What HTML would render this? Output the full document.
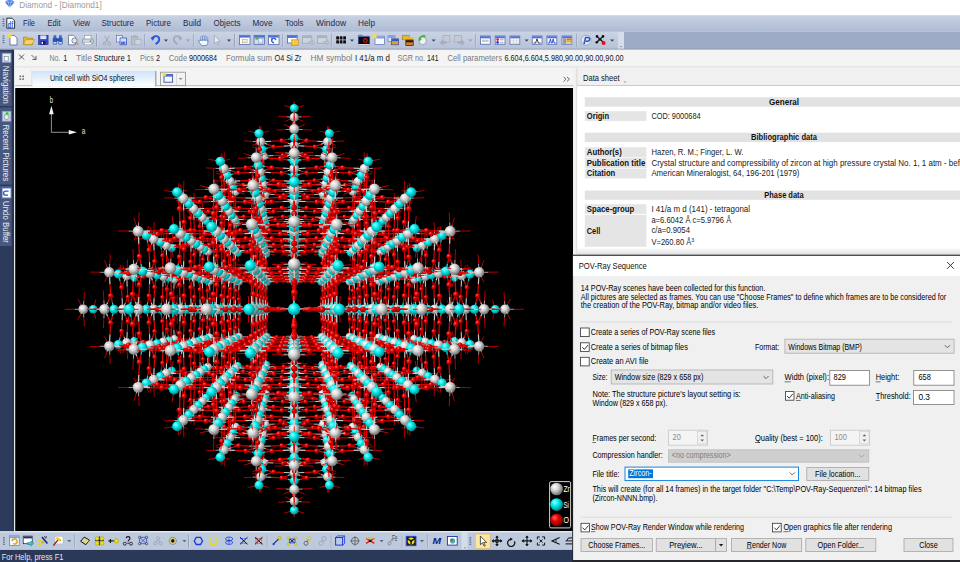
<!DOCTYPE html><html><head><meta charset="utf-8"><title>Diamond - [Diamond1]</title><style>html,body{margin:0;padding:0;background:#fff;overflow:hidden}svg{display:block}text{font-family:"Liberation Sans",sans-serif;font-size:8.7px;white-space:pre}</style></head><body>
<svg width="960" height="562" viewBox="0 0 960 562">
<defs>
<linearGradient id="mb" x1="0" y1="0" x2="0" y2="1"><stop offset="0" stop-color="#c8d2e3"/><stop offset="1" stop-color="#aebbd2"/></linearGradient>
<linearGradient id="tb" x1="0" y1="0" x2="0" y2="1"><stop offset="0" stop-color="#cad3e4"/><stop offset="1" stop-color="#b6c2d8"/></linearGradient>
<linearGradient id="tab" x1="0" y1="0" x2="0" y2="1"><stop offset="0" stop-color="#cfe3fa"/><stop offset="1" stop-color="#fdfeff"/></linearGradient>
<radialGradient id="gZ" cx=".4" cy=".38" r=".62" fx=".34" fy=".3"><stop offset="0" stop-color="#fff"/><stop offset=".45" stop-color="#d6d6d6"/><stop offset="1" stop-color="#6e6e6e"/></radialGradient>
<radialGradient id="gS" cx=".4" cy=".38" r=".62" fx=".34" fy=".3"><stop offset="0" stop-color="#9ff"/><stop offset=".45" stop-color="#0ee"/><stop offset="1" stop-color="#088"/></radialGradient>
<radialGradient id="gO" cx=".4" cy=".38" r=".62" fx=".34" fy=".3"><stop offset="0" stop-color="#f66"/><stop offset=".45" stop-color="#e80000"/><stop offset="1" stop-color="#700"/></radialGradient>
<linearGradient id="shd" x1="0" y1="0" x2="0" y2="1"><stop offset="0" stop-color="#000" stop-opacity="0"/><stop offset="1" stop-color="#000" stop-opacity=".13"/></linearGradient>
<clipPath id="pic"><rect x="15.2" y="88" width="557.8" height="443"/></clipPath>
</defs>
<rect x="0" y="0" width="960" height="562" fill="#fff"/>
<rect x="0" y="15.2" width="960" height="16.6" fill="url(#mb)"/>
<rect x="0" y="31.8" width="960" height="17.4" fill="#9dabc6"/>
<rect x="0" y="31.8" width="618" height="17.4" fill="url(#tb)"/>
<rect x="618" y="31.8" width="6" height="17.2" fill="#d6ddea"/>
<rect x="0" y="48.7" width="960" height="0.8" fill="#8f97a8"/>
<rect x="0" y="49.5" width="960" height="0.8" fill="#b9bcc4"/>
<rect x="0" y="50.2" width="960" height="36" fill="#f0f0f0"/>
<rect x="0" y="49.7" width="14" height="482" fill="#2c3a5c"/>
<rect x="0" y="51.5" width="11.8" height="54.5" fill="#46587f"/>
<rect x="0" y="107.5" width="11.8" height="77" fill="#46587f"/>
<rect x="0" y="186" width="11.8" height="60" fill="#46587f"/>
<rect x="11.8" y="49.7" width="2.2" height="482" fill="#27334f"/>
<rect x="14" y="49.7" width="1.3" height="482" fill="#e4e7ec"/>
<rect x="15.3" y="50.3" width="945" height="16.3" fill="#f4f4f4"/>
<rect x="15" y="66.6" width="945" height="1" fill="#dadada"/>
<rect x="15" y="67.6" width="945" height="0.8" fill="#fafafa"/>
<rect x="15.2" y="88" width="557.8" height="443" fill="#000"/>
<rect x="573" y="68" width="4" height="188" fill="#f0f0f0"/>
<rect x="576.5" y="68.4" width="0.9" height="187" fill="#d4d4d4"/>
<rect x="577.4" y="85.6" width="383" height="170" fill="#fff"/>
<rect x="577" y="85" width="383" height="0.9" fill="#c6c6c6"/>
<rect x="0" y="531.2" width="960" height="1.2" fill="#dfe5ee"/>
<rect x="0" y="532.3" width="960" height="17.6" fill="#bdc9dd"/>
<rect x="461.5" y="532.3" width="6" height="17.6" fill="#d6ddea"/>
<rect x="0" y="549.9" width="960" height="12.5" fill="#2b3959"/>
<g clip-path="url(#pic)" fill="none"><path stroke="#dc0000" stroke-width=".8" d="M294.2 312.8l0 3.9M294.2 305.8l0-3.9"/>
<path stroke="#0dd" stroke-width=".8" d="M294.2 311.7l0 1.1M294.2 306.9l0-1.1"/>
<path stroke="#dc0000" stroke-width=".8" d="M267.8 312.9l.3 3.9M267.8 305.7l.3-3.9M320.6 312.9l-.3 3.9M320.6 305.7l-.3-3.9"/>
<path stroke="#0dd" stroke-width=".9" d="M291.8 309.3l-2.5 0M296.6 309.3l2.5 0"/>
<g fill="url(#gS)"><circle cx="294.2" cy="309.3" r="3.3"/></g>
<path stroke="#e80000" stroke-width=".9" d="M289.4 309.3l-3.6 0M299 309.3l3.6 0M276 309.3l6.8 0M312.4 309.3l-6.8 0"/>
<path stroke="#dc0000" stroke-width=".8" d="M297.8 335.8l4-.1M290.6 335.8l-4-.1M297.8 282.8l4 .1M290.6 282.8l-4 .1M261.5 309.3l-6.9 0M326.9 309.3l6.9 0"/>
<path stroke="#c8c8c8" stroke-width=".8" d="M267.7 311.2l.1 1.7M267.7 307.4l.1-1.7M320.7 311.2l-.1 1.7M320.7 307.4l-.1-1.7M264.1 309.3l-2.7 0M324.3 309.3l2.7 0"/>
<path stroke="#0dd" stroke-width=".8" d="M296.6 335.8l1.2 0M291.8 335.8l-1.2 0M296.6 282.8l1.2 0M291.8 282.8l-1.2 0"/>
<path stroke="#c8c8c8" stroke-width=".9" d="M271.1 309.3l5 0M317.3 309.3l-5 0"/>
<g fill="url(#gO)"><circle cx="284.4" cy="309.3" r="1.9"/><circle cx="304" cy="309.3" r="1.9"/></g>
<path stroke="#c8c8c8" stroke-width=".8" d="M267.5 305.8l0-2.7M267.5 312.8l0 2.7M320.9 305.8l0-2.7M320.9 312.8l0 2.7M238.2 309.3l-1.5 0M242.1 309.3l1.9 0M292.3 363.3l-1.7-.2M296.1 363.3l1.7-.2M292.3 255.3l-1.7 .2M296.1 255.3l1.7 .2M346.3 309.3l-1.9 0M350.2 309.3l1.5 0"/>
<path stroke="#e80000" stroke-width=".9" d="M289.3 309.3l-3.9 0M299.1 309.3l3.9 0M294.2 341l0 3.8M294.2 331.2l0-3.6M294.2 287.4l0 3.6M294.2 277.6l0-3.8"/>
<path stroke="#dc0000" stroke-width=".8" d="M267.5 303.1l-.1-7M267.5 315.5l-.1 7M320.9 303.1l.1-7M320.9 315.5l.1 7M236.8 309.3l-3.5 0M244 309.3l4.5 0M290.6 363.1l-4-.5M297.8 363.1l4-.5M290.6 255.5l-4 .5M297.8 255.5l4 .5M344.4 309.3l-4.5 0M351.6 309.3l3.5 0M267.2 339.9l.2 3.9M267.2 332.7l.2-4.2M267.2 285.9l.2 4.2M267.2 278.7l.2-3.9M321.2 339.9l-.2 3.9M321.2 332.7l-.2-4.2M321.2 285.9l-.2 4.2M321.2 278.7l-.2-3.9"/>
<path stroke="#0dd" stroke-width=".9" d="M294.2 338.5l0 2.6M294.2 333.6l0-2.4M294.2 285l0 2.4M294.2 280.1l0-2.6"/>
<path stroke="#c8c8c8" stroke-width=".9" d="M269.3 309.3l2.9 0M265.5 309.3l-3.3 0M322.9 309.3l3.3 0M319.1 309.3l-2.9 0M292.3 309.3l-3 0M296.1 309.3l3 0"/>
<g fill="url(#gS)"><circle cx="294.2" cy="335.9" r="3.4"/><circle cx="294.2" cy="282.7" r="3.4"/></g>
<g fill="url(#gZ)"><circle cx="267.6" cy="309.3" r="3.7"/><circle cx="320.8" cy="309.3" r="3.7"/></g>
<path stroke="#0dd" stroke-width=".8" d="M267.1 338.8l0 1.1M267.1 333.9l0-1.2M267.1 284.7l0 1.2M267.1 279.8l0-1.1M321.3 338.8l0 1.1M321.3 333.9l0-1.2M321.3 284.7l0 1.2M321.3 279.8l0-1.1"/>
<path stroke="#e80000" stroke-width=".9" d="M294.2 354.9l0-7M294.2 300.7l0-6.8M294.2 317.9l0 6.8M294.2 263.7l0 7M272.2 309.3l3.9 0M262.3 309.3l-4.4 0M326.1 309.3l4.4 0M316.2 309.3l-3.9 0M294.2 341.7l0 3.7M294.2 331.6l0-4.3M294.2 287l0 4.3M294.2 276.9l0-3.7M248.4 309.3l6.8 0M285.6 309.3l-7 0M302.8 309.3l7 0M340 309.3l-6.8 0"/>
<path stroke="#dc0000" stroke-width=".8" d="M240 303l.1-7M240 315.6l.1 7M294.2 369.8l0 6.9M294.2 248.8l0-6.9M348.4 303l-.1-7M348.4 315.6l-.1 7M233.5 309.3l-7.3 0M287.9 363.7l-7.1 .1M300.5 363.7l7.1 .1M287.9 254.9l-7.1-.1M300.5 254.9l7.1-.1M354.9 309.3l7.3 0M239.4 340.4l.6 3.8M239.4 333l.6-4.4M239.4 285.6l.6 4.4M239.4 278.2l.6-3.8M294.2 395.3l0 3.3M294.2 387.9l0-4.9M294.2 230.7l0 4.9M294.2 223.3l0-3.3M349 340.4l-.6 3.8M349 333l-.6-4.4M349 285.6l-.6 4.4M349 278.2l-.6-3.8"/>
<path stroke="#c8c8c8" stroke-width=".9" d="M294.2 360l0-5.1M294.2 305.8l0-5M294.2 312.8l0 5M294.2 258.6l0 5.1M243.4 309.3l5 0M290.7 309.3l-5.1 0M297.7 309.3l5.1 0M345 309.3l-5 0"/>
<path stroke="#c8c8c8" stroke-width=".8" d="M240 305.8l0-2.7M240 312.8l0 2.7M294.2 367.1l0 2.7M294.2 251.5l0-2.7M348.4 305.8l0-2.7M348.4 312.8l0 2.7M236.3 309.3l-2.8 0M290.7 363.6l-2.8 0M297.7 363.6l2.8 0M290.7 255l-2.8 0M297.7 255l2.8 0M352.1 309.3l2.8 0"/>
<path stroke="#0dd" stroke-width=".9" d="M264.5 336.5l-2.6 .1M269.4 336.5l2.5 .1M264.5 282.1l-2.6-.1M269.4 282.1l2.5-.1M319 336.5l-2.5 .1M323.9 336.5l2.6 .1M319 282.1l-2.5-.1M323.9 282.1l2.6-.1"/>
<g fill="url(#gO)"><circle cx="294.2" cy="346.2" r="1.9"/><circle cx="294.2" cy="292.2" r="1.9"/><circle cx="294.2" cy="326.4" r="1.9"/><circle cx="294.2" cy="272.4" r="1.9"/><circle cx="277" cy="309.3" r="1.9"/><circle cx="331.5" cy="309.3" r="1.9"/><circle cx="256.9" cy="309.3" r="1.9"/><circle cx="311.4" cy="309.3" r="1.9"/></g>
<g fill="url(#gS)"><circle cx="267.1" cy="336.4" r="3.5"/><circle cx="267.1" cy="282.2" r="3.5"/><circle cx="321.3" cy="336.4" r="3.5"/><circle cx="321.3" cy="282.2" r="3.5"/></g>
<g fill="url(#gZ)"><circle cx="239.9" cy="309.3" r="3.8"/><circle cx="294.2" cy="363.6" r="3.8"/><circle cx="294.2" cy="309.3" r="3.8"/><circle cx="294.2" cy="255" r="3.8"/><circle cx="348.5" cy="309.3" r="3.8"/></g>
<path stroke="#c8c8c8" stroke-width=".9" d="M239.7 311.2l-.4 3.1M239.7 307.4l-.4-3.1M294.2 365.8l0 3.5M294.2 361.9l0-2.7M294.2 311.2l0 3.1M294.2 307.4l0-3.1M294.2 256.7l0 2.7M294.2 252.8l0-3.5M348.7 311.2l.4 3.1M348.7 307.4l.4-3.1M294.2 338.8l0 2.9M294.2 334.9l0-3.3M294.2 283.7l0 3.3M294.2 279.8l0-2.9M242.5 336.9l5.2 0M242.5 281.7l5.2 0M297.8 336.9l5.1 0M290.6 336.9l-5.1 0M297.8 281.7l5.1 0M290.6 281.7l-5.1 0M345.9 336.9l-5.2 0M345.9 281.7l-5.2 0"/>
<path stroke="#e80000" stroke-width=".9" d="M261.8 336.6l-3.9 .1M271.9 336.6l3.6 .1M261.8 282l-3.9-.1M271.9 282l3.6-.1M316.5 336.6l-3.6 .1M326.6 336.6l3.9 .1M316.5 282l-3.6-.1M326.6 282l3.9-.1M271.8 309.3l3.9 0M261.7 309.3l-3.6 0M326.7 309.3l3.6 0M316.6 309.3l-3.9 0M247.7 336.9l7.1-.1M247.7 281.7l7.1 .1M302.9 336.9l7-.1M285.5 336.9l-7-.1M302.9 281.7l7 .1M285.5 281.7l-7 .1M340.7 336.9l-7.1-.1M340.7 281.7l-7.1 .1M239.2 314.4l-.6 4.2M239.2 304.2l-.6-4.2M294.2 369.3l0 4.8M294.2 359.2l0-3.7M294.2 314.4l0 4.2M294.2 304.2l0-4.2M294.2 259.4l0 3.7M294.2 249.3l0-4.8M349.2 314.4l.6 4.2M349.2 304.2l.6-4.2"/>
<path stroke="#dc0000" stroke-width=".8" d="M207.9 309.3l-3.7 0M270.4 364.4l4.3-.3M263 364.4l-4-.3M270.4 254.2l4.3 .3M263 254.2l-4 .3M325.4 364.4l4-.3M318 364.4l-4.3-.3M325.4 254.2l4 .3M318 254.2l-4.3 .3M373.1 309.3l-4.6 0M215.3 309.3l4.6 0M380.5 309.3l3.7 0M232.6 336.9l-7.1-.1M232.6 281.7l-7.1 .1M300.6 392.1l7.2-.2M287.8 392.1l-7.2-.2M300.6 226.5l7.2 .2M287.8 226.5l-7.2 .2M355.8 336.9l7.1-.1M355.8 281.7l7.1 .1"/>
<path stroke="#c8c8c8" stroke-width=".8" d="M239.1 338.8l.2 1.6M239.1 334.9l.2-1.9M239.1 283.7l.2 1.9M239.1 279.8l.2-1.6M294.2 393.9l0 1.4M294.2 389.9l0-2.1M294.2 228.7l0 2.1M294.2 224.7l0-1.4M349.3 338.8l-.2 1.6M349.3 334.9l-.2-1.9M349.3 283.7l-.2 1.9M349.3 279.8l-.2-1.6M235.3 336.9l-2.7 0M235.3 281.7l-2.7 0M297.8 392.2l2.8-.1M290.6 392.2l-2.8-.1M297.8 226.4l2.8 .1M290.6 226.4l-2.8 .1M353.1 336.9l2.7 0M353.1 281.7l2.7 0"/>
<path stroke="#0dd" stroke-width=".9" d="M269.1 309.3l2.6 0M264.1 309.3l-2.4 0M324.3 309.3l2.4 0M319.3 309.3l-2.6 0"/>
<path stroke="#0dd" stroke-width=".8" d="M214 309.3l1.3 0M209 309.3l-1.1 0M269.1 364.4l1.2-.1M264.1 364.4l-1.2-.1M269.1 254.2l1.2 .1M264.1 254.2l-1.2 .1M324.3 364.4l1.2-.1M319.3 364.4l-1.2-.1M324.3 254.2l1.2 .1M319.3 254.2l-1.2 .1M379.4 309.3l1.1 0M374.4 309.3l-1.3 0"/>
<g fill="url(#gO)"><circle cx="256.6" cy="336.8" r="1.9"/><circle cx="256.6" cy="281.8" r="1.9"/><circle cx="311.6" cy="336.8" r="1.9"/><circle cx="311.6" cy="281.8" r="1.9"/><circle cx="276.8" cy="336.8" r="1.9"/><circle cx="276.8" cy="281.8" r="1.9"/><circle cx="331.8" cy="336.8" r="1.9"/><circle cx="331.8" cy="281.8" r="1.9"/></g>
<path stroke="#c8c8c8" stroke-width=".8" d="M238.8 340.6l0 2.8M238.8 278l0-2.8M294.2 396l0 2.9M294.2 222.6l0-2.9M349.6 340.6l0 2.8M349.6 278l0-2.8"/>
<path stroke="#e80000" stroke-width=".9" d="M261.2 337.2l-3.8-.3M271.5 337.2l4.4-.3M261.2 281.4l-3.8 .3M271.5 281.4l4.4 .3M316.9 337.2l-4.4-.3M327.2 337.2l3.8-.3M316.9 281.4l-4.4 .3M327.2 281.4l3.8 .3M238.7 328.3l-.1-7M238.7 290.3l-.1 7M294.2 383.8l0-6.9M294.2 328.3l0-7M294.2 345.8l0 7.1M294.2 272.8l0-7.1M294.2 290.3l0 7M294.2 234.8l0 6.9M349.7 328.3l.1-7M349.7 290.3l.1 7M210.6 314.4l-.4 3.9M210.6 304.2l-.4-3.9M266.3 370.1l-.1 4.2M266.3 359.9l-.1-3.6M266.3 314.4l-.1 3.9M266.3 304.2l-.1-3.9M266.3 258.7l-.1 3.6M266.3 248.5l-.1-4.2M322.1 370.1l.1 4.2M322.1 359.9l.1-3.6M322.1 314.4l.1 3.9M322.1 304.2l.1-3.9M322.1 258.7l.1 3.6M322.1 248.5l.1-4.2M377.8 314.4l.4 3.9M377.8 304.2l.4-3.9M238.2 314.5l.3 3.8M238.2 304.1l.3-3.8M294.2 370.5l0 3.5M294.2 360.2l0-4.1M294.2 314.5l0 3.8M294.2 304.1l0-3.8M294.2 258.4l0 4.1M294.2 248.1l0-3.5M350.2 314.5l-.3 3.8M350.2 304.1l-.3-3.8"/>
<path stroke="#c8c8c8" stroke-width=".9" d="M238.8 333.4l-.1-5.1M238.8 285.2l-.1 5.1M294.2 388.8l0-5M294.2 333.4l0-5.1M294.2 340.6l0 5.2M294.2 278l0-5.2M294.2 285.2l0 5.1M294.2 229.8l0 5M349.6 333.4l.1-5.1M349.6 285.2l.1 5.1M240.6 337.1l2.7 .2M236.6 337.1l-3.6 .2M240.6 281.5l2.7-.2M236.6 281.5l-3.6-.2M296.2 392.7l3.2 .6M292.2 392.7l-3.2 .6M296.2 337.1l3.2 .2M292.2 337.1l-3.2 .2M296.2 281.5l3.2-.2M292.2 281.5l-3.2-.2M296.2 225.9l3.2-.6M292.2 225.9l-3.2-.6M351.8 337.1l3.6 .2M347.8 337.1l-2.7 .2M351.8 281.5l3.6-.2M347.8 281.5l-2.7-.2M264.1 337.4l-2.9-.2M268.1 337.4l3.3-.2M264.1 281.2l-2.9 .2M268.1 281.2l3.3 .2M320.3 337.4l-3.3-.2M324.3 337.4l2.9-.2M320.3 281.2l-3.3 .2M324.3 281.2l2.9 .2"/>
<path stroke="#dc0000" stroke-width=".8" d="M238.8 343.4l-.1 7.3M238.8 275.2l-.1-7.3M294.2 398.9l0 7.5M294.2 219.7l0-7.5M349.6 343.4l.1 7.3M349.6 275.2l.1-7.3M206.6 337.3l-3.3-.3M214.1 337.3l5-.3M206.6 281.3l-3.3 .3M214.1 281.3l5 .3M262.5 393.2l-3.9-.9M270 393.2l4.5-.9M262.5 225.4l-3.9 .9M270 225.4l4.5 .9M318.4 393.2l-4.5-.9M325.9 393.2l3.9-.9M318.4 225.4l-4.5 .9M325.9 225.4l3.9 .9M374.3 337.3l-5-.3M381.8 337.3l3.3-.3M374.3 281.3l-5 .3M381.8 281.3l3.3 .3M238.1 369.2l.3 3.9M238.1 361.6l.3-4.5M238.1 257l.3 4.5M238.1 249.4l.3-3.9M294.2 425.4l0 3.6M294.2 417.8l0-4.9M294.2 200.8l0 4.9M294.2 193.2l0-3.6M350.3 369.2l-.3 3.9M350.3 361.6l-.3-4.5M350.3 257l-.3 4.5M350.3 249.4l-.3-3.9"/>
<path stroke="#0dd" stroke-width=".9" d="M210.9 311.8l-.3 2.6M210.9 306.8l-.3-2.6M266.4 367.4l-.1 2.8M266.4 362.3l-.1-2.4M266.4 311.8l-.1 2.6M266.4 306.8l-.1-2.6M266.4 256.3l-.1 2.4M266.4 251.2l-.1-2.8M322 367.4l.1 2.8M322 362.3l.1-2.4M322 311.8l.1 2.6M322 306.8l.1-2.6M322 256.3l.1 2.4M322 251.2l.1-2.8M377.5 311.8l.3 2.6M377.5 306.8l.3-2.6"/>
<g fill="url(#gO)"><circle cx="238.6" cy="319.5" r="1.9"/><circle cx="294.2" cy="375.2" r="1.9"/><circle cx="294.2" cy="319.5" r="1.9"/><circle cx="294.2" cy="263.9" r="1.9"/><circle cx="349.8" cy="319.5" r="1.9"/><circle cx="238.6" cy="299.1" r="1.9"/><circle cx="294.2" cy="354.7" r="1.9"/><circle cx="294.2" cy="299.1" r="1.9"/><circle cx="294.2" cy="243.4" r="1.9"/><circle cx="349.8" cy="299.1" r="1.9"/></g>
<g fill="url(#gS)"><circle cx="211.2" cy="309.3" r="3.5"/><circle cx="266.5" cy="364.6" r="3.5"/><circle cx="266.5" cy="309.3" r="3.5"/><circle cx="266.5" cy="254" r="3.5"/><circle cx="321.9" cy="364.6" r="3.5"/><circle cx="321.9" cy="309.3" r="3.5"/><circle cx="321.9" cy="254" r="3.5"/><circle cx="377.2" cy="309.3" r="3.5"/></g>
<g fill="url(#gZ)"><circle cx="238.9" cy="337" r="3.9"/><circle cx="238.9" cy="281.6" r="3.9"/><circle cx="294.2" cy="392.3" r="3.9"/><circle cx="294.2" cy="337" r="3.9"/><circle cx="294.2" cy="281.6" r="3.9"/><circle cx="294.2" cy="226.3" r="3.9"/><circle cx="349.5" cy="337" r="3.9"/><circle cx="349.5" cy="281.6" r="3.9"/></g>
<path stroke="#c8c8c8" stroke-width=".8" d="M208 337.4l-1.4-.1M212 337.4l2.1-.1M208 281.2l-1.4 .1M212 281.2l2.1 .1M264.1 393.5l-1.6-.4M268.1 393.5l1.9-.4M264.1 225.1l-1.6 .4M268.1 225.1l1.9 .4M320.3 393.5l-1.9-.4M324.3 393.5l1.6-.4M320.3 225.1l-1.9 .4M324.3 225.1l1.6 .4M376.4 337.4l-2.1-.1M380.4 337.4l1.4-.1M376.4 281.2l-2.1 .1M380.4 281.2l1.4 .1M209.7 341.2l.1 2.8M209.7 277.4l.1-2.8M266 397.5l0 2.8M266 221.1l0-2.8M322.4 397.5l0 2.8M322.4 221.1l0-2.8M378.7 341.2l-.1 2.8M378.7 277.4l-.1-2.8M205.8 337.5l-2.9 0M205.8 281.1l-2.9 0M262.3 394l-2.9 .1M262.3 224.6l-2.9-.1M326.1 394l2.9 .1M326.1 224.6l2.9-.1M382.6 337.5l2.9 0M382.6 281.1l2.9 0"/>
<path stroke="#0dd" stroke-width=".9" d="M238 311.9l.2 2.6M238 306.7l.2-2.6M294.2 368.1l0 2.4M294.2 363l0-2.8M294.2 311.9l0 2.6M294.2 306.7l0-2.6M294.2 255.6l0 2.8M294.2 250.5l0-2.4M350.4 311.9l-.2 2.6M350.4 306.7l-.2-2.6M235 365.9l-2.9 .2M240.2 365.9l2.4 .2M235 309.3l-2.9 0M240.2 309.3l2.4 0M235 252.7l-2.9-.2M240.2 252.7l2.4-.2M291.6 422.6l-2.7 .4M296.8 422.6l2.7 .4M291.6 365.9l-2.7 .2M296.8 365.9l2.7 .2M291.6 309.3l-2.7 0M296.8 309.3l2.7 0M291.6 252.7l-2.7-.2M296.8 252.7l2.7-.2M291.6 196l-2.7-.4M296.8 196l2.7-.4M348.2 365.9l-2.4 .2M353.4 365.9l2.9 .2M348.2 309.3l-2.4 0M353.4 309.3l2.9 0M348.2 252.7l-2.4-.2M353.4 252.7l2.9-.2"/>
<path stroke="#0dd" stroke-width=".8" d="M238 368.1l.1 1.1M238 363l.1-1.3M238 255.6l.1 1.3M238 250.5l.1-1.1M294.2 424.3l0 1M294.2 419.2l0-1.4M294.2 199.4l0 1.4M294.2 194.3l0-1M350.4 368.1l-.1 1.1M350.4 363l-.1-1.3M350.4 255.6l-.1 1.3M350.4 250.5l-.1-1.1"/>
<path stroke="#e80000" stroke-width=".9" d="M209.8 328.5l.2-7.2M209.8 290.1l.2 7.2M266.1 384.8l.1-7.3M266.1 328.5l.1-7.2M266.1 346.3l.1 7.1M266.1 272.3l.1-7.1M266.1 290.1l.1 7.2M266.1 233.8l.1 7.3M322.3 384.8l-.1-7.3M322.3 328.5l-.1-7.2M322.3 346.3l-.1 7.1M322.3 272.3l-.1-7.1M322.3 290.1l-.1 7.2M322.3 233.8l-.1 7.3M378.6 328.5l-.2-7.2M378.6 290.1l-.2 7.2M243.3 337.3l3.7 .3M233 337.3l-4.9 .3M243.3 281.3l3.7-.3M233 281.3l-4.9-.3M299.4 393.3l4.3 .9M289 393.3l-4.3 .9M299.4 337.3l4.3 .3M289 337.3l-4.3 .3M299.4 281.3l4.3-.3M289 281.3l-4.3-.3M299.4 225.3l4.3-.9M289 225.3l-4.3-.9M355.4 337.3l4.9 .3M345.1 337.3l-3.7 .3M355.4 281.3l4.9-.3M345.1 281.3l-3.7-.3M209 314.5l.9 4.2M209 304.1l.9-4.2M265.8 371.4l.3 3.6M265.8 360.9l.3-4.8M265.8 314.5l.3 4.2M265.8 304.1l.3-4.2M265.8 257.7l.3 4.8M265.8 247.2l.3-3.6M322.6 371.4l-.3 3.6M322.6 360.9l-.3-4.8M322.6 314.5l-.3 4.2M322.6 304.1l-.3-4.2M322.6 257.7l-.3 4.8M322.6 247.2l-.3-3.6M379.4 314.5l-.9 4.2M379.4 304.1l-.9-4.2M218.3 337.6l7 .1M218.3 281l7-.1M274.8 394.2l7.2 .2M257 337.6l-7.3 .1M274.8 337.6l7.2 .1M257 281l-7.3-.1M274.8 281l7.2-.1M274.8 224.4l7.2-.2M313.6 394.2l-7.2 .2M313.6 337.6l-7.2 .1M331.4 337.6l7.3 .1M313.6 281l-7.2-.1M331.4 281l7.3-.1M313.6 224.4l-7.2-.2M370.1 337.6l-7 .1M370.1 281l-7-.1"/>
<path stroke="#dc0000" stroke-width=".8" d="M209.7 344l.2 7.3M209.7 274.6l.2-7.3M266 400.3l.1 7.1M266 218.3l.1-7.1M322.4 400.3l-.1 7.1M322.4 218.3l-.1-7.1M378.7 344l-.2 7.3M378.7 274.6l-.2-7.3M202.8 337.6l-7.6 .1M202.8 281l-7.6-.1M259.4 394.1l-7.5 .2M259.4 224.5l-7.5-.2M329 394.1l7.5 .2M329 224.5l7.5-.2M385.6 337.6l7.6 .1M385.6 281l7.6-.1M208.7 370.2l.9 3.7M208.7 362.5l.9-4.8M208.7 256.1l.9 4.8M208.7 248.4l.9-3.7M265.7 427.2l.3 3.1M265.7 419.5l.3-5.4M265.7 199.1l.3 5.4M265.7 191.4l.3-3.1M322.7 427.2l-.3 3.1M322.7 419.5l-.3-5.4M322.7 199.1l-.3 5.4M322.7 191.4l-.3-3.1M379.7 370.2l-.9 3.7M379.7 362.5l-.9-4.8M379.7 256.1l-.9 4.8M379.7 248.4l-.9-3.7"/>
<path stroke="#c8c8c8" stroke-width=".9" d="M209.7 333.8l.1-5.3M209.7 284.8l.1 5.3M266 390.2l0-5.4M266 333.8l0-5.3M266 341.2l0 5.2M266 277.4l0-5.2M266 284.8l0 5.3M266 228.4l0 5.4M322.4 390.2l0-5.4M322.4 333.8l0-5.3M322.4 341.2l0 5.2M322.4 277.4l0-5.2M322.4 284.8l0 5.3M322.4 228.4l0 5.4M378.7 333.8l-.1-5.3M378.7 284.8l-.1 5.3M213.1 337.5l5.1 0M213.1 281.1l5.1 0M269.6 394l5.2 .1M262.3 337.5l-5.3 0M269.6 337.5l5.2 0M262.3 281.1l-5.3 0M269.6 281.1l5.2 0M269.6 224.6l5.2-.1M318.8 394l-5.2 .1M318.8 337.5l-5.2 0M326.1 337.5l5.3 0M318.8 281.1l-5.2 0M326.1 281.1l5.3 0M318.8 224.6l-5.2-.1M375.3 337.5l-5.1 0M375.3 281.1l-5.1 0"/>
<g fill="url(#gO)"><circle cx="210" cy="319.6" r="2"/><circle cx="266.1" cy="375.7" r="2"/><circle cx="266.1" cy="319.6" r="2"/><circle cx="266.1" cy="263.5" r="2"/><circle cx="322.3" cy="375.7" r="2"/><circle cx="322.3" cy="319.6" r="2"/><circle cx="322.3" cy="263.5" r="2"/><circle cx="378.4" cy="319.6" r="2"/><circle cx="210" cy="299" r="2"/><circle cx="266.1" cy="355.1" r="2"/><circle cx="266.1" cy="299" r="2"/><circle cx="266.1" cy="242.9" r="2"/><circle cx="322.3" cy="355.1" r="2"/><circle cx="322.3" cy="299" r="2"/><circle cx="322.3" cy="242.9" r="2"/><circle cx="378.4" cy="299" r="2"/><circle cx="247.9" cy="337.7" r="2"/><circle cx="247.9" cy="280.9" r="2"/><circle cx="304.6" cy="394.4" r="2"/><circle cx="304.6" cy="337.7" r="2"/><circle cx="304.6" cy="280.9" r="2"/><circle cx="304.6" cy="224.2" r="2"/><circle cx="361.4" cy="337.7" r="2"/><circle cx="361.4" cy="280.9" r="2"/><circle cx="227" cy="337.7" r="2"/><circle cx="227" cy="280.9" r="2"/><circle cx="283.8" cy="394.4" r="2"/><circle cx="283.8" cy="337.7" r="2"/><circle cx="283.8" cy="280.9" r="2"/><circle cx="283.8" cy="224.2" r="2"/><circle cx="340.5" cy="337.7" r="2"/><circle cx="340.5" cy="280.9" r="2"/></g>
<g fill="url(#gS)"><circle cx="237.8" cy="365.7" r="3.6"/><circle cx="237.8" cy="309.3" r="3.6"/><circle cx="237.8" cy="252.9" r="3.6"/><circle cx="294.2" cy="422.2" r="3.6"/><circle cx="294.2" cy="365.7" r="3.6"/><circle cx="294.2" cy="309.3" r="3.6"/><circle cx="294.2" cy="252.9" r="3.6"/><circle cx="294.2" cy="196.4" r="3.6"/><circle cx="350.6" cy="365.7" r="3.6"/><circle cx="350.6" cy="309.3" r="3.6"/><circle cx="350.6" cy="252.9" r="3.6"/></g>
<g fill="url(#gZ)"><circle cx="209.6" cy="337.5" r="3.9"/><circle cx="209.6" cy="281.1" r="3.9"/><circle cx="266" cy="393.9" r="3.9"/><circle cx="266" cy="337.5" r="3.9"/><circle cx="266" cy="281.1" r="3.9"/><circle cx="266" cy="224.7" r="3.9"/><circle cx="322.4" cy="393.9" r="3.9"/><circle cx="322.4" cy="337.5" r="3.9"/><circle cx="322.4" cy="281.1" r="3.9"/><circle cx="322.4" cy="224.7" r="3.9"/><circle cx="378.8" cy="337.5" r="3.9"/><circle cx="378.8" cy="281.1" r="3.9"/></g>
<path stroke="#c8c8c8" stroke-width=".9" d="M209.1 339.7l-.7 3.5M209.1 335.6l-.7-3M209.1 283l-.7 3M209.1 278.9l-.7-3.5M265.8 396.4l-.2 3.9M265.8 392.3l-.2-2.6M265.8 339.7l-.2 3.5M265.8 335.6l-.2-3M265.8 283l-.2 3M265.8 278.9l-.2-3.5M265.8 226.3l-.2 2.6M265.8 222.2l-.2-3.9M322.6 396.4l.2 3.9M322.6 392.3l.2-2.6M322.6 339.7l.2 3.5M322.6 335.6l.2-3M322.6 283l.2 3M322.6 278.9l.2-3.5M322.6 226.3l.2 2.6M322.6 222.2l.2-3.9M379.3 339.7l.7 3.5M379.3 335.6l.7-3M379.3 283l.7 3M379.3 278.9l.7-3.5M208.3 311.3l.7 3.2M208.3 307.3l.7-3.2M265.6 368.6l.2 2.7M265.6 364.5l.2-3.6M265.6 311.3l.2 3.2M265.6 307.3l.2-3.2M265.6 254.1l.2 3.6M265.6 250l.2-2.7M322.8 368.6l-.2 2.7M322.8 364.5l-.2-3.6M322.8 311.3l-.2 3.2M322.8 307.3l-.2-3.2M322.8 254.1l-.2 3.6M322.8 250l-.2-2.7M380.1 311.3l-.7 3.2M380.1 307.3l-.7-3.2M211.7 366.8l5.5-.1M211.7 309.3l5.5 0M211.7 251.8l5.5 .1M269.2 424.3l5.4-.2M269.2 366.8l5.4-.1M261.7 366.8l-5.3-.1M269.2 309.3l5.4 0M261.7 309.3l-5.3 0M269.2 251.8l5.4 .1M261.7 251.8l-5.3 .1M269.2 194.3l5.4 .2M319.2 424.3l-5.4-.2M326.7 366.8l5.3-.1M319.2 366.8l-5.4-.1M326.7 309.3l5.3 0M319.2 309.3l-5.4 0M326.7 251.8l5.3 .1M319.2 251.8l-5.4 .1M319.2 194.3l-5.4 .2M376.7 366.8l-5.5-.1M376.7 309.3l-5.5 0M376.7 251.8l-5.5 .1"/>
<path stroke="#e80000" stroke-width=".9" d="M232.1 366.1l-4.2 .3M242.6 366.1l3.6 .3M232.1 309.3l-4.2 0M242.6 309.3l3.6 0M232.1 252.5l-4.2-.3M242.6 252.5l3.6-.3M289 423l-3.9 .6M299.4 423l3.9 .6M289 366.1l-3.9 .3M299.4 366.1l3.9 .3M289 309.3l-3.9 0M299.4 309.3l3.9 0M289 252.5l-3.9-.3M299.4 252.5l3.9-.3M289 195.6l-3.9-.6M299.4 195.6l3.9-.6M345.8 366.1l-3.6 .3M356.3 366.1l4.2 .3M345.8 309.3l-3.6 0M356.3 309.3l4.2 0M345.8 252.5l-3.6-.3M356.3 252.5l4.2-.3M242.3 337.9l4.2-.2M231.8 337.9l-3.6-.2M242.3 280.7l4.2 .2M231.8 280.7l-3.6 .2M299.5 395l3.9-.5M288.9 395l-3.9-.5M299.5 337.9l3.9-.2M288.9 337.9l-3.9-.2M299.5 280.7l3.9 .2M288.9 280.7l-3.9 .2M299.5 223.6l3.9 .5M288.9 223.6l-3.9 .5M356.6 337.9l3.6-.2M346.1 337.9l-4.2-.2M356.6 280.7l3.6 .2M346.1 280.7l-4.2 .2M217.2 366.7l7.5-.1M217.2 309.3l7.5 0M217.2 251.9l7.5 .1M274.6 424.1l7.3-.3M274.6 366.7l7.3-.1M256.4 366.7l-7.2-.1M274.6 309.3l7.3 0M256.4 309.3l-7.2 0M274.6 251.9l7.3 .1M256.4 251.9l-7.2 .1M274.6 194.5l7.3 .3M313.8 424.1l-7.3-.3M332 366.7l7.2-.1M313.8 366.7l-7.3-.1M332 309.3l7.2 0M313.8 309.3l-7.3 0M332 251.9l7.2 .1M313.8 251.9l-7.3 .1M313.8 194.5l-7.3 .3M371.2 366.7l-7.5-.1M371.2 309.3l-7.5 0M371.2 251.9l-7.5 .1M208.5 343.1l-.9 4.7M208.5 332.6l-.9-4.1M208.5 286l-.9 4.1M208.5 275.5l-.9-4.7M265.6 400.3l-.3 5.3M265.6 389.8l-.3-3.5M265.6 343.1l-.3 4.7M265.6 332.6l-.3-4.1M265.6 286l-.3 4.1M265.6 275.5l-.3-4.7M265.6 228.8l-.3 3.5M265.6 218.3l-.3-5.3M322.8 400.3l.3 5.3M322.8 389.8l.3-3.5M322.8 343.1l.3 4.7M322.8 332.6l.3-4.1M322.8 286l.3 4.1M322.8 275.5l.3-4.7M322.8 228.8l.3 3.5M322.8 218.3l.3-5.3M379.9 343.1l.9 4.7M379.9 332.6l.9-4.1M379.9 286l.9 4.1M379.9 275.5l.9-4.7"/>
<path stroke="#dc0000" stroke-width=".8" d="M240.8 395.2l4.6-.5M233.1 395.2l-4-.5M240.8 223.4l4.6 .5M233.1 223.4l-4 .5M355.3 395.2l4-.5M347.6 395.2l-4.6-.5M355.3 223.4l4 .5M347.6 223.4l-4.6 .5M201.4 366.7l-7.3-.1M201.4 309.3l-7.3 0M201.4 251.9l-7.3 .1M258.8 424.2l-7.4-.3M258.8 194.4l-7.4 .3M329.6 424.2l7.4-.3M329.6 194.4l7.4 .3M387 366.7l7.3-.1M387 309.3l7.3 0M387 251.9l7.3 .1"/>
<path stroke="#c8c8c8" stroke-width=".8" d="M208.3 368.6l.4 1.6M208.3 364.5l.4-2.1M208.3 254.1l.4 2.1M208.3 250l.4-1.6M265.6 425.9l.1 1.3M265.6 421.8l.1-2.3M265.6 196.8l.1 2.3M265.6 192.7l.1-1.3M322.8 425.9l-.1 1.3M322.8 421.8l-.1-2.3M322.8 196.8l-.1 2.3M322.8 192.7l-.1-1.3M380.1 368.6l-.4 1.6M380.1 364.5l-.4-2.1M380.1 254.1l-.4 2.1M380.1 250l-.4-1.6M204.2 366.8l-2.8-.1M204.2 309.3l-2.8 0M204.2 251.8l-2.8 .1M261.7 424.3l-2.9-.1M261.7 194.3l-2.9 .1M326.7 424.3l2.9-.1M326.7 194.3l2.9 .1M384.2 366.8l2.8-.1M384.2 309.3l2.8 0M384.2 251.8l2.8 .1"/>
<path stroke="#0dd" stroke-width=".9" d="M239.5 338l2.9-.1M234.2 338l-2.4-.1M239.5 280.6l2.9 .1M234.2 280.6l-2.4 .1M296.8 395.3l2.6-.3M291.6 395.3l-2.6-.3M296.8 338l2.6-.1M291.6 338l-2.6-.1M296.8 280.6l2.6 .1M291.6 280.6l-2.6 .1M296.8 223.3l2.6 .3M291.6 223.3l-2.6 .3M354.2 338l2.4-.1M348.9 338l-2.9-.1M354.2 280.6l2.4 .1M348.9 280.6l-2.9 .1"/>
<path stroke="#0dd" stroke-width=".8" d="M239.5 395.3l1.3-.1M234.2 395.3l-1.2-.1M239.5 223.3l1.3 .1M234.2 223.3l-1.2 .1M354.2 395.3l1.2-.1M348.9 395.3l-1.3-.1M354.2 223.3l1.2 .1M348.9 223.3l-1.3 .1"/>
<g fill="url(#gO)"><circle cx="226.4" cy="366.5" r="2"/><circle cx="226.4" cy="309.3" r="2"/><circle cx="226.4" cy="252.1" r="2"/><circle cx="283.7" cy="423.8" r="2"/><circle cx="283.7" cy="366.5" r="2"/><circle cx="283.7" cy="309.3" r="2"/><circle cx="283.7" cy="252.1" r="2"/><circle cx="283.7" cy="194.8" r="2"/><circle cx="340.9" cy="366.5" r="2"/><circle cx="340.9" cy="309.3" r="2"/><circle cx="340.9" cy="252.1" r="2"/><circle cx="247.5" cy="366.5" r="2"/><circle cx="247.5" cy="309.3" r="2"/><circle cx="247.5" cy="252.1" r="2"/><circle cx="304.7" cy="423.8" r="2"/><circle cx="304.7" cy="366.5" r="2"/><circle cx="304.7" cy="309.3" r="2"/><circle cx="304.7" cy="252.1" r="2"/><circle cx="304.7" cy="194.8" r="2"/><circle cx="362" cy="366.5" r="2"/><circle cx="362" cy="309.3" r="2"/><circle cx="362" cy="252.1" r="2"/></g>
<path stroke="#c8c8c8" stroke-width=".8" d="M207.8 370.7l-.1 3M207.8 247.9l-.1-3M265.4 428.3l0 3M265.4 190.3l0-3M323 428.3l0 3M323 190.3l0-3M380.6 370.7l.1 3M380.6 247.9l.1-3M205.4 367.2l-2.2 .3M205.4 251.4l-2.2-.3M383 367.2l2.2 .3M383 251.4l2.2-.3"/>
<path stroke="#e80000" stroke-width="1" d="M230.9 367.3l-3.6-.6M241.6 367.3l4.9-.6M230.9 309.3l-3.6 0M241.6 309.3l4.9 0M230.9 251.3l-3.6 .6M241.6 251.3l4.9 .6M288.9 425.3l-4.3-1.2M299.5 425.3l4.3-1.2M288.9 367.3l-4.3-.6M299.5 367.3l4.3-.6M288.9 309.3l-4.3 0M299.5 309.3l4.3 0M288.9 251.3l-4.3 .6M299.5 251.3l4.3 .6M288.9 193.3l-4.3 1.2M299.5 193.3l4.3 1.2M346.8 367.3l-4.9-.6M357.5 367.3l3.6-.6M346.8 309.3l-4.9 0M357.5 309.3l3.6 0M346.8 251.3l-4.9 .6M357.5 251.3l3.6 .6M207.6 357.9l-.2-7.2M207.6 300.2l-.2-7.4M207.6 318.4l-.2 7.4M207.6 260.7l-.2 7.2M265.3 415.6l-.1-7.1M265.3 357.9l-.1-7.2M265.3 376.1l-.1 7.5M265.3 300.2l-.1-7.4M265.3 318.4l-.1 7.4M265.3 242.5l-.1-7.5M265.3 260.7l-.1 7.2M265.3 203l-.1 7.1M323.1 415.6l.1-7.1M323.1 357.9l.1-7.2M323.1 376.1l.1 7.5M323.1 300.2l.1-7.4M323.1 318.4l.1 7.4M323.1 242.5l.1-7.5M323.1 260.7l.1 7.2M323.1 203l.1 7.1M380.8 357.9l.2-7.2M380.8 300.2l.2-7.4M380.8 318.4l.2 7.4M380.8 260.7l.2 7.2M236.2 401.6l-.3 4.5M236.2 390.9l-.3-3.5M236.2 343.6l-.3 4.2M236.2 333l-.3-3.9M236.2 285.6l-.3 3.9M236.2 275l-.3-4.2M236.2 227.7l-.3 3.5M236.2 217l-.3-4.5M294.2 401.6l0 4.5M294.2 390.9l0-3.5M294.2 343.6l0 4.2M294.2 333l0-3.9M294.2 285.6l0 3.9M294.2 275l0-4.2M294.2 227.7l0 3.5M294.2 217l0-4.5M352.2 401.6l.3 4.5M352.2 390.9l.3-3.5M352.2 343.6l.3 4.2M352.2 333l.3-3.9M352.2 285.6l.3 3.9M352.2 275l.3-4.2M352.2 227.7l.3 3.5M352.2 217l.3-4.5M206.7 343.8l.5 3.8M206.7 333.1l.5-4.1M206.7 285.5l.5 4.1M206.7 274.8l.5-3.8M265 402.1l.2 3.5M265 391.4l.2-4.4M265 343.8l.2 3.8M265 333.1l.2-4.1M265 285.5l.2 4.1M265 274.8l.2-3.8M265 227.2l.2 4.4M265 216.5l.2-3.5M323.4 402.1l-.2 3.5M323.4 391.4l-.2-4.4M323.4 343.8l-.2 3.8M323.4 333.1l-.2-4.1M323.4 285.5l-.2 4.1M323.4 274.8l-.2-3.8M323.4 227.2l-.2 4.4M323.4 216.5l-.2-3.5M381.7 343.8l-.5 3.8M381.7 333.1l-.5-4.1M381.7 285.5l-.5 4.1M381.7 274.8l-.5-3.8"/>
<path stroke="#c8c8c8" stroke-width="1" d="M207.8 363.2l-.1-5.3M207.8 305.5l-.1-5.4M207.8 313.1l-.1 5.4M207.8 255.4l-.1 5.3M265.4 420.8l0-5.2M265.4 363.2l0-5.3M265.4 370.7l0 5.5M265.4 305.5l0-5.4M265.4 313.1l0 5.4M265.4 247.9l0-5.5M265.4 255.4l0 5.3M265.4 197.8l0 5.2M323 420.8l0-5.2M323 363.2l0-5.3M323 370.7l0 5.5M323 305.5l0-5.4M323 313.1l0 5.4M323 247.9l0-5.5M323 255.4l0 5.3M323 197.8l0 5.2M380.6 363.2l.1-5.3M380.6 305.5l.1-5.4M380.6 313.1l.1 5.4M380.6 255.4l.1 5.3M209.5 367.2l2.6 .5M209.5 309.3l2.6 0M205.4 309.3l-4 0M209.5 251.4l2.6-.5M267.3 425l3.1 .9M263.2 425l-3.5 .9M267.3 367.2l3.1 .5M263.2 367.2l-3.5 .5M267.3 309.3l3.1 0M263.2 309.3l-3.5 0M267.3 251.4l3.1-.5M263.2 251.4l-3.5-.5M267.3 193.6l3.1-.9M263.2 193.6l-3.5-.9M325.2 425l3.5 .9M321.1 425l-3.1 .9M325.2 367.2l3.5 .5M321.1 367.2l-3.1 .5M325.2 309.3l3.5 0M321.1 309.3l-3.1 0M325.2 251.4l3.5-.5M321.1 251.4l-3.1-.5M325.2 193.6l3.5-.9M321.1 193.6l-3.1-.9M378.9 367.2l-2.6 .5M383 309.3l4 0M378.9 309.3l-2.6 0M378.9 251.4l-2.6-.5M233.7 367.7l-2.8-.5M237.8 367.7l3.7-.5M233.7 309.3l-2.8 0M237.8 309.3l3.7 0M233.7 250.9l-2.8 .5M237.8 250.9l3.7 .5M292.1 426.2l-3.3-.9M296.3 426.2l3.3-.9M292.1 367.7l-3.3-.5M296.3 367.7l3.3-.5M292.1 309.3l-3.3 0M296.3 309.3l3.3 0M292.1 250.9l-3.3 .5M296.3 250.9l3.3 .5M292.1 192.4l-3.3 .9M296.3 192.4l3.3 .9M350.6 367.7l-3.7-.5M354.7 367.7l2.8-.5M350.6 309.3l-3.7 0M354.7 309.3l2.8 0M350.6 250.9l-3.7 .5M354.7 250.9l2.8 .5"/>
<path stroke="#dc0000" stroke-width=".8" d="M207.7 373.7l-.2 7.7M207.7 244.9l-.2-7.7M265.4 431.3l-.1 7.8M265.4 187.3l-.1-7.8M323 431.3l.1 7.8M323 187.3l.1-7.8M380.7 373.7l.2 7.7M380.7 244.9l.2-7.7M173.9 309.3l-3.1 0M181.8 309.3l5.6 0M232.1 425.7l-3.7-1.2M239.9 425.7l5-1.2M232.1 192.9l-3.7 1.2M239.9 192.9l5 1.2M348.5 425.7l-5-1.2M356.3 425.7l3.7-1.2M348.5 192.9l-5 1.2M356.3 192.9l3.7 1.2M406.6 309.3l-5.6 0M414.5 309.3l3.1 0M206.6 400.9l.5 3.9M206.6 393l.5-4.9M206.6 225.6l.5 4.9M206.6 217.7l.5-3.9M381.8 400.9l-.5 3.9M381.8 393l-.5-4.9M381.8 225.6l-.5 4.9M381.8 217.7l-.5-3.9"/>
<path stroke="#0dd" stroke-width="1" d="M236.4 398.6l-.2 3M236.4 393.3l-.2-2.4M236.4 340.8l-.2 2.8M236.4 335.6l-.2-2.6M236.4 283l-.2 2.6M236.4 277.8l-.2-2.8M236.4 225.3l-.2 2.4M236.4 220l-.2-3M294.2 398.6l0 3M294.2 393.3l0-2.4M294.2 340.8l0 2.8M294.2 335.6l0-2.6M294.2 283l0 2.6M294.2 277.8l0-2.8M294.2 225.3l0 2.4M294.2 220l0-3M352 398.6l.2 3M352 393.3l.2-2.4M352 340.8l.2 2.8M352 335.6l.2-2.6M352 283l.2 2.6M352 277.8l.2-2.8M352 225.3l.2 2.4M352 220l.2-3"/>
<g fill="url(#gO)"><circle cx="207.4" cy="348.9" r="2"/><circle cx="207.4" cy="291" r="2"/><circle cx="265.3" cy="406.8" r="2"/><circle cx="265.3" cy="348.9" r="2"/><circle cx="265.3" cy="291" r="2"/><circle cx="265.3" cy="233.1" r="2"/><circle cx="323.1" cy="406.8" r="2"/><circle cx="323.1" cy="348.9" r="2"/><circle cx="323.1" cy="291" r="2"/><circle cx="323.1" cy="233.1" r="2"/><circle cx="381" cy="348.9" r="2"/><circle cx="381" cy="291" r="2"/><circle cx="207.4" cy="327.6" r="2"/><circle cx="207.4" cy="269.7" r="2"/><circle cx="265.3" cy="385.5" r="2"/><circle cx="265.3" cy="327.6" r="2"/><circle cx="265.3" cy="269.7" r="2"/><circle cx="265.3" cy="211.8" r="2"/><circle cx="323.1" cy="385.5" r="2"/><circle cx="323.1" cy="327.6" r="2"/><circle cx="323.1" cy="269.7" r="2"/><circle cx="323.1" cy="211.8" r="2"/><circle cx="381" cy="327.6" r="2"/><circle cx="381" cy="269.7" r="2"/></g>
<g fill="url(#gS)"><circle cx="236.6" cy="395.6" r="3.7"/><circle cx="236.6" cy="338.1" r="3.7"/><circle cx="236.6" cy="280.5" r="3.7"/><circle cx="236.6" cy="223" r="3.7"/><circle cx="294.2" cy="395.6" r="3.7"/><circle cx="294.2" cy="338.1" r="3.7"/><circle cx="294.2" cy="280.5" r="3.7"/><circle cx="294.2" cy="223" r="3.7"/><circle cx="351.8" cy="395.6" r="3.7"/><circle cx="351.8" cy="338.1" r="3.7"/><circle cx="351.8" cy="280.5" r="3.7"/><circle cx="351.8" cy="223" r="3.7"/></g>
<g fill="url(#gZ)"><circle cx="207.9" cy="366.9" r="4"/><circle cx="207.9" cy="309.3" r="4"/><circle cx="207.9" cy="251.7" r="4"/><circle cx="265.4" cy="424.4" r="4"/><circle cx="265.4" cy="366.9" r="4"/><circle cx="265.4" cy="309.3" r="4"/><circle cx="265.4" cy="251.7" r="4"/><circle cx="265.4" cy="194.2" r="4"/><circle cx="323" cy="424.4" r="4"/><circle cx="323" cy="366.9" r="4"/><circle cx="323" cy="309.3" r="4"/><circle cx="323" cy="251.7" r="4"/><circle cx="323" cy="194.2" r="4"/><circle cx="380.5" cy="366.9" r="4"/><circle cx="380.5" cy="309.3" r="4"/><circle cx="380.5" cy="251.7" r="4"/></g>
<path stroke="#c8c8c8" stroke-width=".8" d="M175.2 309.3l-1.3 0M179.4 309.3l2.4 0M233.7 426.2l-1.6-.5M237.8 426.2l2.1-.5M233.7 192.4l-1.6 .5M237.8 192.4l2.1 .5M350.6 426.2l-2.1-.5M354.7 426.2l1.6-.5M350.6 192.4l-2.1 .5M354.7 192.4l1.6 .5M409 309.3l-2.4 0M413.2 309.3l1.3 0M176.8 305.5l.1-3M176.8 313.1l.1 3M235.5 430.5l.1 2.9M235.5 188.1l.1-2.9M294.2 430.5l0 2.9M294.2 188.1l0-2.9M352.9 430.5l-.1 2.9M352.9 188.1l-.1-2.9M411.6 305.5l-.1-3M411.6 313.1l-.1 3M172.7 309.3l-3.1 0M231.5 426.9l-3 .1M231.5 191.7l-3-.1M356.9 426.9l3 .1M356.9 191.7l3-.1M415.7 309.3l3.1 0"/>
<path stroke="#0dd" stroke-width="1" d="M206.4 341.2l.3 2.6M206.4 335.9l.3-2.8M206.4 282.7l.3 2.8M206.4 277.4l.3-2.6M264.9 399.8l.1 2.4M264.9 394.4l.1-3M264.9 341.2l.1 2.6M264.9 335.9l.1-2.8M264.9 282.7l.1 2.8M264.9 277.4l.1-2.6M264.9 224.2l.1 3M264.9 218.8l.1-2.4M323.5 399.8l-.1 2.4M323.5 394.4l-.1-3M323.5 341.2l-.1 2.6M323.5 335.9l-.1-2.8M323.5 282.7l-.1 2.8M323.5 277.4l-.1-2.6M323.5 224.2l-.1 3M323.5 218.8l-.1-2.4M382 341.2l-.3 2.6M382 335.9l-.3-2.8M382 282.7l-.3 2.8M382 277.4l-.3-2.6M208.4 397.7l2.4 .3M203.1 338.8l-3.1 .1M208.4 338.8l2.4 .1M203.1 279.8l-3.1-.1M208.4 279.8l2.4-.1M208.4 220.9l2.4-.3M262 397.7l-2.9 .3M267.4 397.7l2.6 .3M262 338.8l-2.9 .1M267.4 338.8l2.6 .1M262 279.8l-2.9-.1M267.4 279.8l2.6-.1M262 220.9l-2.9-.3M267.4 220.9l2.6-.3M321 397.7l-2.6 .3M326.4 397.7l2.9 .3M321 338.8l-2.6 .1M326.4 338.8l2.9 .1M321 279.8l-2.6-.1M326.4 279.8l2.9-.1M321 220.9l-2.6-.3M326.4 220.9l2.9-.3M380 397.7l-2.4 .3M380 338.8l-2.4 .1M385.3 338.8l3.1 .1M380 279.8l-2.4-.1M385.3 279.8l3.1-.1M380 220.9l-2.4-.3"/>
<path stroke="#dc0000" stroke-width=".8" d="M203.1 367.4l-5.5 .6M203.1 251.2l-5.5-.6M385.3 367.4l5.5 .6M385.3 251.2l5.5-.6M177 302.5l.3-7.6M177 316.1l.3 7.6M235.6 433.3l.1 7.3M235.6 185.3l.1-7.3M294.2 433.3l0 7.3M294.2 185.3l0-7.3M352.8 433.3l-.1 7.3M352.8 185.3l-.1-7.3M411.4 302.5l-.3-7.6M411.4 316.1l-.3 7.6M169.6 309.3l-8 0M228.5 427l-7.9 .3M228.5 191.6l-7.9-.3M359.9 427l7.9 .3M359.9 191.6l7.9-.3M418.8 309.3l8 0M175.4 343l1.3 4.1M175.4 335l1.3-4.7M175.4 283.6l1.3 4.7M175.4 275.6l1.3-4.1M294.2 461.8l0 2.8M294.2 453.8l0-6M294.2 164.8l0 6M294.2 156.8l0-2.8M413 343l-1.3 4.1M413 335l-1.3-4.7M413 283.6l-1.3 4.7M413 275.6l-1.3-4.1"/>
<path stroke="#0dd" stroke-width=".8" d="M206.4 399.8l.2 1.1M206.4 394.4l.2-1.4M206.4 224.2l.2 1.4M206.4 218.8l.2-1.1M382 399.8l-.2 1.1M382 394.4l-.2-1.4M382 224.2l-.2 1.4M382 218.8l-.2-1.1M203.1 397.7l-1.5 .2M203.1 220.9l-1.5-.2M385.3 397.7l1.5 .2M385.3 220.9l1.5-.2"/>
<path stroke="#e80000" stroke-width="1" d="M235.6 417.2l.1-7.7M235.6 358.6l.1-7.5M235.6 377.1l.1 7.3M235.6 300l.1-7.4M235.6 318.6l.1 7.4M235.6 241.5l.1-7.3M235.6 260l.1 7.5M235.6 201.4l.1 7.7M294.2 417.2l0-7.7M294.2 358.6l0-7.5M294.2 377.1l0 7.3M294.2 300l0-7.4M294.2 318.6l0 7.4M294.2 241.5l0-7.3M294.2 260l0 7.5M294.2 201.4l0 7.7M352.8 417.2l-.1-7.7M352.8 358.6l-.1-7.5M352.8 377.1l-.1 7.3M352.8 300l-.1-7.4M352.8 318.6l-.1 7.4M352.8 241.5l-.1-7.3M352.8 260l-.1 7.5M352.8 201.4l-.1 7.7M212.1 367.6l3.5 .6M212.1 309.3l3.5 0M201.4 309.3l-5.4 0M212.1 251l3.5-.6M270.4 425.9l4.2 1.3M259.7 425.9l-4.8 1.3M270.4 367.6l4.2 .6M259.7 367.6l-4.8 .6M270.4 309.3l4.2 0M259.7 309.3l-4.8 0M270.4 251l4.2-.6M259.7 251l-4.8-.6M270.4 192.7l4.2-1.3M259.7 192.7l-4.8-1.3M328.7 425.9l4.8 1.3M318 425.9l-4.2 1.3M328.7 367.6l4.8 .6M318 367.6l-4.2 .6M328.7 309.3l4.8 0M318 309.3l-4.2 0M328.7 251l4.8-.6M318 251l-4.2-.6M328.7 192.7l4.8-1.3M318 192.7l-4.2-1.3M376.3 367.6l-3.5 .6M387 309.3l5.4 0M376.3 309.3l-3.5 0M376.3 251l-3.5-.6M235 403.5l.6 3.4M235 392.6l.6-5.3M235 344.3l.6 4M235 333.4l.6-4.7M235 285.2l.6 4.7M235 274.3l.6-4M235 226l.6 5.3M235 215.1l.6-3.4M294.2 403.5l0 3.4M294.2 392.6l0-5.3M294.2 344.3l0 4M294.2 333.4l0-4.7M294.2 285.2l0 4.7M294.2 274.3l0-4M294.2 226l0 5.3M294.2 215.1l0-3.4M353.4 403.5l-.6 3.4M353.4 392.6l-.6-5.3M353.4 344.3l-.6 4M353.4 333.4l-.6-4.7M353.4 285.2l-.6 4.7M353.4 274.3l-.6-4M353.4 226l-.6 5.3M353.4 215.1l-.6-3.4M185.7 309.3l7.3 0M244.6 427.1l7.4 .3M226 368.2l-7.7 .1M244.6 368.2l7.4 .1M226 309.3l-7.7 0M244.6 309.3l7.4 0M226 250.4l-7.7-.1M244.6 250.4l7.4-.1M244.6 191.5l7.4-.3M284.9 427.1l-7.5 .3M303.5 427.1l7.5 .3M284.9 368.2l-7.5 .1M303.5 368.2l7.5 .1M284.9 309.3l-7.5 0M303.5 309.3l7.5 0M284.9 250.4l-7.5-.1M303.5 250.4l7.5-.1M284.9 191.5l-7.5-.3M303.5 191.5l7.5-.3M343.8 427.1l-7.4 .3M343.8 368.2l-7.4 .1M362.4 368.2l7.7 .1M343.8 309.3l-7.4 0M362.4 309.3l7.7 0M343.8 250.4l-7.4-.1M362.4 250.4l7.7-.1M343.8 191.5l-7.4-.3M402.7 309.3l-7.3 0"/>
<path stroke="#c8c8c8" stroke-width="1" d="M235.5 422.8l.1-5.6M235.5 364.2l.1-5.5M235.5 371.8l.1 5.3M235.5 305.5l.1-5.4M235.5 313.1l.1 5.4M235.5 246.8l.1-5.3M235.5 254.4l.1 5.5M235.5 195.8l.1 5.6M294.2 422.8l0-5.6M294.2 364.2l0-5.5M294.2 371.8l0 5.3M294.2 305.5l0-5.4M294.2 313.1l0 5.4M294.2 246.8l0-5.3M294.2 254.4l0 5.5M294.2 195.8l0 5.6M352.9 422.8l-.1-5.6M352.9 364.2l-.1-5.5M352.9 371.8l-.1 5.3M352.9 305.5l-.1-5.4M352.9 313.1l-.1 5.4M352.9 246.8l-.1-5.3M352.9 254.4l-.1 5.5M352.9 195.8l-.1 5.6M180.4 309.3l5.3 0M239.2 426.9l5.4 .2M231.5 368.1l-5.6 .1M239.2 368.1l5.4 .1M231.5 309.3l-5.6 0M239.2 309.3l5.4 0M231.5 250.5l-5.6-.1M239.2 250.5l5.4-.1M239.2 191.7l5.4-.2M290.4 426.9l-5.5 .2M298 426.9l5.5 .2M290.4 368.1l-5.5 .1M298 368.1l5.5 .1M290.4 309.3l-5.5 0M298 309.3l5.5 0M290.4 250.5l-5.5-.1M298 250.5l5.5-.1M290.4 191.7l-5.5-.2M298 191.7l5.5-.2M349.2 426.9l-5.4 .2M349.2 368.1l-5.4 .1M356.9 368.1l5.6 .1M349.2 309.3l-5.4 0M356.9 309.3l5.6 0M349.2 250.5l-5.4-.1M356.9 250.5l5.6-.1M349.2 191.7l-5.4-.2M408 309.3l-5.3 0"/>
<g fill="url(#gO)"><circle cx="235.8" cy="407.7" r="2"/><circle cx="235.8" cy="349.3" r="2"/><circle cx="235.8" cy="290.8" r="2"/><circle cx="235.8" cy="232.4" r="2"/><circle cx="294.2" cy="407.7" r="2"/><circle cx="294.2" cy="349.3" r="2"/><circle cx="294.2" cy="290.8" r="2"/><circle cx="294.2" cy="232.4" r="2"/><circle cx="352.6" cy="407.7" r="2"/><circle cx="352.6" cy="349.3" r="2"/><circle cx="352.6" cy="290.8" r="2"/><circle cx="352.6" cy="232.4" r="2"/><circle cx="235.8" cy="386.2" r="2"/><circle cx="235.8" cy="327.8" r="2"/><circle cx="235.8" cy="269.3" r="2"/><circle cx="235.8" cy="210.9" r="2"/><circle cx="294.2" cy="386.2" r="2"/><circle cx="294.2" cy="327.8" r="2"/><circle cx="294.2" cy="269.3" r="2"/><circle cx="294.2" cy="210.9" r="2"/><circle cx="352.6" cy="386.2" r="2"/><circle cx="352.6" cy="327.8" r="2"/><circle cx="352.6" cy="269.3" r="2"/><circle cx="352.6" cy="210.9" r="2"/><circle cx="216.4" cy="368.4" r="2.1"/><circle cx="216.4" cy="309.3" r="2.1"/><circle cx="216.4" cy="250.2" r="2.1"/><circle cx="275.5" cy="427.5" r="2.1"/><circle cx="275.5" cy="368.4" r="2.1"/><circle cx="275.5" cy="309.3" r="2.1"/><circle cx="275.5" cy="250.2" r="2.1"/><circle cx="275.5" cy="191.1" r="2.1"/><circle cx="334.6" cy="427.5" r="2.1"/><circle cx="334.6" cy="368.4" r="2.1"/><circle cx="334.6" cy="309.3" r="2.1"/><circle cx="334.6" cy="250.2" r="2.1"/><circle cx="334.6" cy="191.1" r="2.1"/><circle cx="393.7" cy="309.3" r="2.1"/><circle cx="194.7" cy="309.3" r="2.1"/><circle cx="253.8" cy="427.5" r="2.1"/><circle cx="253.8" cy="368.4" r="2.1"/><circle cx="253.8" cy="309.3" r="2.1"/><circle cx="253.8" cy="250.2" r="2.1"/><circle cx="253.8" cy="191.1" r="2.1"/><circle cx="312.9" cy="427.5" r="2.1"/><circle cx="312.9" cy="368.4" r="2.1"/><circle cx="312.9" cy="309.3" r="2.1"/><circle cx="312.9" cy="250.2" r="2.1"/><circle cx="312.9" cy="191.1" r="2.1"/><circle cx="372" cy="368.4" r="2.1"/><circle cx="372" cy="309.3" r="2.1"/><circle cx="372" cy="250.2" r="2.1"/></g>
<g fill="url(#gS)"><circle cx="206.1" cy="397.4" r="3.8"/><circle cx="206.1" cy="338.7" r="3.8"/><circle cx="206.1" cy="279.9" r="3.8"/><circle cx="206.1" cy="221.2" r="3.8"/><circle cx="264.8" cy="397.4" r="3.8"/><circle cx="264.8" cy="338.7" r="3.8"/><circle cx="264.8" cy="279.9" r="3.8"/><circle cx="264.8" cy="221.2" r="3.8"/><circle cx="323.6" cy="397.4" r="3.8"/><circle cx="323.6" cy="338.7" r="3.8"/><circle cx="323.6" cy="279.9" r="3.8"/><circle cx="323.6" cy="221.2" r="3.8"/><circle cx="382.3" cy="397.4" r="3.8"/><circle cx="382.3" cy="338.7" r="3.8"/><circle cx="382.3" cy="279.9" r="3.8"/><circle cx="382.3" cy="221.2" r="3.8"/></g>
<g fill="url(#gZ)"><circle cx="176.7" cy="309.3" r="4.1"/><circle cx="235.5" cy="426.8" r="4.1"/><circle cx="235.5" cy="368" r="4.1"/><circle cx="235.5" cy="309.3" r="4.1"/><circle cx="235.5" cy="250.6" r="4.1"/><circle cx="235.5" cy="191.8" r="4.1"/><circle cx="294.2" cy="426.8" r="4.1"/><circle cx="294.2" cy="368" r="4.1"/><circle cx="294.2" cy="309.3" r="4.1"/><circle cx="294.2" cy="250.6" r="4.1"/><circle cx="294.2" cy="191.8" r="4.1"/><circle cx="352.9" cy="426.8" r="4.1"/><circle cx="352.9" cy="368" r="4.1"/><circle cx="352.9" cy="309.3" r="4.1"/><circle cx="352.9" cy="250.6" r="4.1"/><circle cx="352.9" cy="191.8" r="4.1"/><circle cx="411.7" cy="309.3" r="4.1"/></g>
<path stroke="#c8c8c8" stroke-width=".8" d="M235.2 429.5l-.3 2.4M235.2 189.1l-.3-2.4M353.2 429.5l.3 2.4M353.2 189.1l.3-2.4M174.9 341.3l.5 1.7M174.9 337l.5-2M174.9 281.6l.5 2M174.9 277.3l.5-1.7M294.2 460.6l0 1.2M294.2 456.3l0-2.6M294.2 162.3l0 2.6M294.2 158l0-1.2M413.5 341.3l-.5 1.7M413.5 337l-.5-2M413.5 281.6l-.5 2M413.5 277.3l-.5-1.7M170.5 339.3l-2.9 0M170.5 279.3l-2.9 0M298.1 459.1l3-.1M290.3 459.1l-3-.1M298.1 159.5l3 .1M290.3 159.5l-3 .1M417.9 339.3l2.9 0M417.9 279.3l2.9 0"/>
<path stroke="#dc0000" stroke-width=".8" d="M201.6 397.9l-5.1 .5M201.6 220.7l-5.1-.5M386.8 397.9l5.1 .5M386.8 220.7l5.1-.5M200.7 368.9l-3.9-.4M200.7 249.7l-3.9 .4M387.7 368.9l3.9-.4M387.7 249.7l3.9 .4M234.9 431.9l-.7 5.9M234.9 186.7l-.7-5.9M353.5 431.9l.7 5.9M353.5 186.7l.7-5.9M167.6 339.2l-7.5-.1M167.6 279.4l-7.5 .1M301.1 458.9l7.8-.4M287.3 458.9l-7.8-.4M301.1 159.7l7.8 .4M287.3 159.7l-7.8 .4M420.8 339.2l7.5-.1M420.8 279.4l7.5 .1"/>
<path stroke="#c8c8c8" stroke-width="1" d="M176.1 311.4l-1 3.4M176.1 307.2l-1-3.4M235.2 425.3l-.5-2.4M235.2 370.5l-.5 3.9M235.2 366.2l-.5-2.9M235.2 311.4l-.5 3.4M235.2 307.2l-.5-3.4M235.2 252.4l-.5 2.9M235.2 248.1l-.5-3.9M235.2 193.3l-.5 2.4M294.2 429.5l0 4.3M294.2 425.3l0-2.4M294.2 370.5l0 3.9M294.2 366.2l0-2.9M294.2 311.4l0 3.4M294.2 307.2l0-3.4M294.2 252.4l0 2.9M294.2 248.1l0-3.9M294.2 193.3l0 2.4M294.2 189.1l0-4.3M353.2 425.3l.5-2.4M353.2 370.5l.5 3.9M353.2 366.2l.5-2.9M353.2 311.4l.5 3.4M353.2 307.2l.5-3.4M353.2 252.4l.5 2.9M353.2 248.1l.5-3.9M353.2 193.3l.5 2.4M412.3 311.4l1 3.4M412.3 307.2l1-3.4M234.5 400.9l.5 2.6M234.5 396.7l.5-4M234.5 341.3l.5 3.1M234.5 337l.5-3.6M234.5 281.6l.5 3.6M234.5 277.3l.5-3.1M234.5 221.9l.5 4M234.5 217.7l.5-2.6M294.2 400.9l0 2.6M294.2 396.7l0-4M294.2 341.3l0 3.1M294.2 337l0-3.6M294.2 281.6l0 3.6M294.2 277.3l0-3.1M294.2 221.9l0 4M294.2 217.7l0-2.6M353.9 400.9l-.5 2.6M353.9 396.7l-.5-4M353.9 341.3l-.5 3.1M353.9 337l-.5-3.6M353.9 281.6l-.5 3.6M353.9 277.3l-.5-3.1M353.9 221.9l-.5 4M353.9 217.7l-.5-2.6M178.3 339.3l5.7-.1M178.3 279.3l5.7 .1M238.2 399.2l5.6-.2M230.4 399.2l-5.4-.2M238.2 339.3l5.6-.1M230.4 339.3l-5.4-.1M238.2 279.3l5.6 .1M230.4 279.3l-5.4 .1M238.2 219.4l5.6 .2M230.4 219.4l-5.4 .2M298.1 399.2l5.5-.2M290.3 399.2l-5.5-.2M298.1 339.3l5.5-.1M290.3 339.3l-5.5-.1M298.1 279.3l5.5 .1M290.3 279.3l-5.5 .1M298.1 219.4l5.5 .2M290.3 219.4l-5.5 .2M358 399.2l5.4-.2M350.2 399.2l-5.6-.2M358 339.3l5.4-.1M350.2 339.3l-5.6-.1M358 279.3l5.4 .1M350.2 279.3l-5.6 .1M358 219.4l5.4 .2M350.2 219.4l-5.6 .2M410.1 339.3l-5.7-.1M410.1 279.3l-5.7 .1"/>
<path stroke="#e80000" stroke-width="1" d="M210.9 398.1l3.6 .5M200 338.9l-4.6 .2M210.9 338.9l3.6 .2M200 279.7l-4.6-.2M210.9 279.7l3.6-.2M210.9 220.5l3.6-.5M259.2 398.1l-4.3 .5M270.1 398.1l3.9 .5M259.2 338.9l-4.3 .2M270.1 338.9l3.9 .2M259.2 279.7l-4.3-.2M270.1 279.7l3.9-.2M259.2 220.5l-4.3-.5M270.1 220.5l3.9-.5M318.3 398.1l-3.9 .5M329.2 398.1l4.3 .5M318.3 338.9l-3.9 .2M329.2 338.9l4.3 .2M318.3 279.7l-3.9-.2M329.2 279.7l4.3-.2M318.3 220.5l-3.9-.5M329.2 220.5l4.3-.5M377.5 398.1l-3.6 .5M377.5 338.9l-3.6 .2M388.4 338.9l4.6 .2M377.5 279.7l-3.6-.2M388.4 279.7l4.6-.2M377.5 220.5l-3.6-.5M210.4 368.8l4.5-.3M210.4 309.3l4.5 0M199.4 309.3l-3.5 0M210.4 249.8l4.5 .3M269.9 428.4l4.2-.7M259 428.4l-3.9-.7M269.9 368.8l4.2-.3M259 368.8l-3.9-.3M269.9 309.3l4.2 0M259 309.3l-3.9 0M269.9 249.8l4.2 .3M259 249.8l-3.9 .3M269.9 190.2l4.2 .7M259 190.2l-3.9 .7M329.4 428.4l3.9-.7M318.5 428.4l-4.2-.7M329.4 368.8l3.9-.3M318.5 368.8l-4.2-.3M329.4 309.3l3.9 0M318.5 309.3l-4.2 0M329.4 249.8l3.9 .3M318.5 249.8l-4.2 .3M329.4 190.2l3.9 .7M318.5 190.2l-4.2 .7M378 368.8l-4.5-.3M389 309.3l3.5 0M378 309.3l-4.5 0M378 249.8l-4.5 .3M184 339.2l7.8-.1M184 279.4l7.8 .1M243.8 399l7.7-.2M224.9 399l-7.4-.2M243.8 339.2l7.7-.1M224.9 339.2l-7.4-.1M243.8 279.4l7.7 .1M224.9 279.4l-7.4 .1M243.8 219.6l7.7 .2M224.9 219.6l-7.4 .2M303.6 399l7.6-.2M284.8 399l-7.6-.2M303.6 339.2l7.6-.1M284.8 339.2l-7.6-.1M303.6 279.4l7.6 .1M284.8 279.4l-7.6 .1M303.6 219.6l7.6 .2M284.8 219.6l-7.6 .2M363.5 399l7.4-.2M344.6 399l-7.7-.2M363.5 339.2l7.4-.1M344.6 339.2l-7.7-.1M363.5 279.4l7.4 .1M344.6 279.4l-7.7 .1M363.5 219.6l7.4 .2M344.6 219.6l-7.7 .2M404.4 339.2l-7.8-.1M404.4 279.4l-7.8 .1M234.7 422.9l-.7-3.3M234.7 374.3l-.7 5.2M234.7 363.4l-.7-3.9M234.7 255.2l-.7 3.9M234.7 244.3l-.7-5.2M294.2 422.9l0-3.3M294.2 374.3l0 5.2M294.2 363.4l0-3.9M294.2 255.2l0 3.9M294.2 244.3l0-5.2M353.7 422.9l.7-3.3M353.7 374.3l.7 5.2M353.7 363.4l.7-3.9M353.7 255.2l.7 3.9M353.7 244.3l.7-5.2M175.1 314.8l-1.3 4.6M175.1 303.8l-1.3-4.6M234.7 314.8l-.7 4.6M234.7 303.8l-.7-4.6M234.7 195.7l-.7 3.3M294.2 433.8l0 5.9M294.2 314.8l0 4.6M294.2 303.8l0-4.6M294.2 195.7l0 3.3M294.2 184.8l0-5.9M353.7 314.8l.7 4.6M353.7 303.8l.7-4.6M353.7 195.7l.7 3.3M413.3 314.8l1.3 4.6M413.3 303.8l1.3-4.6"/>
<path stroke="#0dd" stroke-width="1" d="M207.3 369.1l3.1-.2M207.3 309.3l3.1 0M201.8 309.3l-2.4 0M207.3 249.5l3.1 .2M267 428.8l2.9-.5M261.6 428.8l-2.6-.5M267 369.1l2.9-.2M261.6 369.1l-2.6-.2M267 309.3l2.9 0M261.6 309.3l-2.6 0M267 249.5l2.9 .2M261.6 249.5l-2.6 .2M267 189.8l2.9 .5M261.6 189.8l-2.6 .5M326.8 428.8l2.6-.5M321.4 428.8l-2.9-.5M326.8 369.1l2.6-.2M321.4 369.1l-2.9-.2M326.8 309.3l2.6 0M321.4 309.3l-2.9 0M326.8 249.5l2.6 .2M321.4 249.5l-2.9 .2M326.8 189.8l2.6 .5M321.4 189.8l-2.9 .5M381.1 369.1l-3.1-.2M386.6 309.3l2.4 0M381.1 309.3l-3.1 0M381.1 249.5l-3.1 .2"/>
<path stroke="#0dd" stroke-width=".8" d="M201.8 369.1l-1.1-.1M201.8 249.5l-1.1 .1M386.6 369.1l1.1-.1M386.6 249.5l1.1 .1"/>
<g fill="url(#gO)"><circle cx="193.8" cy="339.1" r="2.1"/><circle cx="193.8" cy="279.5" r="2.1"/><circle cx="253.4" cy="398.7" r="2.1"/><circle cx="253.4" cy="339.1" r="2.1"/><circle cx="253.4" cy="279.5" r="2.1"/><circle cx="253.4" cy="219.9" r="2.1"/><circle cx="313" cy="398.7" r="2.1"/><circle cx="313" cy="339.1" r="2.1"/><circle cx="313" cy="279.5" r="2.1"/><circle cx="313" cy="219.9" r="2.1"/><circle cx="372.7" cy="398.7" r="2.1"/><circle cx="372.7" cy="339.1" r="2.1"/><circle cx="372.7" cy="279.5" r="2.1"/><circle cx="372.7" cy="219.9" r="2.1"/><circle cx="215.7" cy="398.7" r="2.1"/><circle cx="215.7" cy="339.1" r="2.1"/><circle cx="215.7" cy="279.5" r="2.1"/><circle cx="215.7" cy="219.9" r="2.1"/><circle cx="275.4" cy="398.7" r="2.1"/><circle cx="275.4" cy="339.1" r="2.1"/><circle cx="275.4" cy="279.5" r="2.1"/><circle cx="275.4" cy="219.9" r="2.1"/><circle cx="335" cy="398.7" r="2.1"/><circle cx="335" cy="339.1" r="2.1"/><circle cx="335" cy="279.5" r="2.1"/><circle cx="335" cy="219.9" r="2.1"/><circle cx="394.6" cy="339.1" r="2.1"/><circle cx="394.6" cy="279.5" r="2.1"/></g>
<path stroke="#c8c8c8" stroke-width=".8" d="M174.1 343.2l-.1 3.1M174.1 275.4l-.1-3.1M294.2 463.3l0 3.2M294.2 155.3l0-3.2M414.3 343.2l.1 3.1M414.3 275.4l.1-3.1M171.5 339.4l-2.5 .1M171.5 279.2l-2.5-.1M416.9 339.4l2.5 .1M416.9 279.2l2.5-.1"/>
<path stroke="#e80000" stroke-width="1" d="M209.1 400l5.4-1M198 339.5l-3.4-.3M209.1 339.5l5.4-.3M198 279.1l-3.4 .3M209.1 279.1l5.4 .3M209.1 218.6l5.4 1M258.4 400l-4.1-1M269.5 400l4.8-1M258.4 339.5l-4.1-.3M269.5 339.5l4.8-.3M258.4 279.1l-4.1 .3M269.5 279.1l4.8 .3M258.4 218.6l-4.1 1M269.5 218.6l4.8 1M318.9 400l-4.8-1M330 400l4.1-1M318.9 339.5l-4.8-.3M330 339.5l4.1-.3M318.9 279.1l-4.8 .3M330 279.1l4.1 .3M318.9 218.6l-4.8 1M330 218.6l4.1 1M379.3 400l-5.4-1M379.3 339.5l-5.4-.3M390.4 339.5l3.4-.3M379.3 279.1l-5.4 .3M390.4 279.1l3.4 .3M379.3 218.6l-5.4 1M173.9 329.9l-.3-7.6M173.9 288.7l-.3 7.6M234 390l-.1-7.5M234 409l-.1 7.9M234 329.9l-.1-7.6M234 348.9l-.1 7.8M234 269.7l-.1-7.8M234 288.7l-.1 7.6M234 209.6l-.1-7.9M234 228.6l-.1 7.5M294.2 450.2l0-7.3M294.2 390l0-7.5M294.2 409l0 7.9M294.2 329.9l0-7.6M294.2 348.9l0 7.8M294.2 269.7l0-7.8M294.2 288.7l0 7.6M294.2 209.6l0-7.9M294.2 228.6l0 7.5M294.2 168.4l0 7.3M354.4 390l.1-7.5M354.4 409l.1 7.9M354.4 329.9l.1-7.6M354.4 348.9l.1 7.8M354.4 269.7l.1-7.8M354.4 288.7l.1 7.6M354.4 209.6l.1-7.9M354.4 228.6l.1 7.5M414.5 329.9l.3-7.6M414.5 288.7l.3 7.6M203.5 375.3l-.5 4.5M203.5 364.2l-.5-3.8M203.5 314.9l-.5 4.2M203.5 303.7l-.5-4.2M203.5 254.4l-.5 3.8M203.5 243.3l-.5-4.5M264 435.7l-.2 4.9M264 424.6l-.2-3.5M264 375.3l-.2 4.5M264 364.2l-.2-3.8M264 314.9l-.2 4.2M264 303.7l-.2-4.2M264 254.4l-.2 3.8M264 243.3l-.2-4.5M264 194l-.2 3.5M264 182.9l-.2-4.9M324.4 435.7l.2 4.9M324.4 424.6l.2-3.5M324.4 375.3l.2 4.5M324.4 364.2l.2-3.8M324.4 314.9l.2 4.2M324.4 303.7l.2-4.2M324.4 254.4l.2 3.8M324.4 243.3l.2-4.5M324.4 194l.2 3.5M324.4 182.9l.2-4.9M384.9 375.3l.5 4.5M384.9 364.2l.5-3.8M384.9 314.9l.5 4.2M384.9 303.7l.5-4.2M384.9 254.4l.5 3.8M384.9 243.3l.5-4.5M172.6 314.9l.7 4.1M172.6 303.7l.7-4.1M233.4 425.3l.3-4.8M233.4 375.7l.3 3.8M233.4 364.5l.3-4.4M233.4 314.9l.3 4.1M233.4 303.7l.3-4.1M233.4 254.1l.3 4.4M233.4 242.9l.3-3.8M233.4 193.3l.3 4.8M294.2 436.5l0 3.4M294.2 425.3l0-4.8M294.2 375.7l0 3.8M294.2 364.5l0-4.4M294.2 314.9l0 4.1M294.2 303.7l0-4.1M294.2 254.1l0 4.4M294.2 242.9l0-3.8M294.2 193.3l0 4.8M294.2 182.1l0-3.4M355 425.3l-.3-4.8M355 375.7l-.3 3.8M355 364.5l-.3-4.4M355 314.9l-.3 4.1M355 303.7l-.3-4.1M355 254.1l-.3 4.4M355 242.9l-.3-3.8M355 193.3l-.3 4.8M415.8 314.9l-.7 4.1M415.8 303.7l-.7-4.1"/>
<path stroke="#c8c8c8" stroke-width="1" d="M174.1 335.4l-.2-5.5M174.1 283.2l-.2 5.5M234.1 395.5l-.1-5.4M234.1 403.3l-.1 5.7M234.1 335.4l-.1-5.5M234.1 343.2l-.1 5.6M234.1 275.4l-.1-5.6M234.1 283.2l-.1 5.5M234.1 215.3l-.1-5.7M234.1 223.1l-.1 5.4M294.2 455.5l0-5.3M294.2 395.5l0-5.4M294.2 403.3l0 5.7M294.2 335.4l0-5.5M294.2 343.2l0 5.6M294.2 275.4l0-5.6M294.2 283.2l0 5.5M294.2 215.3l0-5.7M294.2 223.1l0 5.4M294.2 163.1l0 5.3M354.3 395.5l.1-5.4M354.3 403.3l.1 5.7M354.3 335.4l.1-5.5M354.3 343.2l.1 5.6M354.3 275.4l.1-5.6M354.3 283.2l.1 5.5M354.3 215.3l.1-5.7M354.3 223.1l.1 5.4M414.3 335.4l.2-5.5M414.3 283.2l.2 5.5M175.8 339.4l2.4 .3M175.8 279.2l2.4-.3M236.1 399.7l2.9 .8M231.8 399.7l-3.9 .8M236.1 339.4l2.9 .3M231.8 339.4l-3.9 .3M236.1 279.2l2.9-.3M231.8 279.2l-3.9-.3M236.1 218.9l2.9-.8M231.8 218.9l-3.9-.8M296.3 460l3.4 1.3M292.1 460l-3.4 1.3M296.3 399.7l3.4 .8M292.1 399.7l-3.4 .8M296.3 339.4l3.4 .3M292.1 339.4l-3.4 .3M296.3 279.2l3.4-.3M292.1 279.2l-3.4-.3M296.3 218.9l3.4-.8M292.1 218.9l-3.4-.8M296.3 158.6l3.4-1.3M292.1 158.6l-3.4-1.3M356.6 399.7l3.9 .8M352.3 399.7l-2.9 .8M356.6 339.4l3.9 .3M352.3 339.4l-2.9 .3M356.6 279.2l3.9-.3M352.3 279.2l-2.9-.3M356.6 218.9l3.9-.8M352.3 218.9l-2.9-.8M412.6 339.4l-2.4 .3M412.6 279.2l-2.4-.3M205 400.7l4.1-.8M200.6 339.8l-2.6-.3M205 339.8l4.1-.3M200.6 278.8l-2.6 .3M205 278.8l4.1 .3M205 217.9l4.1 .8M261.6 400.7l-3.1-.8M265.9 400.7l3.6-.8M261.6 339.8l-3.1-.3M265.9 339.8l3.6-.3M261.6 278.8l-3.1 .3M265.9 278.8l3.6 .3M261.6 217.9l-3.1 .8M265.9 217.9l3.6 .8M322.5 400.7l-3.6-.8M326.8 400.7l3.1-.8M322.5 339.8l-3.6-.3M326.8 339.8l3.1-.3M322.5 278.8l-3.6 .3M326.8 278.8l3.1 .3M322.5 217.9l-3.6 .8M326.8 217.9l3.1 .8M383.4 400.7l-4.1-.8M383.4 339.8l-4.1-.3M387.8 339.8l2.6-.3M383.4 278.8l-4.1 .3M387.8 278.8l2.6 .3M383.4 217.9l-4.1 .8"/>
<path stroke="#dc0000" stroke-width=".8" d="M174 346.3l-.3 8M174 272.3l-.3-8M294.2 466.5l0 8.3M294.2 152.1l0-8.3M414.4 346.3l.3 8M414.4 272.3l.3-8M199.1 400.3l-3.5-1M199.1 218.3l-3.5 1M259.8 460.9l-4.2-1.7M268 460.9l4.9-1.7M259.8 157.7l-4.2 1.7M268 157.7l4.9 1.7M320.4 460.9l-4.9-1.7M328.6 460.9l4.2-1.7M320.4 157.7l-4.9 1.7M328.6 157.7l4.2 1.7M389.3 400.3l3.5-1M389.3 218.3l3.5 1M172.4 374.3l.8 4.2M172.4 366.1l.8-5M172.4 252.5l.8 5M172.4 244.3l.8-4.2M233.3 435.2l.4 3.8M233.3 183.4l.4-3.8M355.1 435.2l-.4 3.8M355.1 183.4l-.4-3.8M416 374.3l-.8 4.2M416 366.1l-.8-5M416 252.5l-.8 5M416 244.3l-.8-4.2"/>
<path stroke="#0dd" stroke-width="1" d="M203.9 372.2l-.3 3.1M203.9 366.8l-.3-2.6M203.9 312l-.3 2.8M203.9 306.6l-.3-2.8M203.9 251.8l-.3 2.6M203.9 246.4l-.3-3.1M264.1 432.4l-.1 3.3M264.1 427l-.1-2.4M264.1 372.2l-.1 3.1M264.1 366.8l-.1-2.6M264.1 312l-.1 2.8M264.1 306.6l-.1-2.8M264.1 251.8l-.1 2.6M264.1 246.4l-.1-3.1M264.1 191.6l-.1 2.4M264.1 186.2l-.1-3.3M324.3 432.4l.1 3.3M324.3 427l.1-2.4M324.3 372.2l.1 3.1M324.3 366.8l.1-2.6M324.3 312l.1 2.8M324.3 306.6l.1-2.8M324.3 251.8l.1 2.6M324.3 246.4l.1-3.1M324.3 191.6l.1 2.4M324.3 186.2l.1-3.3M384.5 372.2l.3 3.1M384.5 366.8l.3-2.6M384.5 312l.3 2.8M384.5 306.6l.3-2.8M384.5 251.8l.3 2.6M384.5 246.4l.3-3.1"/>
<g fill="url(#gO)"><circle cx="173.5" cy="320.4" r="2.1"/><circle cx="233.9" cy="380.7" r="2.1"/><circle cx="233.9" cy="320.4" r="2.1"/><circle cx="233.9" cy="260.1" r="2.1"/><circle cx="233.9" cy="199.7" r="2.1"/><circle cx="294.2" cy="441.1" r="2.1"/><circle cx="294.2" cy="380.7" r="2.1"/><circle cx="294.2" cy="320.4" r="2.1"/><circle cx="294.2" cy="260.1" r="2.1"/><circle cx="294.2" cy="199.7" r="2.1"/><circle cx="354.5" cy="380.7" r="2.1"/><circle cx="354.5" cy="320.4" r="2.1"/><circle cx="354.5" cy="260.1" r="2.1"/><circle cx="354.5" cy="199.7" r="2.1"/><circle cx="414.9" cy="320.4" r="2.1"/><circle cx="173.5" cy="298.2" r="2.1"/><circle cx="233.9" cy="418.9" r="2.1"/><circle cx="233.9" cy="358.5" r="2.1"/><circle cx="233.9" cy="298.2" r="2.1"/><circle cx="233.9" cy="237.9" r="2.1"/><circle cx="294.2" cy="418.9" r="2.1"/><circle cx="294.2" cy="358.5" r="2.1"/><circle cx="294.2" cy="298.2" r="2.1"/><circle cx="294.2" cy="237.9" r="2.1"/><circle cx="294.2" cy="177.5" r="2.1"/><circle cx="354.5" cy="418.9" r="2.1"/><circle cx="354.5" cy="358.5" r="2.1"/><circle cx="354.5" cy="298.2" r="2.1"/><circle cx="354.5" cy="237.9" r="2.1"/><circle cx="414.9" cy="298.2" r="2.1"/></g>
<g fill="url(#gS)"><circle cx="204.2" cy="369.3" r="3.8"/><circle cx="204.2" cy="309.3" r="3.8"/><circle cx="204.2" cy="249.3" r="3.8"/><circle cx="264.2" cy="429.3" r="3.8"/><circle cx="264.2" cy="369.3" r="3.8"/><circle cx="264.2" cy="309.3" r="3.8"/><circle cx="264.2" cy="249.3" r="3.8"/><circle cx="264.2" cy="189.3" r="3.8"/><circle cx="324.2" cy="429.3" r="3.8"/><circle cx="324.2" cy="369.3" r="3.8"/><circle cx="324.2" cy="309.3" r="3.8"/><circle cx="324.2" cy="249.3" r="3.8"/><circle cx="324.2" cy="189.3" r="3.8"/><circle cx="384.2" cy="369.3" r="3.8"/><circle cx="384.2" cy="309.3" r="3.8"/><circle cx="384.2" cy="249.3" r="3.8"/></g>
<g fill="url(#gZ)"><circle cx="174.2" cy="339.3" r="4.2"/><circle cx="174.2" cy="279.3" r="4.2"/><circle cx="234.2" cy="399.3" r="4.2"/><circle cx="234.2" cy="339.3" r="4.2"/><circle cx="234.2" cy="279.3" r="4.2"/><circle cx="234.2" cy="219.3" r="4.2"/><circle cx="294.2" cy="459.2" r="4.2"/><circle cx="294.2" cy="399.3" r="4.2"/><circle cx="294.2" cy="339.3" r="4.2"/><circle cx="294.2" cy="279.3" r="4.2"/><circle cx="294.2" cy="219.3" r="4.2"/><circle cx="294.2" cy="159.4" r="4.2"/><circle cx="354.2" cy="399.3" r="4.2"/><circle cx="354.2" cy="339.3" r="4.2"/><circle cx="354.2" cy="279.3" r="4.2"/><circle cx="354.2" cy="219.3" r="4.2"/><circle cx="414.2" cy="339.3" r="4.2"/><circle cx="414.2" cy="279.3" r="4.2"/></g>
<path stroke="#c8c8c8" stroke-width=".8" d="M200.6 400.7l-1.5-.4M200.6 217.9l-1.5 .4M261.6 461.7l-1.8-.7M265.9 461.7l2.1-.7M261.6 156.9l-1.8 .7M265.9 156.9l2.1 .7M322.5 461.7l-2.1-.7M326.8 461.7l1.8-.7M322.5 156.9l-2.1 .7M326.8 156.9l1.8 .7M387.8 400.7l1.5-.4M387.8 217.9l1.5 .4M202.4 405.1l.1 3M202.4 213.5l.1-3M263.6 466.3l0 2.9M263.6 152.3l0-2.9M324.8 466.3l0 2.9M324.8 152.3l0-2.9M386 405.1l-.1 3M386 213.5l-.1-3M198.2 401.3l-3.2 .1M198.2 217.3l-3.2-.1M259.5 462.7l-3.1 .1M259.5 155.9l-3.1-.1M328.9 462.7l3.1 .1M328.9 155.9l3.1-.1M390.2 401.3l3.2 .1M390.2 217.3l3.2-.1"/>
<path stroke="#0dd" stroke-width="1" d="M172.1 312.1l.5 2.8M172.1 306.5l.5-2.8M233.2 428.6l.2-3.3M233.2 373.1l.2 2.6M233.2 367.6l.2-3.1M233.2 312.1l.2 2.8M233.2 306.5l.2-2.8M233.2 251l.2 3.1M233.2 245.5l.2-2.6M233.2 190l.2 3.3M294.2 434.1l0 2.3M294.2 428.6l0-3.3M294.2 373.1l0 2.6M294.2 367.6l0-3.1M294.2 312.1l0 2.8M294.2 306.5l0-2.8M294.2 251l0 3.1M294.2 245.5l0-2.6M294.2 190l0 3.3M294.2 184.5l0-2.3M355.2 428.6l-.2-3.3M355.2 373.1l-.2 2.6M355.2 367.6l-.2-3.1M355.2 312.1l-.2 2.8M355.2 306.5l-.2-2.8M355.2 251l-.2 3.1M355.2 245.5l-.2-2.6M355.2 190l-.2 3.3M416.3 312.1l-.5 2.8M416.3 306.5l-.5-2.8"/>
<path stroke="#dc0000" stroke-width=".8" d="M169 339.6l-6.1 .3M169 279l-6.1-.3M419.4 339.6l6.1 .3M419.4 279l6.1-.3M202.5 408.1l.2 7.7M202.5 210.5l.2-7.7M263.6 469.2l.1 7.6M263.6 149.4l.1-7.6M324.8 469.2l-.1 7.6M324.8 149.4l-.1-7.6M385.9 408.1l-.2 7.7M385.9 210.5l-.2-7.7M195 401.4l-8.3 .2M195 217.2l-8.3-.2M256.4 462.8l-8.1 .4M256.4 155.8l-8.1-.4M332 462.8l8.1 .4M332 155.8l8.1-.4M393.4 401.4l8.3 .2M393.4 217.2l8.3-.2M139.3 313.5l1.8 4.6M139.3 305.1l1.8-4.6M449.1 313.5l-1.8 4.6M449.1 305.1l-1.8-4.6"/>
<path stroke="#0dd" stroke-width=".8" d="M172.1 373.1l.2 1.2M172.1 367.6l.2-1.4M172.1 251l.2 1.4M172.1 245.5l.2-1.2M233.2 434.1l.1 1.1M233.2 184.5l.1-1.1M355.2 434.1l-.1 1.1M355.2 184.5l-.1-1.1M416.3 373.1l-.2 1.2M416.3 367.6l-.2-1.4M416.3 251l-.2 1.4M416.3 245.5l-.2-1.2M168.4 370.8l-1.6 .1M168.4 247.8l-1.6-.1M229.9 432.3l-1.5 .2M229.9 186.3l-1.5-.2M358.5 432.3l1.5 .2M358.5 186.3l1.5-.2M420 370.8l1.6 .1M420 247.8l1.6-.1"/>
<path stroke="#e80000" stroke-width="1" d="M202.6 391.3l.2-7.9M202.6 330.2l.2-7.8M202.6 349.5l.2 7.6M202.6 269.1l.2-7.6M202.6 288.4l.2 7.8M202.6 227.3l.2 7.9M263.7 452.4l.1-8.1M263.7 391.3l.1-7.9M263.7 410.6l.1 7.5M263.7 330.2l.1-7.8M263.7 349.5l.1 7.6M263.7 269.1l.1-7.6M263.7 288.4l.1 7.8M263.7 208l.1-7.5M263.7 227.3l.1 7.9M263.7 166.2l.1 8.1M324.7 452.4l-.1-8.1M324.7 391.3l-.1-7.9M324.7 410.6l-.1 7.5M324.7 330.2l-.1-7.8M324.7 349.5l-.1 7.6M324.7 269.1l-.1-7.6M324.7 288.4l-.1 7.8M324.7 208l-.1-7.5M324.7 227.3l-.1 7.9M324.7 166.2l-.1 8.1M385.8 391.3l-.2-7.9M385.8 330.2l-.2-7.8M385.8 349.5l-.2 7.6M385.8 269.1l-.2-7.6M385.8 288.4l-.2 7.8M385.8 227.3l-.2 7.9M178.2 339.7l3.3 .3M178.2 278.9l3.3-.3M239 400.5l4 1M227.8 400.5l-5.4 1M239 339.7l4 .3M227.8 339.7l-5.4 .3M239 278.9l4-.3M227.8 278.9l-5.4-.3M239 218.1l4-1M227.8 218.1l-5.4-1M299.8 461.3l4.7 1.7M288.6 461.3l-4.7 1.7M299.8 400.5l4.7 1M288.6 400.5l-4.7 1M299.8 339.7l4.7 .3M288.6 339.7l-4.7 .3M299.8 278.9l4.7-.3M288.6 278.9l-4.7-.3M299.8 218.1l4.7-1M288.6 218.1l-4.7-1M299.8 157.3l4.7-1.7M288.6 157.3l-4.7-1.7M360.6 400.5l5.4 1M349.4 400.5l-4 1M360.6 339.7l5.4 .3M349.4 339.7l-4 .3M360.6 278.9l5.4-.3M349.4 278.9l-4-.3M360.6 218.1l5.4-1M349.4 218.1l-4-1M410.2 339.7l-3.3 .3M410.2 278.9l-3.3-.3M201.6 376.7l1 3.8M201.6 365.4l1-5.2M201.6 315l1 4.5M201.6 303.6l1-4.5M201.6 253.2l1 5.2M201.6 241.9l1-3.8M263.3 438.5l.3 3.1M263.3 427.1l.3-5.9M263.3 376.7l.3 3.8M263.3 365.4l.3-5.2M263.3 315l.3 4.5M263.3 303.6l.3-4.5M263.3 253.2l.3 5.2M263.3 241.9l.3-3.8M263.3 191.5l.3 5.9M263.3 180.1l.3-3.1M325.1 438.5l-.3 3.1M325.1 427.1l-.3-5.9M325.1 376.7l-.3 3.8M325.1 365.4l-.3-5.2M325.1 315l-.3 4.5M325.1 303.6l-.3-4.5M325.1 253.2l-.3 5.2M325.1 241.9l-.3-3.8M325.1 191.5l-.3 5.9M325.1 180.1l-.3-3.1M386.8 376.7l-1 3.8M386.8 365.4l-1-5.2M386.8 315l-1 4.5M386.8 303.6l-1-4.5M386.8 253.2l-1 5.2M386.8 241.9l-1-3.8M211.7 401.5l7.6 .2M192.3 340l-8.1 .1M211.7 340l7.6 .1M192.3 278.6l-8.1-.1M211.7 278.6l7.6-.1M211.7 217.1l7.6-.2M273.2 462.9l7.8 .4M253.8 401.5l-7.9 .2M273.2 401.5l7.8 .2M253.8 340l-7.9 .1M273.2 340l7.8 .1M253.8 278.6l-7.9-.1M273.2 278.6l7.8-.1M253.8 217.1l-7.9-.2M273.2 217.1l7.8-.2M273.2 155.7l7.8-.4M315.2 462.9l-7.8 .4M315.2 401.5l-7.8 .2M334.6 401.5l7.9 .2M315.2 340l-7.8 .1M334.6 340l7.9 .1M315.2 278.6l-7.8-.1M334.6 278.6l7.9-.1M315.2 217.1l-7.8-.2M334.6 217.1l7.9-.2M315.2 155.7l-7.8-.4M376.7 401.5l-7.6 .2M376.7 340l-7.6 .1M396.1 340l8.1 .1M376.7 278.6l-7.6-.1M396.1 278.6l8.1-.1M376.7 217.1l-7.6-.2"/>
<path stroke="#c8c8c8" stroke-width="1" d="M202.4 397.1l.2-5.8M202.4 335.9l.2-5.7M202.4 343.9l.2 5.6M202.4 274.7l.2-5.6M202.4 282.7l.2 5.7M202.4 221.5l.2 5.8M263.6 458.3l.1-5.9M263.6 397.1l.1-5.8M263.6 405.1l.1 5.5M263.6 335.9l.1-5.7M263.6 343.9l.1 5.6M263.6 274.7l.1-5.6M263.6 282.7l.1 5.7M263.6 213.5l.1-5.5M263.6 221.5l.1 5.8M263.6 160.3l.1 5.9M324.8 458.3l-.1-5.9M324.8 397.1l-.1-5.8M324.8 405.1l-.1 5.5M324.8 335.9l-.1-5.7M324.8 343.9l-.1 5.6M324.8 274.7l-.1-5.6M324.8 282.7l-.1 5.7M324.8 213.5l-.1-5.5M324.8 221.5l-.1 5.8M324.8 160.3l-.1 5.9M386 397.1l-.2-5.8M386 335.9l-.2-5.7M386 343.9l-.2 5.6M386 274.7l-.2-5.6M386 282.7l-.2 5.7M386 221.5l-.2 5.8M206.2 401.3l5.5 .2M198.2 340l-5.9 .1M206.2 340l5.5 .1M198.2 278.6l-5.9-.1M206.2 278.6l5.5-.1M206.2 217.3l5.5-.2M267.5 462.7l5.7 .3M259.5 401.3l-5.8 .2M267.5 401.3l5.7 .2M259.5 340l-5.8 .1M267.5 340l5.7 .1M259.5 278.6l-5.8-.1M267.5 278.6l5.7-.1M259.5 217.3l-5.8-.2M267.5 217.3l5.7-.2M267.5 155.9l5.7-.3M320.9 462.7l-5.7 .3M320.9 401.3l-5.7 .2M328.9 401.3l5.8 .2M320.9 340l-5.7 .1M328.9 340l5.8 .1M320.9 278.6l-5.7-.1M328.9 278.6l5.8-.1M320.9 217.3l-5.7-.2M328.9 217.3l5.8-.2M320.9 155.9l-5.7-.3M382.2 401.3l-5.5 .2M382.2 340l-5.5 .1M390.2 340l5.9 .1M382.2 278.6l-5.5-.1M390.2 278.6l5.9-.1M382.2 217.3l-5.5-.2"/>
<g fill="url(#gO)"><circle cx="202.9" cy="381.4" r="2.1"/><circle cx="202.9" cy="320.5" r="2.1"/><circle cx="202.9" cy="259.6" r="2.1"/><circle cx="263.8" cy="442.3" r="2.1"/><circle cx="263.8" cy="381.4" r="2.1"/><circle cx="263.8" cy="320.5" r="2.1"/><circle cx="263.8" cy="259.6" r="2.1"/><circle cx="263.8" cy="198.7" r="2.1"/><circle cx="324.6" cy="442.3" r="2.1"/><circle cx="324.6" cy="381.4" r="2.1"/><circle cx="324.6" cy="320.5" r="2.1"/><circle cx="324.6" cy="259.6" r="2.1"/><circle cx="324.6" cy="198.7" r="2.1"/><circle cx="385.5" cy="381.4" r="2.1"/><circle cx="385.5" cy="320.5" r="2.1"/><circle cx="385.5" cy="259.6" r="2.1"/><circle cx="202.9" cy="359" r="2.1"/><circle cx="202.9" cy="298.1" r="2.1"/><circle cx="202.9" cy="237.2" r="2.1"/><circle cx="263.8" cy="419.9" r="2.1"/><circle cx="263.8" cy="359" r="2.1"/><circle cx="263.8" cy="298.1" r="2.1"/><circle cx="263.8" cy="237.2" r="2.1"/><circle cx="263.8" cy="176.3" r="2.1"/><circle cx="324.6" cy="419.9" r="2.1"/><circle cx="324.6" cy="359" r="2.1"/><circle cx="324.6" cy="298.1" r="2.1"/><circle cx="324.6" cy="237.2" r="2.1"/><circle cx="324.6" cy="176.3" r="2.1"/><circle cx="385.5" cy="359" r="2.1"/><circle cx="385.5" cy="298.1" r="2.1"/><circle cx="385.5" cy="237.2" r="2.1"/></g>
<g fill="url(#gS)"><circle cx="171.7" cy="370.6" r="3.9"/><circle cx="171.7" cy="309.3" r="3.9"/><circle cx="171.7" cy="248" r="3.9"/><circle cx="232.9" cy="431.8" r="3.9"/><circle cx="232.9" cy="370.6" r="3.9"/><circle cx="232.9" cy="309.3" r="3.9"/><circle cx="232.9" cy="248" r="3.9"/><circle cx="232.9" cy="186.8" r="3.9"/><circle cx="294.2" cy="431.8" r="3.9"/><circle cx="294.2" cy="370.6" r="3.9"/><circle cx="294.2" cy="309.3" r="3.9"/><circle cx="294.2" cy="248" r="3.9"/><circle cx="294.2" cy="186.8" r="3.9"/><circle cx="355.5" cy="431.8" r="3.9"/><circle cx="355.5" cy="370.6" r="3.9"/><circle cx="355.5" cy="309.3" r="3.9"/><circle cx="355.5" cy="248" r="3.9"/><circle cx="355.5" cy="186.8" r="3.9"/><circle cx="416.7" cy="370.6" r="3.9"/><circle cx="416.7" cy="309.3" r="3.9"/><circle cx="416.7" cy="248" r="3.9"/></g>
<g fill="url(#gZ)"><circle cx="202.3" cy="401.2" r="4.3"/><circle cx="202.3" cy="339.9" r="4.3"/><circle cx="202.3" cy="278.7" r="4.3"/><circle cx="202.3" cy="217.4" r="4.3"/><circle cx="263.6" cy="462.5" r="4.3"/><circle cx="263.6" cy="401.2" r="4.3"/><circle cx="263.6" cy="339.9" r="4.3"/><circle cx="263.6" cy="278.7" r="4.3"/><circle cx="263.6" cy="217.4" r="4.3"/><circle cx="263.6" cy="156.1" r="4.3"/><circle cx="324.8" cy="462.5" r="4.3"/><circle cx="324.8" cy="401.2" r="4.3"/><circle cx="324.8" cy="339.9" r="4.3"/><circle cx="324.8" cy="278.7" r="4.3"/><circle cx="324.8" cy="217.4" r="4.3"/><circle cx="324.8" cy="156.1" r="4.3"/><circle cx="386.1" cy="401.2" r="4.3"/><circle cx="386.1" cy="339.9" r="4.3"/><circle cx="386.1" cy="278.7" r="4.3"/><circle cx="386.1" cy="217.4" r="4.3"/></g>
<path stroke="#0dd" stroke-width="1" d="M174 370.8l2.4 .2M168.4 309.3l-3.4 0M174 309.3l2.4 0M174 247.8l2.4-.2M235.5 432.3l2.6 .5M229.9 370.8l-3.1 .2M235.5 370.8l2.6 .2M229.9 309.3l-3.1 0M235.5 309.3l2.6 0M229.9 247.8l-3.1-.2M235.5 247.8l2.6-.2M235.5 186.3l2.6-.5M291.4 432.3l-2.9 .5M297 432.3l2.9 .5M291.4 370.8l-2.9 .2M297 370.8l2.9 .2M291.4 309.3l-2.9 0M297 309.3l2.9 0M291.4 247.8l-2.9-.2M297 247.8l2.9-.2M291.4 186.3l-2.9-.5M297 186.3l2.9-.5M352.9 432.3l-2.6 .5M352.9 370.8l-2.6 .2M358.5 370.8l3.1 .2M352.9 309.3l-2.6 0M358.5 309.3l3.1 0M352.9 247.8l-2.6-.2M358.5 247.8l3.1-.2M352.9 186.3l-2.6-.5M414.4 370.8l-2.4 .2M414.4 309.3l-2.4 0M420 309.3l3.4 0M414.4 247.8l-2.4-.2M172.3 340.5l3.4-.1M172.3 278.1l3.4 .1M234.7 402.8l3.1-.4M229 402.8l-2.6-.4M234.7 340.5l3.1-.1M229 340.5l-2.6-.1M234.7 278.1l3.1 .1M229 278.1l-2.6 .1M234.7 215.8l3.1 .4M229 215.8l-2.6 .4M297 465.2l2.9-.6M291.4 465.2l-2.9-.6M297 402.8l2.9-.4M291.4 402.8l-2.9-.4M297 340.5l2.9-.1M291.4 340.5l-2.9-.1M297 278.1l2.9 .1M291.4 278.1l-2.9 .1M297 215.8l2.9 .4M291.4 215.8l-2.9 .4M297 153.4l2.9 .6M291.4 153.4l-2.9 .6M359.4 402.8l2.6-.4M353.7 402.8l-3.1-.4M359.4 340.5l2.6-.1M353.7 340.5l-3.1-.1M359.4 278.1l2.6 .1M353.7 278.1l-3.1 .1M359.4 215.8l2.6 .4M353.7 215.8l-3.1 .4M416.1 340.5l-3.4-.1M416.1 278.1l-3.4 .1"/>
<path stroke="#c8c8c8" stroke-width=".8" d="M201.8 403.9l-.4 2.4M201.8 214.7l-.4-2.4M263.4 465.5l-.1 2.7M263.4 153.1l-.1-2.7M325 465.5l.1 2.7M325 153.1l.1-2.7M386.6 403.9l.4 2.4M386.6 214.7l.4-2.4M138.5 311.5l.7 2M138.5 307.1l.7-2M449.9 311.5l-.7 2M449.9 307.1l-.7-2M133.8 309.3l-3 0M454.6 309.3l3 0"/>
<path stroke="#dc0000" stroke-width=".8" d="M166.8 370.9l-5.5 .4M166.8 247.7l-5.5-.4M228.4 432.5l-5.1 .8M228.4 186.1l-5.1-.8M360 432.5l5.1 .8M360 186.1l5.1-.8M421.6 370.9l5.5 .4M421.6 247.7l5.5-.4M165.5 340.4l-3.9-.2M165.5 278.2l-3.9 .2M422.9 340.4l3.9-.2M422.9 278.2l3.9 .2M201.4 406.3l-1.1 5.9M201.4 212.3l-1.1-5.9M263.3 468.2l-.4 6.6M263.3 150.4l-.4-6.6M325.1 468.2l.4 6.6M325.1 150.4l.4-6.6M387 406.3l1.1 5.9M387 212.3l1.1-5.9M130.8 309.3l-7.7 0M457.6 309.3l7.7 0"/>
<path stroke="#c8c8c8" stroke-width="1" d="M201.8 399.5l-.8-2.7M201.8 342.3l-.8 3.8M201.8 337.9l-.8-3.3M201.8 280.7l-.8 3.3M201.8 276.3l-.8-3.8M201.8 219.1l-.8 2.7M263.4 461.1l-.3-2.2M263.4 403.9l-.3 4.3M263.4 399.5l-.3-2.7M263.4 342.3l-.3 3.8M263.4 337.9l-.3-3.3M263.4 280.7l-.3 3.3M263.4 276.3l-.3-3.8M263.4 219.1l-.3 2.7M263.4 214.7l-.3-4.3M263.4 157.5l-.3 2.2M325 461.1l.3-2.2M325 403.9l.3 4.3M325 399.5l.3-2.7M325 342.3l.3 3.8M325 337.9l.3-3.3M325 280.7l.3 3.3M325 276.3l.3-3.8M325 219.1l.3 2.7M325 214.7l.3-4.3M325 157.5l.3 2.2M386.6 399.5l.8-2.7M386.6 342.3l.8 3.8M386.6 337.9l.8-3.3M386.6 280.7l.8 3.3M386.6 276.3l.8-3.8M386.6 219.1l.8 2.7M200.8 373.8l.8 2.9M200.8 369.3l.8-4M200.8 311.5l.8 3.5M200.8 307.1l.8-3.5M200.8 249.3l.8 4M200.8 244.8l.8-2.9M263.1 436.1l.3 2.4M263.1 431.6l.3-4.5M263.1 373.8l.3 2.9M263.1 369.3l.3-4M263.1 311.5l.3 3.5M263.1 307.1l.3-3.5M263.1 249.3l.3 4M263.1 244.8l.3-2.9M263.1 187l.3 4.5M263.1 182.5l.3-2.4M325.3 436.1l-.3 2.4M325.3 431.6l-.3-4.5M325.3 373.8l-.3 2.9M325.3 369.3l-.3-4M325.3 311.5l-.3 3.5M325.3 307.1l-.3-3.5M325.3 249.3l-.3 4M325.3 244.8l-.3-2.9M325.3 187l-.3 4.5M325.3 182.5l-.3-2.4M387.6 373.8l-.8 2.9M387.6 369.3l-.8-4M387.6 311.5l-.8 3.5M387.6 307.1l-.8-3.5M387.6 249.3l-.8 4M387.6 244.8l-.8-2.9M142 309.3l6.1 0M204.5 371.8l6-.1M196.3 371.8l-5.6-.1M204.5 309.3l6 0M196.3 309.3l-5.6 0M204.5 246.8l6 .1M196.3 246.8l-5.6 .1M267 434.4l5.8-.2M258.9 434.4l-5.7-.2M267 371.8l5.8-.1M258.9 371.8l-5.7-.1M267 309.3l5.8 0M258.9 309.3l-5.7 0M267 246.8l5.8 .1M258.9 246.8l-5.7 .1M267 184.2l5.8 .2M258.9 184.2l-5.7 .2M329.5 434.4l5.7-.2M321.4 434.4l-5.8-.2M329.5 371.8l5.7-.1M321.4 371.8l-5.8-.1M329.5 309.3l5.7 0M321.4 309.3l-5.8 0M329.5 246.8l5.7 .1M321.4 246.8l-5.8 .1M329.5 184.2l5.7 .2M321.4 184.2l-5.8 .2M392.1 371.8l5.6-.1M383.9 371.8l-6-.1M392.1 309.3l5.6 0M383.9 309.3l-6 0M392.1 246.8l5.6 .1M383.9 246.8l-6 .1M446.4 309.3l-6.1 0"/>
<path stroke="#e80000" stroke-width="1" d="M176.4 371l3.6 .4M165 309.3l-5 0M176.4 309.3l3.6 0M176.4 247.6l3.6-.4M238.1 432.8l3.9 .7M226.8 371l-4.6 .4M238.1 371l3.9 .4M226.8 309.3l-4.6 0M238.1 309.3l3.9 0M226.8 247.6l-4.6-.4M238.1 247.6l3.9-.4M238.1 185.8l3.9-.7M288.5 432.8l-4.3 .7M299.9 432.8l4.3 .7M288.5 371l-4.3 .4M299.9 371l4.3 .4M288.5 309.3l-4.3 0M299.9 309.3l4.3 0M288.5 247.6l-4.3-.4M299.9 247.6l4.3-.4M288.5 185.8l-4.3-.7M299.9 185.8l4.3-.7M350.3 432.8l-3.9 .7M350.3 371l-3.9 .4M361.6 371l4.6 .4M350.3 309.3l-3.9 0M361.6 309.3l4.6 0M350.3 247.6l-3.9-.4M361.6 247.6l4.6-.4M350.3 185.8l-3.9-.7M412 371l-3.6 .4M412 309.3l-3.6 0M423.4 309.3l5 0M412 247.6l-3.6-.4M175.7 340.4l4.9-.2M175.7 278.2l4.9 .2M237.8 402.5l4.6-.5M226.4 402.5l-3.8-.5M237.8 340.4l4.6-.2M226.4 340.4l-3.8-.2M237.8 278.2l4.6 .2M226.4 278.2l-3.8 .2M237.8 216.1l4.6 .5M226.4 216.1l-3.8 .5M299.9 464.6l4.2-.9M288.5 464.6l-4.2-.9M299.9 402.5l4.2-.5M288.5 402.5l-4.2-.5M299.9 340.4l4.2-.2M288.5 340.4l-4.2-.2M299.9 278.2l4.2 .2M288.5 278.2l-4.2 .2M299.9 216.1l4.2 .5M288.5 216.1l-4.2 .5M299.9 154l4.2 .9M288.5 154l-4.2 .9M362 402.5l3.8-.5M350.6 402.5l-4.6-.5M362 340.4l3.8-.2M350.6 340.4l-4.6-.2M362 278.2l3.8 .2M350.6 278.2l-4.6 .2M362 216.1l3.8 .5M350.6 216.1l-4.6 .5M412.7 340.4l-4.9-.2M412.7 278.2l-4.9 .2M148 309.3l8.3 0M210.4 371.7l8.1-.2M190.7 371.7l-7.7-.2M210.4 309.3l8.1 0M190.7 309.3l-7.7 0M210.4 246.9l8.1 .2M190.7 246.9l-7.7 .2M272.9 434.1l8-.3M253.1 434.1l-7.8-.3M272.9 371.7l8-.2M253.1 371.7l-7.8-.2M272.9 309.3l8 0M253.1 309.3l-7.8 0M272.9 246.9l8 .2M253.1 246.9l-7.8 .2M272.9 184.5l8 .3M253.1 184.5l-7.8 .3M335.3 434.1l7.8-.3M315.5 434.1l-8-.3M335.3 371.7l7.8-.2M315.5 371.7l-8-.2M335.3 309.3l7.8 0M315.5 309.3l-8 0M335.3 246.9l7.8 .2M315.5 246.9l-8 .2M335.3 184.5l7.8 .3M315.5 184.5l-8 .3M397.7 371.7l7.7-.2M378 371.7l-8.1-.2M397.7 309.3l7.7 0M378 309.3l-8.1 0M397.7 246.9l7.7 .2M378 246.9l-8.1 .2M440.4 309.3l-8.3 0M201 396.8l-1.1-3.7M201 346.1l-1.1 5.1M201 334.6l-1.1-4.4M201 284l-1.1 4.4M201 272.5l-1.1-5.1M201 221.8l-1.1 3.7M263.1 458.9l-.4-3M263.1 408.2l-.4 5.9M263.1 396.8l-.4-3.7M263.1 346.1l-.4 5.1M263.1 334.6l-.4-4.4M263.1 284l-.4 4.4M263.1 272.5l-.4-5.1M263.1 221.8l-.4 3.7M263.1 210.4l-.4-5.9M263.1 159.7l-.4 3M325.3 458.9l.4-3M325.3 408.2l.4 5.9M325.3 396.8l.4-3.7M325.3 346.1l.4 5.1M325.3 334.6l.4-4.4M325.3 284l.4 4.4M325.3 272.5l.4-5.1M325.3 221.8l.4 3.7M325.3 210.4l.4-5.9M325.3 159.7l.4 3M387.4 396.8l1.1-3.7M387.4 346.1l1.1 5.1M387.4 334.6l1.1-4.4M387.4 284l1.1 4.4M387.4 272.5l1.1-5.1M387.4 221.8l1.1 3.7"/>
<path stroke="#0dd" stroke-width=".8" d="M166.6 340.5l-1.1-.1M166.6 278.1l-1.1 .1M421.8 340.5l1.1-.1M421.8 278.1l1.1 .1"/>
<g fill="url(#gO)"><circle cx="182.3" cy="340.1" r="2.2"/><circle cx="182.3" cy="278.5" r="2.2"/><circle cx="243.9" cy="401.8" r="2.2"/><circle cx="243.9" cy="340.1" r="2.2"/><circle cx="243.9" cy="278.5" r="2.2"/><circle cx="243.9" cy="216.8" r="2.2"/><circle cx="305.5" cy="463.4" r="2.2"/><circle cx="305.5" cy="401.8" r="2.2"/><circle cx="305.5" cy="340.1" r="2.2"/><circle cx="305.5" cy="278.5" r="2.2"/><circle cx="305.5" cy="216.8" r="2.2"/><circle cx="305.5" cy="155.2" r="2.2"/><circle cx="367.2" cy="401.8" r="2.2"/><circle cx="367.2" cy="340.1" r="2.2"/><circle cx="367.2" cy="278.5" r="2.2"/><circle cx="367.2" cy="216.8" r="2.2"/><circle cx="221.2" cy="401.8" r="2.2"/><circle cx="221.2" cy="340.1" r="2.2"/><circle cx="221.2" cy="278.5" r="2.2"/><circle cx="221.2" cy="216.8" r="2.2"/><circle cx="282.9" cy="463.4" r="2.2"/><circle cx="282.9" cy="401.8" r="2.2"/><circle cx="282.9" cy="340.1" r="2.2"/><circle cx="282.9" cy="278.5" r="2.2"/><circle cx="282.9" cy="216.8" r="2.2"/><circle cx="282.9" cy="155.2" r="2.2"/><circle cx="344.5" cy="401.8" r="2.2"/><circle cx="344.5" cy="340.1" r="2.2"/><circle cx="344.5" cy="278.5" r="2.2"/><circle cx="344.5" cy="216.8" r="2.2"/><circle cx="406.1" cy="340.1" r="2.2"/><circle cx="406.1" cy="278.5" r="2.2"/><circle cx="158.3" cy="309.3" r="2.2"/><circle cx="220.5" cy="371.5" r="2.2"/><circle cx="220.5" cy="309.3" r="2.2"/><circle cx="220.5" cy="247.1" r="2.2"/><circle cx="282.8" cy="433.7" r="2.2"/><circle cx="282.8" cy="371.5" r="2.2"/><circle cx="282.8" cy="309.3" r="2.2"/><circle cx="282.8" cy="247.1" r="2.2"/><circle cx="282.8" cy="184.9" r="2.2"/><circle cx="345" cy="433.7" r="2.2"/><circle cx="345" cy="371.5" r="2.2"/><circle cx="345" cy="309.3" r="2.2"/><circle cx="345" cy="247.1" r="2.2"/><circle cx="345" cy="184.9" r="2.2"/><circle cx="407.2" cy="371.5" r="2.2"/><circle cx="407.2" cy="309.3" r="2.2"/><circle cx="407.2" cy="247.1" r="2.2"/><circle cx="181.2" cy="371.5" r="2.2"/><circle cx="181.2" cy="309.3" r="2.2"/><circle cx="181.2" cy="247.1" r="2.2"/><circle cx="243.4" cy="433.7" r="2.2"/><circle cx="243.4" cy="371.5" r="2.2"/><circle cx="243.4" cy="309.3" r="2.2"/><circle cx="243.4" cy="247.1" r="2.2"/><circle cx="243.4" cy="184.9" r="2.2"/><circle cx="305.6" cy="433.7" r="2.2"/><circle cx="305.6" cy="371.5" r="2.2"/><circle cx="305.6" cy="309.3" r="2.2"/><circle cx="305.6" cy="247.1" r="2.2"/><circle cx="305.6" cy="184.9" r="2.2"/><circle cx="367.9" cy="371.5" r="2.2"/><circle cx="367.9" cy="309.3" r="2.2"/><circle cx="367.9" cy="247.1" r="2.2"/><circle cx="430.1" cy="309.3" r="2.2"/></g>
<path stroke="#c8c8c8" stroke-width=".8" d="M137.5 305.2l-.2-3.2M137.5 313.4l-.2 3.2M450.9 305.2l.2-3.2M450.9 313.4l.2 3.2M134.6 309.3l-2.8 0M453.8 309.3l2.8 0"/>
<path stroke="#e80000" stroke-width="1" d="M173.8 372.4l6.1-.7M162.2 309.3l-3.2 0M173.8 309.3l6.1 0M173.8 246.2l6.1 .7M236.9 435.5l5.3-1.4M225.3 372.4l-3.9-.7M236.9 372.4l5.3-.7M225.3 309.3l-3.9 0M236.9 309.3l5.3 0M225.3 246.2l-3.9 .7M236.9 246.2l5.3 .7M236.9 183.1l5.3 1.4M288.4 435.5l-4.6-1.4M300 435.5l4.6-1.4M288.4 372.4l-4.6-.7M300 372.4l4.6-.7M288.4 309.3l-4.6 0M300 309.3l4.6 0M288.4 246.2l-4.6 .7M300 246.2l4.6 .7M288.4 183.1l-4.6 1.4M300 183.1l4.6 1.4M351.5 435.5l-5.3-1.4M351.5 372.4l-5.3-.7M363.1 372.4l3.9-.7M351.5 309.3l-5.3 0M363.1 309.3l3.9 0M351.5 246.2l-5.3 .7M363.1 246.2l3.9 .7M351.5 183.1l-5.3 1.4M414.6 372.4l-6.1-.7M414.6 309.3l-6.1 0M426.2 309.3l3.2 0M414.6 246.2l-6.1 .7M200 362.2l-.2-7.9M200 382l-.2 8.2M200 299.4l-.2-8M200 319.2l-.2 8M200 236.6l-.2-8.2M200 256.4l-.2 7.9M262.8 425l-.1-7.7M262.8 444.8l-.1 8.3M262.8 362.2l-.1-7.9M262.8 382l-.1 8.2M262.8 299.4l-.1-8M262.8 319.2l-.1 8M262.8 236.6l-.1-8.2M262.8 256.4l-.1 7.9M262.8 173.8l-.1-8.3M262.8 193.6l-.1 7.7M325.6 425l.1-7.7M325.6 444.8l.1 8.3M325.6 362.2l.1-7.9M325.6 382l.1 8.2M325.6 299.4l.1-8M325.6 319.2l.1 8M325.6 236.6l.1-8.2M325.6 256.4l.1 7.9M325.6 173.8l.1-8.3M325.6 193.6l.1 7.7M388.4 362.2l.2-7.9M388.4 382l.2 8.2M388.4 299.4l.2-8M388.4 319.2l.2 8M388.4 236.6l.2-8.2M388.4 256.4l.2 7.9M168 346.7l-.7 4.6M168 335l-.7-4.2M168 283.6l-.7 4.2M168 271.9l-.7-4.6M231.1 409.8l-.4 4.9M231.1 398.1l-.4-3.8M231.1 346.7l-.4 4.6M231.1 335l-.4-4.2M231.1 283.6l-.4 4.2M231.1 271.9l-.4-4.6M231.1 220.5l-.4 3.8M231.1 208.8l-.4-4.9M294.2 472.9l0 5.3M294.2 461.3l0-3.4M294.2 409.8l0 4.9M294.2 398.1l0-3.8M294.2 346.7l0 4.6M294.2 335l0-4.2M294.2 283.6l0 4.2M294.2 271.9l0-4.6M294.2 220.5l0 3.8M294.2 208.8l0-4.9M294.2 157.3l0 3.4M294.2 145.7l0-5.3M357.3 409.8l.4 4.9M357.3 398.1l.4-3.8M357.3 346.7l.4 4.6M357.3 335l.4-4.2M357.3 283.6l.4 4.2M357.3 271.9l.4-4.6M357.3 220.5l.4 3.8M357.3 208.8l.4-4.9M420.4 346.7l.7 4.6M420.4 335l.7-4.2M420.4 283.6l.7 4.2M420.4 271.9l.7-4.6M199 398.7l.6-4.8M199 346.9l.6 4.1M199 335.2l.6-4.5M199 283.4l.6 4.5M199 271.7l.6-4.1M199 219.9l.6 4.8M262.5 462.2l.2-5.2M262.5 410.4l.2 3.7M262.5 398.7l.2-4.8M262.5 346.9l.2 4.1M262.5 335.2l.2-4.5M262.5 283.4l.2 4.5M262.5 271.7l.2-4.1M262.5 219.9l.2 4.8M262.5 208.2l.2-3.7M262.5 156.4l.2 5.2M325.9 462.2l-.2-5.2M325.9 410.4l-.2 3.7M325.9 398.7l-.2-4.8M325.9 346.9l-.2 4.1M325.9 335.2l-.2-4.5M325.9 283.4l-.2 4.5M325.9 271.7l-.2-4.1M325.9 219.9l-.2 4.8M325.9 208.2l-.2-3.7M325.9 156.4l-.2 5.2M389.4 398.7l-.6-4.8M389.4 346.9l-.6 4.1M389.4 335.2l-.6-4.5M389.4 283.4l-.6 4.5M389.4 271.7l-.6-4.1M389.4 219.9l-.6 4.8"/>
<path stroke="#c8c8c8" stroke-width="1" d="M200.2 367.9l-.2-5.7M200.2 376.1l-.2 5.9M200.2 305.2l-.2-5.8M200.2 313.4l-.2 5.8M200.2 242.5l-.2-5.9M200.2 250.7l-.2 5.7M262.9 430.6l-.1-5.6M262.9 438.8l-.1 6.1M262.9 367.9l-.1-5.7M262.9 376.1l-.1 5.9M262.9 305.2l-.1-5.8M262.9 313.4l-.1 5.8M262.9 242.5l-.1-5.9M262.9 250.7l-.1 5.7M262.9 179.8l-.1-6.1M262.9 188l-.1 5.6M325.5 430.6l.1-5.6M325.5 438.8l.1 6.1M325.5 367.9l.1-5.7M325.5 376.1l.1 5.9M325.5 305.2l.1-5.8M325.5 313.4l.1 5.8M325.5 242.5l.1-5.9M325.5 250.7l.1 5.7M325.5 179.8l.1-6.1M325.5 188l.1 5.6M388.2 367.9l.2-5.7M388.2 376.1l.2 5.9M388.2 305.2l.2-5.8M388.2 313.4l.2 5.8M388.2 242.5l.2-5.9M388.2 250.7l.2 5.7M139.1 309.3l2.2 0M202 372.2l2.8 .5M197.5 372.2l-4.4 .5M202 309.3l2.8 0M197.5 309.3l-4.4 0M202 246.4l2.8-.5M197.5 246.4l-4.4-.5M265 435.2l3.3 1.1M260.5 435.2l-3.9 1.1M265 372.2l3.3 .5M260.5 372.2l-3.9 .5M265 309.3l3.3 0M260.5 309.3l-3.9 0M265 246.4l3.3-.5M260.5 246.4l-3.9-.5M265 183.4l3.3-1.1M260.5 183.4l-3.9-1.1M327.9 435.2l3.9 1.1M323.4 435.2l-3.3 1.1M327.9 372.2l3.9 .5M323.4 372.2l-3.3 .5M327.9 309.3l3.9 0M323.4 309.3l-3.3 0M327.9 246.4l3.9-.5M323.4 246.4l-3.3-.5M327.9 183.4l3.9-1.1M323.4 183.4l-3.3-1.1M390.9 372.2l4.4 .5M386.4 372.2l-2.8 .5M390.9 309.3l4.4 0M386.4 309.3l-2.8 0M390.9 246.4l4.4-.5M386.4 246.4l-2.8-.5M449.3 309.3l-2.2 0M169.2 373l4.6-.6M164.6 309.3l-2.4 0M169.2 309.3l4.6 0M169.2 245.6l4.6 .6M232.8 436.6l4.1-1.1M228.3 373l-3-.6M232.8 373l4.1-.6M228.3 309.3l-3 0M232.8 309.3l4.1 0M228.3 245.6l-3 .6M232.8 245.6l4.1 .6M232.8 182l4.1 1.1M291.9 436.6l-3.5-1.1M296.5 436.6l3.5-1.1M291.9 373l-3.5-.6M296.5 373l3.5-.6M291.9 309.3l-3.5 0M296.5 309.3l3.5 0M291.9 245.6l-3.5 .6M296.5 245.6l3.5 .6M291.9 182l-3.5 1.1M296.5 182l3.5 1.1M355.6 436.6l-4.1-1.1M355.6 373l-4.1-.6M360.1 373l3-.6M355.6 309.3l-4.1 0M360.1 309.3l3 0M355.6 245.6l-4.1 .6M360.1 245.6l3 .6M355.6 182l-4.1 1.1M419.2 373l-4.6-.6M419.2 309.3l-4.6 0M423.8 309.3l2.4 0M419.2 245.6l-4.6 .6"/>
<path stroke="#dc0000" stroke-width=".8" d="M137.3 302l-.4-8.2M137.3 316.6l-.4 8.2M451.1 302l.4-8.2M451.1 316.6l.4 8.2M163.2 372.6l-3.2-.7M163.2 246l-3.2 .7M226.6 436l-4-1.5M226.6 182.6l-4 1.5M289.9 499.3l-4.7-2.2M298.5 499.3l4.7-2.2M289.9 119.3l-4.7 2.2M298.5 119.3l4.7 2.2M361.8 436l4-1.5M361.8 182.6l4 1.5M425.2 372.6l3.2-.7M425.2 246l3.2 .7M135.1 345.4l1 4.6M135.1 336.8l1-5M135.1 281.8l1 5M135.1 273.2l1-4.6M198.8 409l.6 4.2M198.8 209.6l.6-4.2M262.4 472.7l.2 3.7M262.4 145.9l.2-3.7M326 472.7l-.2 3.7M326 145.9l-.2-3.7M389.6 409l-.6 4.2M389.6 209.6l-.6-4.2M453.3 345.4l-1 4.6M453.3 336.8l-1-5M453.3 281.8l-1 5M453.3 273.2l-1-4.6"/>
<path stroke="#0dd" stroke-width="1" d="M168.5 343.6l-.5 3.1M168.5 337.9l-.5-2.8M168.5 280.7l-.5 2.8M168.5 275l-.5-3.1M231.3 406.4l-.3 3.3M231.3 400.7l-.3-2.6M231.3 343.6l-.3 3.1M231.3 337.9l-.3-2.8M231.3 280.7l-.3 2.8M231.3 275l-.3-3.1M231.3 217.9l-.3 2.6M231.3 212.2l-.3-3.3M294.2 469.3l0 3.6M294.2 463.6l0-2.3M294.2 406.4l0 3.3M294.2 400.7l0-2.6M294.2 343.6l0 3.1M294.2 337.9l0-2.8M294.2 280.7l0 2.8M294.2 275l0-3.1M294.2 217.9l0 2.6M294.2 212.2l0-3.3M294.2 155l0 2.3M294.2 149.3l0-3.6M357.1 406.4l.3 3.3M357.1 400.7l.3-2.6M357.1 343.6l.3 3.1M357.1 337.9l.3-2.8M357.1 280.7l.3 2.8M357.1 275l.3-3.1M357.1 217.9l.3 2.6M357.1 212.2l.3-3.3M419.9 343.6l.5 3.1M419.9 337.9l.5-2.8M419.9 280.7l.5 2.8M419.9 275l.5-3.1"/>
<g fill="url(#gO)"><circle cx="199.7" cy="352.4" r="2.2"/><circle cx="199.7" cy="289.4" r="2.2"/><circle cx="199.7" cy="226.4" r="2.2"/><circle cx="262.7" cy="415.4" r="2.2"/><circle cx="262.7" cy="352.4" r="2.2"/><circle cx="262.7" cy="289.4" r="2.2"/><circle cx="262.7" cy="226.4" r="2.2"/><circle cx="262.7" cy="163.4" r="2.2"/><circle cx="325.7" cy="415.4" r="2.2"/><circle cx="325.7" cy="352.4" r="2.2"/><circle cx="325.7" cy="289.4" r="2.2"/><circle cx="325.7" cy="226.4" r="2.2"/><circle cx="325.7" cy="163.4" r="2.2"/><circle cx="388.7" cy="352.4" r="2.2"/><circle cx="388.7" cy="289.4" r="2.2"/><circle cx="388.7" cy="226.4" r="2.2"/><circle cx="199.7" cy="392.2" r="2.2"/><circle cx="199.7" cy="329.2" r="2.2"/><circle cx="199.7" cy="266.2" r="2.2"/><circle cx="262.7" cy="455.2" r="2.2"/><circle cx="262.7" cy="392.2" r="2.2"/><circle cx="262.7" cy="329.2" r="2.2"/><circle cx="262.7" cy="266.2" r="2.2"/><circle cx="262.7" cy="203.2" r="2.2"/><circle cx="325.7" cy="455.2" r="2.2"/><circle cx="325.7" cy="392.2" r="2.2"/><circle cx="325.7" cy="329.2" r="2.2"/><circle cx="325.7" cy="266.2" r="2.2"/><circle cx="325.7" cy="203.2" r="2.2"/><circle cx="388.7" cy="392.2" r="2.2"/><circle cx="388.7" cy="329.2" r="2.2"/><circle cx="388.7" cy="266.2" r="2.2"/></g>
<g fill="url(#gS)"><circle cx="169" cy="340.6" r="4"/><circle cx="169" cy="278" r="4"/><circle cx="231.6" cy="403.2" r="4"/><circle cx="231.6" cy="340.6" r="4"/><circle cx="231.6" cy="278" r="4"/><circle cx="231.6" cy="215.4" r="4"/><circle cx="294.2" cy="465.8" r="4"/><circle cx="294.2" cy="403.2" r="4"/><circle cx="294.2" cy="340.6" r="4"/><circle cx="294.2" cy="278" r="4"/><circle cx="294.2" cy="215.4" r="4"/><circle cx="294.2" cy="152.8" r="4"/><circle cx="356.8" cy="403.2" r="4"/><circle cx="356.8" cy="340.6" r="4"/><circle cx="356.8" cy="278" r="4"/><circle cx="356.8" cy="215.4" r="4"/><circle cx="419.4" cy="340.6" r="4"/><circle cx="419.4" cy="278" r="4"/></g>
<g fill="url(#gZ)"><circle cx="137.7" cy="309.3" r="4.4"/><circle cx="200.3" cy="371.9" r="4.4"/><circle cx="200.3" cy="309.3" r="4.4"/><circle cx="200.3" cy="246.7" r="4.4"/><circle cx="262.9" cy="434.5" r="4.4"/><circle cx="262.9" cy="371.9" r="4.4"/><circle cx="262.9" cy="309.3" r="4.4"/><circle cx="262.9" cy="246.7" r="4.4"/><circle cx="262.9" cy="184.1" r="4.4"/><circle cx="325.5" cy="434.5" r="4.4"/><circle cx="325.5" cy="371.9" r="4.4"/><circle cx="325.5" cy="309.3" r="4.4"/><circle cx="325.5" cy="246.7" r="4.4"/><circle cx="325.5" cy="184.1" r="4.4"/><circle cx="388.1" cy="371.9" r="4.4"/><circle cx="388.1" cy="309.3" r="4.4"/><circle cx="388.1" cy="246.7" r="4.4"/><circle cx="450.7" cy="309.3" r="4.4"/></g>
<path stroke="#c8c8c8" stroke-width=".8" d="M164.6 373l-1.4-.3M164.6 245.6l-1.4 .3M228.3 436.6l-1.7-.6M228.3 182l-1.7 .6M291.9 500.3l-2-.9M296.5 500.3l2-.9M291.9 118.3l-2 .9M296.5 118.3l2 .9M360.1 436.6l1.7-.6M360.1 182l1.7 .6M423.8 373l1.4-.3M423.8 245.6l1.4 .3M166.3 377.4l.1 3.2M166.3 241.2l.1-3.2M230.3 441.3l.1 3.1M230.3 177.3l.1-3.1M294.2 505.2l0 3M294.2 113.4l0-3M358.1 441.3l-.1 3.1M358.1 177.3l-.1-3.1M422.1 377.4l-.1 3.2M422.1 241.2l-.1-3.2M161.8 373.4l-3.4 .1M161.8 245.2l-3.4-.1M225.9 437.5l-3.3 .1M225.9 181.1l-3.3-.1M290 501.6l-3.3 .2M298.4 501.6l3.3 .2M290 117l-3.3-.2M298.4 117l3.3-.2M362.5 437.5l3.3 .1M362.5 181.1l3.3-.1M426.6 373.4l3.4 .1M426.6 245.2l3.4-.1"/>
<path stroke="#0dd" stroke-width="1" d="M198.6 402l.4-3.3M198.6 344.1l.4 2.8M198.6 338.3l.4-3.1M198.6 280.3l.4 3.1M198.6 274.5l.4-2.8M198.6 216.6l.4 3.3M262.3 465.8l.1-3.6M262.3 407.8l.1 2.6M262.3 402l.1-3.3M262.3 344.1l.1 2.8M262.3 338.3l.1-3.1M262.3 280.3l.1 3.1M262.3 274.5l.1-2.8M262.3 216.6l.1 3.3M262.3 210.8l.1-2.6M262.3 152.8l.1 3.6M326.1 465.8l-.1-3.6M326.1 407.8l-.1 2.6M326.1 402l-.1-3.3M326.1 344.1l-.1 2.8M326.1 338.3l-.1-3.1M326.1 280.3l-.1 3.1M326.1 274.5l-.1-2.8M326.1 216.6l-.1 3.3M326.1 210.8l-.1-2.6M326.1 152.8l-.1 3.6M389.8 402l-.4-3.3M389.8 344.1l-.4 2.8M389.8 338.3l-.4-3.1M389.8 280.3l-.4 3.1M389.8 274.5l-.4-2.8M389.8 216.6l-.4 3.3"/>
<path stroke="#dc0000" stroke-width=".8" d="M131.8 309.3l-6.8 0M456.6 309.3l6.8 0M166.5 380.6l.3 8.1M166.5 238l.3-8.1M230.3 444.4l.2 8M230.3 174.2l.2-8M294.2 508.3l0 7.8M294.2 110.3l0-7.8M358.1 444.4l-.2 8M358.1 174.2l-.2-8M421.9 380.6l-.3 8.1M421.9 238l-.3-8.1M158.5 373.5l-8.8 .2M158.5 245.1l-8.8-.2M222.6 437.6l-8.6 .3M222.6 181l-8.6-.3M286.8 501.8l-8.4 .5M301.6 501.8l8.4 .5M286.8 116.8l-8.4-.5M301.6 116.8l8.4-.5M365.8 437.6l8.6 .3M365.8 181l8.6-.3M429.9 373.5l8.8 .2M429.9 245.1l8.8-.2"/>
<path stroke="#0dd" stroke-width=".8" d="M134.8 344.1l.3 1.3M134.8 338.3l.3-1.5M134.8 280.3l.3 1.5M134.8 274.5l.3-1.3M198.6 407.8l.2 1.2M198.6 210.8l.2-1.2M262.3 471.6l.1 1.1M262.3 147l.1-1.1M326.1 471.6l-.1 1.1M326.1 147l-.1-1.1M389.8 407.8l-.2 1.2M389.8 210.8l-.2-1.2M453.6 344.1l-.3 1.3M453.6 338.3l-.3-1.5M453.6 280.3l-.3 1.5M453.6 274.5l-.3-1.3M130.6 341.4l-1.7 .1M130.6 277.2l-1.7-.1M194.9 405.7l-1.6 .2M194.9 212.9l-1.6-.2M259.1 470l-1.5 .3M259.1 148.6l-1.5-.3M329.3 470l1.5 .3M329.3 148.6l1.5-.3M393.5 405.7l1.6 .2M393.5 212.9l1.6-.2M457.8 341.4l1.7 .1M457.8 277.2l1.7-.1"/>
<path stroke="#e80000" stroke-width="1.1" d="M166.6 363l.3-8.2M166.6 299.2l.3-8.1M166.6 319.4l.3 8.1M166.6 255.6l.3 8.2M230.4 426.8l.2-8.4M230.4 363l.2-8.2M230.4 383.2l.2 7.9M230.4 299.2l.2-8.1M230.4 319.4l.2 8.1M230.4 235.4l.2-7.9M230.4 255.6l.2 8.2M230.4 191.8l.2 8.4M294.2 490.6l0-8.5M294.2 426.8l0-8.4M294.2 447l0 7.7M294.2 363l0-8.2M294.2 383.2l0 7.9M294.2 299.2l0-8.1M294.2 319.4l0 8.1M294.2 235.4l0-7.9M294.2 255.6l0 8.2M294.2 171.6l0-7.7M294.2 191.8l0 8.4M294.2 128l0 8.5M358 426.8l-.2-8.4M358 363l-.2-8.2M358 383.2l-.2 7.9M358 299.2l-.2-8.1M358 319.4l-.2 8.1M358 235.4l-.2-7.9M358 255.6l-.2 8.2M358 191.8l-.2 8.4M421.8 363l-.3-8.2M421.8 299.2l-.3-8.1M421.8 319.4l-.3 8.1M421.8 255.6l-.3 8.2M141.3 309.3l3 0M204.8 372.8l3.8 .7M193.1 372.8l-6 .7M204.8 309.3l3.8 0M193.1 309.3l-6 0M204.8 245.8l3.8-.7M193.1 245.8l-6-.7M268.3 436.3l4.5 1.5M256.6 436.3l-5.3 1.5M268.3 372.8l4.5 .7M256.6 372.8l-5.3 .7M268.3 309.3l4.5 0M256.6 309.3l-5.3 0M268.3 245.8l4.5-.7M256.6 245.8l-5.3-.7M268.3 182.3l4.5-1.5M256.6 182.3l-5.3-1.5M331.8 436.3l5.3 1.5M320.1 436.3l-4.5 1.5M331.8 372.8l5.3 .7M320.1 372.8l-4.5 .7M331.8 309.3l5.3 0M320.1 309.3l-4.5 0M331.8 245.8l5.3-.7M320.1 245.8l-4.5-.7M331.8 182.3l5.3-1.5M320.1 182.3l-4.5-1.5M395.3 372.8l6 .7M383.6 372.8l-3.8 .7M395.3 309.3l6 0M383.6 309.3l-3.8 0M395.3 245.8l6-.7M383.6 245.8l-3.8-.7M447.1 309.3l-3 0M165.1 347.5l1.5 4.3M165.1 335.6l1.5-5.1M165.1 283l1.5 5.1M165.1 271.1l1.5-4.3M229.7 412l.8 3.6M229.7 400.2l.8-5.9M229.7 347.5l.8 4.3M229.7 335.6l.8-5.1M229.7 283l.8 5.1M229.7 271.1l.8-4.3M229.7 218.4l.8 5.9M229.7 206.6l.8-3.6M294.2 476.6l0 2.8M294.2 464.7l0-6.6M294.2 412l0 3.6M294.2 400.2l0-5.9M294.2 347.5l0 4.3M294.2 335.6l0-5.1M294.2 283l0 5.1M294.2 271.1l0-4.3M294.2 218.4l0 5.9M294.2 206.6l0-3.6M294.2 153.9l0 6.6M294.2 142l0-2.8M358.7 412l-.8 3.6M358.7 400.2l-.8-5.9M358.7 347.5l-.8 4.3M358.7 335.6l-.8-5.1M358.7 283l-.8 5.1M358.7 271.1l-.8-4.3M358.7 218.4l-.8 5.9M358.7 206.6l-.8-3.6M423.3 347.5l-1.5 4.3M423.3 335.6l-1.5-5.1M423.3 283l-1.5 5.1M423.3 271.1l-1.5-4.3M175.9 373.5l7.9 .2M155.6 309.3l-8.5 0M175.9 309.3l7.9 0M175.9 245.1l7.9-.2M240.1 437.7l8 .3M219.8 373.5l-8.4 .2M240.1 373.5l8 .2M219.8 309.3l-8.4 0M240.1 309.3l8 0M219.8 245.1l-8.4-.2M240.1 245.1l8-.2M240.1 180.9l8-.3M284.1 437.7l-8.2 .3M304.3 437.7l8.2 .3M284.1 373.5l-8.2 .2M304.3 373.5l8.2 .2M284.1 309.3l-8.2 0M304.3 309.3l8.2 0M284.1 245.1l-8.2-.2M304.3 245.1l8.2-.2M284.1 180.9l-8.2-.3M304.3 180.9l8.2-.3M348.3 437.7l-8 .3M348.3 373.5l-8 .2M368.6 373.5l8.4 .2M348.3 309.3l-8 0M368.6 309.3l8.4 0M348.3 245.1l-8-.2M368.6 245.1l8.4-.2M348.3 180.9l-8-.3M412.5 373.5l-7.9 .2M412.5 309.3l-7.9 0M432.8 309.3l8.5 0M412.5 245.1l-7.9-.2"/>
<path stroke="#c8c8c8" stroke-width="1.1" d="M166.3 369.1l.2-6M166.3 305.1l.2-5.9M166.3 313.5l.2 5.9M166.3 249.5l.2 6M230.3 433l.1-6.1M230.3 369.1l.1-6M230.3 377.4l.1 5.8M230.3 305.1l.1-5.9M230.3 313.5l.1 5.9M230.3 241.2l.1-5.8M230.3 249.5l.1 6M230.3 185.6l.1 6.1M294.2 496.9l0-6.3M294.2 433l0-6.1M294.2 441.3l0 5.7M294.2 369.1l0-6M294.2 377.4l0 5.8M294.2 305.1l0-5.9M294.2 313.5l0 5.9M294.2 241.2l0-5.8M294.2 249.5l0 6M294.2 177.3l0-5.7M294.2 185.6l0 6.1M294.2 121.7l0 6.3M358.1 433l-.1-6.1M358.1 369.1l-.1-6M358.1 377.4l-.1 5.8M358.1 305.1l-.1-5.9M358.1 313.5l-.1 5.9M358.1 241.2l-.1-5.8M358.1 249.5l-.1 6M358.1 185.6l-.1 6.1M422.1 369.1l-.2-6M422.1 305.1l-.2-5.9M422.1 313.5l-.2 5.9M422.1 249.5l-.2 6M170.2 373.4l5.7 .1M161.8 309.3l-6.2 0M170.2 309.3l5.7 0M170.2 245.2l5.7-.1M234.3 437.5l5.8 .2M225.9 373.4l-6.1 .1M234.3 373.4l5.8 .1M225.9 309.3l-6.1 0M234.3 309.3l5.8 0M225.9 245.2l-6.1-.1M234.3 245.2l5.8-.1M234.3 181.1l5.8-.2M290 437.5l-6 .2M298.4 437.5l6 .2M290 373.4l-6 .1M298.4 373.4l6 .1M290 309.3l-6 0M298.4 309.3l6 0M290 245.2l-6-.1M298.4 245.2l6-.1M290 181.1l-6-.2M298.4 181.1l6-.2M354.1 437.5l-5.8 .2M354.1 373.4l-5.8 .1M362.5 373.4l6.1 .1M354.1 309.3l-5.8 0M362.5 309.3l6.1 0M354.1 245.2l-5.8-.1M362.5 245.2l6.1-.1M354.1 181.1l-5.8-.2M418.2 373.4l-5.7 .1M418.2 309.3l-5.7 0M426.6 309.3l6.2 0M418.2 245.2l-5.7-.1"/>
<g fill="url(#gO)"><circle cx="167" cy="352.8" r="2.2"/><circle cx="167" cy="289.2" r="2.2"/><circle cx="230.6" cy="416.4" r="2.2"/><circle cx="230.6" cy="352.8" r="2.2"/><circle cx="230.6" cy="289.2" r="2.2"/><circle cx="230.6" cy="225.6" r="2.2"/><circle cx="294.2" cy="480" r="2.2"/><circle cx="294.2" cy="416.4" r="2.2"/><circle cx="294.2" cy="352.8" r="2.2"/><circle cx="294.2" cy="289.2" r="2.2"/><circle cx="294.2" cy="225.6" r="2.2"/><circle cx="294.2" cy="162" r="2.2"/><circle cx="357.8" cy="416.4" r="2.2"/><circle cx="357.8" cy="352.8" r="2.2"/><circle cx="357.8" cy="289.2" r="2.2"/><circle cx="357.8" cy="225.6" r="2.2"/><circle cx="421.4" cy="352.8" r="2.2"/><circle cx="421.4" cy="289.2" r="2.2"/><circle cx="167" cy="329.4" r="2.2"/><circle cx="167" cy="265.8" r="2.2"/><circle cx="230.6" cy="393" r="2.2"/><circle cx="230.6" cy="329.4" r="2.2"/><circle cx="230.6" cy="265.8" r="2.2"/><circle cx="230.6" cy="202.2" r="2.2"/><circle cx="294.2" cy="456.6" r="2.2"/><circle cx="294.2" cy="393" r="2.2"/><circle cx="294.2" cy="329.4" r="2.2"/><circle cx="294.2" cy="265.8" r="2.2"/><circle cx="294.2" cy="202.2" r="2.2"/><circle cx="294.2" cy="138.6" r="2.2"/><circle cx="357.8" cy="393" r="2.2"/><circle cx="357.8" cy="329.4" r="2.2"/><circle cx="357.8" cy="265.8" r="2.2"/><circle cx="357.8" cy="202.2" r="2.2"/><circle cx="421.4" cy="329.4" r="2.2"/><circle cx="421.4" cy="265.8" r="2.2"/></g>
<g fill="url(#gS)"><circle cx="134.2" cy="341.3" r="4.1"/><circle cx="134.2" cy="277.3" r="4.1"/><circle cx="198.2" cy="405.3" r="4.1"/><circle cx="198.2" cy="341.3" r="4.1"/><circle cx="198.2" cy="277.3" r="4.1"/><circle cx="198.2" cy="213.3" r="4.1"/><circle cx="262.2" cy="469.3" r="4.1"/><circle cx="262.2" cy="405.3" r="4.1"/><circle cx="262.2" cy="341.3" r="4.1"/><circle cx="262.2" cy="277.3" r="4.1"/><circle cx="262.2" cy="213.3" r="4.1"/><circle cx="262.2" cy="149.3" r="4.1"/><circle cx="326.2" cy="469.3" r="4.1"/><circle cx="326.2" cy="405.3" r="4.1"/><circle cx="326.2" cy="341.3" r="4.1"/><circle cx="326.2" cy="277.3" r="4.1"/><circle cx="326.2" cy="213.3" r="4.1"/><circle cx="326.2" cy="149.3" r="4.1"/><circle cx="390.2" cy="405.3" r="4.1"/><circle cx="390.2" cy="341.3" r="4.1"/><circle cx="390.2" cy="277.3" r="4.1"/><circle cx="390.2" cy="213.3" r="4.1"/><circle cx="454.2" cy="341.3" r="4.1"/><circle cx="454.2" cy="277.3" r="4.1"/></g>
<g fill="url(#gZ)"><circle cx="166.2" cy="373.3" r="4.5"/><circle cx="166.2" cy="309.3" r="4.5"/><circle cx="166.2" cy="245.3" r="4.5"/><circle cx="230.2" cy="437.3" r="4.5"/><circle cx="230.2" cy="373.3" r="4.5"/><circle cx="230.2" cy="309.3" r="4.5"/><circle cx="230.2" cy="245.3" r="4.5"/><circle cx="230.2" cy="181.3" r="4.5"/><circle cx="294.2" cy="501.3" r="4.5"/><circle cx="294.2" cy="437.3" r="4.5"/><circle cx="294.2" cy="373.3" r="4.5"/><circle cx="294.2" cy="309.3" r="4.5"/><circle cx="294.2" cy="245.3" r="4.5"/><circle cx="294.2" cy="181.3" r="4.5"/><circle cx="294.2" cy="117.3" r="4.5"/><circle cx="358.2" cy="437.3" r="4.5"/><circle cx="358.2" cy="373.3" r="4.5"/><circle cx="358.2" cy="309.3" r="4.5"/><circle cx="358.2" cy="245.3" r="4.5"/><circle cx="358.2" cy="181.3" r="4.5"/><circle cx="422.2" cy="373.3" r="4.5"/><circle cx="422.2" cy="309.3" r="4.5"/><circle cx="422.2" cy="245.3" r="4.5"/></g>
<path stroke="#0dd" stroke-width="1.1" d="M136.5 341.4l2.4 .1M136.5 277.2l2.4-.1M200.7 405.7l2.6 .4M194.9 341.4l-3.4 .1M200.7 341.4l2.6 .1M194.9 277.2l-3.4-.1M200.7 277.2l2.6-.1M200.7 212.9l2.6-.4M265 470l2.9 .7M259.1 405.7l-3.1 .4M265 405.7l2.9 .4M259.1 341.4l-3.1 .1M265 341.4l2.9 .1M259.1 277.2l-3.1-.1M265 277.2l2.9-.1M259.1 212.9l-3.1-.4M265 212.9l2.9-.4M265 148.6l2.9-.7M323.4 470l-2.9 .7M323.4 405.7l-2.9 .4M329.3 405.7l3.1 .4M323.4 341.4l-2.9 .1M329.3 341.4l3.1 .1M323.4 277.2l-2.9-.1M329.3 277.2l3.1-.1M323.4 212.9l-2.9-.4M329.3 212.9l3.1-.4M323.4 148.6l-2.9-.7M387.7 405.7l-2.6 .4M387.7 341.4l-2.6 .1M393.5 341.4l3.4 .1M387.7 277.2l-2.6-.1M393.5 277.2l3.4-.1M387.7 212.9l-2.6-.4M451.9 341.4l-2.4 .1M451.9 277.2l-2.4-.1M134.1 309.3l3.7 0M199.4 374.5l3.4-.3M193.4 374.5l-2.6-.3M199.4 309.3l3.4 0M193.4 309.3l-2.6 0M199.4 244.1l3.4 .3M193.4 244.1l-2.6 .3M264.6 439.7l3.1-.5M258.6 439.7l-2.9-.5M264.6 374.5l3.1-.3M258.6 374.5l-2.9-.3M264.6 309.3l3.1 0M258.6 309.3l-2.9 0M264.6 244.1l3.1 .3M258.6 244.1l-2.9 .3M264.6 178.9l3.1 .5M258.6 178.9l-2.9 .5M329.8 439.7l2.9-.5M323.8 439.7l-3.1-.5M329.8 374.5l2.9-.3M323.8 374.5l-3.1-.3M329.8 309.3l2.9 0M323.8 309.3l-3.1 0M329.8 244.1l2.9 .3M323.8 244.1l-3.1 .3M329.8 178.9l2.9 .5M323.8 178.9l-3.1 .5M395 374.5l2.6-.3M389 374.5l-3.4-.3M395 309.3l2.6 0M389 309.3l-3.4 0M395 244.1l2.6 .3M389 244.1l-3.4 .3M454.3 309.3l-3.7 0"/>
<path stroke="#c8c8c8" stroke-width=".8" d="M165.5 376l-.6 2.4M165.5 242.6l-.6-2.4M229.8 440.3l-.3 2.7M229.8 178.3l-.3-2.7M294.2 504.7l0 3M294.2 113.9l0-3M358.6 440.3l.3 2.7M358.6 178.3l.3-2.7M422.9 376l.6 2.4M422.9 242.6l.6-2.4"/>
<path stroke="#dc0000" stroke-width=".8" d="M128.9 341.5l-6 .2M128.9 277.1l-6-.2M193.3 405.9l-5.6 .7M193.3 212.7l-5.6-.7M257.7 470.3l-5.2 1.1M257.7 148.3l-5.2-1.1M330.7 470.3l5.2 1.1M330.7 148.3l5.2-1.1M395.1 405.9l5.6 .7M395.1 212.7l5.6-.7M459.5 341.5l6 .2M459.5 277.1l6-.2M127.1 309.3l-3.8 0M461.3 309.3l3.8 0M164.8 378.4l-1.6 5.8M164.8 240.2l-1.6-5.8M229.5 443l-.8 6.6M229.5 175.6l-.8-6.6M294.2 507.7l0 7.4M294.2 110.9l0-7.4M358.9 443l.8 6.6M358.9 175.6l.8-6.6M423.6 378.4l1.6 5.8M423.6 240.2l1.6-5.8"/>
<path stroke="#c8c8c8" stroke-width="1.1" d="M165.5 371.4l-1.1-3.1M165.5 311.6l-1.1 3.7M165.5 307l-1.1-3.7M165.5 247.2l-1.1 3.1M229.8 435.7l-.6-2.5M229.8 376l-.6 4.3M229.8 371.4l-.6-3.1M229.8 311.6l-.6 3.7M229.8 307l-.6-3.7M229.8 247.2l-.6 3.1M229.8 242.6l-.6-4.3M229.8 182.9l-.6 2.5M294.2 500.1l0-2M294.2 440.3l0 4.8M294.2 435.7l0-2.5M294.2 376l0 4.3M294.2 371.4l0-3.1M294.2 311.6l0 3.7M294.2 307l0-3.7M294.2 247.2l0 3.1M294.2 242.6l0-4.3M294.2 182.9l0 2.5M294.2 178.3l0-4.8M294.2 118.5l0 2M358.6 435.7l.6-2.5M358.6 376l.6 4.3M358.6 371.4l.6-3.1M358.6 311.6l.6 3.7M358.6 307l.6-3.7M358.6 247.2l.6 3.1M358.6 242.6l.6-4.3M358.6 182.9l.6 2.5M422.9 371.4l1.1-3.1M422.9 311.6l1.1 3.7M422.9 307l1.1-3.7M422.9 247.2l1.1 3.1M164 344.2l1.2 3.3M164 339.5l1.2-3.9M164 279.1l1.2 3.9M164 274.4l1.2-3.3M229.1 409.3l.6 2.8M229.1 404.6l.6-4.5M229.1 344.2l.6 3.3M229.1 339.5l.6-3.9M229.1 279.1l.6 3.9M229.1 274.4l.6-3.3M229.1 214l.6 4.5M229.1 209.3l.6-2.8M294.2 474.4l0 2.2M294.2 469.7l0-5.1M294.2 409.3l0 2.8M294.2 404.6l0-4.5M294.2 344.2l0 3.3M294.2 339.5l0-3.9M294.2 279.1l0 3.9M294.2 274.4l0-3.3M294.2 214l0 4.5M294.2 209.3l0-2.8M294.2 148.9l0 5.1M294.2 144.2l0-2.2M359.3 409.3l-.6 2.8M359.3 404.6l-.6-4.5M359.3 344.2l-.6 3.3M359.3 339.5l-.6-3.9M359.3 279.1l-.6 3.9M359.3 274.4l-.6-3.3M359.3 214l-.6 4.5M359.3 209.3l-.6-2.8M424.4 344.2l-1.2 3.3M424.4 339.5l-1.2-3.9M424.4 279.1l-1.2 3.9M424.4 274.4l-1.2-3.3M167.7 342l6.3-.1M159.2 342l-5.8-.1M167.7 276.6l6.3 .1M159.2 276.6l-5.8 .1M233.1 407.4l6.2-.2M224.5 407.4l-5.9-.2M233.1 342l6.2-.1M224.5 342l-5.9-.1M233.1 276.6l6.2 .1M224.5 276.6l-5.9 .1M233.1 211.2l6.2 .2M224.5 211.2l-5.9 .2M298.5 472.8l6-.3M289.9 472.8l-6-.3M298.5 407.4l6-.2M289.9 407.4l-6-.2M298.5 342l6-.1M289.9 342l-6-.1M298.5 276.6l6 .1M289.9 276.6l-6 .1M298.5 211.2l6 .2M289.9 211.2l-6 .2M298.5 145.8l6 .3M289.9 145.8l-6 .3M363.9 407.4l5.9-.2M355.3 407.4l-6.2-.2M363.9 342l5.9-.1M355.3 342l-6.2-.1M363.9 276.6l5.9 .1M355.3 276.6l-6.2 .1M363.9 211.2l5.9 .2M355.3 211.2l-6.2 .2M429.2 342l5.8-.1M420.7 342l-6.3-.1M429.2 276.6l5.8 .1M420.7 276.6l-6.3 .1"/>
<path stroke="#e80000" stroke-width="1.1" d="M138.8 341.6l3.5 .2M138.8 277l3.5-.2M203.3 406.1l3.9 .6M191.5 341.6l-5.1 .2M203.3 341.6l3.9 .2M191.5 277l-5.1-.2M203.3 277l3.9-.2M203.3 212.5l3.9-.6M267.9 470.6l4.3 1M256 406.1l-4.7 .6M267.9 406.1l4.3 .6M256 341.6l-4.7 .2M267.9 341.6l4.3 .2M256 277l-4.7-.2M267.9 277l4.3-.2M256 212.5l-4.7-.6M267.9 212.5l4.3-.6M267.9 148l4.3-1M320.5 470.6l-4.3 1M320.5 406.1l-4.3 .6M332.4 406.1l4.7 .6M320.5 341.6l-4.3 .2M332.4 341.6l4.7 .2M320.5 277l-4.3-.2M332.4 277l4.7-.2M320.5 212.5l-4.3-.6M332.4 212.5l4.7-.6M320.5 148l-4.3-1M385.1 406.1l-3.9 .6M385.1 341.6l-3.9 .2M396.9 341.6l5.1 .2M385.1 277l-3.9-.2M396.9 277l5.1-.2M385.1 212.5l-3.9-.6M449.6 341.6l-3.5 .2M449.6 277l-3.5-.2M137.8 309.3l5.4 0M202.8 374.2l5-.4M190.8 374.2l-3.8-.4M202.8 309.3l5 0M190.8 309.3l-3.8 0M202.8 244.4l5 .4M190.8 244.4l-3.8 .4M267.7 439.2l4.6-.8M255.8 439.2l-4.2-.8M267.7 374.2l4.6-.4M255.8 374.2l-4.2-.4M267.7 309.3l4.6 0M255.8 309.3l-4.2 0M267.7 244.4l4.6 .4M255.8 244.4l-4.2 .4M267.7 179.4l4.6 .8M255.8 179.4l-4.2 .8M332.6 439.2l4.2-.8M320.7 439.2l-4.6-.8M332.6 374.2l4.2-.4M320.7 374.2l-4.6-.4M332.6 309.3l4.2 0M320.7 309.3l-4.6 0M332.6 244.4l4.2 .4M320.7 244.4l-4.6 .4M332.6 179.4l4.2 .8M320.7 179.4l-4.6 .8M397.6 374.2l3.8-.4M385.6 374.2l-5-.4M397.6 309.3l3.8 0M385.6 309.3l-5 0M397.6 244.4l3.8 .4M385.6 244.4l-5 .4M450.6 309.3l-5.4 0M174 341.9l8.6-.1M153.4 341.9l-7.9-.1M174 276.7l8.6 .1M153.4 276.7l-7.9 .1M239.2 407.2l8.4-.3M218.6 407.2l-8.1-.3M239.2 341.9l8.4-.1M218.6 341.9l-8.1-.1M239.2 276.7l8.4 .1M218.6 276.7l-8.1 .1M239.2 211.4l8.4 .3M218.6 211.4l-8.1 .3M304.5 472.5l8.2-.4M283.9 472.5l-8.2-.4M304.5 407.2l8.2-.3M283.9 407.2l-8.2-.3M304.5 341.9l8.2-.1M283.9 341.9l-8.2-.1M304.5 276.7l8.2 .1M283.9 276.7l-8.2 .1M304.5 211.4l8.2 .3M283.9 211.4l-8.2 .3M304.5 146.1l8.2 .4M283.9 146.1l-8.2 .4M369.8 407.2l8.1-.3M349.2 407.2l-8.4-.3M369.8 341.9l8.1-.1M349.2 341.9l-8.4-.1M369.8 276.7l8.1 .1M349.2 276.7l-8.4 .1M369.8 211.4l8.1 .3M349.2 211.4l-8.4 .3M435 341.9l7.9-.1M414.4 341.9l-8.6-.1M435 276.7l7.9 .1M414.4 276.7l-8.6 .1M164.3 368.3l-1.6-4.2M164.3 315.3l-1.6 5M164.3 303.3l-1.6-5M164.3 250.3l-1.6 4.2M229.3 433.2l-.8-3.4M229.3 380.2l-.8 5.8M229.3 368.3l-.8-4.2M229.3 315.3l-.8 5M229.3 303.3l-.8-5M229.3 250.3l-.8 4.2M229.3 238.4l-.8-5.8M229.3 185.4l-.8 3.4M294.2 498.1l0-2.7M294.2 445.2l0 6.6M294.2 433.2l0-3.4M294.2 380.2l0 5.8M294.2 368.3l0-4.2M294.2 315.3l0 5M294.2 303.3l0-5M294.2 250.3l0 4.2M294.2 238.4l0-5.8M294.2 185.4l0 3.4M294.2 173.4l0-6.6M294.2 120.5l0 2.7M359.1 433.2l.8-3.4M359.1 380.2l.8 5.8M359.1 368.3l.8-4.2M359.1 315.3l.8 5M359.1 303.3l.8-5M359.1 250.3l.8 4.2M359.1 238.4l.8-5.8M359.1 185.4l.8 3.4M424.1 368.3l1.6-4.2M424.1 315.3l1.6 5M424.1 303.3l1.6-5M424.1 250.3l1.6 4.2"/>
<path stroke="#0dd" stroke-width=".8" d="M128.2 309.3l-1.1 0M460.2 309.3l1.1 0"/>
<g fill="url(#gO)"><circle cx="145" cy="309.3" r="2.3"/><circle cx="209.4" cy="373.7" r="2.3"/><circle cx="209.4" cy="309.3" r="2.3"/><circle cx="209.4" cy="244.9" r="2.3"/><circle cx="273.8" cy="438.1" r="2.3"/><circle cx="273.8" cy="373.7" r="2.3"/><circle cx="273.8" cy="309.3" r="2.3"/><circle cx="273.8" cy="244.9" r="2.3"/><circle cx="273.8" cy="180.5" r="2.3"/><circle cx="338.3" cy="438.1" r="2.3"/><circle cx="338.3" cy="373.7" r="2.3"/><circle cx="338.3" cy="309.3" r="2.3"/><circle cx="338.3" cy="244.9" r="2.3"/><circle cx="338.3" cy="180.5" r="2.3"/><circle cx="402.7" cy="373.7" r="2.3"/><circle cx="402.7" cy="309.3" r="2.3"/><circle cx="402.7" cy="244.9" r="2.3"/><circle cx="185.7" cy="373.7" r="2.3"/><circle cx="185.7" cy="309.3" r="2.3"/><circle cx="185.7" cy="244.9" r="2.3"/><circle cx="250.1" cy="438.1" r="2.3"/><circle cx="250.1" cy="373.7" r="2.3"/><circle cx="250.1" cy="309.3" r="2.3"/><circle cx="250.1" cy="244.9" r="2.3"/><circle cx="250.1" cy="180.5" r="2.3"/><circle cx="314.6" cy="438.1" r="2.3"/><circle cx="314.6" cy="373.7" r="2.3"/><circle cx="314.6" cy="309.3" r="2.3"/><circle cx="314.6" cy="244.9" r="2.3"/><circle cx="314.6" cy="180.5" r="2.3"/><circle cx="379" cy="373.7" r="2.3"/><circle cx="379" cy="309.3" r="2.3"/><circle cx="379" cy="244.9" r="2.3"/><circle cx="443.4" cy="309.3" r="2.3"/><circle cx="184.6" cy="341.8" r="2.3"/><circle cx="184.6" cy="276.8" r="2.3"/><circle cx="249.7" cy="406.9" r="2.3"/><circle cx="249.7" cy="341.8" r="2.3"/><circle cx="249.7" cy="276.8" r="2.3"/><circle cx="249.7" cy="211.7" r="2.3"/><circle cx="314.8" cy="471.9" r="2.3"/><circle cx="314.8" cy="406.9" r="2.3"/><circle cx="314.8" cy="341.8" r="2.3"/><circle cx="314.8" cy="276.8" r="2.3"/><circle cx="314.8" cy="211.7" r="2.3"/><circle cx="314.8" cy="146.7" r="2.3"/><circle cx="379.8" cy="406.9" r="2.3"/><circle cx="379.8" cy="341.8" r="2.3"/><circle cx="379.8" cy="276.8" r="2.3"/><circle cx="379.8" cy="211.7" r="2.3"/><circle cx="444.9" cy="341.8" r="2.3"/><circle cx="444.9" cy="276.8" r="2.3"/><circle cx="143.5" cy="341.8" r="2.3"/><circle cx="143.5" cy="276.8" r="2.3"/><circle cx="208.6" cy="406.9" r="2.3"/><circle cx="208.6" cy="341.8" r="2.3"/><circle cx="208.6" cy="276.8" r="2.3"/><circle cx="208.6" cy="211.7" r="2.3"/><circle cx="273.6" cy="471.9" r="2.3"/><circle cx="273.6" cy="406.9" r="2.3"/><circle cx="273.6" cy="341.8" r="2.3"/><circle cx="273.6" cy="276.8" r="2.3"/><circle cx="273.6" cy="211.7" r="2.3"/><circle cx="273.6" cy="146.7" r="2.3"/><circle cx="338.7" cy="406.9" r="2.3"/><circle cx="338.7" cy="341.8" r="2.3"/><circle cx="338.7" cy="276.8" r="2.3"/><circle cx="338.7" cy="211.7" r="2.3"/><circle cx="403.8" cy="341.8" r="2.3"/><circle cx="403.8" cy="276.8" r="2.3"/></g>
<path stroke="#e80000" stroke-width="1.1" d="M135.2 342.3l6.8-.4M135.2 276.3l6.8 .4M201.2 408.3l6-1.2M189.1 342.3l-3.6-.4M201.2 342.3l6-.4M189.1 276.3l-3.6 .4M201.2 276.3l6 .4M201.2 210.3l6 1.2M267.3 474.3l5.2-2M255.1 408.3l-4.4-1.2M267.3 408.3l5.2-1.2M255.1 342.3l-4.4-.4M267.3 342.3l5.2-.4M255.1 276.3l-4.4 .4M267.3 276.3l5.2 .4M255.1 210.3l-4.4 1.2M267.3 210.3l5.2 1.2M267.3 144.3l5.2 2M321.1 474.3l-5.2-2M321.1 408.3l-5.2-1.2M333.3 408.3l4.4-1.2M321.1 342.3l-5.2-.4M333.3 342.3l4.4-.4M321.1 276.3l-5.2 .4M333.3 276.3l4.4 .4M321.1 210.3l-5.2 1.2M333.3 210.3l4.4 1.2M321.1 144.3l-5.2 2M387.2 408.3l-6-1.2M387.2 342.3l-6-.4M399.3 342.3l3.6-.4M387.2 276.3l-6 .4M399.3 276.3l3.6 .4M387.2 210.3l-6 1.2M453.2 342.3l-6.8-.4M453.2 276.3l-6.8 .4M162.8 331.8l-.3-8.3M162.8 352.5l-.3 8.5M162.8 266.1l-.3-8.5M162.8 286.8l-.3 8.3M228.5 397.4l-.2-8.1M228.5 418.2l-.2 8.7M228.5 331.8l-.2-8.3M228.5 352.5l-.2 8.5M228.5 266.1l-.2-8.5M228.5 286.8l-.2 8.3M228.5 200.4l-.2-8.7M228.5 221.2l-.2 8.1M294.2 463.1l0-8M294.2 483.9l0 8.8M294.2 397.4l0-8.1M294.2 418.2l0 8.7M294.2 331.8l0-8.3M294.2 352.5l0 8.5M294.2 266.1l0-8.5M294.2 286.8l0 8.3M294.2 200.4l0-8.7M294.2 221.2l0 8.1M294.2 134.7l0-8.8M294.2 155.5l0 8M359.9 397.4l.2-8.1M359.9 418.2l.2 8.7M359.9 331.8l.2-8.3M359.9 352.5l.2 8.5M359.9 266.1l.2-8.5M359.9 286.8l.2 8.3M359.9 200.4l.2-8.7M359.9 221.2l.2 8.1M425.6 331.8l.3-8.3M425.6 352.5l.3 8.5M425.6 266.1l.3-8.5M425.6 286.8l.3 8.3M129.2 315.4l-1 4.6M129.2 303.2l-1-4.6M195.2 381.4l-.6 5M195.2 369.2l-.6-4.2M195.2 315.4l-.6 4.6M195.2 303.2l-.6-4.6M195.2 249.4l-.6 4.2M195.2 237.2l-.6-5M261.2 447.4l-.2 5.4M261.2 435.3l-.2-3.8M261.2 381.4l-.2 5M261.2 369.2l-.2-4.2M261.2 315.4l-.2 4.6M261.2 303.2l-.2-4.6M261.2 249.4l-.2 4.2M261.2 237.2l-.2-5M261.2 183.3l-.2 3.8M261.2 171.2l-.2-5.4M327.2 447.4l.2 5.4M327.2 435.3l.2-3.8M327.2 381.4l.2 5M327.2 369.2l.2-4.2M327.2 315.4l.2 4.6M327.2 303.2l.2-4.6M327.2 249.4l.2 4.2M327.2 237.2l.2-5M327.2 183.3l.2 3.8M327.2 171.2l.2-5.4M393.2 381.4l.6 5M393.2 369.2l.6-4.2M393.2 315.4l.6 4.6M393.2 303.2l.6-4.6M393.2 249.4l.6 4.2M393.2 237.2l.6-5M459.2 315.4l1 4.6M459.2 303.2l1-4.6M161.3 369.6l.8-4.9M161.3 315.4l.8 4.5M161.3 303.2l.8-4.5M161.3 249l.8 4.9M227.8 436.1l.4-5.3M227.8 381.9l.4 4.1M227.8 369.6l.4-4.9M227.8 315.4l.4 4.5M227.8 303.2l.4-4.5M227.8 249l.4 4.9M227.8 236.7l.4-4.1M227.8 182.5l.4 5.3M294.2 502.5l0-5.7M294.2 448.3l0 3.7M294.2 436.1l0-5.3M294.2 381.9l0 4.1M294.2 369.6l0-4.9M294.2 315.4l0 4.5M294.2 303.2l0-4.5M294.2 249l0 4.9M294.2 236.7l0-4.1M294.2 182.5l0 5.3M294.2 170.3l0-3.7M294.2 116.1l0 5.7M360.6 436.1l-.4-5.3M360.6 381.9l-.4 4.1M360.6 369.6l-.4-4.9M360.6 315.4l-.4 4.5M360.6 303.2l-.4-4.5M360.6 249l-.4 4.9M360.6 236.7l-.4-4.1M360.6 182.5l-.4 5.3M427.1 369.6l-.8-4.9M427.1 315.4l-.8 4.5M427.1 303.2l-.8-4.5M427.1 249l-.8 4.9"/>
<path stroke="#c8c8c8" stroke-width="1.1" d="M163.1 337.8l-.2-6M163.1 346.4l-.2 6.2M163.1 272.2l-.2-6.2M163.1 280.8l-.2 6M228.6 403.4l-.1-5.9M228.6 411.9l-.1 6.3M228.6 337.8l-.1-6M228.6 346.4l-.1 6.2M228.6 272.2l-.1-6.2M228.6 280.8l-.1 6M228.6 206.7l-.1-6.3M228.6 215.2l-.1 5.9M294.2 468.9l0-5.8M294.2 477.5l0 6.4M294.2 403.4l0-5.9M294.2 411.9l0 6.3M294.2 337.8l0-6M294.2 346.4l0 6.2M294.2 272.2l0-6.2M294.2 280.8l0 6M294.2 206.7l0-6.3M294.2 215.2l0 5.9M294.2 141.1l0-6.4M294.2 149.7l0 5.8M359.8 403.4l.1-5.9M359.8 411.9l.1 6.3M359.8 337.8l.1-6M359.8 346.4l.1 6.2M359.8 272.2l.1-6.2M359.8 280.8l.1 6M359.8 206.7l.1-6.3M359.8 215.2l.1 5.9M425.3 337.8l.2-6M425.3 346.4l.2 6.2M425.3 272.2l.2-6.2M425.3 280.8l.2 6M164.9 342.2l2.6 .3M160.2 342.2l-5 .3M164.9 276.4l2.6-.3M160.2 276.4l-5-.3M230.7 408.1l3.2 .9M226 408.1l-4.4 .9M230.7 342.2l3.2 .3M226 342.2l-4.4 .3M230.7 276.4l3.2-.3M226 276.4l-4.4-.3M230.7 210.5l3.2-.9M226 210.5l-4.4-.9M296.5 473.9l3.8 1.5M291.9 473.9l-3.8 1.5M296.5 408.1l3.8 .9M291.9 408.1l-3.8 .9M296.5 342.2l3.8 .3M291.9 342.2l-3.8 .3M296.5 276.4l3.8-.3M291.9 276.4l-3.8-.3M296.5 210.5l3.8-.9M291.9 210.5l-3.8-.9M296.5 144.7l3.8-1.5M291.9 144.7l-3.8-1.5M362.4 408.1l4.4 .9M357.7 408.1l-3.2 .9M362.4 342.2l4.4 .3M357.7 342.2l-3.2 .3M362.4 276.4l4.4-.3M357.7 276.4l-3.2-.3M362.4 210.5l4.4-.9M357.7 210.5l-3.2-.9M428.2 342.2l5 .3M423.5 342.2l-2.6 .3M428.2 276.4l5-.3M423.5 276.4l-2.6-.3M130 342.6l5.2-.3M130 276l5.2 .3M196.6 409.2l4.6-.9M191.9 342.6l-2.8-.3M196.6 342.6l4.6-.3M191.9 276l-2.8 .3M196.6 276l4.6 .3M196.6 209.4l4.6 .9M263.3 475.9l4-1.5M258.5 409.2l-3.4-.9M263.3 409.2l4-.9M258.5 342.6l-3.4-.3M263.3 342.6l4-.3M258.5 276l-3.4 .3M263.3 276l4 .3M258.5 209.4l-3.4 .9M263.3 209.4l4 .9M263.3 142.7l4 1.5M325.1 475.9l-4-1.5M325.1 409.2l-4-.9M329.9 409.2l3.4-.9M325.1 342.6l-4-.3M329.9 342.6l3.4-.3M325.1 276l-4 .3M329.9 276l3.4 .3M325.1 209.4l-4 .9M329.9 209.4l3.4 .9M325.1 142.7l-4 1.5M391.8 409.2l-4.6-.9M391.8 342.6l-4.6-.3M396.5 342.6l2.8-.3M391.8 276l-4.6 .3M396.5 276l2.8 .3M391.8 209.4l-4.6 .9M458.4 342.6l-5.2-.3M458.4 276l-5.2 .3"/>
<path stroke="#dc0000" stroke-width=".8" d="M124 342.4l-2.9-.4M124 276.2l-2.9 .4M190.3 408.7l-3.7-1.2M190.3 209.9l-3.7 1.2M256.6 475l-4.5-2M256.6 143.6l-4.5 2M331.8 475l4.5-2M331.8 143.6l4.5 2M398.1 408.7l3.7-1.2M398.1 209.9l3.7 1.2M464.4 342.4l2.9-.4M464.4 276.2l2.9 .4"/>
<path stroke="#0dd" stroke-width="1.1" d="M129.8 312.3l-.7 3.1M129.8 306.3l-.7-3.1M195.6 378l-.4 3.4M195.6 372l-.4-2.8M195.6 312.3l-.4 3.1M195.6 306.3l-.4-3.1M195.6 246.6l-.4 2.8M195.6 240.6l-.4-3.4M261.3 443.8l-.1 3.6M261.3 437.8l-.1-2.5M261.3 378l-.1 3.4M261.3 372l-.1-2.8M261.3 312.3l-.1 3.1M261.3 306.3l-.1-3.1M261.3 246.6l-.1 2.8M261.3 240.6l-.1-3.4M261.3 180.8l-.1 2.5M261.3 174.8l-.1-3.6M327.1 443.8l.1 3.6M327.1 437.8l.1-2.5M327.1 378l.1 3.4M327.1 372l.1-2.8M327.1 312.3l.1 3.1M327.1 306.3l.1-3.1M327.1 246.6l.1 2.8M327.1 240.6l.1-3.4M327.1 180.8l.1 2.5M327.1 174.8l.1-3.6M392.8 378l.4 3.4M392.8 372l.4-2.8M392.8 312.3l.4 3.1M392.8 306.3l.4-3.1M392.8 246.6l.4 2.8M392.8 240.6l.4-3.4M458.6 312.3l.7 3.1M458.6 306.3l.7-3.1"/>
<g fill="url(#gO)"><circle cx="162.4" cy="321.4" r="2.3"/><circle cx="162.4" cy="255.5" r="2.3"/><circle cx="228.3" cy="387.3" r="2.3"/><circle cx="228.3" cy="321.4" r="2.3"/><circle cx="228.3" cy="255.5" r="2.3"/><circle cx="228.3" cy="189.6" r="2.3"/><circle cx="294.2" cy="453.2" r="2.3"/><circle cx="294.2" cy="387.3" r="2.3"/><circle cx="294.2" cy="321.4" r="2.3"/><circle cx="294.2" cy="255.5" r="2.3"/><circle cx="294.2" cy="189.6" r="2.3"/><circle cx="294.2" cy="123.7" r="2.3"/><circle cx="360.1" cy="387.3" r="2.3"/><circle cx="360.1" cy="321.4" r="2.3"/><circle cx="360.1" cy="255.5" r="2.3"/><circle cx="360.1" cy="189.6" r="2.3"/><circle cx="426" cy="321.4" r="2.3"/><circle cx="426" cy="255.5" r="2.3"/><circle cx="162.4" cy="363.1" r="2.3"/><circle cx="162.4" cy="297.2" r="2.3"/><circle cx="228.3" cy="429" r="2.3"/><circle cx="228.3" cy="363.1" r="2.3"/><circle cx="228.3" cy="297.2" r="2.3"/><circle cx="228.3" cy="231.3" r="2.3"/><circle cx="294.2" cy="494.9" r="2.3"/><circle cx="294.2" cy="429" r="2.3"/><circle cx="294.2" cy="363.1" r="2.3"/><circle cx="294.2" cy="297.2" r="2.3"/><circle cx="294.2" cy="231.3" r="2.3"/><circle cx="294.2" cy="165.4" r="2.3"/><circle cx="360.1" cy="429" r="2.3"/><circle cx="360.1" cy="363.1" r="2.3"/><circle cx="360.1" cy="297.2" r="2.3"/><circle cx="360.1" cy="231.3" r="2.3"/><circle cx="426" cy="363.1" r="2.3"/><circle cx="426" cy="297.2" r="2.3"/></g>
<g fill="url(#gS)"><circle cx="130.5" cy="309.3" r="4.2"/><circle cx="196" cy="374.8" r="4.2"/><circle cx="196" cy="309.3" r="4.2"/><circle cx="196" cy="243.8" r="4.2"/><circle cx="261.5" cy="440.2" r="4.2"/><circle cx="261.5" cy="374.8" r="4.2"/><circle cx="261.5" cy="309.3" r="4.2"/><circle cx="261.5" cy="243.8" r="4.2"/><circle cx="261.5" cy="178.4" r="4.2"/><circle cx="326.9" cy="440.2" r="4.2"/><circle cx="326.9" cy="374.8" r="4.2"/><circle cx="326.9" cy="309.3" r="4.2"/><circle cx="326.9" cy="243.8" r="4.2"/><circle cx="326.9" cy="178.4" r="4.2"/><circle cx="392.4" cy="374.8" r="4.2"/><circle cx="392.4" cy="309.3" r="4.2"/><circle cx="392.4" cy="243.8" r="4.2"/><circle cx="457.9" cy="309.3" r="4.2"/></g>
<g fill="url(#gZ)"><circle cx="163.3" cy="342" r="4.6"/><circle cx="163.3" cy="276.6" r="4.6"/><circle cx="228.7" cy="407.5" r="4.6"/><circle cx="228.7" cy="342" r="4.6"/><circle cx="228.7" cy="276.6" r="4.6"/><circle cx="228.7" cy="211.1" r="4.6"/><circle cx="294.2" cy="473" r="4.6"/><circle cx="294.2" cy="407.5" r="4.6"/><circle cx="294.2" cy="342" r="4.6"/><circle cx="294.2" cy="276.6" r="4.6"/><circle cx="294.2" cy="211.1" r="4.6"/><circle cx="294.2" cy="145.6" r="4.6"/><circle cx="359.7" cy="407.5" r="4.6"/><circle cx="359.7" cy="342" r="4.6"/><circle cx="359.7" cy="276.6" r="4.6"/><circle cx="359.7" cy="211.1" r="4.6"/><circle cx="425.1" cy="342" r="4.6"/><circle cx="425.1" cy="276.6" r="4.6"/></g>
<path stroke="#dc0000" stroke-width=".8" d="M94.4 313.8l1.4 5M94.4 304.8l1.4-5M161 380.4l.9 4.5M161 238.2l.9-4.5M227.6 447l.5 4.1M227.6 171.6l.5-4.1M294.2 513.6l0 3.6M294.2 105l0-3.6M360.8 447l-.5 4.1M360.8 171.6l-.5-4.1M427.4 380.4l-.9 4.5M427.4 238.2l-.9-4.5M494 313.8l-1.4 5M494 304.8l-1.4-5M127.1 350.5l.5 8.6M127.1 268.1l.5-8.6M193.9 417.3l.3 8.4M193.9 201.3l.3-8.4M260.8 484.2l.1 8.2M260.8 134.4l.1-8.2M327.6 484.2l-.1 8.2M327.6 134.4l-.1-8.2M394.5 417.3l-.3 8.4M394.5 201.3l-.3-8.4M461.3 350.5l-.5 8.6M461.3 268.1l-.5-8.6M118.5 342.9l-9.3 .1M118.5 275.7l-9.3-.1M185.7 410.1l-9.1 .3M185.7 208.5l-9.1-.3M252.8 477.2l-8.9 .5M252.8 141.4l-8.9-.5M335.6 477.2l8.9 .5M335.6 141.4l8.9-.5M402.7 410.1l9.1 .3M402.7 208.5l9.1-.3M469.9 342.9l9.3 .1M469.9 275.7l9.3-.1"/>
<path stroke="#c8c8c8" stroke-width=".8" d="M125.3 342.6l-1.2-.2M125.3 276l-1.2 .2M191.9 409.2l-1.6-.5M191.9 209.4l-1.6 .5M258.5 475.9l-1.9-.9M258.5 142.7l-1.9 .9M329.9 475.9l1.9-.9M329.9 142.7l1.9 .9M396.5 409.2l1.6-.5M396.5 209.4l1.6 .5M463.1 342.6l1.2-.2M463.1 276l1.2 .2M126.9 347.1l.2 3.3M126.9 271.5l.2-3.3M193.8 414l.1 3.3M193.8 204.6l.1-3.3M260.7 481l0 3.2M260.7 137.6l0-3.2M327.7 481l0 3.2M327.7 137.6l0-3.2M394.6 414l-.1 3.3M394.6 204.6l-.1-3.3M461.5 347.1l-.2 3.3M461.5 271.5l-.2-3.3M122.1 342.8l-3.6 0M122.1 275.8l-3.6 0M189.2 409.9l-3.5 .1M189.2 208.7l-3.5-.1M256.3 477l-3.4 .2M256.3 141.6l-3.4-.2M332.1 477l3.4 .2M332.1 141.6l3.4-.2M399.2 409.9l3.5 .1M399.2 208.7l3.5-.1M466.3 342.8l3.6 0M466.3 275.8l3.6 0"/>
<path stroke="#0dd" stroke-width="1.1" d="M160.7 373l.6-3.4M160.7 312.3l.6 3.1M160.7 306.3l.6-3.1M160.7 245.6l.6 3.4M227.5 439.7l.3-3.6M227.5 379.1l.3 2.8M227.5 373l.3-3.4M227.5 312.3l.3 3.1M227.5 306.3l.3-3.1M227.5 245.6l.3 3.4M227.5 239.5l.3-2.8M227.5 178.9l.3 3.6M294.2 506.5l0-3.9M294.2 445.8l0 2.5M294.2 439.7l0-3.6M294.2 379.1l0 2.8M294.2 373l0-3.4M294.2 312.3l0 3.1M294.2 306.3l0-3.1M294.2 245.6l0 3.4M294.2 239.5l0-2.8M294.2 178.9l0 3.6M294.2 172.8l0-2.5M294.2 112.1l0 3.9M360.9 439.7l-.3-3.6M360.9 379.1l-.3 2.8M360.9 373l-.3-3.4M360.9 312.3l-.3 3.1M360.9 306.3l-.3-3.1M360.9 245.6l-.3 3.4M360.9 239.5l-.3-2.8M360.9 178.9l-.3 3.6M427.7 373l-.6-3.4M427.7 312.3l-.6 3.1M427.7 306.3l-.6-3.1M427.7 245.6l-.6 3.4"/>
<path stroke="#0dd" stroke-width=".8" d="M94 312.3l.4 1.5M94 306.3l.4-1.5M160.7 379.1l.3 1.3M160.7 239.5l.3-1.3M227.5 445.8l.1 1.2M227.5 172.8l.1-1.2M294.2 512.5l0 1.1M294.2 106.1l0-1.1M360.9 445.8l-.1 1.2M360.9 172.8l-.1-1.2M427.7 379.1l-.3 1.3M427.7 239.5l-.3-1.3M494.4 312.3l-.4 1.5M494.4 306.3l-.4-1.5M89.3 309.3l-1.9 0M156.6 376.6l-1.8 .1M156.6 242l-1.8-.1M223.8 443.9l-1.6 .3M223.8 174.7l-1.6-.3M291.1 511.2l-1.5 .4M297.3 511.2l1.5 .4M291.1 107.4l-1.5-.4M297.3 107.4l1.5-.4M364.6 443.9l1.6 .3M364.6 174.7l1.6-.3M431.8 376.6l1.8 .1M431.8 242l1.8-.1M499.1 309.3l1.9 0"/>
<path stroke="#e80000" stroke-width="1.1" d="M127.2 332.1l.4-8.5M127.2 286.5l.4 8.5M194 398.9l.3-8.7M194 332.1l.3-8.5M194 353.2l.3 8.4M194 265.4l.3-8.4M194 286.5l.3 8.5M194 219.7l.3 8.7M260.8 465.7l.1-8.9M260.8 398.9l.1-8.7M260.8 420l.1 8.2M260.8 332.1l.1-8.5M260.8 353.2l.1 8.4M260.8 265.4l.1-8.4M260.8 286.5l.1 8.5M260.8 198.6l.1-8.2M260.8 219.7l.1 8.7M260.8 152.9l.1 8.9M327.6 465.7l-.1-8.9M327.6 398.9l-.1-8.7M327.6 420l-.1 8.2M327.6 332.1l-.1-8.5M327.6 353.2l-.1 8.4M327.6 265.4l-.1-8.4M327.6 286.5l-.1 8.5M327.6 198.6l-.1-8.2M327.6 219.7l-.1 8.7M327.6 152.9l-.1 8.9M394.4 398.9l-.3-8.7M394.4 332.1l-.3-8.5M394.4 353.2l-.3 8.4M394.4 265.4l-.3-8.4M394.4 286.5l-.3 8.5M394.4 219.7l-.3 8.7M461.2 332.1l-.4-8.5M461.2 286.5l-.4 8.5M167.4 342.5l3.5 .4M155.2 342.5l-6.8 .4M167.4 276.1l3.5-.4M155.2 276.1l-6.8-.4M233.9 409l4.3 1.2M221.6 409l-5.9 1.2M233.9 342.5l4.3 .4M221.6 342.5l-5.9 .4M233.9 276.1l4.3-.4M221.6 276.1l-5.9-.4M233.9 209.6l4.3-1.2M221.6 209.6l-5.9-1.2M300.3 475.4l5.1 2M288.1 475.4l-5.1 2M300.3 409l5.1 1.2M288.1 409l-5.1 1.2M300.3 342.5l5.1 .4M288.1 342.5l-5.1 .4M300.3 276.1l5.1-.4M288.1 276.1l-5.1-.4M300.3 209.6l5.1-1.2M288.1 209.6l-5.1-1.2M300.3 143.2l5.1-2M288.1 143.2l-5.1-2M366.8 409l5.9 1.2M354.5 409l-4.3 1.2M366.8 342.5l5.9 .4M354.5 342.5l-4.3 .4M366.8 276.1l5.9-.4M354.5 276.1l-4.3-.4M366.8 209.6l5.9-1.2M354.5 209.6l-4.3-1.2M433.2 342.5l6.8 .4M421 342.5l-3.5 .4M433.2 276.1l6.8-.4M421 276.1l-3.5-.4M125.3 315.5l2.1 4.9M125.3 303.1l2.1-4.9M192.8 383.1l1.2 4.1M192.8 370.7l1.2-5.8M192.8 315.5l1.2 4.9M192.8 303.1l1.2-4.9M192.8 247.9l1.2 5.8M192.8 235.5l1.2-4.1M260.4 450.7l.4 3.3M260.4 438.2l.4-6.6M260.4 383.1l.4 4.1M260.4 370.7l.4-5.8M260.4 315.5l.4 4.9M260.4 303.1l.4-4.9M260.4 247.9l.4 5.8M260.4 235.5l.4-4.1M260.4 180.4l.4 6.6M260.4 167.9l.4-3.3M328 450.7l-.4 3.3M328 438.2l-.4-6.6M328 383.1l-.4 4.1M328 370.7l-.4-5.8M328 315.5l-.4 4.9M328 303.1l-.4-4.9M328 247.9l-.4 5.8M328 235.5l-.4-4.1M328 180.4l-.4 6.6M328 167.9l-.4-3.3M395.6 383.1l-1.2 4.1M395.6 370.7l-1.2-5.8M395.6 315.5l-1.2 4.9M395.6 303.1l-1.2-4.9M395.6 247.9l-1.2 5.8M395.6 235.5l-1.2-4.1M463.1 315.5l-2.1 4.9M463.1 303.1l-2.1-4.9M136.7 342.9l8.1 .1M136.7 275.7l8.1-.1M204 410.1l8.3 .3M182.7 342.9l-8.9 .1M204 342.9l8.3 .1M182.7 275.7l-8.9-.1M204 275.7l8.3-.1M204 208.5l8.3-.3M271.2 477.4l8.5 .4M250 410.1l-8.7 .3M271.2 410.1l8.5 .3M250 342.9l-8.7 .1M271.2 342.9l8.5 .1M250 275.7l-8.7-.1M271.2 275.7l8.5-.1M250 208.5l-8.7-.3M271.2 208.5l8.5-.3M271.2 141.2l8.5-.4M317.2 477.4l-8.5 .4M317.2 410.1l-8.5 .3M338.4 410.1l8.7 .3M317.2 342.9l-8.5 .1M338.4 342.9l8.7 .1M317.2 275.7l-8.5-.1M338.4 275.7l8.7-.1M317.2 208.5l-8.5-.3M338.4 208.5l8.7-.3M317.2 141.2l-8.5-.4M384.4 410.1l-8.3 .3M384.4 342.9l-8.3 .1M405.7 342.9l8.9 .1M384.4 275.7l-8.3-.1M405.7 275.7l8.9-.1M384.4 208.5l-8.3-.3M451.7 342.9l-8.1 .1M451.7 275.7l-8.1-.1"/>
<path stroke="#c8c8c8" stroke-width="1.1" d="M126.9 338.4l.3-6.3M126.9 280.2l.3 6.3M193.8 405.3l.2-6.4M193.8 338.4l.2-6.3M193.8 347.1l.2 6.1M193.8 271.5l.2-6.1M193.8 280.2l.2 6.3M193.8 213.3l.2 6.4M260.7 472.2l.1-6.5M260.7 405.3l.1-6.4M260.7 414l.1 6M260.7 338.4l.1-6.3M260.7 347.1l.1 6.1M260.7 271.5l.1-6.1M260.7 280.2l.1 6.3M260.7 204.6l.1-6M260.7 213.3l.1 6.4M260.7 146.4l.1 6.5M327.7 472.2l-.1-6.5M327.7 405.3l-.1-6.4M327.7 414l-.1 6M327.7 338.4l-.1-6.3M327.7 347.1l-.1 6.1M327.7 271.5l-.1-6.1M327.7 280.2l-.1 6.3M327.7 204.6l-.1-6M327.7 213.3l-.1 6.4M327.7 146.4l-.1 6.5M394.6 405.3l-.2-6.4M394.6 338.4l-.2-6.3M394.6 347.1l-.2 6.1M394.6 271.5l-.2-6.1M394.6 280.2l-.2 6.3M394.6 213.3l-.2 6.4M461.5 338.4l-.3-6.3M461.5 280.2l-.3 6.3M130.8 342.8l5.9 .1M130.8 275.8l5.9-.1M197.9 409.9l6.1 .2M189.2 342.8l-6.4 .1M197.9 342.8l6.1 .1M189.2 275.8l-6.4-.1M197.9 275.8l6.1-.1M197.9 208.7l6.1-.2M265 477l6.2 .3M256.3 409.9l-6.3 .2M265 409.9l6.2 .2M256.3 342.8l-6.3 .1M265 342.8l6.2 .1M256.3 275.8l-6.3-.1M265 275.8l6.2-.1M256.3 208.7l-6.3-.2M265 208.7l6.2-.2M265 141.6l6.2-.3M323.4 477l-6.2 .3M323.4 409.9l-6.2 .2M332.1 409.9l6.3 .2M323.4 342.8l-6.2 .1M332.1 342.8l6.3 .1M323.4 275.8l-6.2-.1M332.1 275.8l6.3-.1M323.4 208.7l-6.2-.2M332.1 208.7l6.3-.2M323.4 141.6l-6.2-.3M390.5 409.9l-6.1 .2M390.5 342.8l-6.1 .1M399.2 342.8l6.4 .1M390.5 275.8l-6.1-.1M399.2 275.8l6.4-.1M390.5 208.7l-6.1-.2M457.6 342.8l-5.9 .1M457.6 275.8l-5.9-.1"/>
<g fill="url(#gO)"><circle cx="127.8" cy="321.5" r="2.3"/><circle cx="194.3" cy="388.1" r="2.3"/><circle cx="194.3" cy="321.5" r="2.3"/><circle cx="194.3" cy="255" r="2.3"/><circle cx="260.9" cy="454.7" r="2.3"/><circle cx="260.9" cy="388.1" r="2.3"/><circle cx="260.9" cy="321.5" r="2.3"/><circle cx="260.9" cy="255" r="2.3"/><circle cx="260.9" cy="188.4" r="2.3"/><circle cx="327.5" cy="454.7" r="2.3"/><circle cx="327.5" cy="388.1" r="2.3"/><circle cx="327.5" cy="321.5" r="2.3"/><circle cx="327.5" cy="255" r="2.3"/><circle cx="327.5" cy="188.4" r="2.3"/><circle cx="394.1" cy="388.1" r="2.3"/><circle cx="394.1" cy="321.5" r="2.3"/><circle cx="394.1" cy="255" r="2.3"/><circle cx="460.6" cy="321.5" r="2.3"/><circle cx="127.8" cy="297.1" r="2.3"/><circle cx="194.3" cy="363.6" r="2.3"/><circle cx="194.3" cy="297.1" r="2.3"/><circle cx="194.3" cy="230.5" r="2.3"/><circle cx="260.9" cy="430.2" r="2.3"/><circle cx="260.9" cy="363.6" r="2.3"/><circle cx="260.9" cy="297.1" r="2.3"/><circle cx="260.9" cy="230.5" r="2.3"/><circle cx="260.9" cy="163.9" r="2.3"/><circle cx="327.5" cy="430.2" r="2.3"/><circle cx="327.5" cy="363.6" r="2.3"/><circle cx="327.5" cy="297.1" r="2.3"/><circle cx="327.5" cy="230.5" r="2.3"/><circle cx="327.5" cy="163.9" r="2.3"/><circle cx="394.1" cy="363.6" r="2.3"/><circle cx="394.1" cy="297.1" r="2.3"/><circle cx="394.1" cy="230.5" r="2.3"/><circle cx="460.6" cy="297.1" r="2.3"/></g>
<g fill="url(#gS)"><circle cx="93.2" cy="309.3" r="4.3"/><circle cx="160.2" cy="376.3" r="4.3"/><circle cx="160.2" cy="309.3" r="4.3"/><circle cx="160.2" cy="242.3" r="4.3"/><circle cx="227.2" cy="443.3" r="4.3"/><circle cx="227.2" cy="376.3" r="4.3"/><circle cx="227.2" cy="309.3" r="4.3"/><circle cx="227.2" cy="242.3" r="4.3"/><circle cx="227.2" cy="175.3" r="4.3"/><circle cx="294.2" cy="510.3" r="4.3"/><circle cx="294.2" cy="443.3" r="4.3"/><circle cx="294.2" cy="376.3" r="4.3"/><circle cx="294.2" cy="309.3" r="4.3"/><circle cx="294.2" cy="242.3" r="4.3"/><circle cx="294.2" cy="175.3" r="4.3"/><circle cx="294.2" cy="108.3" r="4.3"/><circle cx="361.2" cy="443.3" r="4.3"/><circle cx="361.2" cy="376.3" r="4.3"/><circle cx="361.2" cy="309.3" r="4.3"/><circle cx="361.2" cy="242.3" r="4.3"/><circle cx="361.2" cy="175.3" r="4.3"/><circle cx="428.2" cy="376.3" r="4.3"/><circle cx="428.2" cy="309.3" r="4.3"/><circle cx="428.2" cy="242.3" r="4.3"/><circle cx="495.2" cy="309.3" r="4.3"/></g>
<g fill="url(#gZ)"><circle cx="126.7" cy="342.8" r="4.7"/><circle cx="126.7" cy="275.8" r="4.7"/><circle cx="193.7" cy="409.8" r="4.7"/><circle cx="193.7" cy="342.8" r="4.7"/><circle cx="193.7" cy="275.8" r="4.7"/><circle cx="193.7" cy="208.8" r="4.7"/><circle cx="260.7" cy="476.8" r="4.7"/><circle cx="260.7" cy="409.8" r="4.7"/><circle cx="260.7" cy="342.8" r="4.7"/><circle cx="260.7" cy="275.8" r="4.7"/><circle cx="260.7" cy="208.8" r="4.7"/><circle cx="260.7" cy="141.8" r="4.7"/><circle cx="327.7" cy="476.8" r="4.7"/><circle cx="327.7" cy="409.8" r="4.7"/><circle cx="327.7" cy="342.8" r="4.7"/><circle cx="327.7" cy="275.8" r="4.7"/><circle cx="327.7" cy="208.8" r="4.7"/><circle cx="327.7" cy="141.8" r="4.7"/><circle cx="394.7" cy="409.8" r="4.7"/><circle cx="394.7" cy="342.8" r="4.7"/><circle cx="394.7" cy="275.8" r="4.7"/><circle cx="394.7" cy="208.8" r="4.7"/><circle cx="461.7" cy="342.8" r="4.7"/><circle cx="461.7" cy="275.8" r="4.7"/></g>
<path stroke="#0dd" stroke-width="1.1" d="M95.4 309.3l2.3 0M156.6 309.3l-3.7 0M223.8 376.6l-3.4 .3M223.8 309.3l-3.4 0M223.8 242l-3.4-.3M291.1 443.9l-3.2 .6M291.1 376.6l-3.2 .3M291.1 309.3l-3.2 0M291.1 242l-3.2-.3M291.1 174.7l-3.2-.6M358.4 443.9l-2.9 .6M358.4 376.6l-2.9 .3M358.4 309.3l-2.9 0M358.4 242l-2.9-.3M358.4 174.7l-2.9-.6M425.7 376.6l-2.6 .3M425.7 309.3l-2.6 0M431.8 309.3l3.7 0M425.7 242l-2.6-.3M493 309.3l-2.3 0M162.7 376.6l2.6 .3M162.7 309.3l2.6 0M162.7 242l2.6-.3M230 443.9l2.9 .6M230 376.6l2.9 .3M230 309.3l2.9 0M230 242l2.9-.3M230 174.7l2.9-.6M297.3 443.9l3.2 .6M297.3 376.6l3.2 .3M297.3 309.3l3.2 0M297.3 242l3.2-.3M297.3 174.7l3.2-.6M364.6 376.6l3.4 .3M364.6 309.3l3.4 0M364.6 242l3.4-.3M160.7 343.5l3.7-.1M154.4 343.5l-2.6-.1M160.7 275.1l3.7 .1M154.4 275.1l-2.6 .1M229 411.8l3.4-.4M222.8 411.8l-2.9-.4M229 343.5l3.4-.1M222.8 343.5l-2.9-.1M229 275.1l3.4 .1M222.8 275.1l-2.9 .1M229 206.8l3.4 .4M222.8 206.8l-2.9 .4M297.3 480.1l3.1-.7M291.1 480.1l-3.1-.7M297.3 411.8l3.1-.4M291.1 411.8l-3.1-.4M297.3 343.5l3.1-.1M291.1 343.5l-3.1-.1M297.3 275.1l3.1 .1M291.1 275.1l-3.1 .1M297.3 206.8l3.1 .4M291.1 206.8l-3.1 .4M297.3 138.5l3.1 .7M291.1 138.5l-3.1 .7M365.6 411.8l2.9-.4M359.4 411.8l-3.4-.4M365.6 343.5l2.9-.1M359.4 343.5l-3.4-.1M365.6 275.1l2.9 .1M359.4 275.1l-3.4 .1M365.6 206.8l2.9 .4M359.4 206.8l-3.4 .4M434 343.5l2.6-.1M427.7 343.5l-3.7-.1M434 275.1l2.6 .1M427.7 275.1l-3.7 .1"/>
<path stroke="#c8c8c8" stroke-width=".8" d="M125.7 345.4l-.9 2.3M125.7 273.2l-.9-2.3M193.1 412.8l-.5 2.7M193.1 205.8l-.5-2.7M260.5 480.2l-.2 3.1M260.5 138.4l-.2-3.1M327.9 480.2l.2 3.1M327.9 138.4l.2-3.1M395.3 412.8l.5 2.7M395.3 205.8l.5-2.7M462.7 345.4l.9 2.3M462.7 273.2l.9-2.3"/>
<path stroke="#dc0000" stroke-width=".8" d="M87.4 309.3l-6.6 0M154.8 376.7l-6.2 .5M154.8 241.9l-6.2-.5M222.2 444.2l-5.7 1M222.2 174.4l-5.7-1M289.7 511.6l-5.2 1.4M298.7 511.6l5.2 1.4M289.7 107l-5.2-1.4M298.7 107l5.2-1.4M366.2 444.2l5.7 1M366.2 174.4l5.7-1M433.6 376.7l6.2 .5M433.6 241.9l6.2-.5M501 309.3l6.6 0M124.8 347.7l-2.2 5.7M124.8 270.9l-2.2-5.7M192.6 415.5l-1.3 6.6M192.6 203.1l-1.3-6.6M260.3 483.3l-.4 7.4M260.3 135.3l-.4-7.4M328.1 483.3l.4 7.4M328.1 135.3l.4-7.4M395.8 415.5l1.3 6.6M395.8 203.1l1.3-6.6M463.6 347.7l2.2 5.7M463.6 270.9l2.2-5.7"/>
<path stroke="#c8c8c8" stroke-width="1.1" d="M125.7 340.6l-1.6-3.5M125.7 278l-1.6 3.5M193.1 408l-.9-2.9M193.1 345.4l-.9 4.2M193.1 340.6l-.9-3.5M193.1 278l-.9 3.5M193.1 273.2l-.9-4.2M193.1 210.6l-.9 2.9M260.5 475.4l-.3-2.3M260.5 412.8l-.3 4.8M260.5 408l-.3-2.9M260.5 345.4l-.3 4.2M260.5 340.6l-.3-3.5M260.5 278l-.3 3.5M260.5 273.2l-.3-4.2M260.5 210.6l-.3 2.9M260.5 205.8l-.3-4.8M260.5 143.2l-.3 2.3M327.9 475.4l.3-2.3M327.9 412.8l.3 4.8M327.9 408l.3-2.9M327.9 345.4l.3 4.2M327.9 340.6l.3-3.5M327.9 278l.3 3.5M327.9 273.2l.3-4.2M327.9 210.6l.3 2.9M327.9 205.8l.3-4.8M327.9 143.2l.3 2.3M395.3 408l.9-2.9M395.3 345.4l.9 4.2M395.3 340.6l.9-3.5M395.3 278l.9 3.5M395.3 273.2l.9-4.2M395.3 210.6l.9 2.9M462.7 340.6l1.6-3.5M462.7 278l1.6 3.5M123.7 311.7l1.6 3.8M123.7 306.9l1.6-3.8M191.9 379.9l.9 3.2M191.9 375.1l.9-4.4M191.9 311.7l.9 3.8M191.9 306.9l.9-3.8M191.9 243.5l.9 4.4M191.9 238.7l.9-3.2M260.1 448.2l.3 2.5M260.1 443.3l.3-5.1M260.1 379.9l.3 3.2M260.1 375.1l.3-4.4M260.1 311.7l.3 3.8M260.1 306.9l.3-3.8M260.1 243.5l.3 4.4M260.1 238.7l.3-3.2M260.1 175.3l.3 5.1M260.1 170.4l.3-2.5M328.3 448.2l-.3 2.5M328.3 443.3l-.3-5.1M328.3 379.9l-.3 3.2M328.3 375.1l-.3-4.4M328.3 311.7l-.3 3.8M328.3 306.9l-.3-3.8M328.3 243.5l-.3 4.4M328.3 238.7l-.3-3.2M328.3 175.3l-.3 5.1M328.3 170.4l-.3-2.5M396.5 379.9l-.9 3.2M396.5 375.1l-.9-4.4M396.5 311.7l-.9 3.8M396.5 306.9l-.9-3.8M396.5 243.5l-.9 4.4M396.5 238.7l-.9-3.2M464.7 311.7l-1.6 3.8M464.7 306.9l-1.6-3.8M127.4 309.3l6.7 0M118.4 309.3l-6 0M195.9 377.8l6.5-.1M186.9 377.8l-6.1-.1M195.9 309.3l6.5 0M186.9 309.3l-6.1 0M195.9 240.8l6.5 .1M186.9 240.8l-6.1 .1M264.4 446.3l6.4-.3M255.5 446.3l-6.3-.3M264.4 377.8l6.4-.1M255.5 377.8l-6.3-.1M264.4 309.3l6.4 0M255.5 309.3l-6.3 0M264.4 240.8l6.4 .1M255.5 240.8l-6.3 .1M264.4 172.3l6.4 .3M255.5 172.3l-6.3 .3M332.9 446.3l6.3-.3M324 446.3l-6.4-.3M332.9 377.8l6.3-.1M324 377.8l-6.4-.1M332.9 309.3l6.3 0M324 309.3l-6.4 0M332.9 240.8l6.3 .1M324 240.8l-6.4 .1M332.9 172.3l6.3 .3M324 172.3l-6.4 .3M401.5 377.8l6.1-.1M392.5 377.8l-6.5-.1M401.5 309.3l6.1 0M392.5 309.3l-6.5 0M401.5 240.8l6.1 .1M392.5 240.8l-6.5 .1M470 309.3l6 0M461 309.3l-6.7 0"/>
<path stroke="#e80000" stroke-width="1.1" d="M97.7 309.3l3.4 0M165.3 376.9l3.8 .4M152.8 309.3l-5.6 0M165.3 309.3l3.8 0M165.3 241.7l3.8-.4M232.8 444.5l4.3 .9M220.4 376.9l-5.1 .4M232.8 376.9l4.3 .4M220.4 309.3l-5.1 0M232.8 309.3l4.3 0M220.4 241.7l-5.1-.4M232.8 241.7l4.3-.4M232.8 174.1l4.3-.9M288 444.5l-4.7 .9M300.4 444.5l4.7 .9M288 376.9l-4.7 .4M300.4 376.9l4.7 .4M288 309.3l-4.7 0M300.4 309.3l4.7 0M288 241.7l-4.7-.4M300.4 241.7l4.7-.4M288 174.1l-4.7-.9M300.4 174.1l4.7-.9M355.6 444.5l-4.3 .9M355.6 376.9l-4.3 .4M368 376.9l5.1 .4M355.6 309.3l-4.3 0M368 309.3l5.1 0M355.6 241.7l-4.3-.4M368 241.7l5.1-.4M355.6 174.1l-4.3-.9M423.1 376.9l-3.8 .4M423.1 309.3l-3.8 0M435.6 309.3l5.6 0M423.1 241.7l-3.8-.4M490.7 309.3l-3.4 0M164.4 343.3l5.4-.2M151.9 343.3l-3.7-.2M164.4 275.3l5.4 .2M151.9 275.3l-3.7 .2M232.4 411.3l5-.6M219.9 411.3l-4.2-.6M232.4 343.3l5-.2M219.9 343.3l-4.2-.2M232.4 275.3l5 .2M219.9 275.3l-4.2 .2M232.4 207.3l5 .6M219.9 207.3l-4.2 .6M300.5 479.4l4.6-1.1M287.9 479.4l-4.6-1.1M300.5 411.3l4.6-.6M287.9 411.3l-4.6-.6M300.5 343.3l4.6-.2M287.9 343.3l-4.6-.2M300.5 275.3l4.6 .2M287.9 275.3l-4.6 .2M300.5 207.3l4.6 .6M287.9 207.3l-4.6 .6M300.5 139.2l4.6 1.1M287.9 139.2l-4.6 1.1M368.5 411.3l4.2-.6M356 411.3l-5-.6M368.5 343.3l4.2-.2M356 343.3l-5-.2M368.5 275.3l4.2 .2M356 275.3l-5 .2M368.5 207.3l4.2 .6M356 207.3l-5 .6M436.5 343.3l3.7-.2M424 343.3l-5.4-.2M436.5 275.3l3.7 .2M424 275.3l-5.4 .2M134 309.3l9.1 0M112.4 309.3l-8.2 0M202.4 377.7l8.9-.2M180.8 377.7l-8.4-.2M202.4 309.3l8.9 0M180.8 309.3l-8.4 0M202.4 240.9l8.9 .2M180.8 240.9l-8.4 .2M270.8 446.1l8.7-.4M249.2 446.1l-8.5-.4M270.8 377.7l8.7-.2M249.2 377.7l-8.5-.2M270.8 309.3l8.7 0M249.2 309.3l-8.5 0M270.8 240.9l8.7 .2M249.2 240.9l-8.5 .2M270.8 172.5l8.7 .4M249.2 172.5l-8.5 .4M339.2 446.1l8.5-.4M317.6 446.1l-8.7-.4M339.2 377.7l8.5-.2M317.6 377.7l-8.7-.2M339.2 309.3l8.5 0M317.6 309.3l-8.7 0M339.2 240.9l8.5 .2M317.6 240.9l-8.7 .2M339.2 172.5l8.5 .4M317.6 172.5l-8.7 .4M407.6 377.7l8.4-.2M386 377.7l-8.9-.2M407.6 309.3l8.4 0M386 309.3l-8.9 0M407.6 240.9l8.4 .2M386 240.9l-8.9 .2M476 309.3l8.2 0M454.4 309.3l-9.1 0M124.1 337.1l-2.1-4.8M124.1 281.5l-2.1 4.8M192.2 405.1l-1.3-4M192.2 349.6l-1.3 5.7M192.2 337.1l-1.3-4.8M192.2 281.5l-1.3 4.8M192.2 269l-1.3-5.7M192.2 213.5l-1.3 4M260.2 473.1l-.4-3.1M260.2 417.6l-.4 6.5M260.2 405.1l-.4-4M260.2 349.6l-.4 5.7M260.2 337.1l-.4-4.8M260.2 281.5l-.4 4.8M260.2 269l-.4-5.7M260.2 213.5l-.4 4M260.2 201l-.4-6.5M260.2 145.5l-.4 3.1M328.2 473.1l.4-3.1M328.2 417.6l.4 6.5M328.2 405.1l.4-4M328.2 349.6l.4 5.7M328.2 337.1l.4-4.8M328.2 281.5l.4 4.8M328.2 269l.4-5.7M328.2 213.5l.4 4M328.2 201l.4-6.5M328.2 145.5l.4 3.1M396.2 405.1l1.3-4M396.2 349.6l1.3 5.7M396.2 337.1l1.3-4.8M396.2 281.5l1.3 4.8M396.2 269l1.3-5.7M396.2 213.5l1.3 4M464.3 337.1l2.1-4.8M464.3 281.5l2.1 4.8"/>
<g fill="url(#gO)"><circle cx="171.7" cy="343" r="2.4"/><circle cx="171.7" cy="275.6" r="2.4"/><circle cx="239.2" cy="410.5" r="2.4"/><circle cx="239.2" cy="343" r="2.4"/><circle cx="239.2" cy="275.6" r="2.4"/><circle cx="239.2" cy="208.1" r="2.4"/><circle cx="306.6" cy="477.9" r="2.4"/><circle cx="306.6" cy="410.5" r="2.4"/><circle cx="306.6" cy="343" r="2.4"/><circle cx="306.6" cy="275.6" r="2.4"/><circle cx="306.6" cy="208.1" r="2.4"/><circle cx="306.6" cy="140.7" r="2.4"/><circle cx="374.1" cy="410.5" r="2.4"/><circle cx="374.1" cy="343" r="2.4"/><circle cx="374.1" cy="275.6" r="2.4"/><circle cx="374.1" cy="208.1" r="2.4"/><circle cx="441.5" cy="343" r="2.4"/><circle cx="441.5" cy="275.6" r="2.4"/><circle cx="146.9" cy="343" r="2.4"/><circle cx="146.9" cy="275.6" r="2.4"/><circle cx="214.3" cy="410.5" r="2.4"/><circle cx="214.3" cy="343" r="2.4"/><circle cx="214.3" cy="275.6" r="2.4"/><circle cx="214.3" cy="208.1" r="2.4"/><circle cx="281.8" cy="477.9" r="2.4"/><circle cx="281.8" cy="410.5" r="2.4"/><circle cx="281.8" cy="343" r="2.4"/><circle cx="281.8" cy="275.6" r="2.4"/><circle cx="281.8" cy="208.1" r="2.4"/><circle cx="281.8" cy="140.7" r="2.4"/><circle cx="349.2" cy="410.5" r="2.4"/><circle cx="349.2" cy="343" r="2.4"/><circle cx="349.2" cy="275.6" r="2.4"/><circle cx="349.2" cy="208.1" r="2.4"/><circle cx="416.7" cy="343" r="2.4"/><circle cx="416.7" cy="275.6" r="2.4"/><circle cx="145.3" cy="309.3" r="2.4"/><circle cx="213.5" cy="377.5" r="2.4"/><circle cx="213.5" cy="309.3" r="2.4"/><circle cx="213.5" cy="241.1" r="2.4"/><circle cx="281.7" cy="445.6" r="2.4"/><circle cx="281.7" cy="377.5" r="2.4"/><circle cx="281.7" cy="309.3" r="2.4"/><circle cx="281.7" cy="241.1" r="2.4"/><circle cx="281.7" cy="173" r="2.4"/><circle cx="349.8" cy="445.6" r="2.4"/><circle cx="349.8" cy="377.5" r="2.4"/><circle cx="349.8" cy="309.3" r="2.4"/><circle cx="349.8" cy="241.1" r="2.4"/><circle cx="349.8" cy="173" r="2.4"/><circle cx="418" cy="377.5" r="2.4"/><circle cx="418" cy="309.3" r="2.4"/><circle cx="418" cy="241.1" r="2.4"/><circle cx="486.1" cy="309.3" r="2.4"/><circle cx="102.3" cy="309.3" r="2.4"/><circle cx="170.4" cy="377.5" r="2.4"/><circle cx="170.4" cy="309.3" r="2.4"/><circle cx="170.4" cy="241.1" r="2.4"/><circle cx="238.6" cy="445.6" r="2.4"/><circle cx="238.6" cy="377.5" r="2.4"/><circle cx="238.6" cy="309.3" r="2.4"/><circle cx="238.6" cy="241.1" r="2.4"/><circle cx="238.6" cy="173" r="2.4"/><circle cx="306.7" cy="445.6" r="2.4"/><circle cx="306.7" cy="377.5" r="2.4"/><circle cx="306.7" cy="309.3" r="2.4"/><circle cx="306.7" cy="241.1" r="2.4"/><circle cx="306.7" cy="173" r="2.4"/><circle cx="374.9" cy="377.5" r="2.4"/><circle cx="374.9" cy="309.3" r="2.4"/><circle cx="374.9" cy="241.1" r="2.4"/><circle cx="443.1" cy="309.3" r="2.4"/></g>
<path stroke="#e80000" stroke-width="1.1" d="M92.9 309.3l7.7 0M162.1 378.5l6.8-.9M149.4 309.3l-3.3 0M162.1 309.3l6.8 0M162.1 240.1l6.8 .9M231.4 447.7l5.9-1.7M218.6 378.5l-4.2-.9M231.4 378.5l5.9-.9M218.6 309.3l-4.2 0M231.4 309.3l5.9 0M218.6 240.1l-4.2 .9M231.4 240.1l5.9 .9M231.4 170.9l5.9 1.7M287.8 447.7l-5.1-1.7M300.6 447.7l5.1-1.7M287.8 378.5l-5.1-.9M300.6 378.5l5.1-.9M287.8 309.3l-5.1 0M300.6 309.3l5.1 0M287.8 240.1l-5.1 .9M300.6 240.1l5.1 .9M287.8 170.9l-5.1 1.7M300.6 170.9l5.1 1.7M357 447.7l-5.9-1.7M357 378.5l-5.9-.9M369.8 378.5l4.2-.9M357 309.3l-5.9 0M369.8 309.3l4.2 0M357 240.1l-5.9 .9M369.8 240.1l4.2 .9M357 170.9l-5.9 1.7M426.3 378.5l-6.8-.9M426.3 309.3l-6.8 0M439 309.3l3.3 0M426.3 240.1l-6.8 .9M495.5 309.3l-7.7 0M122.1 298.4l-.5-8.8M122.1 320.2l-.5 8.8M190.9 367.3l-.3-8.6M190.9 389l-.3 9M190.9 298.4l-.3-8.8M190.9 320.2l-.3 8.8M190.9 229.6l-.3-9M190.9 251.3l-.3 8.6M259.8 436.1l-.1-8.4M259.8 457.9l-.1 9.2M259.8 367.3l-.1-8.6M259.8 389l-.1 9M259.8 298.4l-.1-8.8M259.8 320.2l-.1 8.8M259.8 229.6l-.1-9M259.8 251.3l-.1 8.6M259.8 160.7l-.1-9.2M259.8 182.5l-.1 8.4M328.6 436.1l.1-8.4M328.6 457.9l.1 9.2M328.6 367.3l.1-8.6M328.6 389l.1 9M328.6 298.4l.1-8.8M328.6 320.2l.1 8.8M328.6 229.6l.1-9M328.6 251.3l.1 8.6M328.6 160.7l.1-9.2M328.6 182.5l.1 8.4M397.5 367.3l.3-8.6M397.5 389l.3 9M397.5 298.4l.3-8.8M397.5 320.2l.3 8.8M397.5 229.6l.3-9M397.5 251.3l.3 8.6M466.3 298.4l.5-8.8M466.3 320.2l.5 8.8M155.8 350.3l-.9 5M155.8 337.5l-.9-4.6M155.8 281.1l-.9 4.6M155.8 268.3l-.9-5M225 419.5l-.5 5.5M225 406.8l-.5-4.1M225 350.3l-.5 5M225 337.5l-.5-4.6M225 281.1l-.5 4.6M225 268.3l-.5-5M225 211.8l-.5 4.1M225 199.1l-.5-5.5M294.2 476l0-3.7M294.2 419.5l0 5.5M294.2 406.8l0-4.1M294.2 350.3l0 5M294.2 337.5l0-4.6M294.2 281.1l0 4.6M294.2 268.3l0-5M294.2 211.8l0 4.1M294.2 199.1l0-5.5M294.2 142.6l0 3.7M363.4 419.5l.5 5.5M363.4 406.8l.5-4.1M363.4 350.3l.5 5M363.4 337.5l.5-4.6M363.4 281.1l.5 4.6M363.4 268.3l.5-5M363.4 211.8l.5 4.1M363.4 199.1l.5-5.5M432.6 350.3l.9 5M432.6 337.5l.9-4.6M432.6 281.1l.9 4.6M432.6 268.3l.9-5M120 337.7l1.1-4.9M120 280.9l1.1 4.9M189.7 407.4l.7-5.4M189.7 350.6l.7 4.5M189.7 337.7l.7-4.9M189.7 280.9l.7 4.9M189.7 268l.7-4.5M189.7 211.2l.7 5.4M259.4 477.1l.2-5.8M259.4 420.2l.2 4M259.4 407.4l.2-5.4M259.4 350.6l.2 4.5M259.4 337.7l.2-4.9M259.4 280.9l.2 4.9M259.4 268l.2-4.5M259.4 211.2l.2 5.4M259.4 198.4l.2-4M259.4 141.5l.2 5.8M329 477.1l-.2-5.8M329 420.2l-.2 4M329 407.4l-.2-5.4M329 350.6l-.2 4.5M329 337.7l-.2-4.9M329 280.9l-.2 4.9M329 268l-.2-4.5M329 211.2l-.2 5.4M329 198.4l-.2-4M329 141.5l-.2 5.8M398.7 407.4l-.7-5.4M398.7 350.6l-.7 4.5M398.7 337.7l-.7-4.9M398.7 280.9l-.7 4.9M398.7 268l-.7-4.5M398.7 211.2l-.7 5.4M468.4 337.7l-1.1-4.9M468.4 280.9l-1.1 4.9"/>
<path stroke="#c8c8c8" stroke-width="1.1" d="M122.4 304.8l-.3-6.4M122.4 313.8l-.3 6.4M191.1 373.5l-.2-6.3M191.1 382.5l-.2 6.5M191.1 304.8l-.2-6.4M191.1 313.8l-.2 6.4M191.1 236.1l-.2-6.5M191.1 245.1l-.2 6.3M259.8 442.2l-.1-6.1M259.8 451.2l-.1 6.7M259.8 373.5l-.1-6.3M259.8 382.5l-.1 6.5M259.8 304.8l-.1-6.4M259.8 313.8l-.1 6.4M259.8 236.1l-.1-6.5M259.8 245.1l-.1 6.3M259.8 167.4l-.1-6.7M259.8 176.4l-.1 6.1M328.6 442.2l.1-6.1M328.6 451.2l.1 6.7M328.6 373.5l.1-6.3M328.6 382.5l.1 6.5M328.6 304.8l.1-6.4M328.6 313.8l.1 6.4M328.6 236.1l.1-6.5M328.6 245.1l.1 6.3M328.6 167.4l.1-6.7M328.6 176.4l.1 6.1M397.3 373.5l.2-6.3M397.3 382.5l.2 6.5M397.3 304.8l.2-6.4M397.3 313.8l.2 6.4M397.3 236.1l.2-6.5M397.3 245.1l.2 6.3M466 304.8l.3-6.4M466 313.8l.3 6.4M124.1 309.3l2.3 0M119.2 309.3l-5.6 0M193.1 378.3l3 .7M188.2 378.3l-4.9 .7M193.1 309.3l3 0M188.2 309.3l-4.9 0M193.1 240.3l3-.7M188.2 240.3l-4.9-.7M262.1 447.4l3.6 1.3M257.2 447.4l-4.3 1.3M262.1 378.3l3.6 .7M257.2 378.3l-4.3 .7M262.1 309.3l3.6 0M257.2 309.3l-4.3 0M262.1 240.3l3.6-.7M257.2 240.3l-4.3-.7M262.1 171.2l3.6-1.3M257.2 171.2l-4.3-1.3M331.2 447.4l4.3 1.3M326.3 447.4l-3.6 1.3M331.2 378.3l4.3 .7M326.3 378.3l-3.6 .7M331.2 309.3l4.3 0M326.3 309.3l-3.6 0M331.2 240.3l4.3-.7M326.3 240.3l-3.6-.7M331.2 171.2l4.3-1.3M326.3 171.2l-3.6-1.3M400.2 378.3l4.9 .7M395.3 378.3l-3 .7M400.2 309.3l4.9 0M395.3 309.3l-3 0M400.2 240.3l4.9-.7M395.3 240.3l-3-.7M469.2 309.3l5.6 0M464.3 309.3l-2.3 0M87.1 309.3l5.9 0M156.9 379.2l5.2-.7M152 309.3l-2.5 0M156.9 309.3l5.2 0M156.9 239.4l5.2 .7M226.8 449.1l4.5-1.3M221.8 379.2l-3.2-.7M226.8 379.2l4.5-.7M221.8 309.3l-3.2 0M226.8 309.3l4.5 0M221.8 239.4l-3.2 .7M226.8 239.4l4.5 .7M226.8 169.5l4.5 1.3M291.7 449.1l-3.9-1.3M296.7 449.1l3.9-1.3M291.7 379.2l-3.9-.7M296.7 379.2l3.9-.7M291.7 309.3l-3.9 0M296.7 309.3l3.9 0M291.7 239.4l-3.9 .7M296.7 239.4l3.9 .7M291.7 169.5l-3.9 1.3M296.7 169.5l3.9 1.3M361.6 449.1l-4.5-1.3M361.6 379.2l-4.5-.7M366.6 379.2l3.2-.7M361.6 309.3l-4.5 0M366.6 309.3l3.2 0M361.6 239.4l-4.5 .7M366.6 239.4l3.2 .7M361.6 169.5l-4.5 1.3M431.5 379.2l-5.2-.7M431.5 309.3l-5.2 0M436.4 309.3l2.5 0M431.5 239.4l-5.2 .7M501.3 309.3l-5.9 0"/>
<path stroke="#0dd" stroke-width=".8" d="M294.2 484.7l0 1.9M294.2 133.9l0-1.9"/>
<path stroke="#dc0000" stroke-width=".8" d="M81 309.3l-2.5 0M150.5 378.8l-3.4-.9M150.5 239.8l-3.4 .9M220 448.3l-4.3-1.8M220 170.3l-4.3 1.8M368.4 448.3l4.3-1.8M368.4 170.3l4.3 1.8M437.9 378.8l3.4-.9M437.9 239.8l3.4 .9M507.4 309.3l2.5 0M294.2 486.6l0 6.6M294.2 132l0-6.6"/>
<path stroke="#0dd" stroke-width="1.1" d="M156.4 346.9l-.6 3.4M156.4 340.6l-.6-3.1M156.4 278l-.6 3.1M156.4 271.7l-.6-3.4M225.3 415.8l-.3 3.7M225.3 409.5l-.3-2.8M225.3 346.9l-.3 3.4M225.3 340.6l-.3-3.1M225.3 278l-.3 3.1M225.3 271.7l-.3-3.4M225.3 209.1l-.3 2.8M225.3 202.8l-.3-3.7M294.2 478.4l0-2.5M294.2 415.8l0 3.7M294.2 409.5l0-2.8M294.2 346.9l0 3.4M294.2 340.6l0-3.1M294.2 278l0 3.1M294.2 271.7l0-3.4M294.2 209.1l0 2.8M294.2 202.8l0-3.7M294.2 140.2l0 2.5M363.1 415.8l.3 3.7M363.1 409.5l.3-2.8M363.1 346.9l.3 3.4M363.1 340.6l.3-3.1M363.1 278l.3 3.1M363.1 271.7l.3-3.4M363.1 209.1l.3 2.8M363.1 202.8l.3-3.7M432 346.9l.6 3.4M432 340.6l.6-3.1M432 278l.6 3.1M432 271.7l.6-3.4"/>
<g fill="url(#gO)"><circle cx="121.5" cy="287.5" r="2.4"/><circle cx="190.6" cy="356.6" r="2.4"/><circle cx="190.6" cy="287.5" r="2.4"/><circle cx="190.6" cy="218.4" r="2.4"/><circle cx="259.7" cy="425.6" r="2.4"/><circle cx="259.7" cy="356.6" r="2.4"/><circle cx="259.7" cy="287.5" r="2.4"/><circle cx="259.7" cy="218.4" r="2.4"/><circle cx="259.7" cy="149.3" r="2.4"/><circle cx="328.7" cy="425.6" r="2.4"/><circle cx="328.7" cy="356.6" r="2.4"/><circle cx="328.7" cy="287.5" r="2.4"/><circle cx="328.7" cy="218.4" r="2.4"/><circle cx="328.7" cy="149.3" r="2.4"/><circle cx="397.8" cy="356.6" r="2.4"/><circle cx="397.8" cy="287.5" r="2.4"/><circle cx="397.8" cy="218.4" r="2.4"/><circle cx="466.9" cy="287.5" r="2.4"/><circle cx="121.5" cy="331.1" r="2.4"/><circle cx="190.6" cy="400.2" r="2.4"/><circle cx="190.6" cy="331.1" r="2.4"/><circle cx="190.6" cy="262" r="2.4"/><circle cx="259.7" cy="469.3" r="2.4"/><circle cx="259.7" cy="400.2" r="2.4"/><circle cx="259.7" cy="331.1" r="2.4"/><circle cx="259.7" cy="262" r="2.4"/><circle cx="259.7" cy="193" r="2.4"/><circle cx="328.7" cy="469.3" r="2.4"/><circle cx="328.7" cy="400.2" r="2.4"/><circle cx="328.7" cy="331.1" r="2.4"/><circle cx="328.7" cy="262" r="2.4"/><circle cx="328.7" cy="193" r="2.4"/><circle cx="397.8" cy="400.2" r="2.4"/><circle cx="397.8" cy="331.1" r="2.4"/><circle cx="397.8" cy="262" r="2.4"/><circle cx="466.9" cy="331.1" r="2.4"/></g>
<g fill="url(#gS)"><circle cx="157" cy="343.6" r="4.4"/><circle cx="157" cy="275" r="4.4"/><circle cx="225.6" cy="412.2" r="4.4"/><circle cx="225.6" cy="343.6" r="4.4"/><circle cx="225.6" cy="275" r="4.4"/><circle cx="225.6" cy="206.4" r="4.4"/><circle cx="294.2" cy="480.8" r="4.4"/><circle cx="294.2" cy="412.2" r="4.4"/><circle cx="294.2" cy="343.6" r="4.4"/><circle cx="294.2" cy="275" r="4.4"/><circle cx="294.2" cy="206.4" r="4.4"/><circle cx="294.2" cy="137.8" r="4.4"/><circle cx="362.8" cy="412.2" r="4.4"/><circle cx="362.8" cy="343.6" r="4.4"/><circle cx="362.8" cy="275" r="4.4"/><circle cx="362.8" cy="206.4" r="4.4"/><circle cx="431.4" cy="343.6" r="4.4"/><circle cx="431.4" cy="275" r="4.4"/></g>
<g fill="url(#gZ)"><circle cx="122.7" cy="309.3" r="4.8"/><circle cx="191.3" cy="377.9" r="4.8"/><circle cx="191.3" cy="309.3" r="4.8"/><circle cx="191.3" cy="240.7" r="4.8"/><circle cx="259.9" cy="446.5" r="4.8"/><circle cx="259.9" cy="377.9" r="4.8"/><circle cx="259.9" cy="309.3" r="4.8"/><circle cx="259.9" cy="240.7" r="4.8"/><circle cx="259.9" cy="172.1" r="4.8"/><circle cx="328.5" cy="446.5" r="4.8"/><circle cx="328.5" cy="377.9" r="4.8"/><circle cx="328.5" cy="309.3" r="4.8"/><circle cx="328.5" cy="240.7" r="4.8"/><circle cx="328.5" cy="172.1" r="4.8"/><circle cx="397.1" cy="377.9" r="4.8"/><circle cx="397.1" cy="309.3" r="4.8"/><circle cx="397.1" cy="240.7" r="4.8"/><circle cx="465.7" cy="309.3" r="4.8"/></g>
<path stroke="#dc0000" stroke-width=".8" d="M119.6 348.9l1.3 5M119.6 269.7l1.3-5M189.4 418.8l.8 4.5M189.4 199.8l.8-4.5M259.3 488.6l.3 4M259.3 130l.3-4M329.1 488.6l-.3 4M329.1 130l-.3-4M399 418.8l-.8 4.5M399 199.8l-.8-4.5M468.8 348.9l-1.3 5M468.8 269.7l-1.3-5M83.8 301.2l.6-9.1M83.8 317.4l.6 9.1M153.9 387.6l.4 8.9M153.9 231l.4-8.9M224.1 457.7l.2 8.7M224.1 160.9l.2-8.7M364.3 457.7l-.2 8.7M364.3 160.9l-.2-8.7M434.5 387.6l-.4 8.9M434.5 231l-.4-8.9M504.6 301.2l-.6-9.1M504.6 317.4l-.6 9.1M74.6 309.3l-9.9 0M145.1 379.8l-9.7 .2M145.1 238.8l-9.7-.2M215.6 450.3l-9.5 .4M215.6 168.3l-9.5-.4M372.8 450.3l9.5 .4M372.8 168.3l9.5-.4M443.3 379.8l9.7 .2M443.3 238.8l9.7-.2M513.8 309.3l9.9 0"/>
<path stroke="#c8c8c8" stroke-width=".8" d="M82.1 309.3l-1.1 0M152 379.2l-1.4-.4M152 239.4l-1.4 .4M221.8 449.1l-1.8-.8M221.8 169.5l-1.8 .8M366.6 449.1l1.8-.8M366.6 169.5l1.8 .8M436.4 379.2l1.4-.4M436.4 239.4l1.4 .4M506.3 309.3l1.1 0M83.6 304.7l.2-3.5M83.6 313.9l.2 3.5M153.8 384.1l.2 3.5M153.8 234.5l.2-3.5M224 454.3l.1 3.4M224 164.3l.1-3.4M364.4 454.3l-.1 3.4M364.4 164.3l-.1-3.4M434.6 384.1l-.2 3.5M434.6 234.5l-.2-3.5M504.8 304.7l-.2-3.5M504.8 313.9l-.2 3.5M78.4 309.3l-3.8 0M148.8 379.7l-3.7 .1M148.8 238.9l-3.7-.1M219.2 450.1l-3.7 .2M219.2 168.5l-3.7-.2M369.2 450.1l3.7 .2M369.2 168.5l3.7-.2M439.6 379.7l3.7 .1M439.6 238.9l3.7-.1M510 309.3l3.8 0"/>
<path stroke="#0dd" stroke-width="1.2" d="M119.2 341.1l.8-3.4M119.2 277.5l.8 3.4M189.2 411.1l.5-3.7M189.2 347.5l.5 3.1M189.2 341.1l.5-3.4M189.2 277.5l.5 3.4M189.2 271.1l.5-3.1M189.2 207.5l.5 3.7M259.2 481.1l.2-4M259.2 417.5l.2 2.8M259.2 411.1l.2-3.7M259.2 347.5l.2 3.1M259.2 341.1l.2-3.4M259.2 277.5l.2 3.4M259.2 271.1l.2-3.1M259.2 207.5l.2 3.7M259.2 201.1l.2-2.8M259.2 137.5l.2 4M329.2 481.1l-.2-4M329.2 417.5l-.2 2.8M329.2 411.1l-.2-3.7M329.2 347.5l-.2 3.1M329.2 341.1l-.2-3.4M329.2 277.5l-.2 3.4M329.2 271.1l-.2-3.1M329.2 207.5l-.2 3.7M329.2 201.1l-.2-2.8M329.2 137.5l-.2 4M399.2 411.1l-.5-3.7M399.2 347.5l-.5 3.1M399.2 341.1l-.5-3.4M399.2 277.5l-.5 3.4M399.2 271.1l-.5-3.1M399.2 207.5l-.5 3.7M469.2 341.1l-.8-3.4M469.2 277.5l-.8 3.4"/>
<path stroke="#0dd" stroke-width=".8" d="M119.2 347.5l.4 1.5M119.2 271.1l.4-1.5M189.2 417.5l.2 1.3M189.2 201.1l.2-1.3M259.2 487.5l.1 1.2M259.2 131.1l.1-1.2M329.2 487.5l-.1 1.2M329.2 131.1l-.1-1.2M399.2 417.5l-.2 1.3M399.2 201.1l-.2-1.3M469.2 347.5l-.4 1.5M469.2 271.1l-.4-1.5M114.4 344.6l-1.9 .1M114.4 274l-1.9-.1M185.1 415.2l-1.8 .2M185.1 203.4l-1.8-.2M255.7 485.8l-1.6 .4M262.1 485.8l1.5 .4M255.7 132.8l-1.6-.4M262.1 132.8l1.5-.4M326.3 485.8l-1.5 .4M332.7 485.8l1.6 .4M326.3 132.8l-1.5-.4M332.7 132.8l1.6-.4M403.3 415.2l1.8 .2M403.3 203.4l1.8-.2M474 344.6l1.9 .1M474 274l1.9-.1"/>
<path stroke="#e80000" stroke-width="1.2" d="M154.1 368.3l.4-9M154.1 298.2l.4-8.9M154.1 320.4l.4 8.9M154.1 250.3l.4 9M224.1 438.4l.2-9.2M224.1 368.3l.2-9M224.1 390.4l.2 8.7M224.1 298.2l.2-8.9M224.1 320.4l.2 8.9M224.1 228.2l.2-8.7M224.1 250.3l.2 9M224.1 180.2l.2 9.2M294.2 438.4l0-9.2M294.2 460.5l0 8.5M294.2 368.3l0-9M294.2 390.4l0 8.7M294.2 298.2l0-8.9M294.2 320.4l0 8.9M294.2 228.2l0-8.7M294.2 250.3l0 9M294.2 158.1l0-8.5M294.2 180.2l0 9.2M364.3 438.4l-.2-9.2M364.3 368.3l-.2-9M364.3 390.4l-.2 8.7M364.3 298.2l-.2-8.9M364.3 320.4l-.2 8.9M364.3 228.2l-.2-8.7M364.3 250.3l-.2 9M364.3 180.2l-.2 9.2M434.3 368.3l-.4-9M434.3 298.2l-.4-8.9M434.3 320.4l-.4 8.9M434.3 250.3l-.4 9M126.4 309.3l3.1 0M113.6 309.3l-7.6 0M196.1 379l4 .9M183.3 379l-6.7 .9M196.1 309.3l4 0M183.3 309.3l-6.7 0M196.1 239.6l4-.9M183.3 239.6l-6.7-.9M265.8 448.7l4.9 1.8M252.9 448.7l-5.8 1.8M265.8 379l4.9 .9M252.9 379l-5.8 .9M265.8 309.3l4.9 0M252.9 309.3l-5.8 0M265.8 239.6l4.9-.9M252.9 239.6l-5.8-.9M265.8 169.9l4.9-1.8M252.9 169.9l-5.8-1.8M335.5 448.7l5.8 1.8M322.6 448.7l-4.9 1.8M335.5 379l5.8 .9M322.6 379l-4.9 .9M335.5 309.3l5.8 0M322.6 309.3l-4.9 0M335.5 239.6l5.8-.9M322.6 239.6l-4.9-.9M335.5 169.9l5.8-1.8M322.6 169.9l-4.9-1.8M405.1 379l6.7 .9M392.3 379l-4 .9M405.1 309.3l6.7 0M392.3 309.3l-4 0M405.1 239.6l6.7-.9M392.3 239.6l-4-.9M474.8 309.3l7.6 0M462 309.3l-3.1 0M152.3 351.3l1.8 4.7M152.3 338.2l1.8-5.6M152.3 280.4l1.8 5.6M152.3 267.3l1.8-4.7M223.3 422.2l.9 3.8M223.3 409.2l.9-6.5M223.3 351.3l.9 4.7M223.3 338.2l.9-5.6M223.3 280.4l.9 5.6M223.3 267.3l.9-4.7M223.3 209.4l.9 6.5M223.3 196.4l.9-3.8M294.2 480.1l0-7.4M294.2 422.2l0 3.8M294.2 409.2l0-6.5M294.2 351.3l0 4.7M294.2 338.2l0-5.6M294.2 280.4l0 5.6M294.2 267.3l0-4.7M294.2 209.4l0 6.5M294.2 196.4l0-3.8M294.2 138.5l0 7.4M365.1 422.2l-.9 3.8M365.1 409.2l-.9-6.5M365.1 351.3l-.9 4.7M365.1 338.2l-.9-5.6M365.1 280.4l-.9 5.6M365.1 267.3l-.9-4.7M365.1 209.4l-.9 6.5M365.1 196.4l-.9-3.8M436.1 351.3l-1.8 4.7M436.1 338.2l-1.8-5.6M436.1 280.4l-1.8 5.6M436.1 267.3l-1.8-4.7M93.7 309.3l8.4 0M164.2 379.8l8.6 .2M142 309.3l-9.4 0M164.2 309.3l8.6 0M164.2 238.8l8.6-.2M234.8 450.4l8.8 .4M212.5 379.8l-9.2 .2M234.8 379.8l8.8 .2M212.5 309.3l-9.2 0M234.8 309.3l8.8 0M212.5 238.8l-9.2-.2M234.8 238.8l8.8-.2M234.8 168.2l8.8-.4M283.1 450.4l-9 .4M305.3 450.4l9 .4M283.1 379.8l-9 .2M305.3 379.8l9 .2M283.1 309.3l-9 0M305.3 309.3l9 0M283.1 238.8l-9-.2M305.3 238.8l9-.2M283.1 168.2l-9-.4M305.3 168.2l9-.4M353.6 450.4l-8.8 .4M353.6 379.8l-8.8 .2M375.9 379.8l9.2 .2M353.6 309.3l-8.8 0M375.9 309.3l9.2 0M353.6 238.8l-8.8-.2M375.9 238.8l9.2-.2M353.6 168.2l-8.8-.4M424.2 379.8l-8.6 .2M424.2 309.3l-8.6 0M446.4 309.3l9.4 0M424.2 238.8l-8.6-.2M494.7 309.3l-8.4 0"/>
<path stroke="#c8c8c8" stroke-width="1.2" d="M153.8 374.9l.3-6.6M153.8 304.7l.3-6.5M153.8 313.9l.3 6.5M153.8 243.7l.3 6.6M224 445.1l.1-6.8M224 374.9l.1-6.6M224 384.1l.1 6.4M224 304.7l.1-6.5M224 313.9l.1 6.5M224 234.5l.1-6.4M224 243.7l.1 6.6M224 173.5l.1 6.8M294.2 445.1l0-6.8M294.2 454.3l0 6.2M294.2 374.9l0-6.6M294.2 384.1l0 6.4M294.2 304.7l0-6.5M294.2 313.9l0 6.5M294.2 234.5l0-6.4M294.2 243.7l0 6.6M294.2 164.3l0-6.2M294.2 173.5l0 6.8M364.4 445.1l-.1-6.8M364.4 374.9l-.1-6.6M364.4 384.1l-.1 6.4M364.4 304.7l-.1-6.5M364.4 313.9l-.1 6.5M364.4 234.5l-.1-6.4M364.4 243.7l-.1 6.6M364.4 173.5l-.1 6.8M434.6 374.9l-.3-6.6M434.6 304.7l-.3-6.5M434.6 313.9l-.3 6.5M434.6 243.7l-.3 6.6M87.6 309.3l6.1 0M158 379.7l6.3 .1M148.8 309.3l-6.8 0M158 309.3l6.3 0M158 238.9l6.3-.1M228.4 450.1l6.4 .3M219.2 379.7l-6.7 .1M228.4 379.7l6.4 .1M219.2 309.3l-6.7 0M228.4 309.3l6.4 0M219.2 238.9l-6.7-.1M228.4 238.9l6.4-.1M228.4 168.5l6.4-.3M289.6 450.1l-6.6 .3M298.8 450.1l6.6 .3M289.6 379.7l-6.6 .1M298.8 379.7l6.6 .1M289.6 309.3l-6.6 0M298.8 309.3l6.6 0M289.6 238.9l-6.6-.1M298.8 238.9l6.6-.1M289.6 168.5l-6.6-.3M298.8 168.5l6.6-.3M360 450.1l-6.4 .3M360 379.7l-6.4 .1M369.2 379.7l6.7 .1M360 309.3l-6.4 0M369.2 309.3l6.7 0M360 238.9l-6.4-.1M369.2 238.9l6.7-.1M360 168.5l-6.4-.3M430.4 379.7l-6.3 .1M430.4 309.3l-6.3 0M439.6 309.3l6.8 0M430.4 238.9l-6.3-.1M500.8 309.3l-6.1 0"/>
<g fill="url(#gO)"><circle cx="154.6" cy="357.1" r="2.4"/><circle cx="154.6" cy="287.2" r="2.4"/><circle cx="224.4" cy="426.9" r="2.4"/><circle cx="224.4" cy="357.1" r="2.4"/><circle cx="224.4" cy="287.2" r="2.4"/><circle cx="224.4" cy="217.4" r="2.4"/><circle cx="294.2" cy="426.9" r="2.4"/><circle cx="294.2" cy="357.1" r="2.4"/><circle cx="294.2" cy="287.2" r="2.4"/><circle cx="294.2" cy="217.4" r="2.4"/><circle cx="294.2" cy="147.6" r="2.4"/><circle cx="364" cy="426.9" r="2.4"/><circle cx="364" cy="357.1" r="2.4"/><circle cx="364" cy="287.2" r="2.4"/><circle cx="364" cy="217.4" r="2.4"/><circle cx="433.8" cy="357.1" r="2.4"/><circle cx="433.8" cy="287.2" r="2.4"/><circle cx="154.6" cy="331.4" r="2.4"/><circle cx="154.6" cy="261.5" r="2.4"/><circle cx="224.4" cy="401.2" r="2.4"/><circle cx="224.4" cy="331.4" r="2.4"/><circle cx="224.4" cy="261.5" r="2.4"/><circle cx="224.4" cy="191.7" r="2.4"/><circle cx="294.2" cy="471" r="2.4"/><circle cx="294.2" cy="401.2" r="2.4"/><circle cx="294.2" cy="331.4" r="2.4"/><circle cx="294.2" cy="261.5" r="2.4"/><circle cx="294.2" cy="191.7" r="2.4"/><circle cx="364" cy="401.2" r="2.4"/><circle cx="364" cy="331.4" r="2.4"/><circle cx="364" cy="261.5" r="2.4"/><circle cx="364" cy="191.7" r="2.4"/><circle cx="433.8" cy="331.4" r="2.4"/><circle cx="433.8" cy="261.5" r="2.4"/></g>
<g fill="url(#gS)"><circle cx="118.4" cy="344.5" r="4.5"/><circle cx="118.4" cy="274.1" r="4.5"/><circle cx="188.7" cy="414.8" r="4.5"/><circle cx="188.7" cy="344.5" r="4.5"/><circle cx="188.7" cy="274.1" r="4.5"/><circle cx="188.7" cy="203.8" r="4.5"/><circle cx="259" cy="485.1" r="4.5"/><circle cx="259" cy="414.8" r="4.5"/><circle cx="259" cy="344.5" r="4.5"/><circle cx="259" cy="274.1" r="4.5"/><circle cx="259" cy="203.8" r="4.5"/><circle cx="259" cy="133.5" r="4.5"/><circle cx="329.4" cy="485.1" r="4.5"/><circle cx="329.4" cy="414.8" r="4.5"/><circle cx="329.4" cy="344.5" r="4.5"/><circle cx="329.4" cy="274.1" r="4.5"/><circle cx="329.4" cy="203.8" r="4.5"/><circle cx="329.4" cy="133.5" r="4.5"/><circle cx="399.7" cy="414.8" r="4.5"/><circle cx="399.7" cy="344.5" r="4.5"/><circle cx="399.7" cy="274.1" r="4.5"/><circle cx="399.7" cy="203.8" r="4.5"/><circle cx="470" cy="344.5" r="4.5"/><circle cx="470" cy="274.1" r="4.5"/></g>
<g fill="url(#gZ)"><circle cx="83.3" cy="309.3" r="4.9"/><circle cx="153.6" cy="379.6" r="4.9"/><circle cx="153.6" cy="309.3" r="4.9"/><circle cx="153.6" cy="239" r="4.9"/><circle cx="223.9" cy="449.9" r="4.9"/><circle cx="223.9" cy="379.6" r="4.9"/><circle cx="223.9" cy="309.3" r="4.9"/><circle cx="223.9" cy="239" r="4.9"/><circle cx="223.9" cy="168.7" r="4.9"/><circle cx="294.2" cy="449.9" r="4.9"/><circle cx="294.2" cy="379.6" r="4.9"/><circle cx="294.2" cy="309.3" r="4.9"/><circle cx="294.2" cy="239" r="4.9"/><circle cx="294.2" cy="168.7" r="4.9"/><circle cx="364.5" cy="449.9" r="4.9"/><circle cx="364.5" cy="379.6" r="4.9"/><circle cx="364.5" cy="309.3" r="4.9"/><circle cx="364.5" cy="239" r="4.9"/><circle cx="364.5" cy="168.7" r="4.9"/><circle cx="434.8" cy="379.6" r="4.9"/><circle cx="434.8" cy="309.3" r="4.9"/><circle cx="434.8" cy="239" r="4.9"/><circle cx="505.1" cy="309.3" r="4.9"/></g>
<path stroke="#dc0000" stroke-width=".8" d="M294.2 492.2l0 3M294.2 126.4l0-3M112.5 344.7l-6.8 .3M112.5 273.9l-6.8-.3M183.3 415.4l-6.2 .8M183.3 203.2l-6.2-.8M254 486.2l-5.7 1.3M263.6 486.2l5.2 1.3M254 132.4l-5.7-1.3M263.6 132.4l5.2-1.3M324.8 486.2l-5.2 1.3M334.4 486.2l5.7 1.3M324.8 132.4l-5.2-1.3M334.4 132.4l5.7-1.3M405.1 415.4l6.2 .8M405.1 203.2l6.2-.8M475.9 344.7l6.8 .3M475.9 273.9l6.8-.3M80.8 314.1l-2.8 5.5M80.8 304.5l-2.8-5.5M151.9 385.2l-1.9 6.5M151.9 233.4l-1.9-6.5M223.1 456.4l-.9 7.4M223.1 162.2l-.9-7.4M365.3 456.4l.9 7.4M365.3 162.2l.9-7.4M436.5 385.2l1.9 6.5M436.5 233.4l1.9-6.5M507.6 314.1l2.8 5.5M507.6 304.5l2.8-5.5M302.5 489l9.3-.5M285.9 489l-9.3-.5M302.5 129.6l9.3 .5M285.9 129.6l-9.3 .5"/>
<path stroke="#0dd" stroke-width="1.2" d="M120.9 344.6l2.5 .2M120.9 274l2.5-.2M191.5 415.2l2.8 .5M185.1 344.6l-3.8 .2M191.5 344.6l2.8 .2M185.1 274l-3.8-.2M191.5 274l2.8-.2M191.5 203.4l2.8-.5M255.7 415.2l-3.5 .5M262.1 415.2l3.2 .5M255.7 344.6l-3.5 .2M262.1 344.6l3.2 .2M255.7 274l-3.5-.2M262.1 274l3.2-.2M255.7 203.4l-3.5-.5M262.1 203.4l3.2-.5M326.3 415.2l-3.2 .5M332.7 415.2l3.5 .5M326.3 344.6l-3.2 .2M332.7 344.6l3.5 .2M326.3 274l-3.2-.2M332.7 274l3.5-.2M326.3 203.4l-3.2-.5M332.7 203.4l3.5-.5M396.9 415.2l-2.8 .5M396.9 344.6l-2.8 .2M403.3 344.6l3.8 .2M396.9 274l-2.8-.2M403.3 274l3.8-.2M396.9 203.4l-2.8-.5M467.5 344.6l-2.5 .2M467.5 274l-2.5-.2M118.1 309.3l4.1 0M111.5 309.3l-2.5 0M189.8 381.1l3.8-.3M183.3 381.1l-2.8-.3M189.8 309.3l3.8 0M183.3 309.3l-2.8 0M189.8 237.5l3.8 .3M183.3 237.5l-2.8 .3M261.6 452.8l3.5-.7M255.1 452.8l-3.1-.7M261.6 381.1l3.5-.3M255.1 381.1l-3.1-.3M261.6 309.3l3.5 0M255.1 309.3l-3.1 0M261.6 237.5l3.5 .3M255.1 237.5l-3.1 .3M261.6 165.8l3.5 .7M255.1 165.8l-3.1 .7M333.3 452.8l3.1-.7M326.8 452.8l-3.5-.7M333.3 381.1l3.1-.3M326.8 381.1l-3.5-.3M333.3 309.3l3.1 0M326.8 309.3l-3.5 0M333.3 237.5l3.1 .3M326.8 237.5l-3.5 .3M333.3 165.8l3.1 .7M326.8 165.8l-3.5 .7M405.1 381.1l2.8-.3M398.6 381.1l-3.8-.3M405.1 309.3l2.8 0M398.6 309.3l-3.8 0M405.1 237.5l2.8 .3M398.6 237.5l-3.8 .3M476.9 309.3l2.5 0M470.3 309.3l-4.1 0"/>
<path stroke="#c8c8c8" stroke-width=".8" d="M82 311.8l-1.2 2.3M82 306.8l-1.2-2.3M152.7 382.6l-.8 2.7M152.7 236l-.8-2.7M223.5 453.3l-.4 3.1M223.5 165.3l-.4-3.1M364.9 453.3l.4 3.1M364.9 165.3l.4-3.1M435.7 382.6l.8 2.7M435.7 236l.8-2.7M506.4 311.8l1.2 2.3M506.4 306.8l1.2-2.3M294.2 490.9l0 1.3M294.2 127.7l0-1.3"/>
<path stroke="#c8c8c8" stroke-width="1.2" d="M152.7 377.5l-1.4-3.4M152.7 311.8l-1.4 4.1M152.7 306.8l-1.4-4.1M152.7 241.1l-1.4 3.4M223.5 448.3l-.7-2.7M223.5 382.6l-.7 4.7M223.5 377.5l-.7-3.4M223.5 311.8l-.7 4.1M223.5 306.8l-.7-4.1M223.5 241.1l-.7 3.4M223.5 236l-.7-4.7M223.5 170.3l-.7 2.7M294.2 453.3l0 5.4M294.2 448.3l0-2.7M294.2 382.6l0 4.7M294.2 377.5l0-3.4M294.2 311.8l0 4.1M294.2 306.8l0-4.1M294.2 241.1l0 3.4M294.2 236l0-4.7M294.2 170.3l0 2.7M294.2 165.3l0-5.4M364.9 448.3l.7-2.7M364.9 382.6l.7 4.7M364.9 377.5l.7-3.4M364.9 311.8l.7 4.1M364.9 306.8l.7-4.1M364.9 241.1l.7 3.4M364.9 236l.7-4.7M364.9 170.3l.7 2.7M435.7 377.5l1.4-3.4M435.7 311.8l1.4 4.1M435.7 306.8l1.4-4.1M435.7 241.1l1.4 3.4M150.9 347.7l1.4 3.6M150.9 342.6l1.4-4.3M150.9 276l1.4 4.3M150.9 270.9l1.4-3.6M222.6 419.3l.7 2.9M222.6 414.2l.7-5M222.6 347.7l.7 3.6M222.6 342.6l.7-4.3M222.6 276l.7 4.3M222.6 270.9l.7-3.6M222.6 204.4l.7 5M222.6 199.3l.7-2.9M294.2 485.8l0-5.7M294.2 419.3l0 2.9M294.2 414.2l0-5M294.2 347.7l0 3.6M294.2 342.6l0-4.3M294.2 276l0 4.3M294.2 270.9l0-3.6M294.2 204.4l0 5M294.2 199.3l0-2.9M294.2 132.8l0 5.7M365.8 419.3l-.7 2.9M365.8 414.2l-.7-5M365.8 347.7l-.7 3.6M365.8 342.6l-.7-4.3M365.8 276l-.7 4.3M365.8 270.9l-.7-3.6M365.8 204.4l-.7 5M365.8 199.3l-.7-2.9M437.5 347.7l-1.4 3.6M437.5 342.6l-1.4-4.3M437.5 276l-1.4 4.3M437.5 270.9l-1.4-3.6"/>
<path stroke="#e80000" stroke-width="1.2" d="M123.4 344.8l3.7 .2M123.4 273.8l3.7-.2M194.3 415.7l4.2 .7M181.3 344.8l-5.6 .2M194.3 344.8l4.2 .2M181.3 273.8l-5.6-.2M194.3 273.8l4.2-.2M194.3 202.9l4.2-.7M252.2 415.7l-5.2 .7M265.3 415.7l4.7 .7M252.2 344.8l-5.2 .2M265.3 344.8l4.7 .2M252.2 273.8l-5.2-.2M265.3 273.8l4.7-.2M252.2 202.9l-5.2-.7M265.3 202.9l4.7-.7M323.1 415.7l-4.7 .7M336.2 415.7l5.2 .7M323.1 344.8l-4.7 .2M336.2 344.8l5.2 .2M323.1 273.8l-4.7-.2M336.2 273.8l5.2-.2M323.1 202.9l-4.7-.7M336.2 202.9l5.2-.7M394.1 415.7l-4.2 .7M394.1 344.8l-4.2 .2M407.1 344.8l5.6 .2M394.1 273.8l-4.2-.2M407.1 273.8l5.6-.2M394.1 202.9l-4.2-.7M465 344.8l-3.7 .2M465 273.8l-3.7-.2M122.2 309.3l6 0M109.1 309.3l-3.6 0M193.6 380.7l5.5-.5M180.5 380.7l-4.1-.5M193.6 309.3l5.5 0M180.5 309.3l-4.1 0M193.6 237.9l5.5 .5M180.5 237.9l-4.1 .5M265.1 452.2l5-.9M251.9 452.2l-4.6-.9M265.1 380.7l5-.5M251.9 380.7l-4.6-.5M265.1 309.3l5 0M251.9 309.3l-4.6 0M265.1 237.9l5 .5M251.9 237.9l-4.6 .5M265.1 166.4l5 .9M251.9 166.4l-4.6 .9M336.5 452.2l4.6-.9M323.3 452.2l-5-.9M336.5 380.7l4.6-.5M323.3 380.7l-5-.5M336.5 309.3l4.6 0M323.3 309.3l-5 0M336.5 237.9l4.6 .5M323.3 237.9l-5 .5M336.5 166.4l4.6 .9M323.3 166.4l-5 .9M407.9 380.7l4.1-.5M394.8 380.7l-5.5-.5M407.9 309.3l4.1 0M394.8 309.3l-5.5 0M407.9 237.9l4.1 .5M394.8 237.9l-5.5 .5M479.3 309.3l3.6 0M466.2 309.3l-6 0M161.9 345.2l9.5-.1M139.2 345.2l-8.7-.1M161.9 273.4l9.5 .1M139.2 273.4l-8.7 .1M233.7 417l9.3-.3M211 417l-8.9-.3M233.7 345.2l9.3-.1M211 345.2l-8.9-.1M233.7 273.4l9.3 .1M211 273.4l-8.9 .1M233.7 201.6l9.3 .3M211 201.6l-8.9 .3M305.5 417l9.1-.3M282.9 417l-9.1-.3M305.5 345.2l9.1-.1M282.9 345.2l-9.1-.1M305.5 273.4l9.1 .1M282.9 273.4l-9.1 .1M305.5 201.6l9.1 .3M282.9 201.6l-9.1 .3M377.4 417l8.9-.3M354.7 417l-9.3-.3M377.4 345.2l8.9-.1M354.7 345.2l-9.3-.1M377.4 273.4l8.9 .1M354.7 273.4l-9.3 .1M377.4 201.6l8.9 .3M354.7 201.6l-9.3 .3M449.2 345.2l8.7-.1M426.5 345.2l-9.5-.1M449.2 273.4l8.7 .1M426.5 273.4l-9.5 .1"/>
<g fill="url(#gO)"><circle cx="130.2" cy="309.3" r="2.5"/><circle cx="201" cy="380.1" r="2.5"/><circle cx="201" cy="309.3" r="2.5"/><circle cx="201" cy="238.5" r="2.5"/><circle cx="271.8" cy="450.9" r="2.5"/><circle cx="271.8" cy="380.1" r="2.5"/><circle cx="271.8" cy="309.3" r="2.5"/><circle cx="271.8" cy="238.5" r="2.5"/><circle cx="271.8" cy="167.7" r="2.5"/><circle cx="342.6" cy="450.9" r="2.5"/><circle cx="342.6" cy="380.1" r="2.5"/><circle cx="342.6" cy="309.3" r="2.5"/><circle cx="342.6" cy="238.5" r="2.5"/><circle cx="342.6" cy="167.7" r="2.5"/><circle cx="413.4" cy="380.1" r="2.5"/><circle cx="413.4" cy="309.3" r="2.5"/><circle cx="413.4" cy="238.5" r="2.5"/><circle cx="484.2" cy="309.3" r="2.5"/><circle cx="104.2" cy="309.3" r="2.5"/><circle cx="175" cy="380.1" r="2.5"/><circle cx="175" cy="309.3" r="2.5"/><circle cx="175" cy="238.5" r="2.5"/><circle cx="245.8" cy="450.9" r="2.5"/><circle cx="245.8" cy="380.1" r="2.5"/><circle cx="245.8" cy="309.3" r="2.5"/><circle cx="245.8" cy="238.5" r="2.5"/><circle cx="245.8" cy="167.7" r="2.5"/><circle cx="316.6" cy="450.9" r="2.5"/><circle cx="316.6" cy="380.1" r="2.5"/><circle cx="316.6" cy="309.3" r="2.5"/><circle cx="316.6" cy="238.5" r="2.5"/><circle cx="316.6" cy="167.7" r="2.5"/><circle cx="387.4" cy="380.1" r="2.5"/><circle cx="387.4" cy="309.3" r="2.5"/><circle cx="387.4" cy="238.5" r="2.5"/><circle cx="458.2" cy="309.3" r="2.5"/><circle cx="173.7" cy="345.1" r="2.5"/><circle cx="173.7" cy="273.5" r="2.5"/><circle cx="245.2" cy="416.7" r="2.5"/><circle cx="245.2" cy="345.1" r="2.5"/><circle cx="245.2" cy="273.5" r="2.5"/><circle cx="245.2" cy="201.9" r="2.5"/><circle cx="316.8" cy="416.7" r="2.5"/><circle cx="316.8" cy="345.1" r="2.5"/><circle cx="316.8" cy="273.5" r="2.5"/><circle cx="316.8" cy="201.9" r="2.5"/><circle cx="388.4" cy="416.7" r="2.5"/><circle cx="388.4" cy="345.1" r="2.5"/><circle cx="388.4" cy="273.5" r="2.5"/><circle cx="388.4" cy="201.9" r="2.5"/><circle cx="460" cy="345.1" r="2.5"/><circle cx="460" cy="273.5" r="2.5"/><circle cx="128.4" cy="345.1" r="2.5"/><circle cx="128.4" cy="273.5" r="2.5"/><circle cx="200" cy="416.7" r="2.5"/><circle cx="200" cy="345.1" r="2.5"/><circle cx="200" cy="273.5" r="2.5"/><circle cx="200" cy="201.9" r="2.5"/><circle cx="271.6" cy="416.7" r="2.5"/><circle cx="271.6" cy="345.1" r="2.5"/><circle cx="271.6" cy="273.5" r="2.5"/><circle cx="271.6" cy="201.9" r="2.5"/><circle cx="343.2" cy="416.7" r="2.5"/><circle cx="343.2" cy="345.1" r="2.5"/><circle cx="343.2" cy="273.5" r="2.5"/><circle cx="343.2" cy="201.9" r="2.5"/><circle cx="414.7" cy="345.1" r="2.5"/><circle cx="414.7" cy="273.5" r="2.5"/></g>
<path stroke="#c8c8c8" stroke-width="1.2" d="M154.9 345.3l7-.1M145.6 345.3l-6.4-.1M154.9 273.3l7 .1M145.6 273.3l-6.4 .1M226.9 417.3l6.8-.2M217.5 417.3l-6.5-.2M226.9 345.3l6.8-.1M217.5 345.3l-6.5-.1M226.9 273.3l6.8 .1M217.5 273.3l-6.5 .1M226.9 201.3l6.8 .2M217.5 201.3l-6.5 .2M298.9 417.3l6.7-.2M289.5 417.3l-6.7-.2M298.9 345.3l6.7-.1M289.5 345.3l-6.7-.1M298.9 273.3l6.7 .1M289.5 273.3l-6.7 .1M298.9 201.3l6.7 .2M289.5 201.3l-6.7 .2M370.9 417.3l6.5-.2M361.5 417.3l-6.8-.2M370.9 345.3l6.5-.1M361.5 345.3l-6.8-.1M370.9 273.3l6.5 .1M361.5 273.3l-6.8 .1M370.9 201.3l6.5 .2M361.5 201.3l-6.8 .2M442.8 345.3l6.4-.1M433.5 345.3l-7-.1M442.8 273.3l6.4 .1M433.5 273.3l-7 .1M149.8 340.7l-.3-6.6M149.8 350.1l-.3 6.8M149.8 268.5l-.3-6.8M149.8 277.9l-.3 6.6M222 412.9l-.2-6.5M222 422.3l-.2 6.9M222 340.7l-.2-6.6M222 350.1l-.2 6.8M222 268.5l-.2-6.8M222 277.9l-.2 6.6M222 196.3l-.2-6.9M222 205.7l-.2 6.5M294.2 485.1l0-6.3M294.2 412.9l0-6.5M294.2 422.3l0 6.9M294.2 340.7l0-6.6M294.2 350.1l0 6.8M294.2 268.5l0-6.8M294.2 277.9l0 6.6M294.2 196.3l0-6.9M294.2 205.7l0 6.5M294.2 133.5l0 6.3M366.4 412.9l.2-6.5M366.4 422.3l.2 6.9M366.4 340.7l.2-6.6M366.4 350.1l.2 6.8M366.4 268.5l.2-6.8M366.4 277.9l.2 6.6M366.4 196.3l.2-6.9M366.4 205.7l.2 6.5M438.6 340.7l.3-6.6M438.6 350.1l.3 6.8M438.6 268.5l.3-6.8M438.6 277.9l.3 6.6M151.7 345.6l2.7 .4M146.6 345.6l-5.6 .4M151.7 273l2.7-.4M146.6 273l-5.6-.4M224.3 418.1l3.4 1.1M219.1 418.1l-4.9 1.1M224.3 345.6l3.4 .4M219.1 345.6l-4.9 .4M224.3 273l3.4-.4M219.1 273l-4.9-.4M224.3 200.5l3.4-1.1M219.1 200.5l-4.9-1.1M296.8 418.1l4.2 1.1M291.6 418.1l-4.2 1.1M296.8 345.6l4.2 .4M291.6 345.6l-4.2 .4M296.8 273l4.2-.4M291.6 273l-4.2-.4M296.8 200.5l4.2-1.1M291.6 200.5l-4.2-1.1M369.3 418.1l4.9 1.1M364.1 418.1l-3.4 1.1M369.3 345.6l4.9 .4M364.1 345.6l-3.4 .4M369.3 273l4.9-.4M364.1 273l-3.4-.4M369.3 200.5l4.9-1.1M364.1 200.5l-3.4-1.1M441.8 345.6l5.6 .4M436.7 345.6l-2.7 .4M441.8 273l5.6-.4M436.7 273l-2.7-.4M113.1 346l5.9-.4M113.1 272.6l5.9 .4M186.6 419.5l5.2-1.1M181.4 346l-3-.4M186.6 346l5.2-.4M181.4 272.6l-3 .4M186.6 272.6l5.2 .4M186.6 199.1l5.2 1.1M254.8 419.5l-3.7-1.1M260.1 419.5l4.4-1.1M254.8 346l-3.7-.4M260.1 346l4.4-.4M254.8 272.6l-3.7 .4M260.1 272.6l4.4 .4M254.8 199.1l-3.7 1.1M260.1 199.1l4.4 1.1M328.3 419.5l-4.4-1.1M333.6 419.5l3.7-1.1M328.3 346l-4.4-.4M333.6 346l3.7-.4M328.3 272.6l-4.4 .4M333.6 272.6l3.7 .4M328.3 199.1l-4.4 1.1M333.6 199.1l3.7 1.1M401.8 419.5l-5.2-1.1M401.8 346l-5.2-.4M407 346l3-.4M401.8 272.6l-5.2 .4M407 272.6l3 .4M401.8 199.1l-5.2 1.1M475.3 346l-5.9-.4M475.3 272.6l-5.9 .4"/>
<path stroke="#e80000" stroke-width="1.2" d="M151.3 374.2l-1.9-4.6M151.3 315.9l-1.9 5.5M151.3 302.7l-1.9-5.5M151.3 244.4l-1.9 4.6M222.8 445.6l-.9-3.6M222.8 387.3l-.9 6.5M222.8 374.2l-.9-4.6M222.8 315.9l-.9 5.5M222.8 302.7l-.9-5.5M222.8 244.4l-.9 4.6M222.8 231.3l-.9-6.5M222.8 173l-.9 3.6M294.2 458.7l0 7.4M294.2 445.6l0-3.6M294.2 387.3l0 6.5M294.2 374.2l0-4.6M294.2 315.9l0 5.5M294.2 302.7l0-5.5M294.2 244.4l0 4.6M294.2 231.3l0-6.5M294.2 173l0 3.6M294.2 159.9l0-7.4M365.6 445.6l.9-3.6M365.6 387.3l.9 6.5M365.6 374.2l.9-4.6M365.6 315.9l.9 5.5M365.6 302.7l.9-5.5M365.6 244.4l.9 4.6M365.6 231.3l.9-6.5M365.6 173l.9 3.6M437.1 374.2l1.9-4.6M437.1 315.9l1.9 5.5M437.1 302.7l1.9-5.5M437.1 244.4l1.9 4.6M119 345.7l7.7-.5M119 272.9l7.7 .5M191.8 418.4l6.7-1.4M178.4 345.7l-3.9-.5M191.8 345.7l6.7-.5M178.4 272.9l-3.9 .5M191.8 272.9l6.7 .5M191.8 200.2l6.7 1.4M251.1 418.4l-4.8-1.4M264.5 418.4l5.8-1.4M251.1 345.7l-4.8-.5M264.5 345.7l5.8-.5M251.1 272.9l-4.8 .5M264.5 272.9l5.8 .5M251.1 200.2l-4.8 1.4M264.5 200.2l5.8 1.4M323.9 418.4l-5.8-1.4M337.3 418.4l4.8-1.4M323.9 345.7l-5.8-.5M337.3 345.7l4.8-.5M323.9 272.9l-5.8 .5M337.3 272.9l4.8 .5M323.9 200.2l-5.8 1.4M337.3 200.2l4.8 1.4M396.6 418.4l-6.7-1.4M396.6 345.7l-6.7-.5M410 345.7l3.9-.5M396.6 272.9l-6.7 .5M410 272.9l3.9 .5M396.6 200.2l-6.7 1.4M469.4 345.7l-7.7-.5M469.4 272.9l-7.7 .5M149.5 334l-.4-9.2M149.5 356.9l-.4 9.4M149.5 261.7l-.4-9.4M149.5 284.6l-.4 9.2M221.9 406.4l-.2-8.9M221.9 429.2l-.2 9.6M221.9 334l-.2-9.2M221.9 356.9l-.2 9.4M221.9 261.7l-.2-9.4M221.9 284.6l-.2 9.2M221.9 189.4l-.2-9.6M221.9 212.2l-.2 8.9M294.2 478.7l0-8.7M294.2 406.4l0-8.9M294.2 429.2l0 9.6M294.2 334l0-9.2M294.2 356.9l0 9.4M294.2 261.7l0-9.4M294.2 284.6l0 9.2M294.2 189.4l0-9.6M294.2 212.2l0 8.9M294.2 139.9l0 8.7M366.5 406.4l.2-8.9M366.5 429.2l.2 9.6M366.5 334l.2-9.2M366.5 356.9l.2 9.4M366.5 261.7l.2-9.4M366.5 284.6l.2 9.2M366.5 189.4l.2-9.6M366.5 212.2l.2 8.9M438.9 334l.4-9.2M438.9 356.9l.4 9.4M438.9 261.7l.4-9.4M438.9 284.6l.4 9.2M112.4 316l-1.2 5.1M112.4 302.6l-1.2-5.1M185.1 388.7l-.7 5.6M185.1 375.3l-.7-4.6M185.1 316l-.7 5.1M185.1 302.6l-.7-5.1M185.1 243.3l-.7 4.6M185.1 229.9l-.7-5.6M257.8 448.1l-.2-4.1M257.8 388.7l-.2 5.6M257.8 375.3l-.2-4.6M257.8 316l-.2 5.1M257.8 302.6l-.2-5.1M257.8 243.3l-.2 4.6M257.8 229.9l-.2-5.6M257.8 170.5l-.2 4.1M330.6 448.1l.2-4.1M330.6 388.7l.2 5.6M330.6 375.3l.2-4.6M330.6 316l.2 5.1M330.6 302.6l.2-5.1M330.6 243.3l.2 4.6M330.6 229.9l.2-5.6M330.6 170.5l.2 4.1M403.3 388.7l.7 5.6M403.3 375.3l.7-4.6M403.3 316l.7 5.1M403.3 302.6l.7-5.1M403.3 243.3l.7 4.6M403.3 229.9l.7-5.6M476 316l1.2 5.1M476 302.6l1.2-5.1M147.7 375.8l1-5.4M147.7 316l1 4.9M147.7 302.6l1-4.9M147.7 242.8l1 5.4M220.9 449.1l.5-5.9M220.9 389.3l.5 4.4M220.9 375.8l.5-5.4M220.9 316l.5 4.9M220.9 302.6l.5-4.9M220.9 242.8l.5 5.4M220.9 229.3l.5-4.4M220.9 169.5l.5 5.9M294.2 462.6l0 3.9M294.2 449.1l0-5.9M294.2 389.3l0 4.4M294.2 375.8l0-5.4M294.2 316l0 4.9M294.2 302.6l0-4.9M294.2 242.8l0 5.4M294.2 229.3l0-4.4M294.2 169.5l0 5.9M294.2 156l0-3.9M367.5 449.1l-.5-5.9M367.5 389.3l-.5 4.4M367.5 375.8l-.5-5.4M367.5 316l-.5 4.9M367.5 302.6l-.5-4.9M367.5 242.8l-.5 5.4M367.5 229.3l-.5-4.4M367.5 169.5l-.5 5.9M440.7 375.8l-1-5.4M440.7 316l-1 4.9M440.7 302.6l-1-4.9M440.7 242.8l-1 5.4"/>
<path stroke="#c8c8c8" stroke-width=".8" d="M298.9 489.2l3.6-.2M289.5 489.2l-3.6-.2M298.9 129.4l3.6 .2M289.5 129.4l-3.6 .2M294.2 494.5l0 3.9M294.2 124.1l0-3.9M296.8 490.6l2.3 1M291.6 490.6l-2.3 1M296.8 128l2.3-1M291.6 128l-2.3-1"/>
<path stroke="#dc0000" stroke-width=".8" d="M294.2 498.3l0 10M294.2 120.3l0-10M106.6 345.8l-3-.5M106.6 272.8l-3 .5M179.7 418.9l-4-1.5M179.7 199.7l-4 1.5M408.7 418.9l4-1.5M408.7 199.7l4 1.5M481.8 345.8l3-.5M481.8 272.8l3 .5M257.9 459.3l-.3 6.7M257.9 159.3l-.3-6.7M330.5 459.3l.3 6.7M330.5 159.3l.3-6.7"/>
<path stroke="#0dd" stroke-width=".8" d="M258 457.4l-.1 1.9M258 161.2l-.1-1.9M330.4 457.4l.1 1.9M330.4 161.2l.1-1.9"/>
<path stroke="#0dd" stroke-width="1.2" d="M113.2 312.6l-.8 3.4M113.2 306l-.8-3.4M185.6 385l-.5 3.7M185.6 378.4l-.5-3.1M185.6 312.6l-.5 3.4M185.6 306l-.5-3.4M185.6 240.2l-.5 3.1M185.6 233.6l-.5-3.7M258 450.8l-.2-2.7M258 385l-.2 3.7M258 378.4l-.2-3.1M258 312.6l-.2 3.4M258 306l-.2-3.4M258 240.2l-.2 3.1M258 233.6l-.2-3.7M258 167.8l-.2 2.7M330.4 450.8l.2-2.7M330.4 385l.2 3.7M330.4 378.4l.2-3.1M330.4 312.6l.2 3.4M330.4 306l.2-3.4M330.4 240.2l.2 3.1M330.4 233.6l.2-3.7M330.4 167.8l.2 2.7M402.8 385l.5 3.7M402.8 378.4l.5-3.1M402.8 312.6l.5 3.4M402.8 306l.5-3.4M402.8 240.2l.5 3.1M402.8 233.6l.5-3.7M475.2 312.6l.8 3.4M475.2 306l.8-3.4"/>
<g fill="url(#gO)"><circle cx="149" cy="322.7" r="2.5"/><circle cx="149" cy="250.1" r="2.5"/><circle cx="221.6" cy="395.2" r="2.5"/><circle cx="221.6" cy="322.7" r="2.5"/><circle cx="221.6" cy="250.1" r="2.5"/><circle cx="221.6" cy="177.5" r="2.5"/><circle cx="294.2" cy="467.8" r="2.5"/><circle cx="294.2" cy="395.2" r="2.5"/><circle cx="294.2" cy="322.7" r="2.5"/><circle cx="294.2" cy="250.1" r="2.5"/><circle cx="294.2" cy="177.5" r="2.5"/><circle cx="366.8" cy="395.2" r="2.5"/><circle cx="366.8" cy="322.7" r="2.5"/><circle cx="366.8" cy="250.1" r="2.5"/><circle cx="366.8" cy="177.5" r="2.5"/><circle cx="439.4" cy="322.7" r="2.5"/><circle cx="439.4" cy="250.1" r="2.5"/><circle cx="149" cy="368.5" r="2.5"/><circle cx="149" cy="295.9" r="2.5"/><circle cx="221.6" cy="441.1" r="2.5"/><circle cx="221.6" cy="368.5" r="2.5"/><circle cx="221.6" cy="295.9" r="2.5"/><circle cx="221.6" cy="223.4" r="2.5"/><circle cx="294.2" cy="441.1" r="2.5"/><circle cx="294.2" cy="368.5" r="2.5"/><circle cx="294.2" cy="295.9" r="2.5"/><circle cx="294.2" cy="223.4" r="2.5"/><circle cx="294.2" cy="150.8" r="2.5"/><circle cx="366.8" cy="441.1" r="2.5"/><circle cx="366.8" cy="368.5" r="2.5"/><circle cx="366.8" cy="295.9" r="2.5"/><circle cx="366.8" cy="223.4" r="2.5"/><circle cx="439.4" cy="368.5" r="2.5"/><circle cx="439.4" cy="295.9" r="2.5"/></g>
<g fill="url(#gS)"><circle cx="114" cy="309.3" r="4.6"/><circle cx="186.1" cy="381.4" r="4.6"/><circle cx="186.1" cy="309.3" r="4.6"/><circle cx="186.1" cy="237.2" r="4.6"/><circle cx="258.2" cy="453.5" r="4.6"/><circle cx="258.2" cy="381.4" r="4.6"/><circle cx="258.2" cy="309.3" r="4.6"/><circle cx="258.2" cy="237.2" r="4.6"/><circle cx="258.2" cy="165.1" r="4.6"/><circle cx="330.2" cy="453.5" r="4.6"/><circle cx="330.2" cy="381.4" r="4.6"/><circle cx="330.2" cy="309.3" r="4.6"/><circle cx="330.2" cy="237.2" r="4.6"/><circle cx="330.2" cy="165.1" r="4.6"/><circle cx="402.3" cy="381.4" r="4.6"/><circle cx="402.3" cy="309.3" r="4.6"/><circle cx="402.3" cy="237.2" r="4.6"/><circle cx="474.4" cy="309.3" r="4.6"/></g>
<g fill="url(#gZ)"><circle cx="150" cy="345.3" r="5"/><circle cx="150" cy="273.3" r="5"/><circle cx="222.1" cy="417.4" r="5"/><circle cx="222.1" cy="345.3" r="5"/><circle cx="222.1" cy="273.3" r="5"/><circle cx="222.1" cy="201.2" r="5"/><circle cx="294.2" cy="489.5" r="5"/><circle cx="294.2" cy="417.4" r="5"/><circle cx="294.2" cy="345.3" r="5"/><circle cx="294.2" cy="273.3" r="5"/><circle cx="294.2" cy="201.2" r="5"/><circle cx="294.2" cy="129.1" r="5"/><circle cx="366.3" cy="417.4" r="5"/><circle cx="366.3" cy="345.3" r="5"/><circle cx="366.3" cy="273.3" r="5"/><circle cx="366.3" cy="201.2" r="5"/><circle cx="438.4" cy="345.3" r="5"/><circle cx="438.4" cy="273.3" r="5"/></g>
<path stroke="#dc0000" stroke-width=".8" d="M147.3 387.7l1.1 4.9M147.3 230.9l1.1-4.9M220.8 461.1l.6 4.4M220.8 157.5l.6-4.4M367.6 461.1l-.6 4.4M367.6 157.5l-.6-4.4M441.1 387.7l-1.1 4.9M441.1 230.9l-1.1-4.9M299.1 491.7l5.7 2.5M289.3 491.7l-5.7 2.5M299.1 126.9l5.7-2.5M289.3 126.9l-5.7-2.5M109.8 354.7l.5 9.5M109.8 263.9l.5-9.5M183.6 428.5l.3 9.2M183.6 190.1l.3-9.2M404.8 428.5l-.3 9.2M404.8 190.1l-.3-9.2M478.6 354.7l-.5 9.5M478.6 263.9l-.5-9.5M100.3 346.4l-10.3 .1M100.3 272.2l-10.3-.1M174.4 420.5l-10.1 .3M174.4 198.1l-10.1-.3M414 420.5l10.1 .3M414 198.1l10.1-.3M488.1 346.4l10.3 .1M488.1 272.2l10.3-.1"/>
<path stroke="#c8c8c8" stroke-width=".8" d="M107.9 346l-1.3-.2M107.9 272.6l-1.3 .2M181.4 419.5l-1.7-.6M181.4 199.1l-1.7 .6M407 419.5l1.7-.6M407 199.1l1.7 .6M480.5 346l1.3-.2M480.5 272.6l1.3 .2M109.6 351l.2 3.7M109.6 267.6l.2-3.7M183.5 424.9l.1 3.6M183.5 193.7l.1-3.6M404.9 424.9l-.1 3.6M404.9 193.7l-.1-3.6M478.8 351l-.2 3.7M478.8 267.6l-.2-3.7M104.2 346.3l-4 0M104.2 272.3l-4 0M178.3 420.4l-3.9 .1M178.3 198.2l-3.9-.1M410.1 420.4l3.9 .1M410.1 198.2l3.9-.1M484.2 346.3l4 0M484.2 272.3l4 0"/>
<path stroke="#0dd" stroke-width="1.2" d="M147 379.6l.7-3.7M147 312.7l.7 3.4M147 305.9l.7-3.4M147 239l.7 3.7M220.6 453.2l.3-4.1M220.6 386.3l.3 3M220.6 379.6l.3-3.7M220.6 312.7l.3 3.4M220.6 305.9l.3-3.4M220.6 239l.3 3.7M220.6 232.3l.3-3M220.6 165.4l.3 4.1M294.2 459.9l0 2.7M294.2 453.2l0-4.1M294.2 386.3l0 3M294.2 379.6l0-3.7M294.2 312.7l0 3.4M294.2 305.9l0-3.4M294.2 239l0 3.7M294.2 232.3l0-3M294.2 165.4l0 4.1M294.2 158.7l0-2.7M367.8 453.2l-.3-4.1M367.8 386.3l-.3 3M367.8 379.6l-.3-3.7M367.8 312.7l-.3 3.4M367.8 305.9l-.3-3.4M367.8 239l-.3 3.7M367.8 232.3l-.3-3M367.8 165.4l-.3 4.1M441.4 379.6l-.7-3.7M441.4 312.7l-.7 3.4M441.4 305.9l-.7-3.4M441.4 239l-.7 3.7"/>
<path stroke="#0dd" stroke-width=".8" d="M147 386.3l.3 1.4M147 232.3l.3-1.4M220.6 459.9l.2 1.3M220.6 158.7l.2-1.3M367.8 459.9l-.2 1.3M367.8 158.7l-.2-1.3M441.4 386.3l-.3 1.4M441.4 232.3l-.3-1.4"/>
<path stroke="#e80000" stroke-width="1.2" d="M110 334.5l.5-9.4M110 284.1l.5 9.4M183.7 408.2l.3-9.6M183.7 334.5l.3-9.4M183.7 357.8l.3 9.2M183.7 260.8l.3-9.2M183.7 284.1l.3 9.4M183.7 210.4l.3 9.6M257.4 408.2l.1-9.6M257.4 431.5l.1 9M257.4 334.5l.1-9.4M257.4 357.8l.1 9.2M257.4 260.8l.1-9.2M257.4 284.1l.1 9.4M257.4 187.1l.1-9M257.4 210.4l.1 9.6M331 408.2l-.1-9.6M331 431.5l-.1 9M331 334.5l-.1-9.4M331 357.8l-.1 9.2M331 260.8l-.1-9.2M331 284.1l-.1 9.4M331 187.1l-.1-9M331 210.4l-.1 9.6M404.7 408.2l-.3-9.6M404.7 334.5l-.3-9.4M404.7 357.8l-.3 9.2M404.7 260.8l-.3-9.2M404.7 284.1l-.3 9.4M404.7 210.4l-.3 9.6M478.4 334.5l-.5-9.4M478.4 284.1l-.5 9.4M154.4 345.9l3.7 .5M140.9 345.9l-7.7 .5M154.4 272.7l3.7-.5M140.9 272.7l-7.7-.5M227.7 419.2l4.7 1.5M214.2 419.2l-6.7 1.5M227.7 345.9l4.7 .5M214.2 345.9l-6.7 .5M227.7 272.7l4.7-.5M214.2 272.7l-6.7-.5M227.7 199.4l4.7-1.5M214.2 199.4l-6.7-1.5M300.9 419.2l5.7 1.5M287.5 419.2l-5.7 1.5M300.9 345.9l5.7 .5M287.5 345.9l-5.7 .5M300.9 272.7l5.7-.5M287.5 272.7l-5.7-.5M300.9 199.4l5.7-1.5M287.5 199.4l-5.7-1.5M374.2 419.2l6.7 1.5M360.7 419.2l-4.7 1.5M374.2 345.9l6.7 .5M360.7 345.9l-4.7 .5M374.2 272.7l6.7-.5M360.7 272.7l-4.7-.5M374.2 199.4l6.7-1.5M360.7 199.4l-4.7-1.5M447.5 345.9l7.7 .5M434 345.9l-3.7 .5M447.5 272.7l7.7-.5M434 272.7l-3.7-.5M107.6 316.2l2.5 5.4M107.6 302.4l2.5-5.4M182.2 390.8l1.5 4.4M182.2 377.1l1.5-6.4M182.2 316.2l1.5 5.4M182.2 302.4l1.5-5.4M182.2 241.5l1.5 6.4M182.2 227.8l1.5-4.4M256.9 451.7l.5-7.4M256.9 390.8l.5 4.4M256.9 377.1l.5-6.4M256.9 316.2l.5 5.4M256.9 302.4l.5-5.4M256.9 241.5l.5 6.4M256.9 227.8l.5-4.4M256.9 166.9l.5 7.4M331.5 451.7l-.5-7.4M331.5 390.8l-.5 4.4M331.5 377.1l-.5-6.4M331.5 316.2l-.5 5.4M331.5 302.4l-.5-5.4M331.5 241.5l-.5 6.4M331.5 227.8l-.5-4.4M331.5 166.9l-.5 7.4M406.2 390.8l-1.5 4.4M406.2 377.1l-1.5-6.4M406.2 316.2l-1.5 5.4M406.2 302.4l-1.5-5.4M406.2 241.5l-1.5 6.4M406.2 227.8l-1.5-4.4M480.8 316.2l-2.5 5.4M480.8 302.4l-2.5-5.4M120.4 346.4l9 .1M120.4 272.2l9-.1M194.6 420.6l9.2 .3M171.2 346.4l-9.8 .1M194.6 346.4l9.2 .1M171.2 272.2l-9.8-.1M194.6 272.2l9.2-.1M194.6 198l9.2-.3M245.4 420.6l-9.6 .3M268.8 420.6l9.4 .3M245.4 346.4l-9.6 .1M268.8 346.4l9.4 .1M245.4 272.2l-9.6-.1M268.8 272.2l9.4-.1M245.4 198l-9.6-.3M268.8 198l9.4-.3M319.6 420.6l-9.4 .3M343 420.6l9.6 .3M319.6 346.4l-9.4 .1M343 346.4l9.6 .1M319.6 272.2l-9.4-.1M343 272.2l9.6-.1M319.6 198l-9.4-.3M343 198l9.6-.3M393.8 420.6l-9.2 .3M393.8 346.4l-9.2 .1M417.2 346.4l9.8 .1M393.8 272.2l-9.2-.1M417.2 272.2l9.8-.1M393.8 198l-9.2-.3M468 346.4l-9 .1M468 272.2l-9-.1"/>
<path stroke="#c8c8c8" stroke-width="1.2" d="M109.6 341.4l.4-6.9M109.6 277.2l.4 6.9M183.5 415.2l.2-7.1M183.5 341.4l.2-6.9M183.5 351l.2 6.7M183.5 267.6l.2-6.7M183.5 277.2l.2 6.9M183.5 203.4l.2 7.1M257.3 415.2l.1-7.1M257.3 424.9l.1 6.6M257.3 341.4l.1-6.9M257.3 351l.1 6.7M257.3 267.6l.1-6.7M257.3 277.2l.1 6.9M257.3 193.7l.1-6.6M257.3 203.4l.1 7.1M331.1 415.2l-.1-7.1M331.1 424.9l-.1 6.6M331.1 341.4l-.1-6.9M331.1 351l-.1 6.7M331.1 267.6l-.1-6.7M331.1 277.2l-.1 6.9M331.1 193.7l-.1-6.6M331.1 203.4l-.1 7.1M404.9 415.2l-.2-7.1M404.9 341.4l-.2-6.9M404.9 351l-.2 6.7M404.9 267.6l-.2-6.7M404.9 277.2l-.2 6.9M404.9 203.4l-.2 7.1M478.8 341.4l-.4-6.9M478.8 277.2l-.4 6.9M113.9 346.3l6.5 .1M113.9 272.3l6.5-.1M187.9 420.4l6.7 .2M178.3 346.3l-7.1 .1M187.9 346.3l6.7 .1M178.3 272.3l-7.1-.1M187.9 272.3l6.7-.1M187.9 198.2l6.7-.2M252.3 420.4l-7 .2M262 420.4l6.8 .2M252.3 346.3l-7 .1M262 346.3l6.8 .1M252.3 272.3l-7-.1M262 272.3l6.8-.1M252.3 198.2l-7-.2M262 198.2l6.8-.2M326.4 420.4l-6.8 .2M336.1 420.4l7 .2M326.4 346.3l-6.8 .1M336.1 346.3l7 .1M326.4 272.3l-6.8-.1M336.1 272.3l7-.1M326.4 198.2l-6.8-.2M336.1 198.2l7-.2M400.5 420.4l-6.7 .2M400.5 346.3l-6.7 .1M410.1 346.3l7.1 .1M400.5 272.3l-6.7-.1M410.1 272.3l7.1-.1M400.5 198.2l-6.7-.2M474.5 346.3l-6.5 .1M474.5 272.3l-6.5-.1"/>
<g fill="url(#gO)"><circle cx="110.7" cy="322.8" r="2.6"/><circle cx="184.1" cy="396.2" r="2.6"/><circle cx="184.1" cy="322.8" r="2.6"/><circle cx="184.1" cy="249.4" r="2.6"/><circle cx="257.5" cy="396.2" r="2.6"/><circle cx="257.5" cy="322.8" r="2.6"/><circle cx="257.5" cy="249.4" r="2.6"/><circle cx="257.5" cy="176" r="2.6"/><circle cx="330.9" cy="396.2" r="2.6"/><circle cx="330.9" cy="322.8" r="2.6"/><circle cx="330.9" cy="249.4" r="2.6"/><circle cx="330.9" cy="176" r="2.6"/><circle cx="404.3" cy="396.2" r="2.6"/><circle cx="404.3" cy="322.8" r="2.6"/><circle cx="404.3" cy="249.4" r="2.6"/><circle cx="477.7" cy="322.8" r="2.6"/><circle cx="110.7" cy="295.8" r="2.6"/><circle cx="184.1" cy="369.2" r="2.6"/><circle cx="184.1" cy="295.8" r="2.6"/><circle cx="184.1" cy="222.4" r="2.6"/><circle cx="257.5" cy="442.6" r="2.6"/><circle cx="257.5" cy="369.2" r="2.6"/><circle cx="257.5" cy="295.8" r="2.6"/><circle cx="257.5" cy="222.4" r="2.6"/><circle cx="330.9" cy="442.6" r="2.6"/><circle cx="330.9" cy="369.2" r="2.6"/><circle cx="330.9" cy="295.8" r="2.6"/><circle cx="330.9" cy="222.4" r="2.6"/><circle cx="404.3" cy="369.2" r="2.6"/><circle cx="404.3" cy="295.8" r="2.6"/><circle cx="404.3" cy="222.4" r="2.6"/><circle cx="477.7" cy="295.8" r="2.6"/></g>
<g fill="url(#gS)"><circle cx="146.3" cy="383.2" r="4.7"/><circle cx="146.3" cy="309.3" r="4.7"/><circle cx="146.3" cy="235.4" r="4.7"/><circle cx="220.3" cy="457.2" r="4.7"/><circle cx="220.3" cy="383.2" r="4.7"/><circle cx="220.3" cy="309.3" r="4.7"/><circle cx="220.3" cy="235.4" r="4.7"/><circle cx="220.3" cy="161.4" r="4.7"/><circle cx="294.2" cy="457.2" r="4.7"/><circle cx="294.2" cy="383.2" r="4.7"/><circle cx="294.2" cy="309.3" r="4.7"/><circle cx="294.2" cy="235.4" r="4.7"/><circle cx="294.2" cy="161.4" r="4.7"/><circle cx="368.1" cy="457.2" r="4.7"/><circle cx="368.1" cy="383.2" r="4.7"/><circle cx="368.1" cy="309.3" r="4.7"/><circle cx="368.1" cy="235.4" r="4.7"/><circle cx="368.1" cy="161.4" r="4.7"/><circle cx="442.1" cy="383.2" r="4.7"/><circle cx="442.1" cy="309.3" r="4.7"/><circle cx="442.1" cy="235.4" r="4.7"/></g>
<g fill="url(#gZ)"><circle cx="109.3" cy="346.3" r="5.2"/><circle cx="109.3" cy="272.3" r="5.2"/><circle cx="183.3" cy="420.2" r="5.2"/><circle cx="183.3" cy="346.3" r="5.2"/><circle cx="183.3" cy="272.3" r="5.2"/><circle cx="183.3" cy="198.4" r="5.2"/><circle cx="257.2" cy="420.2" r="5.2"/><circle cx="257.2" cy="346.3" r="5.2"/><circle cx="257.2" cy="272.3" r="5.2"/><circle cx="257.2" cy="198.4" r="5.2"/><circle cx="331.2" cy="420.2" r="5.2"/><circle cx="331.2" cy="346.3" r="5.2"/><circle cx="331.2" cy="272.3" r="5.2"/><circle cx="331.2" cy="198.4" r="5.2"/><circle cx="405.1" cy="420.2" r="5.2"/><circle cx="405.1" cy="346.3" r="5.2"/><circle cx="405.1" cy="272.3" r="5.2"/><circle cx="405.1" cy="198.4" r="5.2"/><circle cx="479.1" cy="346.3" r="5.2"/><circle cx="479.1" cy="272.3" r="5.2"/></g>
<path stroke="#0dd" stroke-width=".8" d="M142.2 383.6l-2 .2M142.2 235l-2-.2M216.5 457.9l-1.8 .3M223.3 457.9l1.5 .3M216.5 160.7l-1.8-.3M223.3 160.7l1.5-.3M365.1 457.9l-1.5 .3M371.9 457.9l1.8 .3M365.1 160.7l-1.5-.3M371.9 160.7l1.8-.3M446.2 383.6l2 .2M446.2 235l2-.2"/>
<path stroke="#dc0000" stroke-width=".8" d="M256.7 464.3l.5 3.5M256.7 154.3l.5-3.5M331.7 464.3l-.5 3.5M331.7 154.3l-.5-3.5M140.3 383.8l-6.9 .6M140.3 234.8l-6.9-.6M214.7 458.2l-6.3 1.2M224.8 458.2l5.2 1.2M214.7 160.4l-6.3-1.2M224.8 160.4l5.2-1.2M363.6 458.2l-5.2 1.2M373.7 458.2l6.3 1.2M363.6 160.4l-5.2-1.2M373.7 160.4l6.3-1.2M448.1 383.8l6.9 .6M448.1 234.8l6.9-.6M107.1 351.8l-2.6 6.4M107.1 341.7l-2.6-5.3M107.1 276.9l-2.6 5.3M107.1 266.8l-2.6-6.4M181.9 426.6l-1.6 7.4M181.9 192l-1.6-7.4M406.5 426.6l1.6 7.4M406.5 192l1.6-7.4M481.3 351.8l2.6 6.4M481.3 341.7l2.6-5.3M481.3 276.9l2.6 5.3M481.3 266.8l2.6-6.4M96.2 309.3l-9.3 0M247.6 460.7l-9.7-.5M247.6 157.9l-9.7 .5M340.8 460.7l9.7-.5M340.8 157.9l9.7 .5M492.2 309.3l9.3 0"/>
<path stroke="#0dd" stroke-width="1.2" d="M149 383.6l2.8 .4M142.2 309.3l-4.2 0M149 309.3l2.8 0M149 235l2.8-.4M216.5 383.6l-3.8 .4M223.3 383.6l3.1 .4M216.5 309.3l-3.8 0M223.3 309.3l3.1 0M216.5 235l-3.8-.4M223.3 235l3.1-.4M290.8 457.9l-3.5 .7M297.6 457.9l3.5 .7M290.8 383.6l-3.5 .4M297.6 383.6l3.5 .4M290.8 309.3l-3.5 0M297.6 309.3l3.5 0M290.8 235l-3.5-.4M297.6 235l3.5-.4M290.8 160.7l-3.5-.7M297.6 160.7l3.5-.7M365.1 383.6l-3.1 .4M371.9 383.6l3.8 .4M365.1 309.3l-3.1 0M371.9 309.3l3.8 0M365.1 235l-3.1-.4M371.9 235l3.8-.4M439.4 383.6l-2.8 .4M439.4 309.3l-2.8 0M446.2 309.3l4.2 0M439.4 235l-2.8-.4M146.5 347.1l4.2-.2M139.7 347.1l-2.8-.2M146.5 271.5l4.2 .2M139.7 271.5l-2.8 .2M222.1 422.6l3.8-.5M215.2 422.6l-3.1-.5M222.1 347.1l3.8-.2M215.2 347.1l-3.1-.2M222.1 271.5l3.8 .2M215.2 271.5l-3.1 .2M222.1 196l3.8 .5M215.2 196l-3.1 .5M297.6 422.6l3.5-.5M290.8 422.6l-3.5-.5M297.6 347.1l3.5-.2M290.8 347.1l-3.5-.2M297.6 271.5l3.5 .2M290.8 271.5l-3.5 .2M297.6 196l3.5 .5M290.8 196l-3.5 .5M373.2 422.6l3.1-.5M366.3 422.6l-3.8-.5M373.2 347.1l3.1-.2M366.3 347.1l-3.8-.2M373.2 271.5l3.1 .2M366.3 271.5l-3.8 .2M373.2 196l3.1 .5M366.3 196l-3.8 .5M448.7 347.1l2.8-.2M441.9 347.1l-4.2-.2M448.7 271.5l2.8 .2M441.9 271.5l-4.2 .2"/>
<path stroke="#c8c8c8" stroke-width=".8" d="M108.1 349.2l-1.1 2.6M108.1 343.9l-1.1-2.2M108.1 274.7l-1.1 2.2M108.1 269.4l-1.1-2.6M182.6 423.6l-.6 3M182.6 195l-.6-3M405.8 423.6l.6 3M405.8 195l.6-3M480.3 349.2l1.1 2.6M480.3 343.9l1.1-2.2M480.3 274.7l1.1 2.2M480.3 269.4l1.1-2.6M256.5 462.8l.2 1.5M256.5 155.8l.2-1.5M331.9 462.8l-.2 1.5M331.9 155.8l-.2-1.5"/>
<path stroke="#c8c8c8" stroke-width="1.2" d="M182.6 418.3l-1.2-3.1M182.6 349.2l-1.2 4.6M182.6 343.9l-1.2-3.9M182.6 274.7l-1.2 3.9M182.6 269.4l-1.2-4.6M182.6 200.3l-1.2 3.1M257 423.6l-.4 5.4M257 418.3l-.4-3.1M257 349.2l-.4 4.6M257 343.9l-.4-3.9M257 274.7l-.4 3.9M257 269.4l-.4-4.6M257 200.3l-.4 3.1M257 195l-.4-5.4M331.4 423.6l.4 5.4M331.4 418.3l.4-3.1M331.4 349.2l.4 4.6M331.4 343.9l.4-3.9M331.4 274.7l.4 3.9M331.4 269.4l.4-4.6M331.4 200.3l.4 3.1M331.4 195l.4-5.4M405.8 418.3l1.2-3.1M405.8 349.2l1.2 4.6M405.8 343.9l1.2-3.9M405.8 274.7l1.2 3.9M405.8 269.4l1.2-4.6M405.8 200.3l1.2 3.1M105.7 312l1.9 4.2M105.7 306.6l1.9-4.2M181.1 387.4l1.2 3.4M181.1 382l1.2-5M181.1 312l1.2 4.2M181.1 306.6l1.2-4.2M181.1 236.6l1.2 5M181.1 231.2l1.2-3.4M256.5 457.4l.4-5.7M256.5 387.4l.4 3.4M256.5 382l.4-5M256.5 312l.4 4.2M256.5 306.6l.4-4.2M256.5 236.6l.4 5M256.5 231.2l.4-3.4M256.5 161.2l.4 5.7M331.9 457.4l-.4-5.7M331.9 387.4l-.4 3.4M331.9 382l-.4-5M331.9 312l-.4 4.2M331.9 306.6l-.4-4.2M331.9 236.6l-.4 5M331.9 231.2l-.4-3.4M331.9 161.2l-.4 5.7M407.3 387.4l-1.2 3.4M407.3 382l-1.2-5M407.3 312l-1.2 4.2M407.3 306.6l-1.2-4.2M407.3 236.6l-1.2 5M407.3 231.2l-1.2-3.4M482.7 312l-1.9 4.2M482.7 306.6l-1.9-4.2"/>
<path stroke="#e80000" stroke-width="1.2" d="M151.8 383.9l4.1 .5M138.1 309.3l-6.2 0M151.8 309.3l4.1 0M151.8 234.7l4.1-.5M212.7 383.9l-5.7 .5M226.4 383.9l4.7 .5M212.7 309.3l-5.7 0M226.4 309.3l4.7 0M212.7 234.7l-5.7-.5M226.4 234.7l4.7-.5M287.3 458.6l-5.2 1.1M301.1 458.6l5.2 1.1M287.3 383.9l-5.2 .5M301.1 383.9l5.2 .5M287.3 309.3l-5.2 0M301.1 309.3l5.2 0M287.3 234.7l-5.2-.5M301.1 234.7l5.2-.5M287.3 160l-5.2-1.1M301.1 160l5.2-1.1M362 383.9l-4.7 .5M375.7 383.9l5.7 .5M362 309.3l-4.7 0M375.7 309.3l5.7 0M362 234.7l-4.7-.5M375.7 234.7l5.7-.5M436.6 383.9l-4.1 .5M436.6 309.3l-4.1 0M450.3 309.3l6.2 0M436.6 234.7l-4.1-.5M150.7 346.9l6.1-.3M136.9 346.9l-4-.3M150.7 271.7l6.1 .3M136.9 271.7l-4 .3M225.9 422.1l5.6-.8M212.1 422.1l-4.5-.8M225.9 346.9l5.6-.3M212.1 346.9l-4.5-.3M225.9 271.7l5.6 .3M212.1 271.7l-4.5 .3M225.9 196.5l5.6 .8M212.1 196.5l-4.5 .8M301.1 422.1l5.1-.8M287.3 422.1l-5.1-.8M301.1 346.9l5.1-.3M287.3 346.9l-5.1-.3M301.1 271.7l5.1 .3M287.3 271.7l-5.1 .3M301.1 196.5l5.1 .8M287.3 196.5l-5.1 .8M376.3 422.1l4.5-.8M362.5 422.1l-5.6-.8M376.3 346.9l4.5-.3M362.5 346.9l-5.6-.3M376.3 271.7l4.5 .3M362.5 271.7l-5.6 .3M376.3 196.5l4.5 .8M362.5 196.5l-5.6 .8M451.5 346.9l4-.3M437.7 346.9l-6.1-.3M451.5 271.7l4 .3M437.7 271.7l-6.1 .3M117.1 309.3l10.1 0M192.7 384.9l9.9-.2M168.8 384.9l-9.2-.2M192.7 309.3l9.9 0M168.8 309.3l-9.2 0M192.7 233.7l9.9 .2M168.8 233.7l-9.2 .2M268.3 460.5l9.7-.5M268.3 384.9l9.7-.2M244.4 384.9l-9.4-.2M268.3 309.3l9.7 0M244.4 309.3l-9.4 0M268.3 233.7l9.7 .2M244.4 233.7l-9.4 .2M268.3 158.1l9.7 .5M320.1 460.5l-9.7-.5M344 384.9l9.4-.2M320.1 384.9l-9.7-.2M344 309.3l9.4 0M320.1 309.3l-9.7 0M344 233.7l9.4 .2M320.1 233.7l-9.7 .2M320.1 158.1l-9.7 .5M419.6 384.9l9.2-.2M395.7 384.9l-9.9-.2M419.6 309.3l9.2 0M395.7 309.3l-9.9 0M419.6 233.7l9.2 .2M395.7 233.7l-9.9 .2M471.3 309.3l-10.1 0"/>
<g fill="url(#gO)"><circle cx="158.9" cy="346.5" r="2.6"/><circle cx="158.9" cy="272.1" r="2.6"/><circle cx="233.4" cy="421" r="2.6"/><circle cx="233.4" cy="346.5" r="2.6"/><circle cx="233.4" cy="272.1" r="2.6"/><circle cx="233.4" cy="197.6" r="2.6"/><circle cx="307.9" cy="421" r="2.6"/><circle cx="307.9" cy="346.5" r="2.6"/><circle cx="307.9" cy="272.1" r="2.6"/><circle cx="307.9" cy="197.6" r="2.6"/><circle cx="382.4" cy="421" r="2.6"/><circle cx="382.4" cy="346.5" r="2.6"/><circle cx="382.4" cy="272.1" r="2.6"/><circle cx="382.4" cy="197.6" r="2.6"/><circle cx="456.9" cy="346.5" r="2.6"/><circle cx="456.9" cy="272.1" r="2.6"/><circle cx="131.5" cy="346.5" r="2.6"/><circle cx="131.5" cy="272.1" r="2.6"/><circle cx="206" cy="421" r="2.6"/><circle cx="206" cy="346.5" r="2.6"/><circle cx="206" cy="272.1" r="2.6"/><circle cx="206" cy="197.6" r="2.6"/><circle cx="280.5" cy="421" r="2.6"/><circle cx="280.5" cy="346.5" r="2.6"/><circle cx="280.5" cy="272.1" r="2.6"/><circle cx="280.5" cy="197.6" r="2.6"/><circle cx="355" cy="421" r="2.6"/><circle cx="355" cy="346.5" r="2.6"/><circle cx="355" cy="272.1" r="2.6"/><circle cx="355" cy="197.6" r="2.6"/><circle cx="429.5" cy="346.5" r="2.6"/><circle cx="429.5" cy="272.1" r="2.6"/><circle cx="129.6" cy="309.3" r="2.6"/><circle cx="205" cy="384.6" r="2.6"/><circle cx="205" cy="309.3" r="2.6"/><circle cx="205" cy="234" r="2.6"/><circle cx="280.3" cy="460" r="2.6"/><circle cx="280.3" cy="384.6" r="2.6"/><circle cx="280.3" cy="309.3" r="2.6"/><circle cx="280.3" cy="234" r="2.6"/><circle cx="280.3" cy="158.6" r="2.6"/><circle cx="355.7" cy="384.6" r="2.6"/><circle cx="355.7" cy="309.3" r="2.6"/><circle cx="355.7" cy="234" r="2.6"/><circle cx="431" cy="384.6" r="2.6"/><circle cx="431" cy="309.3" r="2.6"/><circle cx="431" cy="234" r="2.6"/><circle cx="157.4" cy="384.6" r="2.6"/><circle cx="157.4" cy="309.3" r="2.6"/><circle cx="157.4" cy="234" r="2.6"/><circle cx="232.7" cy="384.6" r="2.6"/><circle cx="232.7" cy="309.3" r="2.6"/><circle cx="232.7" cy="234" r="2.6"/><circle cx="308.1" cy="460" r="2.6"/><circle cx="308.1" cy="384.6" r="2.6"/><circle cx="308.1" cy="309.3" r="2.6"/><circle cx="308.1" cy="234" r="2.6"/><circle cx="308.1" cy="158.6" r="2.6"/><circle cx="383.4" cy="384.6" r="2.6"/><circle cx="383.4" cy="309.3" r="2.6"/><circle cx="383.4" cy="234" r="2.6"/><circle cx="458.8" cy="309.3" r="2.6"/></g>
<path stroke="#c8c8c8" stroke-width="1.2" d="M109.7 309.3l7.4 0M185.5 385.1l7.3-.2M175.6 385.1l-6.8-.2M185.5 309.3l7.3 0M175.6 309.3l-6.8 0M185.5 233.5l7.3 .2M175.6 233.5l-6.8 .2M261.2 460.9l7.1-.3M261.2 385.1l7.1-.2M251.4 385.1l-6.9-.2M261.2 309.3l7.1 0M251.4 309.3l-6.9 0M261.2 233.5l7.1 .2M251.4 233.5l-6.9 .2M261.2 157.7l7.1 .3M327.2 460.9l-7.1-.3M337 385.1l6.9-.2M327.2 385.1l-7.1-.2M337 309.3l6.9 0M327.2 309.3l-7.1 0M337 233.5l6.9 .2M327.2 233.5l-7.1 .2M327.2 157.7l-7.1 .3M412.8 385.1l6.8-.2M402.9 385.1l-7.3-.2M412.8 309.3l6.8 0M402.9 309.3l-7.3 0M412.8 233.5l6.8 .2M402.9 233.5l-7.3 .2M478.7 309.3l-7.4 0"/>
<path stroke="#e80000" stroke-width="1.2" d="M181.4 415.2l-1.6-4.3M181.4 353.8l-1.6 6.3M181.4 340l-1.6-5.3M181.4 278.6l-1.6 5.3M181.4 264.8l-1.6-6.3M181.4 203.4l-1.6 4.3M256.6 429l-.5 7.4M256.6 415.2l-.5-4.3M256.6 353.8l-.5 6.3M256.6 340l-.5-5.3M256.6 278.6l-.5 5.3M256.6 264.8l-.5-6.3M256.6 203.4l-.5 4.3M256.6 189.6l-.5-7.4M331.8 429l.5 7.4M331.8 415.2l.5-4.3M331.8 353.8l.5 6.3M331.8 340l.5-5.3M331.8 278.6l.5 5.3M331.8 264.8l.5-6.3M331.8 203.4l.5 4.3M331.8 189.6l.5-7.4M407 415.2l1.6-4.3M407 353.8l1.6 6.3M407 340l1.6-5.3M407 278.6l1.6 5.3M407 264.8l1.6-6.3M407 203.4l1.6 4.3"/>
<path stroke="#c8c8c8" stroke-width=".8" d="M99.8 309.3l-3.6 0M251.4 460.9l-3.8-.2M251.4 157.7l-3.8 .2M337 460.9l3.8-.2M337 157.7l3.8 .2M488.6 309.3l3.6 0M104.1 304.3l-.2-3.9M104.1 314.3l-.2 3.9M256.2 466.3l0 4M256.2 152.3l0-4M332.2 466.3l0 4M332.2 152.3l0-4M484.3 304.3l.2-3.9M484.3 314.3l.2 3.9M105.9 309.3l1.3 0M100.5 309.3l-3.6 0M258.7 462.1l2.2 .9M253.3 462.1l-2.7 .9M258.7 156.5l2.2-.9M253.3 156.5l-2.7-.9M335.1 462.1l2.7 .9M329.7 462.1l-2.2 .9M335.1 156.5l2.7-.9M329.7 156.5l-2.2-.9M487.9 309.3l3.6 0M482.5 309.3l-1.3 0"/>
<path stroke="#e80000" stroke-width="1.3" d="M148 385.9l7.7-1.1M133.9 309.3l-3.5 0M148 309.3l7.7 0M148 232.7l7.7 1.1M210.5 385.9l-4.5-1.1M224.6 385.9l6.6-1.1M210.5 309.3l-4.5 0M224.6 309.3l6.6 0M210.5 232.7l-4.5 1.1M224.6 232.7l6.6 1.1M287.1 462.6l-5.6-2.1M301.3 462.6l5.6-2.1M287.1 385.9l-5.6-1.1M301.3 385.9l5.6-1.1M287.1 309.3l-5.6 0M301.3 309.3l5.6 0M287.1 232.7l-5.6 1.1M301.3 232.7l5.6 1.1M287.1 156l-5.6 2.1M301.3 156l5.6 2.1M363.8 385.9l-6.6-1.1M377.9 385.9l4.5-1.1M363.8 309.3l-6.6 0M377.9 309.3l4.5 0M363.8 232.7l-6.6 1.1M377.9 232.7l4.5 1.1M440.4 385.9l-7.7-1.1M440.4 309.3l-7.7 0M454.5 309.3l3.5 0M440.4 232.7l-7.7 1.1M179.9 373.5l-.3-9.5M179.9 397.5l-.3 10M179.9 297.3l-.3-9.8M179.9 321.3l-.3 9.8M179.9 221.1l-.3-10M179.9 245.1l-.3 9.5M256.1 449.6l-.1-9.3M256.1 373.5l-.1-9.5M256.1 397.5l-.1 10M256.1 297.3l-.1-9.8M256.1 321.3l-.1 9.8M256.1 221.1l-.1-10M256.1 245.1l-.1 9.5M256.1 169l-.1 9.3M332.3 449.6l.1-9.3M332.3 373.5l.1-9.5M332.3 397.5l.1 10M332.3 297.3l.1-9.8M332.3 321.3l.1 9.8M332.3 221.1l.1-10M332.3 245.1l.1 9.5M332.3 169l.1 9.3M408.5 373.5l.3-9.5M408.5 397.5l.3 10M408.5 297.3l.3-9.8M408.5 321.3l.3 9.8M408.5 221.1l.3-10M408.5 245.1l.3 9.5M140.9 354.7l-1.1 5.6M140.9 340.6l-1.1-5.1M140.9 278l-1.1 5.1M140.9 263.9l-1.1-5.6M217.6 417.2l-.6-4.5M217.6 354.7l-.6 5.6M217.6 340.6l-.6-5.1M217.6 278l-.6 5.1M217.6 263.9l-.6-5.6M217.6 201.4l-.6 4.5M294.2 431.3l0 6.2M294.2 417.2l0-4.5M294.2 354.7l0 5.6M294.2 340.6l0-5.1M294.2 278l0 5.1M294.2 263.9l0-5.6M294.2 201.4l0 4.5M294.2 187.3l0-6.2M370.8 417.2l.6-4.5M370.8 354.7l.6 5.6M370.8 340.6l.6-5.1M370.8 278l.6 5.1M370.8 263.9l.6-5.6M370.8 201.4l.6 4.5M447.5 354.7l1.1 5.6M447.5 340.6l1.1-5.1M447.5 278l1.1 5.1M447.5 263.9l1.1-5.6M178.4 418l.8-6M178.4 355l.8 4.9M178.4 340.8l.8-5.5M178.4 277.8l.8 5.5M178.4 263.6l.8-4.9M178.4 200.6l.8 6M255.6 432.2l.3 4.4M255.6 418l.3-6M255.6 355l.3 4.9M255.6 340.8l.3-5.5M255.6 277.8l.3 5.5M255.6 263.6l.3-4.9M255.6 200.6l.3 6M255.6 186.4l.3-4.4M332.8 432.2l-.3 4.4M332.8 418l-.3-6M332.8 355l-.3 4.9M332.8 340.8l-.3-5.5M332.8 277.8l-.3 5.5M332.8 263.6l-.3-4.9M332.8 200.6l-.3 6M332.8 186.4l-.3-4.4M410 418l-.8-6M410 355l-.8 4.9M410 340.8l-.8-5.5M410 277.8l-.8 5.5M410 263.6l-.8-4.9M410 200.6l-.8 6"/>
<path stroke="#c8c8c8" stroke-width="1.3" d="M180.2 380.4l-.3-6.9M180.2 390.3l-.3 7.2M180.2 304.3l-.3-7.1M180.2 314.3l-.3 7.1M180.2 228.3l-.3-7.2M180.2 238.2l-.3 6.9M256.2 456.4l-.1-6.7M256.2 380.4l-.1-6.9M256.2 390.3l-.1 7.2M256.2 304.3l-.1-7.1M256.2 314.3l-.1 7.1M256.2 228.3l-.1-7.2M256.2 238.2l-.1 6.9M256.2 162.2l-.1 6.7M332.2 456.4l.1-6.7M332.2 380.4l.1-6.9M332.2 390.3l.1 7.2M332.2 304.3l.1-7.1M332.2 314.3l.1 7.1M332.2 228.3l.1-7.2M332.2 238.2l.1 6.9M332.2 162.2l.1 6.7M408.2 380.4l.3-6.9M408.2 390.3l.3 7.2M408.2 304.3l.3-7.1M408.2 314.3l.3 7.1M408.2 228.3l.3-7.2M408.2 238.2l.3 6.9M182.3 385.7l3.2 .8M176.9 385.7l-5.6 .8M182.3 309.3l3.2 0M176.9 309.3l-5.6 0M182.3 232.9l3.2-.8M176.9 232.9l-5.6-.8M258.7 385.7l4 .8M253.3 385.7l-4.8 .8M258.7 309.3l4 0M253.3 309.3l-4.8 0M258.7 232.9l4-.8M253.3 232.9l-4.8-.8M335.1 385.7l4.8 .8M329.7 385.7l-4 .8M335.1 309.3l4.8 0M329.7 309.3l-4 0M335.1 232.9l4.8-.8M329.7 232.9l-4-.8M411.5 385.7l5.6 .8M406.1 385.7l-3.2 .8M411.5 309.3l5.6 0M406.1 309.3l-3.2 0M411.5 232.9l5.6-.8M406.1 232.9l-3.2-.8"/>
<path stroke="#dc0000" stroke-width=".8" d="M103.9 300.5l-.6-10M103.9 318.1l-.6 10M256.1 470.3l-.1 10.5M256.1 148.3l-.1-10.5M332.3 470.3l.1 10.5M332.3 148.3l.1-10.5M484.5 300.5l.6-10M484.5 318.1l.6 10M135 386.3l-3.5-1.1M135 232.3l-3.5 1.1M453.4 386.3l3.5-1.1M453.4 232.3l3.5 1.1M217.8 429.1l-.6 6.8M217.8 189.5l-.6-6.8M370.6 429.1l.6 6.8M370.6 189.5l.6-6.8"/>
<path stroke="#0dd" stroke-width=".8" d="M217.9 427.2l-.2 1.9M217.9 191.4l-.2-1.9M370.5 427.2l.2 1.9M370.5 191.4l.2-1.9"/>
<path stroke="#0dd" stroke-width="1.3" d="M141.7 350.9l-.7 3.8M141.7 344l-.7-3.4M141.7 274.6l-.7 3.4M141.7 267.7l-.7-3.8M217.9 420.2l-.4-3M217.9 350.9l-.4 3.8M217.9 344l-.4-3.4M217.9 274.6l-.4 3.4M217.9 267.7l-.4-3.8M217.9 198.4l-.4 3M294.2 427.2l0 4.1M294.2 420.2l0-3M294.2 350.9l0 3.8M294.2 344l0-3.4M294.2 274.6l0 3.4M294.2 267.7l0-3.8M294.2 198.4l0 3M294.2 191.4l0-4.1M370.5 420.2l.4-3M370.5 350.9l.4 3.8M370.5 344l.4-3.4M370.5 274.6l.4 3.4M370.5 267.7l.4-3.8M370.5 198.4l.4 3M446.7 350.9l.7 3.8M446.7 344l.7-3.4M446.7 274.6l.7 3.4M446.7 267.7l.7-3.8"/>
<g fill="url(#gO)"><circle cx="179.5" cy="361.6" r="2.7"/><circle cx="179.5" cy="285.1" r="2.7"/><circle cx="179.5" cy="208.7" r="2.7"/><circle cx="256" cy="438.1" r="2.7"/><circle cx="256" cy="361.6" r="2.7"/><circle cx="256" cy="285.1" r="2.7"/><circle cx="256" cy="208.7" r="2.7"/><circle cx="332.4" cy="438.1" r="2.7"/><circle cx="332.4" cy="361.6" r="2.7"/><circle cx="332.4" cy="285.1" r="2.7"/><circle cx="332.4" cy="208.7" r="2.7"/><circle cx="408.9" cy="361.6" r="2.7"/><circle cx="408.9" cy="285.1" r="2.7"/><circle cx="408.9" cy="208.7" r="2.7"/><circle cx="179.5" cy="409.9" r="2.7"/><circle cx="179.5" cy="333.5" r="2.7"/><circle cx="179.5" cy="257" r="2.7"/><circle cx="256" cy="409.9" r="2.7"/><circle cx="256" cy="333.5" r="2.7"/><circle cx="256" cy="257" r="2.7"/><circle cx="256" cy="180.5" r="2.7"/><circle cx="332.4" cy="409.9" r="2.7"/><circle cx="332.4" cy="333.5" r="2.7"/><circle cx="332.4" cy="257" r="2.7"/><circle cx="332.4" cy="180.5" r="2.7"/><circle cx="408.9" cy="409.9" r="2.7"/><circle cx="408.9" cy="333.5" r="2.7"/><circle cx="408.9" cy="257" r="2.7"/></g>
<g fill="url(#gS)"><circle cx="142.4" cy="347.3" r="4.9"/><circle cx="142.4" cy="271.3" r="4.9"/><circle cx="218.3" cy="423.2" r="4.9"/><circle cx="218.3" cy="347.3" r="4.9"/><circle cx="218.3" cy="271.3" r="4.9"/><circle cx="218.3" cy="195.4" r="4.9"/><circle cx="294.2" cy="423.2" r="4.9"/><circle cx="294.2" cy="347.3" r="4.9"/><circle cx="294.2" cy="271.3" r="4.9"/><circle cx="294.2" cy="195.4" r="4.9"/><circle cx="370.1" cy="423.2" r="4.9"/><circle cx="370.1" cy="347.3" r="4.9"/><circle cx="370.1" cy="271.3" r="4.9"/><circle cx="370.1" cy="195.4" r="4.9"/><circle cx="446" cy="347.3" r="4.9"/><circle cx="446" cy="271.3" r="4.9"/></g>
<g fill="url(#gZ)"><circle cx="104.4" cy="309.3" r="5.3"/><circle cx="180.3" cy="385.2" r="5.3"/><circle cx="180.3" cy="309.3" r="5.3"/><circle cx="180.3" cy="233.4" r="5.3"/><circle cx="256.2" cy="461.1" r="5.3"/><circle cx="256.2" cy="385.2" r="5.3"/><circle cx="256.2" cy="309.3" r="5.3"/><circle cx="256.2" cy="233.4" r="5.3"/><circle cx="256.2" cy="157.5" r="5.3"/><circle cx="332.2" cy="461.1" r="5.3"/><circle cx="332.2" cy="385.2" r="5.3"/><circle cx="332.2" cy="309.3" r="5.3"/><circle cx="332.2" cy="233.4" r="5.3"/><circle cx="332.2" cy="157.5" r="5.3"/><circle cx="408.1" cy="385.2" r="5.3"/><circle cx="408.1" cy="309.3" r="5.3"/><circle cx="408.1" cy="233.4" r="5.3"/><circle cx="484" cy="309.3" r="5.3"/></g>
<path stroke="#c8c8c8" stroke-width="1.3" d="M142.1 386.8l5.9-.8M136.5 309.3l-2.7 0M142.1 309.3l5.9 0M142.1 231.8l5.9 .8M214 386.8l-3.5-.8M219.5 386.8l5.1-.8M214 309.3l-3.5 0M219.5 309.3l5.1 0M214 231.8l-3.5 .8M219.5 231.8l5.1 .8M291.4 464.2l-4.3-1.6M297 464.2l4.3-1.6M291.4 386.8l-4.3-.8M297 386.8l4.3-.8M291.4 309.3l-4.3 0M297 309.3l4.3 0M291.4 231.8l-4.3 .8M297 231.8l4.3 .8M291.4 154.4l-4.3 1.6M297 154.4l4.3 1.6M368.9 386.8l-5.1-.8M374.4 386.8l3.5-.8M368.9 309.3l-5.1 0M374.4 309.3l3.5 0M368.9 231.8l-5.1 .8M374.4 231.8l3.5 .8M446.3 386.8l-5.9-.8M446.3 309.3l-5.9 0M451.9 309.3l2.7 0M446.3 231.8l-5.9 .8M138.5 382.1l.3-7.4M138.5 304.2l.3-7.2M138.5 314.4l.3 7.2M138.5 236.5l.3 7.4M216.3 382.1l.2-7.4M216.3 392.2l.2 7M216.3 304.2l.2-7.2M216.3 314.4l.2 7.2M216.3 226.4l.2-7M216.3 236.5l.2 7.4M294.2 459.9l0-7.5M294.2 382.1l0-7.4M294.2 392.2l0 7M294.2 304.2l0-7.2M294.2 314.4l0 7.2M294.2 226.4l0-7M294.2 236.5l0 7.4M294.2 158.7l0 7.5M372.1 382.1l-.2-7.4M372.1 392.2l-.2 7M372.1 304.2l-.2-7.2M372.1 314.4l-.2 7.2M372.1 226.4l-.2-7M372.1 236.5l-.2 7.4M449.9 382.1l-.3-7.4M449.9 304.2l-.3-7.2M449.9 314.4l-.3 7.2M449.9 236.5l-.3 7.4M143.1 387.4l6.9 .2M143.1 309.3l6.9 0M143.1 231.2l6.9-.2M211 387.4l-7.5 .2M221.2 387.4l7.1 .2M211 309.3l-7.5 0M221.2 309.3l7.1 0M211 231.2l-7.5-.2M221.2 231.2l7.1-.2M289.1 387.4l-7.3 .2M299.3 387.4l7.3 .2M289.1 309.3l-7.3 0M299.3 309.3l7.3 0M289.1 231.2l-7.3-.2M299.3 231.2l7.3-.2M367.2 387.4l-7.1 .2M377.4 387.4l7.5 .2M367.2 309.3l-7.1 0M377.4 309.3l7.5 0M367.2 231.2l-7.1-.2M377.4 231.2l7.5-.2M445.3 387.4l-6.9 .2M445.3 309.3l-6.9 0M445.3 231.2l-6.9-.2"/>
<path stroke="#dc0000" stroke-width=".8" d="M178.1 430.7l.9 4.9M178.1 187.9l.9-4.9M410.3 430.7l-.9 4.9M410.3 187.9l-.9-4.9M107.2 309.3l3.2 0M96.9 309.3l-8.8 0M261 463l5.5 2.2M250.6 463l-6.6 2.2M261 155.6l5.5-2.2M250.6 155.6l-6.6-2.2M337.8 463l6.6 2.2M327.4 463l-5.5 2.2M337.8 155.6l6.6-2.2M327.4 155.6l-5.5-2.2M491.5 309.3l8.8 0M481.2 309.3l-3.2 0M138.7 396.1l.5 9.9M138.7 222.5l.5-9.9M294.2 473.8l0 9.6M294.2 144.8l0-9.6M449.7 396.1l-.5 9.9M449.7 222.5l-.5-9.9M128.7 387.5l-10.8 .2M128.7 309.3l-10.8 0M128.7 231.1l-10.8-.2M285.1 465.7l-10.3 .5M303.3 465.7l10.3 .5M285.1 152.9l-10.3-.5M303.3 152.9l10.3-.5M459.7 387.5l10.8 .2M459.7 309.3l10.8 0M459.7 231.1l10.8-.2"/>
<path stroke="#c8c8c8" stroke-width=".8" d="M136.5 386.8l-1.5-.5M136.5 231.8l-1.5 .5M451.9 386.8l1.5-.5M451.9 231.8l1.5 .5M138.5 392.2l.2 3.8M138.5 226.4l.2-3.8M294.2 470.1l0 3.7M294.2 148.5l0-3.7M449.9 392.2l-.2 3.8M449.9 226.4l-.2-3.8M132.9 387.4l-4.2 .1M132.9 309.3l-4.2 0M132.9 231.2l-4.2-.1M289.1 465.5l-4 .2M299.3 465.5l4 .2M289.1 153.1l-4-.2M299.3 153.1l4-.2M455.5 387.4l4.2 .1M455.5 309.3l4.2 0M455.5 231.2l4.2-.1"/>
<path stroke="#0dd" stroke-width="1.3" d="M177.8 422.2l.6-4.1M177.8 351.6l.6 3.4M177.8 344.6l.6-3.8M177.8 274l.6 3.8M177.8 267l.6-3.4M177.8 196.4l.6 4.1M255.4 429.2l.2 3M255.4 422.2l.2-4.1M255.4 351.6l.2 3.4M255.4 344.6l.2-3.8M255.4 274l.2 3.8M255.4 267l.2-3.4M255.4 196.4l.2 4.1M255.4 189.4l.2-3M333 429.2l-.2 3M333 422.2l-.2-4.1M333 351.6l-.2 3.4M333 344.6l-.2-3.8M333 274l-.2 3.8M333 267l-.2-3.4M333 196.4l-.2 4.1M333 189.4l-.2-3M410.6 422.2l-.6-4.1M410.6 351.6l-.6 3.4M410.6 344.6l-.6-3.8M410.6 274l-.6 3.8M410.6 267l-.6-3.4M410.6 196.4l-.6 4.1"/>
<path stroke="#0dd" stroke-width=".8" d="M177.8 429.2l.3 1.4M177.8 189.4l.3-1.4M410.6 429.2l-.3 1.4M410.6 189.4l-.3-1.4"/>
<path stroke="#e80000" stroke-width="1.3" d="M138.8 374.7l.5-10M138.8 297l.5-9.8M138.8 321.6l.5 9.8M138.8 243.9l.5 10M216.5 374.7l.2-10M216.5 399.3l.2 9.6M216.5 297l.2-9.8M216.5 321.6l.2 9.8M216.5 219.3l.2-9.6M216.5 243.9l.2 10M294.2 452.4l0-10.3M294.2 374.7l0-10M294.2 399.3l0 9.6M294.2 297l0-9.8M294.2 321.6l0 9.8M294.2 219.3l0-9.6M294.2 243.9l0 10M294.2 166.2l0 10.3M371.9 374.7l-.2-10M371.9 399.3l-.2 9.6M371.9 297l-.2-9.8M371.9 321.6l-.2 9.8M371.9 219.3l-.2-9.6M371.9 243.9l-.2 10M449.6 374.7l-.5-10M449.6 297l-.5-9.8M449.6 321.6l-.5 9.8M449.6 243.9l-.5 10M185.5 386.5l4.3 1.1M171.3 386.5l-7.6 1.1M185.5 309.3l4.3 0M171.3 309.3l-7.6 0M185.5 232.1l4.3-1.1M171.3 232.1l-7.6-1.1M262.7 386.5l5.4 1.1M248.5 386.5l-6.5 1.1M262.7 309.3l5.4 0M248.5 309.3l-6.5 0M262.7 232.1l5.4-1.1M248.5 232.1l-6.5-1.1M339.9 386.5l6.5 1.1M325.7 386.5l-5.4 1.1M339.9 309.3l6.5 0M325.7 309.3l-5.4 0M339.9 232.1l6.5-1.1M325.7 232.1l-5.4-1.1M417.1 386.5l7.6 1.1M402.9 386.5l-4.3 1.1M417.1 309.3l7.6 0M402.9 309.3l-4.3 0M417.1 232.1l7.6-1.1M402.9 232.1l-4.3-1.1M136.7 355.9l2.2 5.2M136.7 341.4l2.2-6.3M136.7 277.2l2.2 6.3M136.7 262.7l2.2-5.2M215.4 420.2l1.1-7.4M215.4 355.9l1.1 5.2M215.4 341.4l1.1-6.3M215.4 277.2l1.1 6.3M215.4 262.7l1.1-5.2M215.4 198.4l1.1 7.4M294.2 434.7l0 4.1M294.2 420.2l0-7.4M294.2 355.9l0 5.2M294.2 341.4l0-6.3M294.2 277.2l0 6.3M294.2 262.7l0-5.2M294.2 198.4l0 7.4M294.2 183.9l0-4.1M373 420.2l-1.1-7.4M373 355.9l-1.1 5.2M373 341.4l-1.1-6.3M373 277.2l-1.1 6.3M373 262.7l-1.1-5.2M373 198.4l-1.1 7.4M451.7 355.9l-2.2 5.2M451.7 341.4l-2.2-6.3M451.7 277.2l-2.2 6.3M451.7 262.7l-2.2-5.2M150 387.6l9.5 .2M150 309.3l9.5 0M150 231l9.5-.2M203.6 387.6l-10.3 .2M228.3 387.6l9.8 .2M203.6 309.3l-10.3 0M228.3 309.3l9.8 0M203.6 231l-10.3-.2M228.3 231l9.8-.2M281.8 387.6l-10 .2M306.6 387.6l10 .2M281.8 309.3l-10 0M306.6 309.3l10 0M281.8 231l-10-.2M306.6 231l10-.2M360.1 387.6l-9.8 .2M384.8 387.6l10.3 .2M360.1 309.3l-9.8 0M384.8 309.3l10.3 0M360.1 231l-9.8-.2M384.8 231l10.3-.2M438.4 387.6l-9.5 .2M438.4 309.3l-9.5 0M438.4 231l-9.5-.2"/>
<g fill="url(#gO)"><circle cx="139.4" cy="362.2" r="2.7"/><circle cx="139.4" cy="284.8" r="2.7"/><circle cx="216.8" cy="362.2" r="2.7"/><circle cx="216.8" cy="284.8" r="2.7"/><circle cx="216.8" cy="207.5" r="2.7"/><circle cx="294.2" cy="439.6" r="2.7"/><circle cx="294.2" cy="362.2" r="2.7"/><circle cx="294.2" cy="284.8" r="2.7"/><circle cx="294.2" cy="207.5" r="2.7"/><circle cx="371.6" cy="362.2" r="2.7"/><circle cx="371.6" cy="284.8" r="2.7"/><circle cx="371.6" cy="207.5" r="2.7"/><circle cx="449" cy="362.2" r="2.7"/><circle cx="449" cy="284.8" r="2.7"/><circle cx="139.4" cy="333.8" r="2.7"/><circle cx="139.4" cy="256.4" r="2.7"/><circle cx="216.8" cy="411.1" r="2.7"/><circle cx="216.8" cy="333.8" r="2.7"/><circle cx="216.8" cy="256.4" r="2.7"/><circle cx="294.2" cy="411.1" r="2.7"/><circle cx="294.2" cy="333.8" r="2.7"/><circle cx="294.2" cy="256.4" r="2.7"/><circle cx="294.2" cy="179" r="2.7"/><circle cx="371.6" cy="411.1" r="2.7"/><circle cx="371.6" cy="333.8" r="2.7"/><circle cx="371.6" cy="256.4" r="2.7"/><circle cx="449" cy="333.8" r="2.7"/><circle cx="449" cy="256.4" r="2.7"/></g>
<g fill="url(#gS)"><circle cx="177.2" cy="426.3" r="5"/><circle cx="177.2" cy="348.3" r="5"/><circle cx="177.2" cy="270.3" r="5"/><circle cx="177.2" cy="192.3" r="5"/><circle cx="255.2" cy="426.3" r="5"/><circle cx="255.2" cy="348.3" r="5"/><circle cx="255.2" cy="270.3" r="5"/><circle cx="255.2" cy="192.3" r="5"/><circle cx="333.2" cy="426.3" r="5"/><circle cx="333.2" cy="348.3" r="5"/><circle cx="333.2" cy="270.3" r="5"/><circle cx="333.2" cy="192.3" r="5"/><circle cx="411.2" cy="426.3" r="5"/><circle cx="411.2" cy="348.3" r="5"/><circle cx="411.2" cy="270.3" r="5"/><circle cx="411.2" cy="192.3" r="5"/></g>
<g fill="url(#gZ)"><circle cx="138.2" cy="387.3" r="5.5"/><circle cx="138.2" cy="309.3" r="5.5"/><circle cx="138.2" cy="231.3" r="5.5"/><circle cx="216.2" cy="387.3" r="5.5"/><circle cx="216.2" cy="309.3" r="5.5"/><circle cx="216.2" cy="231.3" r="5.5"/><circle cx="294.2" cy="465.3" r="5.5"/><circle cx="294.2" cy="387.3" r="5.5"/><circle cx="294.2" cy="309.3" r="5.5"/><circle cx="294.2" cy="231.3" r="5.5"/><circle cx="294.2" cy="153.3" r="5.5"/><circle cx="372.2" cy="387.3" r="5.5"/><circle cx="372.2" cy="309.3" r="5.5"/><circle cx="372.2" cy="231.3" r="5.5"/><circle cx="450.2" cy="387.3" r="5.5"/><circle cx="450.2" cy="309.3" r="5.5"/><circle cx="450.2" cy="231.3" r="5.5"/></g>
<path stroke="#0dd" stroke-width=".8" d="M173.1 426.8l-2 .3M180.2 426.8l1.5 .3M173.1 191.8l-2-.3M180.2 191.8l1.5-.3M408.2 426.8l-1.5 .3M415.3 426.8l2 .3M408.2 191.8l-1.5-.3M415.3 191.8l2-.3"/>
<path stroke="#dc0000" stroke-width=".8" d="M215.1 433.3l1.1 4.1M215.1 185.3l1.1-4.1M373.3 433.3l-1.1 4.1M373.3 185.3l-1.1-4.1M171.1 427.1l-7 1M181.7 427.1l5.1 1M171.1 191.5l-7-1M181.7 191.5l5.1-1M406.7 427.1l-5.1 1M417.3 427.1l7 1M406.7 191.5l-5.1-1M417.3 191.5l7-1M136.2 393.6l-2.3 7.3M136.2 383l-2.3-5M136.2 235.6l-2.3 5M136.2 225l-2.3-7.3M294.2 472.6l0 8.5M294.2 461.9l0-3.8M294.2 156.7l0 3.8M294.2 146l0-8.5M452.2 393.6l2.3 7.3M452.2 383l2.3-5M452.2 235.6l2.3 5M452.2 225l2.3-7.3M125.1 349.3l-9.9-.1M125.1 269.3l-9.9 .1M205 429.2l-10.1-.4M205 189.4l-10.1 .4M383.4 429.2l10.1-.4M383.4 189.4l10.1 .4M463.3 349.3l9.9-.1M463.3 269.3l9.9 .1"/>
<path stroke="#0dd" stroke-width="1.3" d="M173.1 348.5l-4.3 .2M180.2 348.5l3.1 .2M173.1 270.1l-4.3-.2M180.2 270.1l3.1-.2M251.5 426.8l-3.9 .6M258.6 426.8l3.5 .6M251.5 348.5l-3.9 .2M258.6 348.5l3.5 .2M251.5 270.1l-3.9-.2M258.6 270.1l3.5-.2M251.5 191.8l-3.9-.6M258.6 191.8l3.5-.6M329.8 426.8l-3.5 .6M336.9 426.8l3.9 .6M329.8 348.5l-3.5 .2M336.9 348.5l3.9 .2M329.8 270.1l-3.5-.2M336.9 270.1l3.9-.2M329.8 191.8l-3.5-.6M336.9 191.8l3.9-.6M408.2 348.5l-3.1 .2M415.3 348.5l4.3 .2M408.2 270.1l-3.1-.2M415.3 270.1l4.3-.2M178.2 389.1l4.3-.4M170.9 389.1l-3.1-.4M178.2 309.3l4.3 0M170.9 309.3l-3.1 0M178.2 229.5l4.3 .4M170.9 229.5l-3.1 .4M257.9 389.1l3.9-.4M250.7 389.1l-3.5-.4M257.9 309.3l3.9 0M250.7 309.3l-3.5 0M257.9 229.5l3.9 .4M250.7 229.5l-3.5 .4M337.7 389.1l3.5-.4M330.5 389.1l-3.9-.4M337.7 309.3l3.5 0M330.5 309.3l-3.9 0M337.7 229.5l3.5 .4M330.5 229.5l-3.9 .4M417.5 389.1l3.1-.4M410.2 389.1l-4.3-.4M417.5 309.3l3.1 0M410.2 309.3l-4.3 0M417.5 229.5l3.1 .4M410.2 229.5l-4.3 .4"/>
<path stroke="#c8c8c8" stroke-width=".8" d="M137.2 390.6l-1 3M137.2 385l-1-2M137.2 233.6l-1 2M137.2 228l-1-3M294.2 469.1l0 3.5M294.2 463.5l0-1.6M294.2 155.1l0 1.6M294.2 149.5l0-3.5M451.2 390.6l1 3M451.2 385l1-2M451.2 233.6l1 2M451.2 228l1-3M214.6 431.6l.5 1.8M214.6 187l.5-1.8M373.8 431.6l-.5 1.8M373.8 187l-.5-1.8"/>
<path stroke="#c8c8c8" stroke-width="1.3" d="M137.2 312.1l-1.7 4.5M137.2 306.5l-1.7-4.5M215.7 390.6l-.9 5.4M215.7 385l-.9-3.6M215.7 312.1l-.9 4.5M215.7 306.5l-.9-4.5M215.7 233.6l-.9 3.6M215.7 228l-.9-5.4M294.2 390.6l0 5.4M294.2 385l0-3.6M294.2 312.1l0 4.5M294.2 306.5l0-4.5M294.2 233.6l0 3.6M294.2 228l0-5.4M372.7 390.6l.9 5.4M372.7 385l.9-3.6M372.7 312.1l.9 4.5M372.7 306.5l.9-4.5M372.7 233.6l.9 3.6M372.7 228l.9-5.4M451.2 312.1l1.7 4.5M451.2 306.5l1.7-4.5M135 351.9l1.7 4M135 346.3l1.7-4.8M135 272.3l1.7 4.8M135 266.7l1.7-4M214.6 425.9l.9-5.7M214.6 351.9l.9 4M214.6 346.3l.9-4.8M214.6 272.3l.9 4.8M214.6 266.7l.9-4M214.6 192.7l.9 5.7M294.2 431.6l0 3.1M294.2 425.9l0-5.7M294.2 351.9l0 4M294.2 346.3l0-4.8M294.2 272.3l0 4.8M294.2 266.7l0-4M294.2 192.7l0 5.7M294.2 187l0-3.1M373.8 425.9l-.9-5.7M373.8 351.9l-.9 4M373.8 346.3l-.9-4.8M373.8 272.3l-.9 4.8M373.8 266.7l-.9-4M373.8 192.7l-.9 5.7M453.4 351.9l-1.7 4M453.4 346.3l-1.7-4.8M453.4 272.3l-1.7 4.8M453.4 266.7l-1.7-4"/>
<path stroke="#e80000" stroke-width="1.3" d="M168.8 348.7l-6.4 .3M183.3 348.7l4.6 .3M168.8 269.9l-6.4-.3M183.3 269.9l4.6-.3M247.6 427.4l-5.8 .9M262.1 427.4l5.2 .9M247.6 348.7l-5.8 .3M262.1 348.7l5.2 .3M247.6 269.9l-5.8-.3M262.1 269.9l5.2-.3M247.6 191.2l-5.8-.9M262.1 191.2l5.2-.9M326.3 427.4l-5.2 .9M340.8 427.4l5.8 .9M326.3 348.7l-5.2 .3M340.8 348.7l5.8 .3M326.3 269.9l-5.2-.3M340.8 269.9l5.8-.3M326.3 191.2l-5.2-.9M340.8 191.2l5.8-.9M405.1 348.7l-4.6 .3M419.6 348.7l6.4 .3M405.1 269.9l-4.6-.3M419.6 269.9l6.4-.3M182.5 388.7l6.2-.6M167.9 388.7l-4.5-.6M182.5 309.3l6.2 0M167.9 309.3l-4.5 0M182.5 229.9l6.2 .6M167.9 229.9l-4.5 .6M261.8 388.7l5.6-.6M247.2 388.7l-5-.6M261.8 309.3l5.6 0M247.2 309.3l-5 0M261.8 229.9l5.6 .6M247.2 229.9l-5 .6M341.2 388.7l5-.6M326.6 388.7l-5.6-.6M341.2 309.3l5 0M326.6 309.3l-5.6 0M341.2 229.9l5 .6M326.6 229.9l-5.6 .6M420.5 388.7l4.5-.6M405.9 388.7l-6.2-.6M420.5 309.3l4.5 0M405.9 309.3l-6.2 0M420.5 229.9l4.5 .6M405.9 229.9l-6.2 .6M147.1 349.2l10.6-.1M147.1 269.4l10.6 .1M227 429.1l10.3-.4M227 349.2l10.3-.1M201.7 349.2l-9.8-.1M227 269.4l10.3 .1M201.7 269.4l-9.8 .1M227 189.5l10.3 .4M306.8 429.1l10.1-.4M281.6 429.1l-10.1-.4M306.8 349.2l10.1-.1M281.6 349.2l-10.1-.1M306.8 269.4l10.1 .1M281.6 269.4l-10.1 .1M306.8 189.5l10.1 .4M281.6 189.5l-10.1 .4M361.4 429.1l-10.3-.4M386.7 349.2l9.8-.1M361.4 349.2l-10.3-.1M386.7 269.4l9.8 .1M361.4 269.4l-10.3 .1M361.4 189.5l-10.3 .4M441.3 349.2l-10.6-.1M441.3 269.4l-10.6 .1"/>
<g fill="url(#gO)"><circle cx="190.8" cy="387.9" r="2.8"/><circle cx="190.8" cy="309.3" r="2.8"/><circle cx="190.8" cy="230.7" r="2.8"/><circle cx="269.4" cy="387.9" r="2.8"/><circle cx="269.4" cy="309.3" r="2.8"/><circle cx="269.4" cy="230.7" r="2.8"/><circle cx="347.9" cy="387.9" r="2.8"/><circle cx="347.9" cy="309.3" r="2.8"/><circle cx="347.9" cy="230.7" r="2.8"/><circle cx="426.5" cy="387.9" r="2.8"/><circle cx="426.5" cy="309.3" r="2.8"/><circle cx="426.5" cy="230.7" r="2.8"/><circle cx="161.9" cy="387.9" r="2.8"/><circle cx="161.9" cy="309.3" r="2.8"/><circle cx="161.9" cy="230.7" r="2.8"/><circle cx="240.5" cy="387.9" r="2.8"/><circle cx="240.5" cy="309.3" r="2.8"/><circle cx="240.5" cy="230.7" r="2.8"/><circle cx="319" cy="387.9" r="2.8"/><circle cx="319" cy="309.3" r="2.8"/><circle cx="319" cy="230.7" r="2.8"/><circle cx="397.6" cy="387.9" r="2.8"/><circle cx="397.6" cy="309.3" r="2.8"/><circle cx="397.6" cy="230.7" r="2.8"/><circle cx="160.3" cy="349.1" r="2.8"/><circle cx="160.3" cy="269.5" r="2.8"/><circle cx="239.8" cy="428.6" r="2.8"/><circle cx="239.8" cy="349.1" r="2.8"/><circle cx="239.8" cy="269.5" r="2.8"/><circle cx="239.8" cy="190" r="2.8"/><circle cx="319.3" cy="428.6" r="2.8"/><circle cx="319.3" cy="349.1" r="2.8"/><circle cx="319.3" cy="269.5" r="2.8"/><circle cx="319.3" cy="190" r="2.8"/><circle cx="398.9" cy="349.1" r="2.8"/><circle cx="398.9" cy="269.5" r="2.8"/><circle cx="189.5" cy="349.1" r="2.8"/><circle cx="189.5" cy="269.5" r="2.8"/><circle cx="269.1" cy="428.6" r="2.8"/><circle cx="269.1" cy="349.1" r="2.8"/><circle cx="269.1" cy="269.5" r="2.8"/><circle cx="269.1" cy="190" r="2.8"/><circle cx="348.6" cy="428.6" r="2.8"/><circle cx="348.6" cy="349.1" r="2.8"/><circle cx="348.6" cy="269.5" r="2.8"/><circle cx="348.6" cy="190" r="2.8"/><circle cx="428.1" cy="349.1" r="2.8"/><circle cx="428.1" cy="269.5" r="2.8"/></g>
<path stroke="#c8c8c8" stroke-width="1.3" d="M139.3 349.3l7.8-.1M139.3 269.3l7.8 .1M219.4 429.4l7.6-.3M219.4 349.3l7.6-.1M208.9 349.3l-7.2-.1M219.4 269.3l7.6 .1M208.9 269.3l-7.2 .1M219.4 189.2l7.6 .3M299.4 429.4l7.4-.3M289 429.4l-7.4-.3M299.4 349.3l7.4-.1M289 349.3l-7.4-.1M299.4 269.3l7.4 .1M289 269.3l-7.4 .1M299.4 189.2l7.4 .3M289 189.2l-7.4 .3M369 429.4l-7.6-.3M379.5 349.3l7.2-.1M369 349.3l-7.6-.1M379.5 269.3l7.2 .1M369 269.3l-7.6 .1M369 189.2l-7.6 .3M449.1 349.3l-7.8-.1M449.1 269.3l-7.8 .1M133.6 344.2l-.4-7.4M133.6 274.4l-.4 7.4M213.9 424.5l-.2-7.2M213.9 344.2l-.2-7.4M213.9 354.7l-.2 7.6M213.9 263.9l-.2-7.6M213.9 274.4l-.2 7.4M213.9 194.1l-.2 7.2M294.2 424.5l0-7.2M294.2 344.2l0-7.4M294.2 354.7l0 7.6M294.2 263.9l0-7.6M294.2 274.4l0 7.4M294.2 194.1l0 7.2M374.5 424.5l.2-7.2M374.5 344.2l.2-7.4M374.5 354.7l.2 7.6M374.5 263.9l.2-7.6M374.5 274.4l.2 7.4M374.5 194.1l.2 7.2M454.8 344.2l.4-7.4M454.8 274.4l.4 7.4M216.4 349.7l3.7 .5M210.6 349.7l-5.5 .5M216.4 268.9l3.7-.5M210.6 268.9l-5.5-.5M297.1 430.4l4.6 1.4M291.3 430.4l-4.6 1.4M297.1 349.7l4.6 .5M291.3 349.7l-4.6 .5M297.1 268.9l4.6-.5M291.3 268.9l-4.6-.5M297.1 188.2l4.6-1.4M291.3 188.2l-4.6-1.4M377.8 349.7l5.5 .5M372 349.7l-3.7 .5M377.8 268.9l5.5-.5M372 268.9l-3.7-.5"/>
<path stroke="#e80000" stroke-width="1.3" d="M135.5 316.6l-2.3 6.2M135.5 302l-2.3-6.2M214.8 396l-1.2 7.3M214.8 381.4l-1.2-5M214.8 316.6l-1.2 6.2M214.8 302l-1.2-6.2M214.8 237.2l-1.2 5M214.8 222.6l-1.2-7.3M294.2 396l0 7.3M294.2 381.4l0-5M294.2 316.6l0 6.2M294.2 302l0-6.2M294.2 237.2l0 5M294.2 222.6l0-7.3M373.6 396l1.2 7.3M373.6 381.4l1.2-5M373.6 316.6l1.2 6.2M373.6 302l1.2-6.2M373.6 237.2l1.2 5M373.6 222.6l1.2-7.3M452.9 316.6l2.3 6.2M452.9 302l2.3-6.2M165.3 349.8l-4.1-.6M180.2 349.8l7.7-.6M165.3 268.8l-4.1 .6M180.2 268.8l7.7 .6M246.3 430.8l-5.3-1.8M261.2 430.8l6.5-1.8M246.3 349.8l-5.3-.6M261.2 349.8l6.5-.6M246.3 268.8l-5.3 .6M261.2 268.8l6.5 .6M246.3 187.8l-5.3 1.8M261.2 187.8l6.5 1.8M327.2 430.8l-6.5-1.8M342.1 430.8l5.3-1.8M327.2 349.8l-6.5-.6M342.1 349.8l5.3-.6M327.2 268.8l-6.5 .6M342.1 268.8l5.3 .6M327.2 187.8l-6.5 1.8M342.1 187.8l5.3 1.8M408.2 349.8l-7.7-.6M423.1 349.8l4.1-.6M408.2 268.8l-7.7 .6M423.1 268.8l4.1 .6M133.2 336.8l-.5-10.2M133.2 281.8l-.5 10.2M213.7 417.3l-.3-9.9M213.7 336.8l-.3-10.2M213.7 362.3l-.3 10.4M213.7 256.3l-.3-10.4M213.7 281.8l-.3 10.2M213.7 201.3l-.3 9.9M294.2 417.3l0-9.9M294.2 336.8l0-10.2M294.2 362.3l0 10.4M294.2 256.3l0-10.4M294.2 281.8l0 10.2M294.2 201.3l0 9.9M374.7 417.3l.3-9.9M374.7 336.8l.3-10.2M374.7 362.3l.3 10.4M374.7 256.3l.3-10.4M374.7 281.8l.3 10.2M374.7 201.3l.3 9.9M455.2 336.8l.5-10.2M455.2 281.8l.5 10.2M172.7 316.8l-.9 5.6M172.7 301.8l-.9-5.6M253.7 397.7l-.3 6.3M253.7 382.8l-.3-5M253.7 316.8l-.3 5.6M253.7 301.8l-.3-5.6M253.7 235.8l-.3 5M253.7 220.9l-.3-6.3M334.7 397.7l.3 6.3M334.7 382.8l.3-5M334.7 316.8l.3 5.6M334.7 301.8l.3-5.6M334.7 235.8l.3 5M334.7 220.9l.3-6.3M415.7 316.8l.9 5.6M415.7 301.8l.9-5.6M130.9 316.8l1.2 5.5M130.9 301.8l1.2-5.5M212.6 398.4l.6 4.9M212.6 383.4l.6-6.1M212.6 316.8l.6 5.5M212.6 301.8l.6-5.5M212.6 235.2l.6 6.1M212.6 220.2l.6-4.9M294.2 398.4l0 4.9M294.2 383.4l0-6.1M294.2 316.8l0 5.5M294.2 301.8l0-5.5M294.2 235.2l0 6.1M294.2 220.2l0-4.9M375.8 398.4l-.6 4.9M375.8 383.4l-.6-6.1M375.8 316.8l-.6 5.5M375.8 301.8l-.6-5.5M375.8 235.2l-.6 6.1M375.8 220.2l-.6-4.9M457.5 316.8l-1.2 5.5M457.5 301.8l-1.2-5.5"/>
<path stroke="#c8c8c8" stroke-width=".8" d="M128.9 349.3l-3.8-.1M128.9 269.3l-3.8 .1M208.9 429.4l-3.9-.2M208.9 189.2l-3.9 .2M379.5 429.4l3.9-.2M379.5 189.2l3.9 .2M459.5 349.3l3.8-.1M459.5 269.3l3.8 .1M133.6 354.7l-.2 4.1M133.6 263.9l-.2-4.1M213.9 435l-.1 4.2M213.9 183.6l-.1-4.2M294.2 435l0 4.2M294.2 183.6l0-4.2M374.5 435l.1 4.2M374.5 183.6l.1-4.2M454.8 354.7l.2 4.1M454.8 263.9l.2-4.1"/>
<path stroke="#dc0000" stroke-width=".8" d="M133.4 358.8l-.5 10.7M133.4 259.8l-.5-10.7M213.8 439.2l-.3 11M213.8 179.4l-.3-11M294.2 439.2l0 11M294.2 179.4l0-11M374.6 439.2l.3 11M374.6 179.4l.3-11M455 358.8l.5 10.7M455 259.8l.5-10.7"/>
<path stroke="#0dd" stroke-width=".8" d="M173.4 393.5l-.3 2M173.4 386.2l-.3-1.6M173.4 232.4l-.3 1.6M173.4 225.1l-.3-2M415 393.5l.3 2M415 386.2l.3-1.6M415 232.4l.3 1.6M415 225.1l.3-2"/>
<path stroke="#0dd" stroke-width="1.3" d="M173.4 313l-.6 3.8M173.4 305.6l-.6-3.8M253.9 393.5l-.2 4.2M253.9 386.2l-.2-3.4M253.9 313l-.2 3.8M253.9 305.6l-.2-3.8M253.9 232.4l-.2 3.4M253.9 225.1l-.2-4.2M334.5 393.5l.2 4.2M334.5 386.2l.2-3.4M334.5 313l.2 3.8M334.5 305.6l.2-3.8M334.5 232.4l.2 3.4M334.5 225.1l.2-4.2M415 313l.6 3.8M415 305.6l.6-3.8"/>
<path stroke="#c8c8c8" stroke-width=".9" d="M135.6 349.7l1.6 .3M129.9 349.7l-3.6 .3M135.6 268.9l1.6-.3M129.9 268.9l-3.6-.3M216.4 430.4l2.1 .8M210.6 430.4l-3.1 .8M216.4 188.2l2.1-.8M210.6 188.2l-3.1-.8M377.8 430.4l3.1 .8M372 430.4l-2.1 .8M377.8 188.2l3.1-.8M372 188.2l-2.1-.8M458.5 349.7l3.6 .3M452.8 349.7l-1.6 .3M458.5 268.9l3.6-.3M452.8 268.9l-1.6-.3"/>
<path stroke="#dc0000" stroke-width=".9" d="M173.1 395.5l-1 6.9M173.1 384.6l-1-5.6M173.1 234l-1 5.6M173.1 223.1l-1-6.9M415.3 395.5l1 6.9M415.3 384.6l1-5.6M415.3 234l1 5.6M415.3 223.1l1-6.9"/>
<g fill="url(#gO)"><circle cx="132.6" cy="324.2" r="2.8"/><circle cx="213.4" cy="405" r="2.8"/><circle cx="213.4" cy="324.2" r="2.8"/><circle cx="213.4" cy="243.4" r="2.8"/><circle cx="294.2" cy="405" r="2.8"/><circle cx="294.2" cy="324.2" r="2.8"/><circle cx="294.2" cy="243.4" r="2.8"/><circle cx="375" cy="405" r="2.8"/><circle cx="375" cy="324.2" r="2.8"/><circle cx="375" cy="243.4" r="2.8"/><circle cx="455.8" cy="324.2" r="2.8"/><circle cx="132.6" cy="294.4" r="2.8"/><circle cx="213.4" cy="375.2" r="2.8"/><circle cx="213.4" cy="294.4" r="2.8"/><circle cx="213.4" cy="213.6" r="2.8"/><circle cx="294.2" cy="375.2" r="2.8"/><circle cx="294.2" cy="294.4" r="2.8"/><circle cx="294.2" cy="213.6" r="2.8"/><circle cx="375" cy="375.2" r="2.8"/><circle cx="375" cy="294.4" r="2.8"/><circle cx="375" cy="213.6" r="2.8"/><circle cx="455.8" cy="294.4" r="2.8"/></g>
<g fill="url(#gS)"><circle cx="174" cy="389.5" r="5.1"/><circle cx="174" cy="309.3" r="5.1"/><circle cx="174" cy="229.1" r="5.1"/><circle cx="254.1" cy="389.5" r="5.1"/><circle cx="254.1" cy="309.3" r="5.1"/><circle cx="254.1" cy="229.1" r="5.1"/><circle cx="334.3" cy="389.5" r="5.1"/><circle cx="334.3" cy="309.3" r="5.1"/><circle cx="334.3" cy="229.1" r="5.1"/><circle cx="414.4" cy="389.5" r="5.1"/><circle cx="414.4" cy="309.3" r="5.1"/><circle cx="414.4" cy="229.1" r="5.1"/></g>
<g fill="url(#gZ)"><circle cx="133.9" cy="349.4" r="5.6"/><circle cx="133.9" cy="269.2" r="5.6"/><circle cx="214" cy="429.5" r="5.6"/><circle cx="214" cy="349.4" r="5.6"/><circle cx="214" cy="269.2" r="5.6"/><circle cx="214" cy="189.1" r="5.6"/><circle cx="294.2" cy="429.5" r="5.6"/><circle cx="294.2" cy="349.4" r="5.6"/><circle cx="294.2" cy="269.2" r="5.6"/><circle cx="294.2" cy="189.1" r="5.6"/><circle cx="374.4" cy="429.5" r="5.6"/><circle cx="374.4" cy="349.4" r="5.6"/><circle cx="374.4" cy="269.2" r="5.6"/><circle cx="374.4" cy="189.1" r="5.6"/><circle cx="454.5" cy="349.4" r="5.6"/><circle cx="454.5" cy="269.2" r="5.6"/></g>
<path stroke="#c8c8c8" stroke-width="1.3" d="M168.4 350.2l-3.2-.5M174.3 350.2l5.9-.5M168.4 268.4l-3.2 .5M174.3 268.4l5.9 .5M250.3 432.1l-4.1-1.4M256.2 432.1l5-1.4M250.3 350.2l-4.1-.5M256.2 350.2l5-.5M250.3 268.4l-4.1 .5M256.2 268.4l5 .5M250.3 186.5l-4.1 1.4M256.2 186.5l5 1.4M332.2 432.1l-5-1.4M338.1 432.1l4.1-1.4M332.2 350.2l-5-.5M338.1 350.2l4.1-.5M332.2 268.4l-5 .5M338.1 268.4l4.1 .5M332.2 186.5l-5 1.4M338.1 186.5l4.1 1.4M414.1 350.2l-5.9-.5M420 350.2l3.2-.5M414.1 268.4l-5.9 .5M420 268.4l3.2 .5"/>
<path stroke="#0dd" stroke-width="1.4" d="M130.1 313l.9 3.8M130.1 305.6l.9-3.8M212.1 395.1l.4 3.3M212.1 387.6l.4-4.2M212.1 313l.4 3.8M212.1 305.6l.4-3.8M212.1 231l.4 4.2M212.1 223.5l.4-3.3M294.2 395.1l0 3.3M294.2 387.6l0-4.2M294.2 313l0 3.8M294.2 305.6l0-3.8M294.2 231l0 4.2M294.2 223.5l0-3.3M376.3 395.1l-.4 3.3M376.3 387.6l-.4-4.2M376.3 313l-.4 3.8M376.3 305.6l-.4-3.8M376.3 231l-.4 4.2M376.3 223.5l-.4-3.3M458.3 313l-.9 3.8M458.3 305.6l-.9-3.8"/>
<path stroke="#dc0000" stroke-width=".9" d="M137.2 349.9l3.9 .6M126.3 349.9l-8.8 .6M137.2 268.7l3.9-.6M126.3 268.7l-8.8-.6M218.4 431.2l5.1 1.9M207.5 431.2l-7.6 1.9M218.4 187.4l5.1-1.9M207.5 187.4l-7.6-1.9M380.9 431.2l7.6 1.9M370 431.2l-5.1 1.9M380.9 187.4l7.6-1.9M370 187.4l-5.1-1.9M462.1 349.9l8.8 .6M451.2 349.9l-3.9 .6M462.1 268.7l8.8-.6M451.2 268.7l-3.9-.6M170.8 359.9l.4 10.5M170.8 258.7l.4-10.5M253.1 442.2l.1 10.3M253.1 176.4l.1-10.3M335.3 442.2l-.1 10.3M335.3 176.4l-.1-10.3M417.6 359.9l-.4 10.5M417.6 258.7l-.4-10.5M160.5 350.7l-11.3 .1M160.5 267.9l-11.3-.1M243.3 433.4l-11 .4M243.3 185.2l-11-.4M345.1 433.4l11 .4M345.1 185.2l11-.4M427.9 350.7l11.3 .1M427.9 267.9l11.3-.1"/>
<path stroke="#e80000" stroke-width="1.4" d="M171 337.4l.4-10.5M171 281.2l.4 10.5M253.1 419.5l.1-10.8M253.1 337.4l.1-10.5M253.1 363.4l.1 10.2M253.1 255.2l.1-10.2M253.1 281.2l.1 10.5M253.1 199.1l.1 10.8M335.3 419.5l-.1-10.8M335.3 337.4l-.1-10.5M335.3 363.4l-.1 10.2M335.3 255.2l-.1-10.2M335.3 281.2l-.1 10.5M335.3 199.1l-.1 10.8M417.4 337.4l-.4-10.5M417.4 281.2l-.4 10.5M220.1 350.1l5.1 .6M205.1 350.1l-7.6 .6M220.1 268.5l5.1-.6M205.1 268.5l-7.6-.6M301.7 431.7l6.3 1.9M286.7 431.7l-6.3 1.9M301.7 350.1l6.3 .6M286.7 350.1l-6.3 .6M301.7 268.5l6.3-.6M286.7 268.5l-6.3-.6M301.7 186.9l6.3-1.9M286.7 186.9l-6.3-1.9M383.3 350.1l7.6 .6M368.3 350.1l-5.1 .6M383.3 268.5l7.6-.6M368.3 268.5l-5.1-.6M169.2 317l1.9 6.1M169.2 301.6l1.9-6.1M252.5 400.3l.6 4.8M252.5 385l.6-7.3M252.5 317l.6 6.1M252.5 301.6l.6-6.1M252.5 233.6l.6 7.3M252.5 218.3l.6-4.8M335.9 400.3l-.6 4.8M335.9 385l-.6-7.3M335.9 317l-.6 6.1M335.9 301.6l-.6-6.1M335.9 233.6l-.6 7.3M335.9 218.3l-.6-4.8M419.2 317l-1.9 6.1M419.2 301.6l-1.9-6.1M183.1 350.7l10.2 .1M183.1 267.9l10.2-.1M265.9 433.5l10.5 .4M239.7 350.7l-10.7 .1M265.9 350.7l10.5 .1M239.7 267.9l-10.7-.1M265.9 267.9l10.5-.1M265.9 185.1l10.5-.4M322.5 433.5l-10.5 .4M322.5 350.7l-10.5 .1M348.7 350.7l10.7 .1M322.5 267.9l-10.5-.1M348.7 267.9l10.7-.1M322.5 185.1l-10.5-.4M405.3 350.7l-10.2 .1M405.3 267.9l-10.2-.1"/>
<path stroke="#c8c8c8" stroke-width="1.4" d="M170.7 345.1l.3-7.7M170.7 273.5l.3 7.7M253 427.4l.1-7.9M253 345.1l.1-7.7M253 355.8l.1 7.5M253 262.8l.1-7.5M253 273.5l.1 7.7M253 191.2l.1 7.9M335.4 427.4l-.1-7.9M335.4 345.1l-.1-7.7M335.4 355.8l-.1 7.5M335.4 262.8l-.1-7.5M335.4 273.5l-.1 7.7M335.4 191.2l-.1 7.9M417.7 345.1l-.3-7.7M417.7 273.5l-.3 7.7M175.7 350.6l7.4 .1M175.7 268l7.4-.1M258.3 433.2l7.6 .3M247.5 350.6l-7.8 .1M258.3 350.6l7.6 .1M247.5 268l-7.8-.1M258.3 268l7.6-.1M258.3 185.4l7.6-.3M330.1 433.2l-7.6 .3M330.1 350.6l-7.6 .1M340.9 350.6l7.8 .1M330.1 268l-7.6-.1M340.9 268l7.8-.1M330.1 185.4l-7.6-.3M412.7 350.6l-7.4 .1M412.7 268l-7.4-.1"/>
<path stroke="#c8c8c8" stroke-width=".9" d="M170.7 355.8l.2 4.1M170.7 262.8l.2-4.1M253 438.2l.1 4M253 180.4l.1-4M335.4 438.2l-.1 4M335.4 180.4l-.1-4M417.7 355.8l-.2 4.1M417.7 262.8l-.2-4.1M164.9 350.6l-4.4 .1M164.9 268l-4.4-.1M247.5 433.2l-4.3 .2M247.5 185.4l-4.3-.2M340.9 433.2l4.3 .2M340.9 185.4l4.3-.2M423.5 350.6l4.4 .1M423.5 268l4.4-.1"/>
<g fill="url(#gO)"><circle cx="171.5" cy="324.4" r="2.9"/><circle cx="253.3" cy="406.2" r="2.9"/><circle cx="253.3" cy="324.4" r="2.9"/><circle cx="253.3" cy="242.5" r="2.9"/><circle cx="335.1" cy="406.2" r="2.9"/><circle cx="335.1" cy="324.4" r="2.9"/><circle cx="335.1" cy="242.5" r="2.9"/><circle cx="416.9" cy="324.4" r="2.9"/><circle cx="171.5" cy="294.2" r="2.9"/><circle cx="253.3" cy="376.1" r="2.9"/><circle cx="253.3" cy="294.2" r="2.9"/><circle cx="253.3" cy="212.4" r="2.9"/><circle cx="335.1" cy="376.1" r="2.9"/><circle cx="335.1" cy="294.2" r="2.9"/><circle cx="335.1" cy="212.4" r="2.9"/><circle cx="416.9" cy="294.2" r="2.9"/></g>
<g fill="url(#gS)"><circle cx="129.2" cy="309.3" r="5.3"/><circle cx="211.7" cy="391.8" r="5.3"/><circle cx="211.7" cy="309.3" r="5.3"/><circle cx="211.7" cy="226.8" r="5.3"/><circle cx="294.2" cy="391.8" r="5.3"/><circle cx="294.2" cy="309.3" r="5.3"/><circle cx="294.2" cy="226.8" r="5.3"/><circle cx="376.7" cy="391.8" r="5.3"/><circle cx="376.7" cy="309.3" r="5.3"/><circle cx="376.7" cy="226.8" r="5.3"/><circle cx="459.2" cy="309.3" r="5.3"/></g>
<g fill="url(#gZ)"><circle cx="170.5" cy="350.5" r="5.8"/><circle cx="170.5" cy="268.1" r="5.8"/><circle cx="253" cy="433" r="5.8"/><circle cx="253" cy="350.5" r="5.8"/><circle cx="253" cy="268.1" r="5.8"/><circle cx="253" cy="185.6" r="5.8"/><circle cx="335.4" cy="433" r="5.8"/><circle cx="335.4" cy="350.5" r="5.8"/><circle cx="335.4" cy="268.1" r="5.8"/><circle cx="335.4" cy="185.6" r="5.8"/><circle cx="417.9" cy="350.5" r="5.8"/><circle cx="417.9" cy="268.1" r="5.8"/></g>
<path stroke="#0dd" stroke-width=".9" d="M124.6 309.3l-2.2 0M132.2 309.3l1.4 0M207.5 392.2l-2 .2M215.1 392.2l1.6 .2M207.5 226.4l-2-.2M215.1 226.4l1.6-.2M373.3 392.2l-1.6 .2M380.9 392.2l2 .2M373.3 226.4l-1.6-.2M380.9 226.4l2-.2M456.2 309.3l-1.4 0M463.8 309.3l2.2 0"/>
<path stroke="#0dd" stroke-width="1.4" d="M207.5 309.3l-4.3 0M215.1 309.3l3.5 0M290.4 392.2l-3.9 .4M298 392.2l3.9 .4M290.4 309.3l-3.9 0M298 309.3l3.9 0M290.4 226.4l-3.9-.4M298 226.4l3.9-.4M373.3 309.3l-3.5 0M380.9 309.3l4.3 0M213.6 351.5l4.3-.2M205.9 351.5l-3.4-.2M213.6 267.1l4.3 .2M205.9 267.1l-3.4 .2M298 436l3.9-.7M290.4 436l-3.9-.7M298 351.5l3.9-.2M290.4 351.5l-3.9-.2M298 267.1l3.9 .2M290.4 267.1l-3.9 .2M298 182.6l3.9 .7M290.4 182.6l-3.9 .7M382.5 351.5l3.4-.2M374.8 351.5l-4.3-.2M382.5 267.1l3.4 .2M374.8 267.1l-4.3 .2"/>
<path stroke="#c8c8c8" stroke-width=".9" d="M169.6 353.8l-.8 2.9M169.6 347.9l-.8-2.4M169.6 270.7l-.8 2.4M169.6 264.8l-.8-2.9M252.7 436.9l-.3 3.5M252.7 430.9l-.3-1.9M252.7 187.7l-.3 1.9M252.7 181.7l-.3-3.5M335.7 436.9l.3 3.5M335.7 430.9l.3-1.9M335.7 187.7l.3 1.9M335.7 181.7l.3-3.5M418.8 353.8l.8 2.9M418.8 347.9l.8-2.4M418.8 270.7l.8 2.4M418.8 264.8l.8-2.9"/>
<path stroke="#dc0000" stroke-width=".9" d="M122.4 309.3l-7.9 0M133.6 309.3l5 0M205.5 392.4l-7.2 .7M216.7 392.4l5.7 .7M205.5 226.2l-7.2-.7M216.7 226.2l5.7-.7M371.7 392.4l-5.7 .7M382.9 392.4l7.2 .7M371.7 226.2l-5.7-.7M382.9 226.2l7.2-.7M454.8 309.3l-5 0M466 309.3l7.9 0M168.8 356.7l-2 7.2M168.8 345.5l-2-5.9M168.8 273.1l-2 5.9M168.8 261.9l-2-7.2M252.4 440.4l-.7 8.5M252.4 429.1l-.7-4.6M252.4 189.5l-.7 4.6M252.4 178.2l-.7-8.5M336 440.4l.7 8.5M336 429.1l.7-4.6M336 189.5l.7 4.6M336 178.2l.7-8.5M419.6 356.7l2 7.2M419.6 345.5l2-5.9M419.6 273.1l2 5.9M419.6 261.9l2-7.2M157.4 309.3l-10.6 0M242.1 394l-10.8-.3M242.1 224.6l-10.8 .3M346.3 394l10.8-.3M346.3 224.6l10.8 .3M431 309.3l10.6 0"/>
<path stroke="#c8c8c8" stroke-width="1.4" d="M252.7 353.8l-.5 5.2M252.7 347.9l-.5-4.3M252.7 270.7l-.5 4.3M252.7 264.8l-.5-5.2M335.7 353.8l.5 5.2M335.7 347.9l.5-4.3M335.7 270.7l.5 4.3M335.7 264.8l.5-5.2M167.7 312.3l1.4 4.7M167.7 306.3l1.4-4.7M252 396.6l.5 3.7M252 390.6l.5-5.6M252 312.3l.5 4.7M252 306.3l.5-4.7M252 228l.5 5.6M252 222l.5-3.7M336.4 396.6l-.5 3.7M336.4 390.6l-.5-5.6M336.4 312.3l-.5 4.7M336.4 306.3l-.5-4.7M336.4 228l-.5 5.6M336.4 222l-.5-3.7M420.7 312.3l-1.4 4.7M420.7 306.3l-1.4-4.7"/>
<path stroke="#e80000" stroke-width="1.4" d="M203.2 309.3l-6.5 0M218.5 309.3l5.2 0M286.5 392.6l-5.8 .7M301.9 392.6l5.8 .7M286.5 309.3l-5.8 0M301.9 309.3l5.8 0M286.5 226l-5.8-.7M301.9 226l5.8-.7M369.9 309.3l-5.2 0M385.2 309.3l6.5 0M217.9 351.3l6.3-.3M202.4 351.3l-5-.3M217.9 267.3l6.3 .3M202.4 267.3l-5 .3M301.9 435.3l5.6-1M286.5 435.3l-5.6-1M301.9 351.3l5.6-.3M286.5 351.3l-5.6-.3M301.9 267.3l5.6 .3M286.5 267.3l-5.6 .3M301.9 183.3l5.6 1M286.5 183.3l-5.6 1M386 351.3l5-.3M370.5 351.3l-6.3-.3M386 267.3l5 .3M370.5 267.3l-6.3 .3M180.7 309.3l11.1 0M265.3 393.9l10.8-.3M265.3 309.3l10.8 0M238.5 309.3l-10.5 0M265.3 224.7l10.8 .3M323.1 393.9l-10.8-.3M349.9 309.3l10.5 0M323.1 309.3l-10.8 0M323.1 224.7l-10.8 .3M407.7 309.3l-11.1 0"/>
<g fill="url(#gO)"><circle cx="226.3" cy="350.9" r="2.9"/><circle cx="226.3" cy="267.7" r="2.9"/><circle cx="309.5" cy="434" r="2.9"/><circle cx="309.5" cy="350.9" r="2.9"/><circle cx="309.5" cy="267.7" r="2.9"/><circle cx="309.5" cy="184.6" r="2.9"/><circle cx="392.6" cy="350.9" r="2.9"/><circle cx="392.6" cy="267.7" r="2.9"/><circle cx="195.8" cy="350.9" r="2.9"/><circle cx="195.8" cy="267.7" r="2.9"/><circle cx="278.9" cy="434" r="2.9"/><circle cx="278.9" cy="350.9" r="2.9"/><circle cx="278.9" cy="267.7" r="2.9"/><circle cx="278.9" cy="184.6" r="2.9"/><circle cx="362.1" cy="350.9" r="2.9"/><circle cx="362.1" cy="267.7" r="2.9"/><circle cx="194.5" cy="309.3" r="2.9"/><circle cx="278.7" cy="393.5" r="2.9"/><circle cx="278.7" cy="309.3" r="2.9"/><circle cx="278.7" cy="225.1" r="2.9"/><circle cx="362.9" cy="309.3" r="2.9"/><circle cx="225.5" cy="309.3" r="2.9"/><circle cx="309.7" cy="393.5" r="2.9"/><circle cx="309.7" cy="309.3" r="2.9"/><circle cx="309.7" cy="225.1" r="2.9"/><circle cx="393.9" cy="309.3" r="2.9"/></g>
<path stroke="#c8c8c8" stroke-width="1.4" d="M172.6 309.3l8.1 0M257.3 394.1l7.9-.2M257.3 309.3l7.9 0M246.3 309.3l-7.7 0M257.3 224.5l7.9 .2M331.1 394.1l-7.9-.2M342.1 309.3l7.7 0M331.1 309.3l-7.9 0M331.1 224.5l-7.9 .2M415.8 309.3l-8.1 0M251.7 388.8l-.1-7.7M251.7 303.8l-.1-7.9M251.7 314.8l-.1 7.9M251.7 229.8l-.1 7.7M336.7 388.8l.1-7.7M336.7 303.8l.1-7.9M336.7 314.8l.1 7.9M336.7 229.8l.1 7.7M254.5 309.3l4.4 0M248.4 309.3l-5.4 0M340 309.3l5.4 0M333.9 309.3l-4.4 0"/>
<path stroke="#e80000" stroke-width="1.4" d="M252.2 359l-.7 7.2M252.2 343.6l-.7-5.9M252.2 275l-.7 5.9M252.2 259.6l-.7-7.2M336.2 359l.7 7.2M336.2 343.6l.7-5.9M336.2 275l.7 5.9M336.2 259.6l.7-7.2M200.5 309.3l-4.9 0M216.3 309.3l7.6 0M286.3 395.1l-6.2-1.3M302.1 395.1l6.2-1.3M286.3 309.3l-6.2 0M302.1 309.3l6.2 0M286.3 223.5l-6.2 1.3M302.1 223.5l6.2 1.3M372.1 309.3l-7.6 0M387.9 309.3l4.9 0M251.6 381.1l-.1-10.6M251.6 295.8l-.1-10.9M251.6 322.8l-.1 10.9M251.6 237.5l-.1 10.6M336.8 381.1l.1-10.6M336.8 295.8l.1-10.9M336.8 322.8l.1 10.9M336.8 237.5l.1 10.6M294.2 360.1l0 6.3M294.2 344.3l0-5.6M294.2 274.3l0 5.6M294.2 258.5l0-6.3M250.9 360.6l.3 5.5M250.9 344.6l.3-6.2M250.9 274l.3 6.2M250.9 258l.3-5.5M337.5 360.6l-.3 5.5M337.5 344.6l-.3-6.2M337.5 274l-.3 6.2M337.5 258l-.3-5.5"/>
<path stroke="#c8c8c8" stroke-width=".9" d="M161.5 309.3l-4.1 0M246.3 394.1l-4.2-.1M246.3 224.5l-4.2 .1M342.1 394.1l4.2-.1M342.1 224.5l4.2 .1M426.9 309.3l4.1 0M166.6 303.8l-.2-4.3M166.6 314.8l-.2 4.3M251.7 399.9l-.1 4.4M251.7 218.7l-.1-4.4M336.7 399.9l.1 4.4M336.7 218.7l.1-4.4M421.8 303.8l.2-4.3M421.8 314.8l.2 4.3M168.9 309.3l1.9 0M162.8 309.3l-3.6 0M254.5 394.9l2.5 .6M248.4 394.9l-3 .6M254.5 223.7l2.5-.6M248.4 223.7l-3-.6M340 394.9l3 .6M333.9 394.9l-2.5 .6M340 223.7l3-.6M333.9 223.7l-2.5-.6M425.6 309.3l3.6 0M419.5 309.3l-1.9 0"/>
<path stroke="#dc0000" stroke-width=".9" d="M166.4 299.4l-.4-11.2M166.4 319.2l-.4 11.2M251.6 404.4l-.1 11.5M251.6 214.2l-.1-11.5M336.8 404.4l.1 11.5M336.8 214.2l.1-11.5M422 299.4l.4-11.2M422 319.2l.4 11.2M208.6 357.9l-.8 7M208.6 346.3l-.8-6.2M208.6 272.3l-.8 6.2M208.6 260.7l-.8-7M294.2 443.5l0 7.8M294.2 431.9l0-5.5M294.2 186.7l0 5.5M294.2 175.1l0-7.8M379.8 357.9l.8 7M379.8 346.3l.8-6.2M379.8 272.3l.8 6.2M379.8 260.7l.8-7"/>
<path stroke="#0dd" stroke-width=".9" d="M208.8 355.9l-.2 2M208.8 348.1l-.2-1.8M208.8 270.5l-.2 1.8M208.8 262.7l-.2-2M294.2 441.3l0 2.2M294.2 433.5l0-1.6M294.2 185.1l0 1.6M294.2 177.3l0-2.2M379.6 355.9l.2 2M379.6 348.1l.2-1.8M379.6 270.5l.2 1.8M379.6 262.7l.2-2"/>
<path stroke="#0dd" stroke-width="1.4" d="M294.2 355.9l0 4.2M294.2 348.1l0-3.8M294.2 270.5l0 3.8M294.2 262.7l0-4.2"/>
<g fill="url(#gO)"><circle cx="251.4" cy="367.9" r="3"/><circle cx="251.4" cy="282.2" r="3"/><circle cx="337" cy="367.9" r="3"/><circle cx="337" cy="282.2" r="3"/><circle cx="251.4" cy="336.4" r="3"/><circle cx="251.4" cy="250.7" r="3"/><circle cx="337" cy="336.4" r="3"/><circle cx="337" cy="250.7" r="3"/></g>
<g fill="url(#gS)"><circle cx="209.3" cy="351.8" r="5.4"/><circle cx="209.3" cy="266.8" r="5.4"/><circle cx="294.2" cy="436.7" r="5.4"/><circle cx="294.2" cy="351.8" r="5.4"/><circle cx="294.2" cy="266.8" r="5.4"/><circle cx="294.2" cy="181.9" r="5.4"/><circle cx="379.1" cy="351.8" r="5.4"/><circle cx="379.1" cy="266.8" r="5.4"/></g>
<g fill="url(#gZ)"><circle cx="166.8" cy="309.3" r="5.9"/><circle cx="251.7" cy="394.2" r="5.9"/><circle cx="251.7" cy="309.3" r="5.9"/><circle cx="251.7" cy="224.4" r="5.9"/><circle cx="336.7" cy="394.2" r="5.9"/><circle cx="336.7" cy="309.3" r="5.9"/><circle cx="336.7" cy="224.4" r="5.9"/><circle cx="421.6" cy="309.3" r="5.9"/></g>
<path stroke="#c8c8c8" stroke-width="1.4" d="M204.2 309.3l-3.8 0M210.4 309.3l5.8 0M291.1 396.2l-4.8-1M297.3 396.2l4.8-1M291.1 309.3l-4.8 0M297.3 309.3l4.8 0M291.1 222.4l-4.8 1M297.3 222.4l4.8 1M378 309.3l-5.8 0M384.2 309.3l3.8 0M294.2 391l0-8.3M294.2 303.6l0-8.1M294.2 315l0 8.1M294.2 227.6l0 8.3M212.2 309.3l8 0M288.5 309.3l-8.2 0M299.9 309.3l8.2 0M376.2 309.3l-8 0"/>
<path stroke="#0dd" stroke-width="1.4" d="M250.7 356.8l.2 3.8M250.7 348.9l.2-4.2M250.7 269.7l.2 4.2M250.7 261.8l.2-3.8M337.7 356.8l-.2 3.8M337.7 348.9l-.2-4.2M337.7 269.7l-.2 4.2M337.7 261.8l-.2-3.8"/>
<path stroke="#dc0000" stroke-width=".9" d="M256.9 395.4l6.1 1.4M256.9 223.2l6.1-1.4M343.1 395.4l7.4 1.4M331.5 395.4l-6.1 1.4M343.1 223.2l7.4-1.4M331.5 223.2l-6.1-1.4M170.8 309.3l4.7 0M159.2 309.3l-8.8 0M245.3 395.4l-7.4 1.4M245.3 223.2l-7.4-1.4M429.2 309.3l8.8 0M417.6 309.3l-4.7 0M206.9 299.2l.3-11.3M206.9 319.4l.3 11.3M294.2 406.7l0 11M294.2 211.9l0-11M381.5 299.2l-.3-11.3M381.5 319.4l-.3 11.3M196.2 309.3l-11.9 0M284 397.1l-11.5 .3M304.4 397.1l11.5 .3M284 221.5l-11.5-.3M304.4 221.5l11.5-.3M392.2 309.3l11.9 0"/>
<path stroke="#e80000" stroke-width="1.4" d="M294.2 382.7l0-11.3M294.2 295.5l0-11M294.2 323.1l0 11M294.2 235.9l0 11.3M258.9 309.3l6 0M242.9 309.3l-7.4 0M345.5 309.3l7.4 0M329.5 309.3l-6 0M294.2 361.7l0 5.7M294.2 345.4l0-7.1M294.2 273.2l0 7.1M294.2 256.9l0-5.7"/>
<path stroke="#c8c8c8" stroke-width=".9" d="M206.8 303.6l.1-4.4M206.8 315l.1 4.4M294.2 402.4l0 4.3M294.2 216.2l0-4.3M381.6 303.6l-.1-4.4M381.6 315l-.1 4.4M200.8 309.3l-4.6 0M288.5 397l-4.5 .1M299.9 397l4.5 .1M288.5 221.6l-4.5-.1M299.9 221.6l4.5-.1M387.6 309.3l4.6 0"/>
<g fill="url(#gO)"><circle cx="294.2" cy="368.7" r="3"/><circle cx="294.2" cy="281.9" r="3"/><circle cx="294.2" cy="336.7" r="3"/><circle cx="294.2" cy="249.9" r="3"/></g>
<g fill="url(#gS)"><circle cx="250.4" cy="353.1" r="5.6"/><circle cx="250.4" cy="265.5" r="5.6"/><circle cx="338" cy="353.1" r="5.6"/><circle cx="338" cy="265.5" r="5.6"/></g>
<g fill="url(#gZ)"><circle cx="206.7" cy="309.3" r="6.1"/><circle cx="294.2" cy="396.8" r="6.1"/><circle cx="294.2" cy="309.3" r="6.1"/><circle cx="294.2" cy="221.8" r="6.1"/><circle cx="381.7" cy="309.3" r="6.1"/></g>
<path stroke="#e80000" stroke-width="1.5" d="M220.2 309.3l11 0M280.3 309.3l-11.3 0M308.1 309.3l11.3 0M368.2 309.3l-11 0M257.8 309.3l6.4 0M241.3 309.3l-5.6 0M347.1 309.3l5.6 0M330.6 309.3l-6.4 0"/>
<path stroke="#0dd" stroke-width=".9" d="M246.2 353.3l-2.1 .1M254.2 353.3l1.8 .1M246.2 265.3l-2.1-.1M254.2 265.3l1.8-.1M334.2 353.3l-1.8 .1M342.2 353.3l2.1 .1M334.2 265.3l-1.8-.1M342.2 265.3l2.1-.1"/>
<path stroke="#c8c8c8" stroke-width=".9" d="M206 312.4l-.6 2.8M206 306.2l-.6-2.8M294.2 400.6l0 3.5M294.2 394.4l0-2.2M294.2 224.2l0 2.2M294.2 218l0-3.5M382.4 312.4l.6 2.8M382.4 306.2l.6-2.8"/>
<path stroke="#dc0000" stroke-width=".9" d="M244.1 353.4l-7.2 .4M256 353.4l6.4 .4M244.1 265.2l-7.2-.4M256 265.2l6.4-.4M332.4 353.4l-6.4 .4M344.3 353.4l7.2 .4M332.4 265.2l-6.4-.4M344.3 265.2l7.2-.4M205.4 315.3l-1.5 7M205.4 303.3l-1.5-7M294.2 404.1l0 8.5M294.2 392.1l0-5.5M294.2 226.5l0 5.5M294.2 214.5l0-8.5M383 315.3l1.5 7M383 303.3l1.5-7M304.6 354.3l11.7-.2M283.8 354.3l-11.7-.2M304.6 264.3l11.7 .2M283.8 264.3l-11.7 .2"/>
<path stroke="#c8c8c8" stroke-width="1.5" d="M294.2 312.4l0 5.1M294.2 306.2l0-5.1M294.2 357.3l0 4.4M294.2 350.9l0-5.5M294.2 267.7l0 5.5M294.2 261.3l0-4.4"/>
<path stroke="#0dd" stroke-width="1.5" d="M253.4 309.3l4.4 0M245.2 309.3l-3.9 0M343.2 309.3l3.9 0M335 309.3l-4.4 0"/>
<g fill="url(#gO)"><circle cx="266.3" cy="309.3" r="3.1"/><circle cx="354.6" cy="309.3" r="3.1"/><circle cx="233.8" cy="309.3" r="3.1"/><circle cx="322.1" cy="309.3" r="3.1"/></g>
<path stroke="#e80000" stroke-width="1.5" d="M294.2 317.5l0 7M294.2 301.1l0-7M294.2 340.3l0-11.5M294.2 278.3l0 11.5M294.2 317.8l0 6.2M294.2 300.8l0-6.2"/>
<path stroke="#c8c8c8" stroke-width=".9" d="M300.1 354.4l4.6-.1M288.3 354.4l-4.6-.1M300.1 264.2l4.6 .1M288.3 264.2l-4.6 .1"/>
<path stroke="#c8c8c8" stroke-width="1" d="M294.2 360.4l0 4.7M294.2 258.2l0-4.7M297.4 354.8l2.9 .3M291 354.8l-2.9 .3M297.4 263.8l2.9-.3M291 263.8l-2.9-.3"/>
<path stroke="#c8c8c8" stroke-width="1.5" d="M294.2 348.6l0-8.3M294.2 270l0 8.3"/>
<path stroke="#dc0000" stroke-width="1" d="M294.2 365.1l0 12.1M294.2 253.5l0-12.1M248.7 315.4l-.4 7.1M248.7 303.2l-.4-7.1M339.7 315.4l.4 7.1M339.7 303.2l.4-7.1"/>
<path stroke="#0dd" stroke-width="1" d="M248.8 313.4l-.1 2M248.8 305.2l-.1-2M339.6 313.4l.1 2M339.6 305.2l.1-2"/>
<g fill="url(#gO)"><circle cx="294.2" cy="326.1" r="3.2"/><circle cx="294.2" cy="292.5" r="3.2"/></g>
<g fill="url(#gS)"><circle cx="249.1" cy="309.3" r="5.8"/><circle cx="339.3" cy="309.3" r="5.8"/></g>
<g fill="url(#gZ)"><circle cx="294.2" cy="354.4" r="6.3"/><circle cx="294.2" cy="264.2" r="6.3"/></g>
<path stroke="#0dd" stroke-width="1.5" d="M294.2 313.5l0 4.3M294.2 305.1l0-4.3"/>
<path stroke="#dc0000" stroke-width="1" d="M300.4 355.1l7.2 .8M288 355.1l-7.2 .8M300.4 263.5l7.2-.8M288 263.5l-7.2-.8"/>
<g fill="url(#gS)"><circle cx="294.2" cy="309.3" r="6"/></g>
<path stroke="#0dd" stroke-width="1" d="M289.9 309.3l-2.1 0M298.5 309.3l2.1 0"/>
<path stroke="#dc0000" stroke-width="1" d="M287.9 309.3l-7.3 0M300.5 309.3l7.3 0"/></g>
<path d="M51.4 132.3V113M51.4 132.3H70" fill="none" stroke="#cfcfcf" stroke-width="0.7"/>
<path d="M51.4 105.8l-2.3 8.4h4.6zM77 132.3l-8.2-2.2v4.4z" fill="#f2f2f2"/>
<text x="49.7" y="102.6" textLength="3.4" lengthAdjust="spacingAndGlyphs" font-size="6.6" fill="#e2e2e2">b</text>
<text x="81.8" y="134" textLength="3.6" lengthAdjust="spacingAndGlyphs" font-size="6.6" fill="#e2e2e2">a</text>
<rect x="549.6" y="481.6" width="21" height="46.3" fill="#000" stroke="#e8e8e8" stroke-width="0.9" rx="1.5"/>
<circle cx="556.6" cy="489" r="6.3" fill="url(#gZ)"/>
<circle cx="556.6" cy="504.5" r="6.3" fill="url(#gS)"/>
<circle cx="556.6" cy="520" r="6.3" fill="url(#gO)"/>
<text x="563.4" y="492" textLength="6.5" lengthAdjust="spacingAndGlyphs" font-size="7.5" fill="#fff">Zr</text>
<text x="563.4" y="507.5" textLength="5.5" lengthAdjust="spacingAndGlyphs" font-size="7.5" fill="#fff">Si</text>
<text x="563.4" y="523" textLength="5.5" lengthAdjust="spacingAndGlyphs" font-size="7.5" fill="#fff">O</text>
<path d="M5 2.2L7 0.2h5.5l2 2L9.7 7.6z" fill="#3a6fe0"/>
<path d="M7 .2L8.3 2.4 9.7 7.6 11.2 2.4 12.5.2M5 2.2h9.5" fill="none" stroke="#cfe0ff" stroke-width="0.6"/>
<text x="19.2" y="7.5" textLength="82.5" lengthAdjust="spacingAndGlyphs" font-size="10" fill="#9b9b9b">Diamond - [Diamond1]</text>
<path d="M6.8 18.2h5.2l2.6 2.6v7.4h-7.8z" fill="#fff" stroke="#1a1a1a" stroke-width="0.9"/>
<text x="7.6" y="27.5" textLength="5.5" lengthAdjust="spacingAndGlyphs" font-weight="bold" font-size="5.5" fill="#2a52d8">df</text>
<rect x="2.6" y="18.6" width="1.8" height="1.2" fill="#5c6b88"/>
<rect x="2.6" y="20.8" width="1.8" height="1.2" fill="#5c6b88"/>
<rect x="2.6" y="23" width="1.8" height="1.2" fill="#5c6b88"/>
<rect x="2.6" y="25.2" width="1.8" height="1.2" fill="#5c6b88"/>
<rect x="2.6" y="35.4" width="1.8" height="1.2" fill="#5c6b88"/>
<rect x="2.6" y="37.6" width="1.8" height="1.2" fill="#5c6b88"/>
<rect x="2.6" y="39.8" width="1.8" height="1.2" fill="#5c6b88"/>
<rect x="2.6" y="42" width="1.8" height="1.2" fill="#5c6b88"/>
<text x="23" y="25.7" textLength="12" lengthAdjust="spacingAndGlyphs" font-size="8.8" fill="#1d2b4d">File</text>
<text x="47.5" y="25.7" textLength="13" lengthAdjust="spacingAndGlyphs" font-size="8.8" fill="#1d2b4d">Edit</text>
<text x="73" y="25.7" textLength="17" lengthAdjust="spacingAndGlyphs" font-size="8.8" fill="#1d2b4d">View</text>
<text x="101.5" y="25.7" textLength="32.5" lengthAdjust="spacingAndGlyphs" font-size="8.8" fill="#1d2b4d">Structure</text>
<text x="146" y="25.7" textLength="25" lengthAdjust="spacingAndGlyphs" font-size="8.8" fill="#1d2b4d">Picture</text>
<text x="183" y="25.7" textLength="18" lengthAdjust="spacingAndGlyphs" font-size="8.8" fill="#1d2b4d">Build</text>
<text x="213.5" y="25.7" textLength="27" lengthAdjust="spacingAndGlyphs" font-size="8.8" fill="#1d2b4d">Objects</text>
<text x="252.5" y="25.7" textLength="20" lengthAdjust="spacingAndGlyphs" font-size="8.8" fill="#1d2b4d">Move</text>
<text x="285" y="25.7" textLength="18.5" lengthAdjust="spacingAndGlyphs" font-size="8.8" fill="#1d2b4d">Tools</text>
<text x="316" y="25.7" textLength="30" lengthAdjust="spacingAndGlyphs" font-size="8.8" fill="#1d2b4d">Window</text>
<text x="358" y="25.7" textLength="17" lengthAdjust="spacingAndGlyphs" font-size="8.8" fill="#1d2b4d">Help</text>
<path d="M19 54.5l5 5m0-5l-5 5" fill="none" stroke="#555" stroke-width="1"/>
<path d="M31.5 55l4.5 4.5m0-3.6v3.6h-3.6" fill="none" stroke="#555" stroke-width="0.9"/>
<text x="49.5" y="60.8" textLength="11" lengthAdjust="spacingAndGlyphs" fill="#7a7a7a">No.</text>
<text x="63.3" y="60.8" textLength="4" lengthAdjust="spacingAndGlyphs" fill="#151515">1</text>
<text x="76" y="60.8" textLength="16" lengthAdjust="spacingAndGlyphs" fill="#7a7a7a">Title</text>
<text x="93.7" y="60.8" textLength="37.3" lengthAdjust="spacingAndGlyphs" fill="#151515">Structure 1</text>
<text x="140" y="60.8" textLength="14" lengthAdjust="spacingAndGlyphs" fill="#7a7a7a">Pics</text>
<text x="156" y="60.8" textLength="4" lengthAdjust="spacingAndGlyphs" fill="#151515">2</text>
<text x="168.7" y="60.8" textLength="18.5" lengthAdjust="spacingAndGlyphs" fill="#7a7a7a">Code</text>
<text x="189" y="60.8" textLength="28" lengthAdjust="spacingAndGlyphs" fill="#151515">9000684</text>
<text x="226" y="60.8" textLength="46" lengthAdjust="spacingAndGlyphs" fill="#7a7a7a">Formula sum</text>
<text x="274.5" y="60.8" textLength="27" lengthAdjust="spacingAndGlyphs" fill="#151515">O4 Si Zr</text>
<text x="310.5" y="60.8" textLength="42" lengthAdjust="spacingAndGlyphs" fill="#7a7a7a">HM symbol</text>
<text x="355" y="60.8" textLength="35" lengthAdjust="spacingAndGlyphs" fill="#151515">I 41/a m d</text>
<text x="397.5" y="60.8" textLength="27.5" lengthAdjust="spacingAndGlyphs" fill="#7a7a7a">SGR no.</text>
<text x="427" y="60.8" textLength="11.5" lengthAdjust="spacingAndGlyphs" fill="#151515">141</text>
<text x="447.5" y="60.8" textLength="54.5" lengthAdjust="spacingAndGlyphs" fill="#7a7a7a">Cell parameters</text>
<text x="504.5" y="60.8" textLength="119" lengthAdjust="spacingAndGlyphs" fill="#151515">6.604,6.604,5.980,90.00,90.00,90.00</text>
<rect x="15.2" y="69.4" width="558" height="16.2" fill="#f4f4f4"/>
<rect x="15.2" y="85.3" width="558" height="0.9" fill="#b4b4b4"/>
<rect x="31.6" y="70.5" width="0.8" height="15" fill="#cfcfcf"/>
<rect x="19.5" y="75.5" width="1.6" height="1.6" fill="#666"/>
<rect x="22.3" y="75.5" width="1.6" height="1.6" fill="#666"/>
<rect x="19.5" y="78.3" width="1.6" height="1.6" fill="#666"/>
<rect x="22.3" y="78.3" width="1.6" height="1.6" fill="#666"/>
<rect x="32.4" y="70.8" width="123" height="15.6" fill="url(#tab)"/>
<rect x="155.4" y="71" width="0.9" height="15" fill="#7d7d7d"/>
<text x="50" y="81" textLength="84.5" lengthAdjust="spacingAndGlyphs" font-size="7.8" fill="#111">Unit cell with SiO4 spheres</text>
<rect x="160.4" y="72.2" width="25.2" height="13.4" fill="#f2f2f2" stroke="#8e8e8e" stroke-width="0.8"/>
<rect x="176" y="72.6" width="0.7" height="12.6" fill="#cfcfcf"/>
<rect x="164" y="74.6" width="8.6" height="7.6" fill="#f4f8fe" stroke="#3a4ea0" stroke-width="0.9"/>
<rect x="164" y="74.6" width="8.6" height="2" fill="#4a70e0"/>
<circle cx="164.2" cy="74.4" r="1.9" fill="#f2e04a"/>
<path d="M178.8 78h3.8l-1.9 2.1z" fill="#8a8a8a"/>
<path d="M563.6 76.9l2.4 2.3-2.4 2.3M567 76.9l2.4 2.3-2.4 2.3" fill="none" stroke="#666" stroke-width="1"/>
<text x="1.8" y="560" textLength="61.5" lengthAdjust="spacingAndGlyphs" font-size="9.4" fill="#e3e8f2">For Help, press F1</text>
<text x="583" y="80.8" textLength="36.5" lengthAdjust="spacingAndGlyphs" fill="#111">Data sheet</text>
<path d="M623.5 81.5h3l-1.5 1.6z" fill="#999"/>
<rect x="2.3" y="53.6" width="8.6" height="8.6" fill="#e8ecf6" stroke="#8fa6e0" stroke-width="0.8"/>
<rect x="4.2" y="56.5" width="4" height="4.5" fill="#fff" stroke="#777" stroke-width="0.6"/>
<rect x="2.3" y="111.5" width="8.6" height="9.6" fill="#cfd6e6" stroke="#8fa6e0" stroke-width="0.8"/>
<circle cx="6.6" cy="117" r="2.6" fill="#e8e8e8" stroke="#777" stroke-width="0.6"/>
<circle cx="7.2" cy="113.6" r="1.5" fill="#3c3"/>
<rect x="2.3" y="188.2" width="8.6" height="9.6" fill="#fff" stroke="#8fa6e0" stroke-width="0.8"/>
<path d="M8.6 191.2h-3a2 2 0 0 0 0 4h2.4" fill="none" stroke="#2c55c8" stroke-width="1.3"/>
<text x="3" y="65.8" textLength="38" lengthAdjust="spacingAndGlyphs" font-size="8.2" fill="#e9edf5" transform="rotate(90 3 65.8)">Navigation</text>
<text x="3" y="124.4" textLength="57" lengthAdjust="spacingAndGlyphs" font-size="8.2" fill="#e9edf5" transform="rotate(90 3 124.4)">Recent Pictures</text>
<text x="3" y="201" textLength="42" lengthAdjust="spacingAndGlyphs" font-size="8.2" fill="#e9edf5" transform="rotate(90 3 201)">Undo Buffer</text>
<path d="M10 35.5h4.5l2.5 2.5v7h-7z" fill="#fff" stroke="#44558a" stroke-width="0.7"/><circle cx="9.6" cy="35.8" r="2.1" fill="#f4dc52"/><path d="M23.5 44.6v-7.5h3.5l1 1.2h4.5v6.3z" fill="#e9b53a" stroke="#a57a18" stroke-width="0.6"/><path d="M23.5 44.6l2.2-5h8.8l-2.5 5z" fill="#f8d568" stroke="#a57a18" stroke-width="0.5"/><rect x="38.5" y="35.3" width="9.6" height="9.4" fill="#3b45c8" stroke="#262c8c" stroke-width="0.6"/><rect x="40.3" y="35.5" width="6" height="3.6" fill="#dfe6fa"/><rect x="40.8" y="41" width="4.6" height="3.6" fill="#1c1c50"/><rect x="41.6" y="41.8" width="1.4" height="2.2" fill="#fff"/><rect x="52.8" y="37.5" width="4.3" height="7" fill="#2b55b8" rx="1"/><rect x="58.3" y="37.5" width="4.3" height="7" fill="#2b55b8" rx="1"/><rect x="53.6" y="35.2" width="2.6" height="3" fill="#3c66c8"/><rect x="59.1" y="35.2" width="2.6" height="3" fill="#3c66c8"/><rect x="56.8" y="38.6" width="1.8" height="2.4" fill="#1b3a88"/><rect x="53.4" y="42" width="3" height="1.6" fill="#cfe0ff"/><rect x="58.9" y="42" width="3" height="1.6" fill="#cfe0ff"/><path d="M68.5 35.3h5l2 2v7.5h-7z" fill="#fff" stroke="#555f85" stroke-width="0.7"/><circle cx="74.5" cy="40.6" r="2.6" fill="#dfeaf6" stroke="#6a6a80" stroke-width="0.8"/><path d="M76.3 42.6l2 2" fill="none" stroke="#d28a1e" stroke-width="1.3"/><rect x="84.5" y="35.5" width="6.5" height="4" fill="#fff" stroke="#8a8fa8" stroke-width="0.6"/><rect x="82.6" y="39" width="10.6" height="4.6" fill="#d3d7e3" stroke="#6f7690" stroke-width="0.6" rx="1"/><rect x="84.2" y="42.2" width="7.4" height="2.6" fill="#fff" stroke="#8a8fa8" stroke-width="0.5"/><circle cx="90.6" cy="41.2" r="0.9" fill="#2dbb3a"/><rect x="96.2" y="33.8" width="0.8" height="13" fill="#8c99b3"/><rect x="97.0" y="33.8" width="0.6" height="13" fill="#d6deeb"/><path d="M104.6 35.6l4 7M109.4 35.6l-4 7" fill="none" stroke="#9aa1ae" stroke-width="0.9"/><circle cx="104.6" cy="43.6" r="1.4" fill="none" stroke="#9aa1ae" stroke-width="0.8"/><circle cx="109.4" cy="43.6" r="1.4" fill="none" stroke="#9aa1ae" stroke-width="0.8"/><rect x="116.4" y="35.4" width="6" height="6.6" fill="#e6effc" stroke="#4c60a8" stroke-width="0.6"/><rect x="120" y="38" width="6.4" height="6.8" fill="#cfe0fa" stroke="#3447b0" stroke-width="0.7"/><rect x="121" y="41.6" width="4.4" height="2.6" fill="#4b6fe0"/><rect x="131.4" y="36.6" width="6.4" height="7.8" fill="#b9bfcb" stroke="#9aa1ae" stroke-width="0.6"/><rect x="133" y="35.4" width="3.2" height="2" fill="#a9afbb"/><rect x="135" y="39.4" width="6" height="5.4" fill="#cdd2dc" stroke="#a3a9b6" stroke-width="0.6"/><rect x="144.4" y="33.8" width="0.8" height="13" fill="#8c99b3"/><rect x="145.20000000000002" y="33.8" width="0.6" height="13" fill="#d6deeb"/><path d="M152 39.2c1-4 7-4 7.2-.2c.2 3-2 4.2-3.6 5.2" fill="none" stroke="#2c58d0" stroke-width="1.9"/><path d="M150.6 37.6l4.6-.6-2.6 3.8z" fill="#2c58d0"/><path d="M164 39.6h4l-2 2.2z" fill="#3a4660"/><path d="M181 39.2c-1-4-7-4-7.2-.2c-.2 3 2 4.2 3.6 5.2" fill="none" stroke="#a3aab8" stroke-width="1.7"/><path d="M182.4 37.6l-4.6-.6 2.6 3.8z" fill="#a3aab8"/><path d="M186 39.6h4l-2 2.2z" fill="#98a0b2"/><rect x="193" y="33.8" width="0.8" height="13" fill="#8c99b3"/><rect x="193.8" y="33.8" width="0.6" height="13" fill="#d6deeb"/><rect x="200.6" y="36.6" width="1.5" height="5.5" fill="#f4f8ff" stroke="#2f59b5" stroke-width="0.5" rx="0.7"/><rect x="202.5" y="35.6" width="1.5" height="5.5" fill="#f4f8ff" stroke="#2f59b5" stroke-width="0.5" rx="0.7"/><rect x="204.4" y="35.9" width="1.5" height="5.5" fill="#f4f8ff" stroke="#2f59b5" stroke-width="0.5" rx="0.7"/><rect x="206.2" y="37" width="1.5" height="5.5" fill="#f4f8ff" stroke="#2f59b5" stroke-width="0.5" rx="0.7"/><path d="M200.2 40.2h7.6v2.2c0 2-1.2 3.2-2.8 3.2h-2.2c-1.2 0-1.8-.8-2.6-2l-1.8-2.8c.6-.8 1.4-.6 1.8 0z" fill="#f4f8ff" stroke="#2f59b5" stroke-width="0.6"/><path d="M214.4 35.6v8l2-1.8 1.6 3.2 1-.5-1.5-3.1h2.6z" fill="#eef0f5" stroke="#8e95a6" stroke-width="0.6"/><path d="M227 39.6h4l-2 2.2z" fill="#3a4660"/><rect x="234.2" y="33.8" width="0.8" height="13" fill="#8c99b3"/><rect x="235.0" y="33.8" width="0.6" height="13" fill="#d6deeb"/><rect x="239.5" y="35.3" width="10.5" height="9" fill="#fff" stroke="#4058a8" stroke-width="0.7"/><rect x="239.8" y="35.599999999999994" width="9.9" height="2" fill="#4a6fd8"/><rect x="242.5" y="39.4" width="4.6" height="3.4" fill="#f7f1c8" stroke="#9a9a70" stroke-width="0.5"/><rect x="254" y="35.3" width="10.5" height="9" fill="#d9dde4" stroke="#4058a8" stroke-width="0.7"/><rect x="254.3" y="35.599999999999994" width="9.9" height="2" fill="#4a6fd8"/><circle cx="256.8" cy="38.2" r="1.5" fill="#3fbf3f"/><rect x="258.5" y="38.6" width="4.4" height="4.4" fill="#e8eef8" stroke="#7a8bb0" stroke-width="0.5"/><rect x="268.5" y="35.3" width="10.5" height="9" fill="#fff" stroke="#4058a8" stroke-width="0.7"/><rect x="268.8" y="35.599999999999994" width="9.9" height="2" fill="#4a6fd8"/><path d="M276 40c-1-2.6-4-2.6-4.4 0c0 1.6 1.2 2.6 2.4 2.8" fill="none" stroke="#2c58d0" stroke-width="1.3"/><path d="M270.6 38.6l2.8-.4-1.4 2.4z" fill="#2c58d0"/><rect x="282.4" y="33.8" width="0.8" height="13" fill="#8c99b3"/><rect x="283.2" y="33.8" width="0.6" height="13" fill="#d6deeb"/><rect x="287.6" y="35.6" width="9.6" height="7.4" fill="#fff" stroke="#4058a8" stroke-width="0.7"/><rect x="287.90000000000003" y="35.9" width="9.0" height="2" fill="#4a6fd8"/><rect x="291.4" y="39.8" width="6.8" height="5.4" fill="#f0b820" stroke="#c08a10" stroke-width="0.5"/><path d="M293.7 39.8v5.4M296 39.8v5.4M291.4 41.6h6.8M291.4 43.4h6.8" fill="none" stroke="#fbe08a" stroke-width="0.5"/><rect x="302.4" y="35.8" width="9.4" height="7.4" fill="#cfd5df" stroke="#9aa3b5" stroke-width="0.7"/><rect x="302.7" y="36.099999999999994" width="8.8" height="2" fill="#a9b1c0"/><path d="M308.6 41.4h3.6v-1.6l2.4 2.6-2.4 2.6v-1.6h-3.6z" fill="#bcc3cf" stroke="#9aa3b5" stroke-width="0.4"/><rect x="317.4" y="35.8" width="9.4" height="7.4" fill="#cfd5df" stroke="#9aa3b5" stroke-width="0.7"/><rect x="317.7" y="36.099999999999994" width="8.8" height="2" fill="#a9b1c0"/><path d="M323.6 41.4h3.6v-1.6l2.4 2.6-2.4 2.6v-1.6h-3.6z" fill="#bcc3cf" stroke="#9aa3b5" stroke-width="0.4"/><rect x="331.4" y="33.8" width="0.8" height="13" fill="#8c99b3"/><rect x="332.2" y="33.8" width="0.6" height="13" fill="#d6deeb"/><rect x="336.2" y="36.2" width="2.8" height="3.3" fill="#111" rx="0.6"/><rect x="336.2" y="40.2" width="2.8" height="3.3" fill="#111" rx="0.6"/><rect x="339.7" y="36.2" width="2.8" height="3.3" fill="#111" rx="0.6"/><rect x="339.7" y="40.2" width="2.8" height="3.3" fill="#111" rx="0.6"/><rect x="343.2" y="36.2" width="2.8" height="3.3" fill="#111" rx="0.6"/><rect x="343.2" y="40.2" width="2.8" height="3.3" fill="#111" rx="0.6"/><path d="M350 39.6h4l-2 2.2z" fill="#3a4660"/><path d="M358.4 35.2h3.6l.8 1h6.8v8.6h-11.2z" fill="#5f86d8" stroke="#3b57a0" stroke-width="0.5"/><rect x="358.6" y="36.8" width="10.8" height="7.2" fill="#0a0a0a"/><circle cx="365.4" cy="40.4" r="1.8" fill="none" stroke="#e01818" stroke-width="1.1"/><rect x="358.4" y="44" width="11.2" height="1" fill="#ddd"/><rect x="375" y="36.2" width="9.6" height="8.2" fill="#f4f8ff" stroke="#5a70b8" stroke-width="0.7"/><rect x="375.3" y="36.5" width="9.0" height="2" fill="#7da0ee"/><circle cx="374.6" cy="36.2" r="2.2" fill="#f4dc52"/><rect x="388" y="35.8" width="7" height="5.6" fill="#e6effc" stroke="#6678b0" stroke-width="0.7"/><rect x="388.3" y="36.099999999999994" width="6.4" height="2" fill="#7da0ee"/><rect x="391.6" y="38.8" width="7" height="6" fill="#e89a30" stroke="#3b4f9a" stroke-width="0.7"/><rect x="391.90000000000003" y="39.099999999999994" width="6.4" height="2" fill="#2c58d0"/><rect x="402.2" y="35.2" width="7" height="4.6" fill="#d9b84a" stroke="#8a7320" stroke-width="0.5"/><rect x="404.2" y="37.4" width="9" height="3.2" fill="#f0b820"/><rect x="405.8" y="40" width="7.4" height="5.6" fill="#e07a20" stroke="#222" stroke-width="0.7"/><rect x="406.1" y="40.3" width="6.800000000000001" height="2" fill="#1a1a1a"/><circle cx="422.6" cy="40.8" r="3.8" fill="#eef1f6" stroke="#8b93a6" stroke-width="0.8"/><path d="M419.4 39.2c.6-3 3.8-4 6-2.6" fill="none" stroke="#35b535" stroke-width="1.8"/><path d="M418.4 38l1 3.6 2.6-2.6z" fill="#35b535"/><path d="M431.6 39.6h4l-2 2.2z" fill="#3a4660"/><rect x="443" y="35.4" width="7" height="6.6" fill="#c5cad5" stroke="#a0a7b6" stroke-width="0.6"/><path d="M446 41.6h-3.4v-1.6l-2.6 2.6 2.6 2.6v-1.6h3.4z" fill="#aab1bf" stroke="#99a0b0" stroke-width="0.4"/><rect x="454.6" y="35.4" width="7" height="6.6" fill="#c5cad5" stroke="#a0a7b6" stroke-width="0.6"/><path d="M458.4 41.6h3.4v-1.6l2.6 2.6-2.6 2.6v-1.6h-3.4z" fill="#aab1bf" stroke="#99a0b0" stroke-width="0.4"/><path d="M468.4 39.6h4l-2 2.2z" fill="#98a0b2"/><rect x="475.4" y="33.8" width="0.8" height="13" fill="#8c99b3"/><rect x="476.2" y="33.8" width="0.6" height="13" fill="#d6deeb"/><rect x="480.4" y="36" width="9.8" height="8.2" fill="#fff" stroke="#4058a8" stroke-width="0.7"/><rect x="480.7" y="36.3" width="9.200000000000001" height="2" fill="#4a6fd8"/><rect x="482" y="39.6" width="6.6" height="2.4" fill="#c9c9c9"/><rect x="495.2" y="36" width="9.8" height="8.2" fill="#fff" stroke="#4058a8" stroke-width="0.7"/><rect x="495.5" y="36.3" width="9.200000000000001" height="2" fill="#4a6fd8"/><circle cx="497.6" cy="39.6" r="1.3" fill="#e81818"/><circle cx="497.6" cy="42.4" r="1.3" fill="#1838e8"/><rect x="500" y="39" width="3.6" height="1.4" fill="#bbb"/><rect x="500" y="41.8" width="3.6" height="1.4" fill="#bbb"/><rect x="510" y="36" width="9.8" height="8.2" fill="#fff" stroke="#4058a8" stroke-width="0.7"/><rect x="510.3" y="36.3" width="9.200000000000001" height="2" fill="#4a6fd8"/><path d="M510 40.2h9.8M510 42.2h9.8M513.3 38.2v6M516.6 38.2v6" fill="none" stroke="#b8b8b8" stroke-width="0.5"/><path d="M524.6 39.6h4l-2 2.2z" fill="#3a4660"/><rect x="532.2" y="36" width="9.8" height="8.2" fill="#fff" stroke="#4058a8" stroke-width="0.7"/><rect x="532.5" y="36.3" width="9.200000000000001" height="2" fill="#4a6fd8"/><path d="M533.6 43h2l1.4-4.2 1.4 4.2h2.2" fill="none" stroke="#111" stroke-width="0.8"/><rect x="547" y="36" width="9.8" height="8.2" fill="#fff" stroke="#4058a8" stroke-width="0.7"/><rect x="547.3" y="36.3" width="9.200000000000001" height="2" fill="#4a6fd8"/><path d="M548 43h1.4l1-4 1 4h.8l1-4 1 4h1.6" fill="none" stroke="#1838e8" stroke-width="0.9"/><rect x="562" y="36" width="9.8" height="8.2" fill="#fff" stroke="#4058a8" stroke-width="0.7"/><rect x="562.3" y="36.3" width="9.200000000000001" height="2" fill="#4a6fd8"/><rect x="563" y="38.4" width="3.4" height="5.4" fill="#9a9a9a"/><rect x="566.6" y="38.4" width="4.6" height="2" fill="#e07a20"/><rect x="566.6" y="40.4" width="4.6" height="1.8" fill="#e8a030"/><rect x="566.6" y="42.2" width="4.6" height="1.6" fill="#f0d040"/><rect x="576.4" y="33.8" width="0.8" height="13" fill="#8c99b3"/><rect x="577.1999999999999" y="33.8" width="0.6" height="13" fill="#d6deeb"/><circle cx="586" cy="40.2" r="5" fill="#dfe6f2" stroke="#8b98b8" stroke-width="0.7"/><path d="M584 44l1.6-6.6h2.2c2.6 0 2.6 3.6-.6 3.8h-1.4" fill="none" stroke="#2a52c0" stroke-width="1.5"/><path d="M597 36.4l6 5.6M603 36.4l-6 5.6" fill="none" stroke="#111" stroke-width="1.2"/><circle cx="597" cy="36.4" r="1.3" fill="#111"/><circle cx="603" cy="36.4" r="1.3" fill="#111"/><circle cx="600" cy="39.2" r="1.3" fill="#111"/><circle cx="596.8" cy="42.2" r="1.3" fill="#111"/><circle cx="603.6" cy="43" r="2" fill="#e81010"/><path d="M610.2 39.6h4l-2 2.2z" fill="#3a4660"/><path d="M619.8 46h2.6l-1.3 1.5z" fill="#8a93a8"/><rect x="3" y="537.1" width="1.8" height="1.2" fill="#5c6b88"/><rect x="3" y="539.3000000000001" width="1.8" height="1.2" fill="#5c6b88"/><rect x="3" y="541.5" width="1.8" height="1.2" fill="#5c6b88"/><rect x="3" y="543.7" width="1.8" height="1.2" fill="#5c6b88"/><rect x="9.6" y="535.9" width="9.6" height="9.6" fill="#f4f8ff" stroke="#6678b0" stroke-width="0.7"/><rect x="9.9" y="536.1999999999999" width="9.0" height="2" fill="#7da0ee"/><path d="M12 541.1a2.6 2.6 0 1 1 1 2.4" fill="none" stroke="#e0a818" stroke-width="1.5"/><rect x="23.2" y="536.1" width="9" height="7.6" fill="#fff" stroke="#222" stroke-width="0.7"/><rect x="23.5" y="536.4" width="8.4" height="2" fill="#22306a"/><path d="M27.4 542.5h3.4v-1.6l2.8 2.6-2.8 2.6v-1.6h-3.4z" fill="#19d0e0" stroke="#066" stroke-width="0.4"/><path d="M42 537.1l5.4 6.4" fill="none" stroke="#1a2a7a" stroke-width="1.6"/><circle cx="39.6" cy="540.3" r="1.5" fill="#e8d818"/><circle cx="39.6" cy="544.1" r="1.5" fill="#e8d818"/><circle cx="42.6" cy="542.3" r="1.4" fill="#c8b810"/><path d="M44 536.5l2.4 1M46.6 536.3l-1 2.2" fill="none" stroke="#222" stroke-width="0.7"/><rect x="55" y="536.3" width="8" height="7.6" fill="#fff" stroke="#aaa" stroke-width="0.4"/><path d="M53.4 545.5l5-6.2" fill="none" stroke="#a01818" stroke-width="1.3"/><path d="M56.4 537.9l4.6 2.8" fill="none" stroke="#e8c818" stroke-width="2.2"/><path d="M67.2 540.1h4l-2 2.2z" fill="#5a6478"/><rect x="74" y="534.7" width="0.8" height="13" fill="#8c99b3"/><rect x="74.8" y="534.7" width="0.6" height="13" fill="#d6deeb"/><path d="M80.6 541.3l3.6-4.2 5.2 3-3.6 4.6z" fill="#c9cdd6" stroke="#111" stroke-width="1"/><path d="M83 540.1l3.4 2 1.6-2" fill="none" stroke="#e8e040" stroke-width="1.8"/><path d="M99.4 536.3v9M95 540.5h9" fill="none" stroke="#111" stroke-width="0.8"/><circle cx="97" cy="538.5" r="1.9" fill="#f0e018" stroke="#8a8000" stroke-width="0.4"/><circle cx="102" cy="538.5" r="1.9" fill="#f0e018" stroke="#8a8000" stroke-width="0.4"/><circle cx="97" cy="543.3" r="1.9" fill="#f0e018" stroke="#8a8000" stroke-width="0.4"/><circle cx="102" cy="543.3" r="1.9" fill="#f0e018" stroke="#8a8000" stroke-width="0.4"/><path d="M108.4 540.9h4M110.4 538.9v4" fill="none" stroke="#111" stroke-width="1.1"/><path d="M112 540.9h3" fill="none" stroke="#111" stroke-width="0.8"/><circle cx="116.4" cy="540.9" r="2.2" fill="#f0e018" stroke="#8a8000" stroke-width="0.4"/><circle cx="124.8" cy="543.6999999999999" r="1.5" fill="none" stroke="#111" stroke-width="0.8"/><circle cx="131" cy="543.6999999999999" r="1.5" fill="none" stroke="#111" stroke-width="0.8"/><path d="M126.2 538.3c0-2.2 3.8-2.2 3.8 0 0 1.6-1.9 1.6-1.9 3.2" fill="none" stroke="#111" stroke-width="1.1"/><circle cx="128.1" cy="543.3" r="0.7" fill="#111"/><path d="M139.6 537.3l7 6.4M146.6 537.3l-7 6.4M139.6 537.3h7v6.4h-7z" fill="none" stroke="#2848e0" stroke-width="0.8"/><circle cx="139.6" cy="537.3" r="1.1" fill="#dfe6f5" stroke="#111" stroke-width="0.6"/><circle cx="146.6" cy="537.3" r="1.1" fill="#dfe6f5" stroke="#111" stroke-width="0.6"/><circle cx="139.6" cy="543.6999999999999" r="1.1" fill="#dfe6f5" stroke="#111" stroke-width="0.6"/><circle cx="146.6" cy="543.6999999999999" r="1.1" fill="#dfe6f5" stroke="#111" stroke-width="0.6"/><circle cx="155.4" cy="543.3" r="1.6" fill="none" stroke="#9aa2b2" stroke-width="0.8"/><circle cx="160.6" cy="543.3" r="1.6" fill="none" stroke="#9aa2b2" stroke-width="0.8"/><circle cx="158" cy="538.5" r="1.6" fill="none" stroke="#9aa2b2" stroke-width="0.8"/><path d="M157.4 539.9l-1.4 3M158.6 539.9l1.4 3" fill="none" stroke="#9aa2b2" stroke-width="0.7"/><circle cx="172.8" cy="540.9" r="3.6" fill="#f4f4e0" stroke="#555" stroke-width="0.6"/><circle cx="172.8" cy="540.9" r="1.8" fill="#111"/><circle cx="172.8" cy="540.9" r="2.7" fill="none" stroke="#c8b010" stroke-width="0.7"/><path d="M182.4 540.1h4l-2 2.2z" fill="#5a6478"/><rect x="188.2" y="534.7" width="0.8" height="13" fill="#8c99b3"/><rect x="189.0" y="534.7" width="0.6" height="13" fill="#d6deeb"/><polygon points="202.6,540.9 200.5,544.5 196.3,544.5 194.2,540.9 196.3,537.3 200.5,537.3" fill="none" stroke="#1838e0" stroke-width="1.3"/><polygon points="217.6,540.9 215.5,544.5 211.3,544.5 209.2,540.9 211.3,537.3 215.5,537.3" fill="none" stroke="#e8d818" stroke-width="1.3"/><path d="M225.6 538.9c0-2.4 7-2.4 7 0s-7 2.4-7 0M225.6 542.5c0-2.4 7-2.4 7 0s-7 2.4-7 0" fill="none" stroke="#1838e0" stroke-width="0.9"/><path d="M229 538.5v5" fill="none" stroke="#1838e0" stroke-width="0.8"/><path d="M240 537.3l7.4 7M247.4 537.3l-7.4 7" fill="none" stroke="#111" stroke-width="1"/><path d="M240 538.5h7.4M240 543.3h7.4" fill="none" stroke="#2848e0" stroke-width="0.9" stroke-dasharray="1.2 1"/><path d="M255 537.3l7.4 7M262.4 537.3l-7.4 7" fill="none" stroke="#111" stroke-width="1"/><path d="M255 538.5h7.4M255 543.3h7.4M256 537.3v7M261.4 537.3v7" fill="none" stroke="#e01818" stroke-width="0.9" stroke-dasharray="1.2 1"/><rect x="266.8" y="534.7" width="0.8" height="13" fill="#8c99b3"/><rect x="267.6" y="534.7" width="0.6" height="13" fill="#d6deeb"/><path d="M273.6 543.9l5.6-5.6" fill="none" stroke="#1a2a7a" stroke-width="1.2"/><circle cx="279.6" cy="538.1" r="1.6" fill="#f0e018" stroke="#8a8000" stroke-width="0.4"/><circle cx="273.6" cy="544.1" r="1.2" fill="#2848e0"/><path d="M288.6 537.9l7 6M295.6 537.9l-7 6" fill="none" stroke="#111" stroke-width="0.9"/><path d="M289.4 538.9h5.6v4h-5.6z" fill="none" stroke="#2848e0" stroke-width="0.8"/><circle cx="288.6" cy="537.9" r="1.2" fill="#f0e018" stroke="#8a8000" stroke-width="0.3"/><circle cx="295.6" cy="537.9" r="1.2" fill="#f0e018" stroke="#8a8000" stroke-width="0.3"/><circle cx="288.6" cy="543.9" r="1.2" fill="#f0e018" stroke="#8a8000" stroke-width="0.3"/><circle cx="295.6" cy="543.9" r="1.2" fill="#f0e018" stroke="#8a8000" stroke-width="0.3"/><circle cx="309" cy="538.6999999999999" r="2.2" fill="none" stroke="#d8c818" stroke-width="0.9"/><circle cx="306" cy="543.3" r="2" fill="none" stroke="#555" stroke-width="0.8"/><path d="M307 541.6999999999999l1.2-2.2" fill="none" stroke="#555" stroke-width="0.7"/><circle cx="324" cy="538.6999999999999" r="2.2" fill="none" stroke="#9aa2b2" stroke-width="0.9"/><circle cx="321" cy="543.3" r="2" fill="none" stroke="#9aa2b2" stroke-width="0.8"/><path d="M322 541.6999999999999l1.2-2.2" fill="none" stroke="#9aa2b2" stroke-width="0.7"/><rect x="330.8" y="534.7" width="0.8" height="13" fill="#8c99b3"/><rect x="331.6" y="534.7" width="0.6" height="13" fill="#d6deeb"/><rect x="335.6" y="537.5" width="7" height="7.6" fill="none" stroke="#1838e0" stroke-width="1"/><path d="M335.6 537.5l2-1.6h7v7.6l-2 1.6M342.6 537.5l2-1.6" fill="none" stroke="#1838e0" stroke-width="0.8"/><circle cx="355" cy="540.9" r="3.6" fill="none" stroke="#555" stroke-width="0.8"/><path d="M355 536.1v9.6M350.2 540.9h9.6" fill="none" stroke="#555" stroke-width="0.7"/><path d="M366 538.3l8.4 5M374.4 538.3l-8.4 5" fill="none" stroke="#e01818" stroke-width="1.4"/><path d="M365.6 539.9c3-3 6-3 9 0" fill="none" stroke="#d8c018" stroke-width="1.2"/><circle cx="370.2" cy="540.9" r="1.2" fill="#111"/><path d="M379.6 540.1h4l-2 2.2z" fill="#5a6478"/><circle cx="389.4" cy="543.5" r="1.5" fill="none" stroke="#7a8296" stroke-width="0.8"/><path d="M390.4 542.3l1.6-3.6" fill="none" stroke="#7a8296" stroke-width="0.8"/><text x="392" y="540.9" textLength="5.4" lengthAdjust="spacingAndGlyphs" font-size="5" fill="#444">Fe</text><rect x="401.8" y="534.7" width="0.8" height="13" fill="#8c99b3"/><rect x="402.6" y="534.7" width="0.6" height="13" fill="#d6deeb"/><rect x="406.2" y="536.3" width="9.8" height="9.4" fill="#1a1a1a" stroke="#2848e0" stroke-width="0.9"/><circle cx="411.1" cy="541.0" r="3.4" fill="#f0e018"/><path d="M411.1 541.0l-3 -1.8M411.1 541.0l3-1.8M411.1 541.0v3.4" fill="none" stroke="#1a1a1a" stroke-width="1.5"/><circle cx="411.1" cy="541.0" r="0.9" fill="#1a1a1a"/><path d="M420 540.1h4l-2 2.2z" fill="#5a6478"/><rect x="427" y="534.7" width="0.8" height="13" fill="#8c99b3"/><rect x="427.8" y="534.7" width="0.6" height="13" fill="#d6deeb"/><text x="432.4" y="544.3" textLength="8.6" lengthAdjust="spacingAndGlyphs" font-weight="bold" font-size="9" fill="#12208a" font-style="italic" font-family='"Liberation Serif",serif'>M</text><rect x="447.4" y="536.5" width="9.8" height="8.6" fill="#fff" stroke="#1838a0" stroke-width="0.9"/><circle cx="452.6" cy="540.9" r="2.6" fill="#38b8a8"/><circle cx="451.6" cy="539.9" r="1.2" fill="#e03030"/><path d="M463.6 547.2h2.6l-1.3 1.5z" fill="#8a93a8"/><rect x="469.4" y="537.1" width="1.8" height="1.2" fill="#5c6b88"/><rect x="469.4" y="539.3000000000001" width="1.8" height="1.2" fill="#5c6b88"/><rect x="469.4" y="541.5" width="1.8" height="1.2" fill="#5c6b88"/><rect x="469.4" y="543.7" width="1.8" height="1.2" fill="#5c6b88"/><rect x="475.2" y="534" width="15" height="14.6" fill="#fbe6a2" stroke="#e0b060" stroke-width="0.6"/><path d="M480.4 536.1v8.6l2.1-1.9 1.7 3.4 1.1-.5-1.6-3.3h2.8z" fill="#fff" stroke="#111" stroke-width="0.7"/><path d="M497 536.1v9.6M492.2 540.9h9.6" fill="none" stroke="#111" stroke-width="1.1"/><path d="M497 535.5l-1.8 2.2h3.6zM497 546.3l-1.8-2.2h3.6zM491.59999999999997 540.9l2.2-1.8v3.6zM502.40000000000003 540.9l-2.2-1.8v3.6z" fill="#111"/><circle cx="497" cy="540.9" r="1.8" fill="none" stroke="#111" stroke-width="0.8"/><path d="M514.4 541.3a3.6 3.6 0 1 1-3.2-2" fill="none" stroke="#111" stroke-width="1.2"/><path d="M510 537.5l2.8 1.4-2.4 1.8z" fill="#111"/><path d="M527 536.1v9.6M522.2 540.9h9.6" fill="none" stroke="#111" stroke-width="1.1"/><path d="M527 535.5l-1.8 2.2h3.6zM527 546.3l-1.8-2.2h3.6zM521.6 540.9l2.2-1.8v3.6zM532.4 540.9l-2.2-1.8v3.6z" fill="#111"/><path d="M537.4 539.3v-2.4h2.4M544.6 539.3v-2.4h-2.4M537.4 542.6999999999999v2.4h2.4M544.6 542.6999999999999v2.4h-2.4" fill="none" stroke="#111" stroke-width="1"/><path d="M539.4 539.4l3.2 3.2M542.6 539.4l-3.2 3.2" fill="none" stroke="#111" stroke-width="0.9"/><path d="M559.6 537.5l-7.6 3.4 7.6 3.4" fill="none" stroke="#111" stroke-width="1.1"/><path d="M555.4 539.1999999999999c1 1 1 2.4 0 3.4" fill="none" stroke="#111" stroke-width="0.8"/><path d="M565.6 543.9h7M566.6 540.9l2-3h4" fill="none" stroke="#111" stroke-width="1"/><path d="M565.6 540.9h7" fill="none" stroke="#111" stroke-width="0.9"/>
<rect x="584.8" y="97.3" width="376" height="9.4" fill="#e2e2e2"/>
<text x="784" y="104.7" textLength="30" lengthAdjust="spacingAndGlyphs" font-weight="bold" text-anchor="middle" fill="#111">General</text>
<rect x="584.8" y="132.7" width="376" height="9.4" fill="#e2e2e2"/>
<text x="784" y="140.1" textLength="66" lengthAdjust="spacingAndGlyphs" font-weight="bold" text-anchor="middle" fill="#111">Bibliographic data</text>
<rect x="584.8" y="190.6" width="376" height="9.2" fill="#e2e2e2"/>
<text x="784" y="198.0" textLength="39.5" lengthAdjust="spacingAndGlyphs" font-weight="bold" text-anchor="middle" fill="#111">Phase data</text>
<rect x="584.8" y="111.2" width="61.6" height="9.7" fill="#e5e5e5"/>
<text x="586.8" y="118.95" textLength="22.3" lengthAdjust="spacingAndGlyphs" font-weight="bold" fill="#111">Origin</text>
<rect x="584.8" y="147.2" width="61.6" height="10.2" fill="#e5e5e5"/>
<text x="586.8" y="155.2" textLength="35" lengthAdjust="spacingAndGlyphs" font-weight="bold" fill="#111">Author(s)</text>
<rect x="584.8" y="157.9" width="61.6" height="10.2" fill="#e5e5e5"/>
<text x="586.8" y="165.9" textLength="58.5" lengthAdjust="spacingAndGlyphs" font-weight="bold" fill="#111">Publication title</text>
<rect x="584.8" y="168.6" width="61.6" height="9.8" fill="#e5e5e5"/>
<text x="586.8" y="176.4" textLength="28.5" lengthAdjust="spacingAndGlyphs" font-weight="bold" fill="#111">Citation</text>
<rect x="584.8" y="204.2" width="61.6" height="9.6" fill="#e5e5e5"/>
<text x="586.8" y="211.9" textLength="47.5" lengthAdjust="spacingAndGlyphs" font-weight="bold" fill="#111">Space-group</text>
<rect x="584.8" y="214.8" width="61.6" height="32" fill="#e5e5e5"/>
<text x="586.8" y="233.70000000000002" textLength="13.5" lengthAdjust="spacingAndGlyphs" font-weight="bold" fill="#111">Cell</text>
<text x="651.4" y="118.8" textLength="49.2" lengthAdjust="spacingAndGlyphs" fill="#1a1a1a">COD: 9000684</text>
<text x="651.4" y="154.8" textLength="92" lengthAdjust="spacingAndGlyphs" fill="#1a1a1a">Hazen, R. M.; Finger, L. W.</text>
<text x="651.4" y="165.7" textLength="320" lengthAdjust="spacingAndGlyphs" fill="#1a1a1a">Crystal structure and compressibility of zircon at high pressure crystal No. 1, 1 atm - before</text>
<text x="651.4" y="176.4" textLength="148" lengthAdjust="spacingAndGlyphs" fill="#1a1a1a">American Mineralogist, 64, 196-201 (1979)</text>
<text x="651.4" y="211.8" textLength="98.6" lengthAdjust="spacingAndGlyphs" fill="#1a1a1a">I 41/a m d (141) - tetragonal</text>
<text x="651.4" y="222.5" textLength="79.8" lengthAdjust="spacingAndGlyphs" fill="#1a1a1a">a=6.6042 Å c=5.9796 Å</text>
<text x="651.4" y="233.2" textLength="38.6" lengthAdjust="spacingAndGlyphs" fill="#1a1a1a">c/a=0.9054</text>
<text x="651.4" y="244.8" fill="#1a1a1a" textLength="42.9" lengthAdjust="spacingAndGlyphs">V=260.80 Å<tspan dy="-2.8" font-size="6.2">3</tspan></text>
<rect x="577.4" y="247.5" width="383" height="7.5" fill="url(#shd)"/>
<rect x="572.2" y="254.7" width="389" height="308" fill="#26262b"/>
<rect x="573.1" y="255.9" width="388" height="304.1" fill="#f0f0f0"/>
<rect x="573.1" y="255.9" width="388" height="20.1" fill="#fff"/>
<text x="578.8" y="269" textLength="68" lengthAdjust="spacingAndGlyphs" font-size="9.6" fill="#111">POV-Ray Sequence</text>
<path d="M947.1 262l6.8 6.8m0-6.8l-6.8 6.8" fill="none" stroke="#222" stroke-width="0.9"/>
<text x="580.8" y="290.6" textLength="184.6" lengthAdjust="spacingAndGlyphs" font-size="7.6">14 POV-Ray scenes have been collected for this function.</text>
<text x="580.8" y="299.5" textLength="365.4" lengthAdjust="spacingAndGlyphs" font-size="7.6">All pictures are selected as frames. You can use "Choose Frames" to define which frames are to be considered for</text>
<text x="580.8" y="308.2" textLength="177.5" lengthAdjust="spacingAndGlyphs" font-size="7.6">the creation of the POV-Ray, bitmap and/or video files.</text>
<rect x="580.8" y="321.5" width="371" height="0.9" fill="#d9d9d9"/>
<rect x="580.6" y="328" width="8.6" height="8.6" fill="#fff" stroke="#333" stroke-width="0.8"/>
<text x="590.8" y="335.2" textLength="124.4" lengthAdjust="spacingAndGlyphs" font-size="7.6">Create a series of POV-Ray scene files</text>
<rect x="580.6" y="342.8" width="8.6" height="8.6" fill="#fff" stroke="#333" stroke-width="0.8"/><path d="M582.3000000000001 347.2l2.1 2.2l3.6 -4.4" fill="none" stroke="#222" stroke-width="0.9"/>
<text x="590.8" y="350" textLength="97" lengthAdjust="spacingAndGlyphs" font-size="7.6">Create a series of bitmap files</text>
<rect x="580.6" y="357.3" width="8.6" height="8.6" fill="#fff" stroke="#333" stroke-width="0.8"/>
<text x="590.8" y="364.3" textLength="57.7" lengthAdjust="spacingAndGlyphs" font-size="7.6">Create an AVI file</text>
<text x="755" y="350" textLength="24.3" lengthAdjust="spacingAndGlyphs" font-size="7.6">Format:</text>
<rect x="784.9" y="339.2" width="169.2" height="14" fill="#e4e4e4" stroke="#adadad" stroke-width="0.8"/>
<text x="788.3" y="349.6" textLength="73.6" lengthAdjust="spacingAndGlyphs" font-size="7.6">Windows Bitmap (BMP)</text>
<path d="M944.8 345.2l2.6 2.6 2.6-2.6" fill="none" stroke="#444" stroke-width="0.8"/>
<text x="592.4" y="380.4" textLength="15" lengthAdjust="spacingAndGlyphs" font-size="7.6">Size:</text>
<rect x="611.2" y="370" width="161.6" height="14" fill="#e4e4e4" stroke="#adadad" stroke-width="0.8"/>
<text x="614.7" y="380.4" textLength="88.6" lengthAdjust="spacingAndGlyphs" font-size="7.6">Window size (829 x 658 px)</text>
<path d="M763.4 376l2.6 2.6 2.6-2.6" fill="none" stroke="#444" stroke-width="0.8"/>
<text x="784.6" y="380.4" textLength="44.4" lengthAdjust="spacingAndGlyphs" font-size="7.6">Width (pixel):</text>
<rect x="829.8" y="370.5" width="39.8" height="14.7" fill="#fff" stroke="#7a7a7a" stroke-width="0.8"/>
<text x="833.6" y="380.4" textLength="12.4" lengthAdjust="spacingAndGlyphs" font-size="7.6">829</text>
<text x="875.7" y="380.4" textLength="23.6" lengthAdjust="spacingAndGlyphs" font-size="7.6">Height:</text>
<rect x="913.8" y="370.5" width="40.2" height="14.7" fill="#fff" stroke="#7a7a7a" stroke-width="0.8"/>
<text x="918.4" y="380.4" textLength="12.4" lengthAdjust="spacingAndGlyphs" font-size="7.6">658</text>
<text x="592.4" y="397" textLength="148.3" lengthAdjust="spacingAndGlyphs" font-size="7.6">Note: The structure picture's layout setting is:</text>
<text x="592.4" y="406.3" textLength="75" lengthAdjust="spacingAndGlyphs" font-size="7.6">Window (829 x 658 px).</text>
<rect x="785.4" y="391.6" width="8.6" height="8.6" fill="#fff" stroke="#333" stroke-width="0.8"/><path d="M787.1 396.0l2.1 2.2l3.6 -4.4" fill="none" stroke="#222" stroke-width="0.9"/>
<text x="796" y="399" textLength="39" lengthAdjust="spacingAndGlyphs" font-size="7.6">Anti-aliasing</text>
<text x="875.7" y="399" textLength="35" lengthAdjust="spacingAndGlyphs" font-size="7.6">Threshold:</text>
<rect x="913.6" y="390.4" width="40.4" height="14" fill="#fff" stroke="#7a7a7a" stroke-width="0.8"/>
<text x="918.4" y="399.6" textLength="11.6" lengthAdjust="spacingAndGlyphs" font-family='"Liberation Mono",monospace' font-size="6.9">0.3</text>
<text x="592.4" y="441" textLength="63.8" lengthAdjust="spacingAndGlyphs" font-size="7.6">Frames per second:</text>
<rect x="668.6" y="430.2" width="38.8" height="15" fill="#f4f4f4" stroke="#c6c6c6" stroke-width="0.8"/>
<text x="672.6" y="440.4" textLength="8.2" lengthAdjust="spacingAndGlyphs" font-size="7.6" fill="#8a8a8a">20</text>
<rect x="697.5" y="431.2" width="9.4" height="12.8" fill="#f0f0f0" stroke="#c8c8c8" stroke-width="0.6"/>
<path d="M700.3 436.2l1.9-2 1.9 2zM700.3 439.4l1.9 2 1.9-2z" fill="#666"/>
<text x="755" y="441" textLength="67.8" lengthAdjust="spacingAndGlyphs" font-size="7.6">Quality (best = 100):</text>
<rect x="830.4" y="430.2" width="39.2" height="15" fill="#f4f4f4" stroke="#c6c6c6" stroke-width="0.8"/>
<text x="834.4" y="440.4" textLength="12.4" lengthAdjust="spacingAndGlyphs" font-size="7.6" fill="#8a8a8a">100</text>
<rect x="859.7" y="431.2" width="9.4" height="12.8" fill="#f0f0f0" stroke="#c8c8c8" stroke-width="0.6"/>
<path d="M862.5 436.2l1.9-2 1.9 2zM862.5 439.4l1.9 2 1.9-2z" fill="#666"/>
<text x="592.4" y="458.2" textLength="70.3" lengthAdjust="spacingAndGlyphs" font-size="7.6">Compression handler:</text>
<rect x="668.6" y="449.8" width="200.2" height="12.4" fill="#cfcfcf" stroke="#bdbdbd" stroke-width="0.8"/>
<text x="671.8" y="458.2" textLength="59" lengthAdjust="spacingAndGlyphs" font-size="7.6" fill="#7d7d7d">&lt;no compression&gt;</text>
<path d="M859 454.6l2.6 2.6 2.6-2.6" fill="none" stroke="#9a9a9a" stroke-width="0.8"/>
<text x="592.4" y="476.6" textLength="27.2" lengthAdjust="spacingAndGlyphs" font-size="7.6">File title:</text>
<rect x="625" y="467.1" width="173.5" height="13.5" fill="#fff" stroke="#0078d7" stroke-width="0.9"/>
<rect x="628.2" y="469.4" width="24.8" height="8.8" fill="#0078d7"/>
<text x="629.2" y="476.4" textLength="22.6" lengthAdjust="spacingAndGlyphs" font-size="7.6" fill="#fff">Zircon-</text>
<path d="M789.6 472.4l2.6 2.6 2.6-2.6" fill="none" stroke="#444" stroke-width="0.8"/>
<rect x="806.8" y="467.4" width="62" height="13" fill="#e1e1e1" stroke="#a6a6a6" stroke-width="0.8"/><text x="837.8" y="476.59999999999997" textLength="45.5" lengthAdjust="spacingAndGlyphs" text-anchor="middle" font-size="7.6">File location...</text>
<text x="592.4" y="491.6" textLength="329.2" lengthAdjust="spacingAndGlyphs" font-size="7.6">This will create (for all 14 frames) in the target folder "C:\Temp\POV-Ray-Sequenzen\": 14 bitmap files</text>
<text x="592.4" y="500.5" textLength="65" lengthAdjust="spacingAndGlyphs" font-size="7.6">(Zircon-NNNN.bmp).</text>
<rect x="580.8" y="516.8" width="371" height="0.9" fill="#d9d9d9"/>
<rect x="581" y="523.3" width="8.6" height="8.6" fill="#fff" stroke="#333" stroke-width="0.8"/><path d="M582.7 527.6999999999999l2.1 2.2l3.6 -4.4" fill="none" stroke="#222" stroke-width="0.9"/>
<text x="591" y="530.3" textLength="153" lengthAdjust="spacingAndGlyphs" font-size="7.6">Show POV-Ray Render Window while rendering</text>
<rect x="772.6" y="523.3" width="8.6" height="8.6" fill="#fff" stroke="#333" stroke-width="0.8"/><path d="M774.3000000000001 527.6999999999999l2.1 2.2l3.6 -4.4" fill="none" stroke="#222" stroke-width="0.9"/>
<text x="783.4" y="530.3" textLength="108.6" lengthAdjust="spacingAndGlyphs" font-size="7.6">Open graphics file after rendering</text>
<rect x="581" y="538.6" width="71.5" height="13" fill="#e1e1e1" stroke="#a6a6a6" stroke-width="0.8"/><text x="616.75" y="547.8000000000001" textLength="57" lengthAdjust="spacingAndGlyphs" text-anchor="middle" font-size="7.6">Choose Frames...</text>
<rect x="656.2" y="538.6" width="59.5" height="13" fill="#e1e1e1" stroke="#a6a6a6" stroke-width="0.8"/><text x="685.95" y="547.8000000000001" textLength="33.5" lengthAdjust="spacingAndGlyphs" text-anchor="middle" font-size="7.6">Preview...</text>
<rect x="715.7" y="538.6" width="10.8" height="13" fill="#e1e1e1" stroke="#a6a6a6" stroke-width="0.8"/><text x="721.1" y="547.8000000000001" text-anchor="middle" font-size="7.6"></text>
<path d="M718.9 544h4.4l-2.2 2.5z" fill="#222"/>
<rect x="731.4" y="538.6" width="70.3" height="13" fill="#e1e1e1" stroke="#a6a6a6" stroke-width="0.8"/><text x="766.55" y="547.8000000000001" textLength="39.5" lengthAdjust="spacingAndGlyphs" text-anchor="middle" font-size="7.6">Render Now</text>
<rect x="805.8" y="538.6" width="70" height="13" fill="#e1e1e1" stroke="#a6a6a6" stroke-width="0.8"/><text x="840.8" y="547.8000000000001" textLength="46.5" lengthAdjust="spacingAndGlyphs" text-anchor="middle" font-size="7.6">Open Folder...</text>
<rect x="904" y="538.6" width="49" height="13" fill="#e1e1e1" stroke="#a6a6a6" stroke-width="0.8"/><text x="928.5" y="547.8000000000001" textLength="18.5" lengthAdjust="spacingAndGlyphs" text-anchor="middle" font-size="7.6">Close</text>
<rect x="592.4" y="442.2" width="3.6" height="0.6" fill="#222"/>
<rect x="755" y="442.2" width="5" height="0.6" fill="#222"/>
<rect x="784.6" y="381.6" width="6.2" height="0.6" fill="#222"/>
<rect x="875.7" y="381.6" width="4.8" height="0.6" fill="#222"/>
<rect x="796" y="400.2" width="4.6" height="0.6" fill="#222"/>
<rect x="875.7" y="400.2" width="4" height="0.6" fill="#222"/>
<rect x="827.6" y="477.8" width="1.6" height="0.6" fill="#222"/>
<rect x="591" y="531.5" width="4.3" height="0.6" fill="#222"/>
<rect x="783.4" y="531.5" width="5.2" height="0.6" fill="#222"/>
<rect x="680.6" y="548.5" width="3.6" height="0.6" fill="#222"/>
<rect x="746.8" y="548.5" width="4.8" height="0.6" fill="#222"/>
</svg></body></html>
